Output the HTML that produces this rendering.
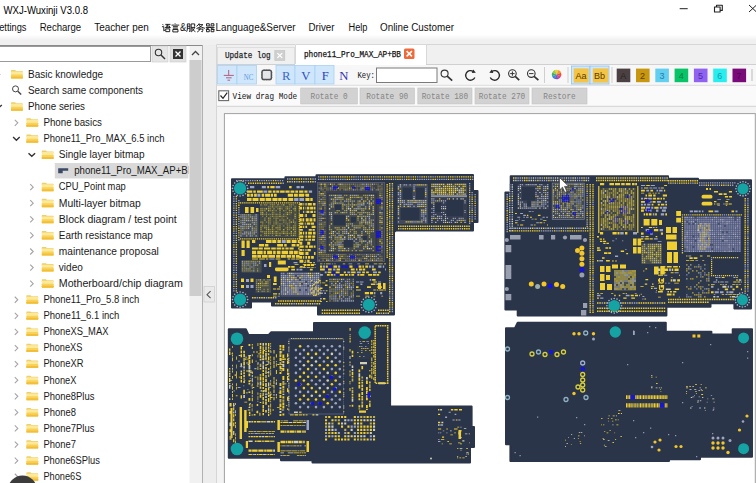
<!DOCTYPE html>
<html><head><meta charset="utf-8"><title>WXJ-Wuxinji V3.0.8</title>
<style>
html,body{margin:0;padding:0;background:#f0f0f0;overflow:hidden}
body{width:756px;height:483px;position:relative;font-family:"Liberation Sans", sans-serif;}
svg{position:absolute;left:0;top:0;display:block}
</style></head><body>
<svg width="756" height="483" viewBox="0 0 756 483">
<rect x="0" y="0" width="756" height="483" fill="#f0f0f0"/>
<defs><linearGradient id="mg" x1="0" y1="0" x2="0" y2="1"><stop offset="0" stop-color="#fff"/><stop offset="1" stop-color="#f0f0f0"/></linearGradient></defs>
<rect x="0" y="0" width="756" height="35" fill="#ffffff"/><rect x="0" y="34.5" width="756" height="6" fill="url(#mg)"/>
<text x="3.5" y="10" font-family='"Liberation Sans", sans-serif' font-size="10" fill="#000" dominant-baseline="central" textLength="84.5" lengthAdjust="spacingAndGlyphs" >WXJ-Wuxinji V3.0.8</text>
<path d="M679.7 8.7h8" stroke="#222" stroke-width="1" fill="none"/>
<path d="M714.5 7h5.6v5h-5.6z M716.5 7v-1.8h5.8v5.2h-2.2" stroke="#222" stroke-width="1.1" fill="none" stroke-linejoin="round"/>
<path d="M749 5l7.5 7M756.5 5l-7.5 7" stroke="#222" stroke-width="1" fill="none"/>
<text x="-7" y="27.5" font-family='"Liberation Sans", sans-serif' font-size="10" fill="#111" dominant-baseline="central" textLength="33.5" lengthAdjust="spacingAndGlyphs" >Settings</text>
<text x="39.7" y="27.5" font-family='"Liberation Sans", sans-serif' font-size="10" fill="#111" dominant-baseline="central" textLength="41.5" lengthAdjust="spacingAndGlyphs" >Recharge</text>
<text x="94.2" y="27.5" font-family='"Liberation Sans", sans-serif' font-size="10" fill="#111" dominant-baseline="central" textLength="54.5" lengthAdjust="spacingAndGlyphs" >Teacher pen</text>
<path transform="translate(161.6 23) scale(0.9199999999999999)" d="M1 1.3l1.2 1.2M.4 4h2v4.6l1.5-1.3M4 1.5h5.6M6.6 1.5L5.6 5M4.6 3.3h4v1.7M3.6 5h6.3M4.5 6.4h4.3v3h-4.3z" fill="none" stroke="#111" stroke-width="1.0"/>
<path transform="translate(170.8 23) scale(0.9199999999999999)" d="M4.5 .4l1 1M.8 2.3h8.4M2.3 4h5.4M2.3 5.6h5.4M2.2 7.1h5.6v2.6h-5.6z" fill="none" stroke="#111" stroke-width="1.0"/>
<text x="180" y="27.5" font-family='"Liberation Sans", sans-serif' font-size="10" fill="#111" dominant-baseline="central" textLength="6.2" lengthAdjust="spacingAndGlyphs" >&amp;</text>
<path transform="translate(186.4 23) scale(0.9199999999999999)" d="M1 1h2.8v8.4l-.8-.5M1 1v5.5q0 2-.8 3M1 3.5h2.8M1 5.8h2.8M5.2 1h3.8v2.5l-.8-.2M5.2 1v8.6M5.2 4.8h4.3M9 4.8q-1 3-3.5 4.7M6 5.5q1.5 3 3.8 4" fill="none" stroke="#111" stroke-width="1.0"/>
<path transform="translate(196 23) scale(0.9199999999999999)" d="M3.5 .4q-1 2-3 3.3M3 1.8h4.5q-2 3-7 4.2M3.2 2.6q2.5 2.4 6.5 3.2M2 6.6h5.5q0 2-.7 3l-1-.4M4.6 5.3q0 3-3.3 4.5" fill="none" stroke="#111" stroke-width="1.0"/>
<path transform="translate(205.6 23) scale(0.9199999999999999)" d="M1 .8h3v2.4h-3zM6 .8h3v2.4h-3zM.3 4.8h9.4M5 3.6q-1 2.5-4.7 3.2M5 4.8q1.5 1.8 4.7 2.2M1 7h3v2.5h-3zM6 7h3v2.5h-3z" fill="none" stroke="#111" stroke-width="1.0"/>
<text x="215.5" y="27.5" font-family='"Liberation Sans", sans-serif' font-size="10" fill="#111" dominant-baseline="central" textLength="80" lengthAdjust="spacingAndGlyphs" >Language&amp;Server</text>
<text x="308.5" y="27.5" font-family='"Liberation Sans", sans-serif' font-size="10" fill="#111" dominant-baseline="central" textLength="26" lengthAdjust="spacingAndGlyphs" >Driver</text>
<text x="348.5" y="27.5" font-family='"Liberation Sans", sans-serif' font-size="10" fill="#111" dominant-baseline="central" textLength="19" lengthAdjust="spacingAndGlyphs" >Help</text>
<text x="380" y="27.5" font-family='"Liberation Sans", sans-serif' font-size="10" fill="#111" dominant-baseline="central" textLength="74" lengthAdjust="spacingAndGlyphs" >Online Customer</text>
<rect x="0" y="45" width="202" height="438" fill="#ffffff"/>
<path d="M0 45.5H202.3" stroke="#8a8a8a" stroke-width="1" fill="none"/><path d="M202.3 45V483" stroke="#a2a2a2" stroke-width="1" fill="none"/>
<rect x="-1" y="46.5" width="151.5" height="15" fill="#fff" stroke="#9a9a9a" stroke-width="1"/>
<rect x="152" y="46" width="16" height="16" fill="#e6e6e6" stroke="#c8c8c8" stroke-width="0.6"/>
<circle cx="158.5" cy="52.5" r="3.2" fill="none" stroke="#333" stroke-width="1.1"/><path d="M161 55l4 4" stroke="#333" stroke-width="1.5"/>
<rect x="170" y="46" width="16" height="16" fill="#e0e0e0" stroke="#c8c8c8" stroke-width="0.6"/>
<rect x="173" y="49" width="10" height="10" fill="#333"/><path d="M175.5 51.5l5 5M180.5 51.5l-5 5" stroke="#fff" stroke-width="1.4"/>
<rect x="189.5" y="46" width="12.5" height="437" fill="#f1f1f1"/>
<rect x="189.5" y="60" width="12" height="236" fill="#cdcdcd"/>
<path d="M192 55l3.5-3.5l3.5 3.5" stroke="#444" stroke-width="1.3" fill="none"/>
<path d="M11.0 72.3v-1.7q0-.5 .5-.5h3.6l1 .9h6.2q.5 0 .5 .5v.8z" fill="#efcf6a"/><rect x="11.0" y="71.6" width="11.8" height="6.9" rx=".6" fill="#fce99a"/><rect x="11.0" y="74.5" width="11.8" height="4" rx=".6" fill="#f8d25a"/><rect x="11.0" y="76.5" width="11.8" height="2" rx=".5" fill="#f3bf38"/>
<path d="M-3.1 71.5l3 3l-3 3" stroke="#a4a4a4" stroke-width="1.1" fill="none"/>
<text x="28.0" y="74.3" font-family='"Liberation Sans", sans-serif' font-size="10" fill="#1a1a1a" dominant-baseline="central" textLength="75" lengthAdjust="spacingAndGlyphs" >Basic knowledge</text>
<circle cx="15.5" cy="88.89" r="3" fill="none" stroke="#444" stroke-width="1"/><path d="M17.8 91.19l3.4 3.4" stroke="#444" stroke-width="1.4"/>
<text x="28.0" y="90.39" font-family='"Liberation Sans", sans-serif' font-size="10" fill="#1a1a1a" dominant-baseline="central" textLength="115" lengthAdjust="spacingAndGlyphs" >Search same components</text>
<path d="M11.0 104.47999999999999v-1.7q0-.5 .5-.5h3.6l1 .9h6.2q.5 0 .5 .5v.8z" fill="#efcf6a"/><rect x="11.0" y="103.77999999999999" width="11.8" height="6.9" rx=".6" fill="#fce99a"/><rect x="11.0" y="106.67999999999999" width="11.8" height="4" rx=".6" fill="#f8d25a"/><rect x="11.0" y="108.67999999999999" width="11.8" height="2" rx=".5" fill="#f3bf38"/>
<path d="M-4.8 104.88l3.3 3.2l3.3-3.2" stroke="#333" stroke-width="1.4" fill="none"/>
<text x="28.0" y="106.47999999999999" font-family='"Liberation Sans", sans-serif' font-size="10" fill="#1a1a1a" dominant-baseline="central" textLength="57" lengthAdjust="spacingAndGlyphs" >Phone series</text>
<path d="M26.4 120.57v-1.7q0-.5 .5-.5h3.6l1 .9h6.2q.5 0 .5 .5v.8z" fill="#efcf6a"/><rect x="26.4" y="119.86999999999999" width="11.8" height="6.9" rx=".6" fill="#fce99a"/><rect x="26.4" y="122.77" width="11.8" height="4" rx=".6" fill="#f8d25a"/><rect x="26.4" y="124.77" width="11.8" height="2" rx=".5" fill="#f3bf38"/>
<path d="M14.799999999999999 119.77l3 3l-3 3" stroke="#a4a4a4" stroke-width="1.1" fill="none"/>
<text x="43.4" y="122.57" font-family='"Liberation Sans", sans-serif' font-size="10" fill="#1a1a1a" dominant-baseline="central" textLength="58.5" lengthAdjust="spacingAndGlyphs" >Phone basics</text>
<path d="M26.4 136.66v-1.7q0-.5 .5-.5h3.6l1 .9h6.2q.5 0 .5 .5v.8z" fill="#efcf6a"/><rect x="26.4" y="135.96" width="11.8" height="6.9" rx=".6" fill="#fce99a"/><rect x="26.4" y="138.85999999999999" width="11.8" height="4" rx=".6" fill="#f8d25a"/><rect x="26.4" y="140.85999999999999" width="11.8" height="2" rx=".5" fill="#f3bf38"/>
<path d="M13.099999999999998 137.06l3.3 3.2l3.3-3.2" stroke="#333" stroke-width="1.4" fill="none"/>
<text x="43.4" y="138.66" font-family='"Liberation Sans", sans-serif' font-size="10" fill="#1a1a1a" dominant-baseline="central" textLength="121" lengthAdjust="spacingAndGlyphs" >Phone11_Pro_MAX_6.5 inch</text>
<path d="M41.8 152.75v-1.7q0-.5 .5-.5h3.6l1 .9h6.2q.5 0 .5 .5v.8z" fill="#efcf6a"/><rect x="41.8" y="152.05" width="11.8" height="6.9" rx=".6" fill="#fce99a"/><rect x="41.8" y="154.95" width="11.8" height="4" rx=".6" fill="#f8d25a"/><rect x="41.8" y="156.95" width="11.8" height="2" rx=".5" fill="#f3bf38"/>
<path d="M28.499999999999996 153.15l3.3 3.2l3.3-3.2" stroke="#333" stroke-width="1.4" fill="none"/>
<text x="58.8" y="154.75" font-family='"Liberation Sans", sans-serif' font-size="10" fill="#1a1a1a" dominant-baseline="central" textLength="85.7" lengthAdjust="spacingAndGlyphs" >Single layer bitmap</text>
<rect x="54.8" y="163.03999999999996" width="133.6" height="15.4" fill="#d9d9d9"/>
<clipPath id="cpf"><rect x="54.8" y="162.83999999999997" width="133.6" height="16"/></clipPath>
<path d="M58.2 168.33999999999997h10v2.5h-5.5v2.5h-4.5z" fill="#3c4a66"/>
<text x="74.2" y="170.83999999999997" font-family='"Liberation Sans", sans-serif' font-size="10" fill="#1a1a1a" dominant-baseline="central" textLength="120" lengthAdjust="spacingAndGlyphs" clip-path="url(#cpf)">phone11_Pro_MAX_AP+BB</text>
<path d="M41.8 184.93v-1.7q0-.5 .5-.5h3.6l1 .9h6.2q.5 0 .5 .5v.8z" fill="#efcf6a"/><rect x="41.8" y="184.23000000000002" width="11.8" height="6.9" rx=".6" fill="#fce99a"/><rect x="41.8" y="187.13" width="11.8" height="4" rx=".6" fill="#f8d25a"/><rect x="41.8" y="189.13" width="11.8" height="2" rx=".5" fill="#f3bf38"/>
<path d="M30.199999999999996 184.13l3 3l-3 3" stroke="#a4a4a4" stroke-width="1.1" fill="none"/>
<text x="58.8" y="186.93" font-family='"Liberation Sans", sans-serif' font-size="10" fill="#1a1a1a" dominant-baseline="central" textLength="67" lengthAdjust="spacingAndGlyphs" >CPU_Point map</text>
<path d="M41.8 201.01999999999998v-1.7q0-.5 .5-.5h3.6l1 .9h6.2q.5 0 .5 .5v.8z" fill="#efcf6a"/><rect x="41.8" y="200.32" width="11.8" height="6.9" rx=".6" fill="#fce99a"/><rect x="41.8" y="203.21999999999997" width="11.8" height="4" rx=".6" fill="#f8d25a"/><rect x="41.8" y="205.21999999999997" width="11.8" height="2" rx=".5" fill="#f3bf38"/>
<path d="M30.199999999999996 200.21999999999997l3 3l-3 3" stroke="#a4a4a4" stroke-width="1.1" fill="none"/>
<text x="58.8" y="203.01999999999998" font-family='"Liberation Sans", sans-serif' font-size="10" fill="#1a1a1a" dominant-baseline="central" textLength="82" lengthAdjust="spacingAndGlyphs" >Multi-layer bitmap</text>
<path d="M41.8 217.11v-1.7q0-.5 .5-.5h3.6l1 .9h6.2q.5 0 .5 .5v.8z" fill="#efcf6a"/><rect x="41.8" y="216.41000000000003" width="11.8" height="6.9" rx=".6" fill="#fce99a"/><rect x="41.8" y="219.31" width="11.8" height="4" rx=".6" fill="#f8d25a"/><rect x="41.8" y="221.31" width="11.8" height="2" rx=".5" fill="#f3bf38"/>
<path d="M30.199999999999996 216.31l3 3l-3 3" stroke="#a4a4a4" stroke-width="1.1" fill="none"/>
<text x="58.8" y="219.11" font-family='"Liberation Sans", sans-serif' font-size="10" fill="#1a1a1a" dominant-baseline="central" textLength="118" lengthAdjust="spacingAndGlyphs" >Block diagram / test point</text>
<path d="M41.8 233.2v-1.7q0-.5 .5-.5h3.6l1 .9h6.2q.5 0 .5 .5v.8z" fill="#efcf6a"/><rect x="41.8" y="232.5" width="11.8" height="6.9" rx=".6" fill="#fce99a"/><rect x="41.8" y="235.39999999999998" width="11.8" height="4" rx=".6" fill="#f8d25a"/><rect x="41.8" y="237.39999999999998" width="11.8" height="2" rx=".5" fill="#f3bf38"/>
<path d="M30.199999999999996 232.39999999999998l3 3l-3 3" stroke="#a4a4a4" stroke-width="1.1" fill="none"/>
<text x="58.8" y="235.2" font-family='"Liberation Sans", sans-serif' font-size="10" fill="#1a1a1a" dominant-baseline="central" textLength="94" lengthAdjust="spacingAndGlyphs" >Earth resistance map</text>
<path d="M41.8 249.29000000000002v-1.7q0-.5 .5-.5h3.6l1 .9h6.2q.5 0 .5 .5v.8z" fill="#efcf6a"/><rect x="41.8" y="248.59000000000003" width="11.8" height="6.9" rx=".6" fill="#fce99a"/><rect x="41.8" y="251.49" width="11.8" height="4" rx=".6" fill="#f8d25a"/><rect x="41.8" y="253.49" width="11.8" height="2" rx=".5" fill="#f3bf38"/>
<path d="M30.199999999999996 248.49l3 3l-3 3" stroke="#a4a4a4" stroke-width="1.1" fill="none"/>
<text x="58.8" y="251.29000000000002" font-family='"Liberation Sans", sans-serif' font-size="10" fill="#1a1a1a" dominant-baseline="central" textLength="100" lengthAdjust="spacingAndGlyphs" >maintenance proposal</text>
<path d="M41.8 265.38v-1.7q0-.5 .5-.5h3.6l1 .9h6.2q.5 0 .5 .5v.8z" fill="#efcf6a"/><rect x="41.8" y="264.68" width="11.8" height="6.9" rx=".6" fill="#fce99a"/><rect x="41.8" y="267.58" width="11.8" height="4" rx=".6" fill="#f8d25a"/><rect x="41.8" y="269.58" width="11.8" height="2" rx=".5" fill="#f3bf38"/>
<path d="M30.199999999999996 264.58l3 3l-3 3" stroke="#a4a4a4" stroke-width="1.1" fill="none"/>
<text x="58.8" y="267.38" font-family='"Liberation Sans", sans-serif' font-size="10" fill="#1a1a1a" dominant-baseline="central" textLength="24" lengthAdjust="spacingAndGlyphs" >video</text>
<path d="M41.8 281.46999999999997v-1.7q0-.5 .5-.5h3.6l1 .9h6.2q.5 0 .5 .5v.8z" fill="#efcf6a"/><rect x="41.8" y="280.77" width="11.8" height="6.9" rx=".6" fill="#fce99a"/><rect x="41.8" y="283.66999999999996" width="11.8" height="4" rx=".6" fill="#f8d25a"/><rect x="41.8" y="285.66999999999996" width="11.8" height="2" rx=".5" fill="#f3bf38"/>
<path d="M30.199999999999996 280.66999999999996l3 3l-3 3" stroke="#a4a4a4" stroke-width="1.1" fill="none"/>
<text x="58.8" y="283.46999999999997" font-family='"Liberation Sans", sans-serif' font-size="10" fill="#1a1a1a" dominant-baseline="central" textLength="124" lengthAdjust="spacingAndGlyphs" >Motherboard/chip diagram</text>
<path d="M26.4 297.56v-1.7q0-.5 .5-.5h3.6l1 .9h6.2q.5 0 .5 .5v.8z" fill="#efcf6a"/><rect x="26.4" y="296.86" width="11.8" height="6.9" rx=".6" fill="#fce99a"/><rect x="26.4" y="299.76" width="11.8" height="4" rx=".6" fill="#f8d25a"/><rect x="26.4" y="301.76" width="11.8" height="2" rx=".5" fill="#f3bf38"/>
<path d="M14.799999999999999 296.76l3 3l-3 3" stroke="#a4a4a4" stroke-width="1.1" fill="none"/>
<text x="43.4" y="299.56" font-family='"Liberation Sans", sans-serif' font-size="10" fill="#1a1a1a" dominant-baseline="central" textLength="96" lengthAdjust="spacingAndGlyphs" >Phone11_Pro_5.8 inch</text>
<path d="M26.4 313.65v-1.7q0-.5 .5-.5h3.6l1 .9h6.2q.5 0 .5 .5v.8z" fill="#efcf6a"/><rect x="26.4" y="312.95" width="11.8" height="6.9" rx=".6" fill="#fce99a"/><rect x="26.4" y="315.84999999999997" width="11.8" height="4" rx=".6" fill="#f8d25a"/><rect x="26.4" y="317.84999999999997" width="11.8" height="2" rx=".5" fill="#f3bf38"/>
<path d="M14.799999999999999 312.84999999999997l3 3l-3 3" stroke="#a4a4a4" stroke-width="1.1" fill="none"/>
<text x="43.4" y="315.65" font-family='"Liberation Sans", sans-serif' font-size="10" fill="#1a1a1a" dominant-baseline="central" textLength="76" lengthAdjust="spacingAndGlyphs" >Phone11_6.1 inch</text>
<path d="M26.4 329.74v-1.7q0-.5 .5-.5h3.6l1 .9h6.2q.5 0 .5 .5v.8z" fill="#efcf6a"/><rect x="26.4" y="329.04" width="11.8" height="6.9" rx=".6" fill="#fce99a"/><rect x="26.4" y="331.94" width="11.8" height="4" rx=".6" fill="#f8d25a"/><rect x="26.4" y="333.94" width="11.8" height="2" rx=".5" fill="#f3bf38"/>
<path d="M14.799999999999999 328.94l3 3l-3 3" stroke="#a4a4a4" stroke-width="1.1" fill="none"/>
<text x="43.4" y="331.74" font-family='"Liberation Sans", sans-serif' font-size="10" fill="#1a1a1a" dominant-baseline="central" textLength="65" lengthAdjust="spacingAndGlyphs" >PhoneXS_MAX</text>
<path d="M26.4 345.83v-1.7q0-.5 .5-.5h3.6l1 .9h6.2q.5 0 .5 .5v.8z" fill="#efcf6a"/><rect x="26.4" y="345.13" width="11.8" height="6.9" rx=".6" fill="#fce99a"/><rect x="26.4" y="348.03" width="11.8" height="4" rx=".6" fill="#f8d25a"/><rect x="26.4" y="350.03" width="11.8" height="2" rx=".5" fill="#f3bf38"/>
<path d="M14.799999999999999 345.03l3 3l-3 3" stroke="#a4a4a4" stroke-width="1.1" fill="none"/>
<text x="43.4" y="347.83" font-family='"Liberation Sans", sans-serif' font-size="10" fill="#1a1a1a" dominant-baseline="central" textLength="39" lengthAdjust="spacingAndGlyphs" >PhoneXS</text>
<path d="M26.4 361.92v-1.7q0-.5 .5-.5h3.6l1 .9h6.2q.5 0 .5 .5v.8z" fill="#efcf6a"/><rect x="26.4" y="361.22" width="11.8" height="6.9" rx=".6" fill="#fce99a"/><rect x="26.4" y="364.12" width="11.8" height="4" rx=".6" fill="#f8d25a"/><rect x="26.4" y="366.12" width="11.8" height="2" rx=".5" fill="#f3bf38"/>
<path d="M14.799999999999999 361.12l3 3l-3 3" stroke="#a4a4a4" stroke-width="1.1" fill="none"/>
<text x="43.4" y="363.92" font-family='"Liberation Sans", sans-serif' font-size="10" fill="#1a1a1a" dominant-baseline="central" textLength="40" lengthAdjust="spacingAndGlyphs" >PhoneXR</text>
<path d="M26.4 378.01v-1.7q0-.5 .5-.5h3.6l1 .9h6.2q.5 0 .5 .5v.8z" fill="#efcf6a"/><rect x="26.4" y="377.31" width="11.8" height="6.9" rx=".6" fill="#fce99a"/><rect x="26.4" y="380.21" width="11.8" height="4" rx=".6" fill="#f8d25a"/><rect x="26.4" y="382.21" width="11.8" height="2" rx=".5" fill="#f3bf38"/>
<path d="M14.799999999999999 377.21l3 3l-3 3" stroke="#a4a4a4" stroke-width="1.1" fill="none"/>
<text x="43.4" y="380.01" font-family='"Liberation Sans", sans-serif' font-size="10" fill="#1a1a1a" dominant-baseline="central" textLength="33" lengthAdjust="spacingAndGlyphs" >PhoneX</text>
<path d="M26.4 394.1v-1.7q0-.5 .5-.5h3.6l1 .9h6.2q.5 0 .5 .5v.8z" fill="#efcf6a"/><rect x="26.4" y="393.40000000000003" width="11.8" height="6.9" rx=".6" fill="#fce99a"/><rect x="26.4" y="396.3" width="11.8" height="4" rx=".6" fill="#f8d25a"/><rect x="26.4" y="398.3" width="11.8" height="2" rx=".5" fill="#f3bf38"/>
<path d="M14.799999999999999 393.3l3 3l-3 3" stroke="#a4a4a4" stroke-width="1.1" fill="none"/>
<text x="43.4" y="396.1" font-family='"Liberation Sans", sans-serif' font-size="10" fill="#1a1a1a" dominant-baseline="central" textLength="51" lengthAdjust="spacingAndGlyphs" >Phone8Plus</text>
<path d="M26.4 410.19v-1.7q0-.5 .5-.5h3.6l1 .9h6.2q.5 0 .5 .5v.8z" fill="#efcf6a"/><rect x="26.4" y="409.49" width="11.8" height="6.9" rx=".6" fill="#fce99a"/><rect x="26.4" y="412.39" width="11.8" height="4" rx=".6" fill="#f8d25a"/><rect x="26.4" y="414.39" width="11.8" height="2" rx=".5" fill="#f3bf38"/>
<path d="M14.799999999999999 409.39l3 3l-3 3" stroke="#a4a4a4" stroke-width="1.1" fill="none"/>
<text x="43.4" y="412.19" font-family='"Liberation Sans", sans-serif' font-size="10" fill="#1a1a1a" dominant-baseline="central" textLength="32.5" lengthAdjust="spacingAndGlyphs" >Phone8</text>
<path d="M26.4 426.28000000000003v-1.7q0-.5 .5-.5h3.6l1 .9h6.2q.5 0 .5 .5v.8z" fill="#efcf6a"/><rect x="26.4" y="425.58000000000004" width="11.8" height="6.9" rx=".6" fill="#fce99a"/><rect x="26.4" y="428.48" width="11.8" height="4" rx=".6" fill="#f8d25a"/><rect x="26.4" y="430.48" width="11.8" height="2" rx=".5" fill="#f3bf38"/>
<path d="M14.799999999999999 425.48l3 3l-3 3" stroke="#a4a4a4" stroke-width="1.1" fill="none"/>
<text x="43.4" y="428.28000000000003" font-family='"Liberation Sans", sans-serif' font-size="10" fill="#1a1a1a" dominant-baseline="central" textLength="51" lengthAdjust="spacingAndGlyphs" >Phone7Plus</text>
<path d="M26.4 442.37v-1.7q0-.5 .5-.5h3.6l1 .9h6.2q.5 0 .5 .5v.8z" fill="#efcf6a"/><rect x="26.4" y="441.67" width="11.8" height="6.9" rx=".6" fill="#fce99a"/><rect x="26.4" y="444.57" width="11.8" height="4" rx=".6" fill="#f8d25a"/><rect x="26.4" y="446.57" width="11.8" height="2" rx=".5" fill="#f3bf38"/>
<path d="M14.799999999999999 441.57l3 3l-3 3" stroke="#a4a4a4" stroke-width="1.1" fill="none"/>
<text x="43.4" y="444.37" font-family='"Liberation Sans", sans-serif' font-size="10" fill="#1a1a1a" dominant-baseline="central" textLength="32.5" lengthAdjust="spacingAndGlyphs" >Phone7</text>
<path d="M26.4 458.46v-1.7q0-.5 .5-.5h3.6l1 .9h6.2q.5 0 .5 .5v.8z" fill="#efcf6a"/><rect x="26.4" y="457.76" width="11.8" height="6.9" rx=".6" fill="#fce99a"/><rect x="26.4" y="460.65999999999997" width="11.8" height="4" rx=".6" fill="#f8d25a"/><rect x="26.4" y="462.65999999999997" width="11.8" height="2" rx=".5" fill="#f3bf38"/>
<path d="M14.799999999999999 457.65999999999997l3 3l-3 3" stroke="#a4a4a4" stroke-width="1.1" fill="none"/>
<text x="43.4" y="460.46" font-family='"Liberation Sans", sans-serif' font-size="10" fill="#1a1a1a" dominant-baseline="central" textLength="56.5" lengthAdjust="spacingAndGlyphs" >Phone6SPlus</text>
<path d="M26.4 474.55v-1.7q0-.5 .5-.5h3.6l1 .9h6.2q.5 0 .5 .5v.8z" fill="#efcf6a"/><rect x="26.4" y="473.85" width="11.8" height="6.9" rx=".6" fill="#fce99a"/><rect x="26.4" y="476.75" width="11.8" height="4" rx=".6" fill="#f8d25a"/><rect x="26.4" y="478.75" width="11.8" height="2" rx=".5" fill="#f3bf38"/>
<path d="M14.799999999999999 473.75l3 3l-3 3" stroke="#a4a4a4" stroke-width="1.1" fill="none"/>
<text x="43.4" y="476.55" font-family='"Liberation Sans", sans-serif' font-size="10" fill="#1a1a1a" dominant-baseline="central" textLength="38" lengthAdjust="spacingAndGlyphs" >Phone6S</text>
<circle cx="22.5" cy="490" r="14.5" fill="#3c3c3c"/>
<rect x="203" y="45" width="13.5" height="438" fill="#ededed"/>
<rect x="204" y="286.5" width="10.5" height="15.5" fill="#e9e9e9" stroke="#cfcfcf" stroke-width="0.8"/>
<path d="M210.6 291.2l-3.6 3.5l3.6 3.5" stroke="#555" stroke-width="1.1" fill="none"/>
<path d="M216.5 483V44.5H756" stroke="#d6d6d6" stroke-width="1" fill="none"/>
<rect x="217" y="45" width="539" height="19.5" fill="#f0f0f0"/><rect x="217.5" y="47.5" width="77" height="17" fill="#f0f0f0" stroke="#dadada" stroke-width="0.8"/>
<rect x="295" y="44" width="131" height="21" fill="#ffffff"/>
<path d="M217 64.5H295M426 64.5H756" stroke="#d0d0d0" stroke-width="1"/>
<path d="M295.5 64V44.5H426.5V64" stroke="#d8d8d8" stroke-width="1" fill="none"/>
<text x="225" y="55.5" font-family='"Liberation Mono", monospace' font-size="9.3" fill="#222" dominant-baseline="central" textLength="45.6" lengthAdjust="spacingAndGlyphs" stroke="#222" stroke-width="0.25">Update log</text>
<rect x="274.8" y="50.5" width="10" height="10" fill="#cfcfcf" stroke="#c0c0c0" stroke-width="0.6"/><path d="M277.4 53.1l4.8 4.8M282.2 53.1l-4.8 4.8" stroke="#fff" stroke-width="1.3"/>
<text x="304" y="54.5" font-family='"Liberation Mono", monospace' font-size="9.3" fill="#111" dominant-baseline="central" textLength="97" lengthAdjust="spacingAndGlyphs" stroke="#111" stroke-width="0.25">phone11_Pro_MAX_AP+BB</text>
<rect x="404" y="48.5" width="10.5" height="10.5" rx="1.5" fill="#ee6a3a"/><path d="M406.6 51.1l5.3 5.3M411.9 51.1l-5.3 5.3" stroke="#fff" stroke-width="1.5"/>
<rect x="217" y="65" width="539" height="20.5" fill="#f7f7f7"/><rect x="217" y="85.5" width="539" height="20.5" fill="#fafafa"/><rect x="217" y="106.5" width="539" height="377" fill="#f3f3f3"/>
<path d="M217 85.3H756" stroke="#dcdcdc" stroke-width="1"/><path d="M217 106.3H756" stroke="#d2d2d2" stroke-width="1"/>
<rect x="217.5" y="65.5" width="19.5" height="18.5" fill="#cfe6fb" stroke="#a9d1f5" stroke-width="0.8"/>
<rect x="237" y="65.5" width="19.5" height="18.5" fill="#cfe6fb" stroke="#a9d1f5" stroke-width="0.8"/>
<rect x="276" y="65.5" width="19" height="18.5" fill="#cfe6fb" stroke="#a9d1f5" stroke-width="0.8"/>
<rect x="295" y="65.5" width="20" height="18.5" fill="#cfe6fb" stroke="#a9d1f5" stroke-width="0.8"/>
<rect x="315" y="65.5" width="19" height="18.5" fill="#cfe6fb" stroke="#a9d1f5" stroke-width="0.8"/>
<path d="M228.7 70v5.4M223.8 75.4h10M226 77.8h5.6M227.5 80.2h2.6" stroke="#b0607e" stroke-width="1" fill="none"/>
<text x="248.5" y="76.5" font-family='"Liberation Serif", serif' font-size="8.5" fill="#5b9be0" text-anchor="middle" dominant-baseline="central" textLength="9.5" lengthAdjust="spacingAndGlyphs">NC</text>
<rect x="262" y="70.2" width="9.4" height="9.4" rx="1.8" fill="#e4e6e8" stroke="#50545a" stroke-width="1.5"/><path d="M261 72.5h11.4M261 75h11.4M261 77.5h11.4M264.2 69.2v11.4M266.7 69.2v11.4M269.2 69.2v11.4" stroke="#50545a" stroke-width="0.5" stroke-dasharray="1 9.4"/>
<text x="286.3" y="76" font-family='"Liberation Serif", serif' font-size="12.7" fill="#3a68c8" text-anchor="middle" dominant-baseline="central">R</text>
<text x="305.8" y="76" font-family='"Liberation Serif", serif' font-size="12.7" fill="#3050c0" text-anchor="middle" dominant-baseline="central">V</text>
<text x="325.2" y="76" font-family='"Liberation Serif", serif' font-size="12.7" fill="#2b3fc0" text-anchor="middle" dominant-baseline="central">F</text>
<text x="343.8" y="76" font-family='"Liberation Serif", serif' font-size="12.7" fill="#3030b8" text-anchor="middle" dominant-baseline="central">N</text>
<text x="357.4" y="75" font-family='"Liberation Mono", monospace' font-size="9.3" fill="#111" dominant-baseline="central" textLength="17.5" lengthAdjust="spacingAndGlyphs" >Key:</text>
<rect x="376.5" y="68" width="60.5" height="14.5" fill="#fff" stroke="#7a7a7a" stroke-width="1"/>
<circle cx="444.6" cy="73.6" r="3.5" fill="none" stroke="#333" stroke-width="1.1"/><path d="M447.2 76.2l5 4.4" stroke="#333" stroke-width="1.7"/>
<path d="M473.25 71.47A4.8 4.8 0 1 0 474.85 77.43" stroke="#2a2a2a" stroke-width="1.35" fill="none"/><path d="M475.8 72.7L473.3 69.5L471.8 73.1Z" fill="#2a2a2a"/>
<path d="M491.85 71.47A4.8 4.8 0 1 1 490.25 77.43" stroke="#2a2a2a" stroke-width="1.35" fill="none"/><path d="M489.3 72.7L491.8 69.5L493.3 73.1Z" fill="#2a2a2a"/>
<circle cx="512.4" cy="73.6" r="3.8" fill="none" stroke="#333" stroke-width="1.1"/><path d="M515.2 76.4l4 3.8" stroke="#333" stroke-width="1.7"/><path d="M510.2 73.6h4.4M512.4 71.4v4.4" stroke="#333" stroke-width="1"/>
<circle cx="531.3" cy="73.6" r="3.8" fill="none" stroke="#333" stroke-width="1.1"/><path d="M534.1 76.4l4.3 3.8" stroke="#333" stroke-width="1.7"/><path d="M529.1 73.6h4.4" stroke="#333" stroke-width="1"/>
<path d="M544.5 67v16M568 67v16M612 67v16" stroke="#cfcfcf" stroke-width="1"/>
<defs><linearGradient id="cw" x1="0" y1="0" x2="1" y2="1"><stop offset="0" stop-color="#f6d23a"/><stop offset="0.35" stop-color="#f08a2a"/><stop offset="0.6" stop-color="#e0407a"/><stop offset="0.85" stop-color="#7a50c8"/><stop offset="1" stop-color="#3a9ad8"/></linearGradient></defs>
<path d="M556.6 74.5L554.80 70.05A4.8 4.8 0 0 1 558.63 70.15Z" fill="#f2cf3a"/><path d="M556.6 74.5L558.48 70.08A4.8 4.8 0 0 1 561.11 72.86Z" fill="#f29a30"/><path d="M556.6 74.5L561.05 72.70A4.8 4.8 0 0 1 560.95 76.53Z" fill="#e8503c"/><path d="M556.6 74.5L561.02 76.38A4.8 4.8 0 0 1 558.24 79.01Z" fill="#d8409a"/><path d="M556.6 74.5L558.40 78.95A4.8 4.8 0 0 1 554.57 78.85Z" fill="#7a55c8"/><path d="M556.6 74.5L554.72 78.92A4.8 4.8 0 0 1 552.09 76.14Z" fill="#3a8ad8"/><path d="M556.6 74.5L552.15 76.30A4.8 4.8 0 0 1 552.25 72.47Z" fill="#38b070"/><path d="M556.6 74.5L552.18 72.62A4.8 4.8 0 0 1 554.96 69.99Z" fill="#9ccc3c"/>
<rect x="571.5" y="66" width="18.5" height="18" fill="#cfe6fb" stroke="#8ec4f2" stroke-width="0.8"/><rect x="590" y="66" width="19" height="18" fill="#cfe6fb" stroke="#8ec4f2" stroke-width="0.8"/>
<rect x="573.7" y="68.4" width="15" height="14.2" fill="#f3c446"/><rect x="592.8" y="68.4" width="15.6" height="14.2" fill="#f3c446"/>
<text x="575.5" y="75.5" font-family='"Liberation Sans", sans-serif' font-size="9" fill="#5a3a00" dominant-baseline="central" textLength="11" lengthAdjust="spacingAndGlyphs" >Aa</text>
<text x="594" y="75.5" font-family='"Liberation Sans", sans-serif' font-size="9" fill="#5a3a00" dominant-baseline="central" textLength="11" lengthAdjust="spacingAndGlyphs" >Bb</text>
<rect x="616.7" y="68.6" width="13.6" height="13.6" fill="#4b4142"/>
<text x="623.3" y="75.5" font-family='"Liberation Sans", sans-serif' font-size="9" fill="#2a2224" text-anchor="middle" dominant-baseline="central">A</text>
<rect x="636.0" y="68.6" width="13.6" height="13.6" fill="#c9960f"/>
<text x="642.6" y="75.5" font-family='"Liberation Sans", sans-serif' font-size="9" fill="#5a4000" text-anchor="middle" dominant-baseline="central">2</text>
<rect x="655.3" y="68.6" width="13.6" height="13.6" fill="#62cff1"/>
<text x="661.9" y="75.5" font-family='"Liberation Sans", sans-serif' font-size="9" fill="#2a7aa8" text-anchor="middle" dominant-baseline="central">3</text>
<rect x="674.6" y="68.6" width="13.6" height="13.6" fill="#08c468"/>
<text x="681.2" y="75.5" font-family='"Liberation Sans", sans-serif' font-size="9" fill="#0a7a3a" text-anchor="middle" dominant-baseline="central">4</text>
<rect x="693.9" y="68.6" width="13.6" height="13.6" fill="#8f62f0"/>
<text x="700.5" y="75.5" font-family='"Liberation Sans", sans-serif' font-size="9" fill="#4a2aa8" text-anchor="middle" dominant-baseline="central">5</text>
<rect x="713.2" y="68.6" width="13.6" height="13.6" fill="#28eef0"/>
<text x="719.8" y="75.5" font-family='"Liberation Sans", sans-serif' font-size="9" fill="#1a9aa8" text-anchor="middle" dominant-baseline="central">6</text>
<rect x="732.5" y="68.6" width="13.6" height="13.6" fill="#7a0a7a"/>
<text x="739.1" y="75.5" font-family='"Liberation Sans", sans-serif' font-size="9" fill="#500050" text-anchor="middle" dominant-baseline="central">7</text>
<path d="M752 69v12" stroke="#bbb" stroke-width="1"/>
<rect x="218.8" y="90.8" width="9.8" height="9.8" fill="#fff" stroke="#6a6a6a" stroke-width="1.1"/><path d="M220.5 95.5l2.5 2.8l4.2-5.6" stroke="#222" stroke-width="1.2" fill="none"/>
<text x="232.6" y="96.3" font-family='"Liberation Mono", monospace' font-size="9.3" fill="#111" dominant-baseline="central" textLength="64.5" lengthAdjust="spacingAndGlyphs" >View drag Mode</text>
<rect x="300.7" y="88" width="56.69999999999999" height="16" fill="#d2d2d2" stroke="#c4c4c4" stroke-width="0.6"/>
<text x="310.54999999999995" y="96.3" font-family='"Liberation Mono", monospace' font-size="9.3" fill="#858585" dominant-baseline="central" textLength="37" lengthAdjust="spacingAndGlyphs" >Rotate 0</text>
<rect x="360" y="88" width="54.5" height="16" fill="#d2d2d2" stroke="#c4c4c4" stroke-width="0.6"/>
<text x="366.25" y="96.3" font-family='"Liberation Mono", monospace' font-size="9.3" fill="#858585" dominant-baseline="central" textLength="42" lengthAdjust="spacingAndGlyphs" >Rotate 90</text>
<rect x="417.8" y="88" width="54.19999999999999" height="16" fill="#d2d2d2" stroke="#c4c4c4" stroke-width="0.6"/>
<text x="421.65" y="96.3" font-family='"Liberation Mono", monospace' font-size="9.3" fill="#858585" dominant-baseline="central" textLength="46.5" lengthAdjust="spacingAndGlyphs" >Rotate 180</text>
<rect x="475" y="88" width="54" height="16" fill="#d2d2d2" stroke="#c4c4c4" stroke-width="0.6"/>
<text x="478.75" y="96.3" font-family='"Liberation Mono", monospace' font-size="9.3" fill="#858585" dominant-baseline="central" textLength="46.5" lengthAdjust="spacingAndGlyphs" >Rotate 270</text>
<rect x="532" y="88" width="55" height="16" fill="#d2d2d2" stroke="#c4c4c4" stroke-width="0.6"/>
<text x="543.25" y="96.3" font-family='"Liberation Mono", monospace' font-size="9.3" fill="#858585" dominant-baseline="central" textLength="32.5" lengthAdjust="spacingAndGlyphs" >Restore</text>
<rect x="224.4" y="113.6" width="530.9" height="380" fill="#ffffff" stroke="#a0a0a0" stroke-width="1"/>
<defs><filter id="bl" x="-2%" y="-2%" width="104%" height="104%"><feGaussianBlur stdDeviation="0.45"/></filter></defs>
<g filter="url(#bl)">
<path d="M232.0 179.2 L285.4 179.2 L285.4 177.3 L316.5 177.3 L316.5 175.2 L473.0 175.0 L473.0 191.0 L477.5 191.0 L477.5 222.0 L473.0 222.0 L473.0 230.5 L396.0 230.5 L394.0 232.0 L394.0 314.5 L318.0 314.5 L318.0 305.5 L272.0 305.5 L272.0 301.5 L251.0 301.5 L251.0 307.5 L232.0 307.5Z" fill="#2b3448" stroke="#2b3448" stroke-width="2" stroke-linejoin="round"/>
<rect x="240.0" y="214.0" width="18.5" height="23.2" fill="#4a5058"/>
<rect x="260.0" y="204.0" width="37.5" height="33.2" fill="#4e503f"/>
<rect x="241.5" y="260.4" width="20.1" height="12.1" fill="#4a5050"/>
<rect x="255.6" y="279.0" width="15.4" height="13.7" fill="#4c5048"/>
<rect x="280.5" y="272.5" width="40.5" height="24.3" fill="#454c62"/>
<rect x="317.4" y="182.4" width="67.2" height="79.2" fill="#3a4150" stroke="#5a6078" stroke-width="0.8"/>
<rect x="327.0" y="193.0" width="50.0" height="60.0" fill="#303848"/>
<rect x="328.6" y="194.5" width="46.8" height="57.1" fill="#454a4c"/>
<rect x="333.3" y="215.0" width="12.1" height="10.3" fill="#2b3448"/>
<rect x="351.0" y="217.0" width="5.0" height="5.5" fill="#2b3448"/>
<rect x="343.5" y="240.0" width="9.3" height="7.3" fill="#2b3448"/>
<rect x="335.0" y="204.8" width="6.0" height="5.2" fill="#2b3448"/>
<rect x="362.5" y="236.0" width="4.5" height="4.0" fill="#2b3448"/>
<rect x="329.0" y="278.5" width="25.0" height="23.5" fill="#3d4452"/>
<rect x="397.5" y="184.0" width="30.5" height="40.0" fill="#434a5a"/>
<rect x="402.5" y="187.5" width="10.0" height="12.0" fill="#2b3448"/>
<rect x="416.0" y="187.5" width="8.5" height="12.0" fill="#2b3448"/>
<rect x="400.5" y="208.0" width="19.0" height="12.0" fill="#2b3448"/>
<rect x="431.0" y="183.5" width="36.0" height="11.5" fill="#4b4f50"/>
<rect x="431.0" y="195.2" width="36.0" height="2.0" fill="#8f93a0"/>
<rect x="431.0" y="198.0" width="36.0" height="25.0" fill="#343c50"/>
<rect x="446.5" y="199.5" width="16.5" height="16.5" fill="#2b3448"/>
<rect x="435.0" y="203.0" width="6.0" height="9.0" fill="#2b3448"/>
<path fill="#9ea6c0" d="M236 180h1.3v1.3h-1.3zM238.3 180h1.3v1.3h-1.3zM242.9 180h1.3v1.3h-1.3zM245.2 180h1.3v1.3h-1.3zM247.5 180h1.3v1.3h-1.3zM249.8 180h1.3v1.3h-1.3zM252.1 180h1.3v1.3h-1.3zM254.4 180h1.3v1.3h-1.3zM259 180h1.3v1.3h-1.3zM261.3 180h1.3v1.3h-1.3zM263.6 180h1.3v1.3h-1.3zM268.2 180h1.3v1.3h-1.3zM270.5 180h1.3v1.3h-1.3zM277.4 180h1.3v1.3h-1.3zM279.7 180h1.3v1.3h-1.3zM282 180h1.3v1.3h-1.3zM266.4 182.6h1.4v1.4h-1.4zM282.5 182.6h1.4v1.4h-1.4zM287 178.3h1.4v1.4h-1.4zM289.3 178.3h1.4v1.4h-1.4zM303.1 178.3h1.4v1.4h-1.4zM307.7 178.3h1.4v1.4h-1.4zM312.3 178.3h1.4v1.4h-1.4zM314.6 178.3h1.4v1.4h-1.4zM291.6 181h1.4v1.4h-1.4zM296.2 181h1.4v1.4h-1.4zM305.4 181h1.4v1.4h-1.4zM314.6 181h1.4v1.4h-1.4zM318 176.2h1.4v1.4h-1.4zM329 176.2h1.4v1.4h-1.4zM355.4 176.2h1.4v1.4h-1.4zM357.6 176.2h1.4v1.4h-1.4zM362 176.2h1.4v1.4h-1.4zM368.6 176.2h1.4v1.4h-1.4zM375.2 176.2h1.4v1.4h-1.4zM381.8 176.2h1.4v1.4h-1.4zM403.8 176.2h1.4v1.4h-1.4zM410.4 176.2h1.4v1.4h-1.4zM417 176.2h1.4v1.4h-1.4zM419.2 176.2h1.4v1.4h-1.4zM428 176.2h1.4v1.4h-1.4zM432.4 176.2h1.4v1.4h-1.4zM434.6 176.2h1.4v1.4h-1.4zM445.6 176.2h1.4v1.4h-1.4zM454.4 176.2h1.4v1.4h-1.4zM472 176.2h1.4v1.4h-1.4zM318 178.7h1.4v1.4h-1.4zM320.2 178.7h1.4v1.4h-1.4zM324.6 178.7h1.4v1.4h-1.4zM326.8 178.7h1.4v1.4h-1.4zM329 178.7h1.4v1.4h-1.4zM331.2 178.7h1.4v1.4h-1.4zM333.4 178.7h1.4v1.4h-1.4zM335.6 178.7h1.4v1.4h-1.4zM337.8 178.7h1.4v1.4h-1.4zM340 178.7h1.4v1.4h-1.4zM342.2 178.7h1.4v1.4h-1.4zM344.4 178.7h1.4v1.4h-1.4zM351 178.7h1.4v1.4h-1.4zM353.2 178.7h1.4v1.4h-1.4zM355.4 178.7h1.4v1.4h-1.4zM357.6 178.7h1.4v1.4h-1.4zM359.8 178.7h1.4v1.4h-1.4zM362 178.7h1.4v1.4h-1.4zM366.4 178.7h1.4v1.4h-1.4zM370.8 178.7h1.4v1.4h-1.4zM373 178.7h1.4v1.4h-1.4zM375.2 178.7h1.4v1.4h-1.4zM377.4 178.7h1.4v1.4h-1.4zM379.6 178.7h1.4v1.4h-1.4zM384 178.7h1.4v1.4h-1.4zM386.2 178.7h1.4v1.4h-1.4zM388.4 178.7h1.4v1.4h-1.4zM392.8 178.7h1.4v1.4h-1.4zM395 178.7h1.4v1.4h-1.4zM401.6 178.7h1.4v1.4h-1.4zM403.8 178.7h1.4v1.4h-1.4zM410.4 178.7h1.4v1.4h-1.4zM417 178.7h1.4v1.4h-1.4zM419.2 178.7h1.4v1.4h-1.4zM421.4 178.7h1.4v1.4h-1.4zM423.6 178.7h1.4v1.4h-1.4zM425.8 178.7h1.4v1.4h-1.4zM428 178.7h1.4v1.4h-1.4zM430.2 178.7h1.4v1.4h-1.4zM436.8 178.7h1.4v1.4h-1.4zM439 178.7h1.4v1.4h-1.4zM441.2 178.7h1.4v1.4h-1.4zM443.4 178.7h1.4v1.4h-1.4zM445.6 178.7h1.4v1.4h-1.4zM450 178.7h1.4v1.4h-1.4zM454.4 178.7h1.4v1.4h-1.4zM456.6 178.7h1.4v1.4h-1.4zM458.8 178.7h1.4v1.4h-1.4zM461 178.7h1.4v1.4h-1.4zM463.2 178.7h1.4v1.4h-1.4zM465.4 178.7h1.4v1.4h-1.4zM467.6 178.7h1.4v1.4h-1.4zM472 178.7h1.4v1.4h-1.4zM233.2 196h1.3v1.3h-1.3zM233.2 198.3h1.3v1.3h-1.3zM233.2 200.6h1.3v1.3h-1.3zM233.2 202.9h1.3v1.3h-1.3zM233.2 205.2h1.3v1.3h-1.3zM233.2 209.8h1.3v1.3h-1.3zM233.2 212.1h1.3v1.3h-1.3zM233.2 216.7h1.3v1.3h-1.3zM233.2 219h1.3v1.3h-1.3zM233.2 221.3h1.3v1.3h-1.3zM233.2 223.6h1.3v1.3h-1.3zM233.2 232.8h1.3v1.3h-1.3zM233.2 235.1h1.3v1.3h-1.3zM233.2 237.4h1.3v1.3h-1.3zM233.2 239.7h1.3v1.3h-1.3zM233.2 242h1.3v1.3h-1.3zM233.2 248.9h1.3v1.3h-1.3zM233.2 253.5h1.3v1.3h-1.3zM233.2 255.8h1.3v1.3h-1.3zM233.2 258.1h1.3v1.3h-1.3zM233.2 260.4h1.3v1.3h-1.3zM233.2 262.7h1.3v1.3h-1.3zM233.2 265h1.3v1.3h-1.3zM233.2 267.3h1.3v1.3h-1.3zM233.2 269.6h1.3v1.3h-1.3zM233.2 271.9h1.3v1.3h-1.3zM233.2 278.8h1.3v1.3h-1.3zM233.2 281.1h1.3v1.3h-1.3zM233.2 283.4h1.3v1.3h-1.3zM233.2 288h1.3v1.3h-1.3zM233.2 290.3h1.3v1.3h-1.3zM235.7 200.6h1.3v1.3h-1.3zM235.7 212.1h1.3v1.3h-1.3zM235.7 230.5h1.3v1.3h-1.3zM235.7 232.8h1.3v1.3h-1.3zM235.7 265h1.3v1.3h-1.3zM235.7 269.6h1.3v1.3h-1.3zM235.7 271.9h1.3v1.3h-1.3zM235.7 276.5h1.3v1.3h-1.3zM235.7 288h1.3v1.3h-1.3zM238.2 200h1.3v1.3h-1.3zM238.2 209.2h1.3v1.3h-1.3zM238.2 211.5h1.3v1.3h-1.3zM238.2 213.8h1.3v1.3h-1.3zM238.2 216.1h1.3v1.3h-1.3zM238.2 220.7h1.3v1.3h-1.3zM238.2 223h1.3v1.3h-1.3zM238.2 225.3h1.3v1.3h-1.3zM238.2 234.5h1.3v1.3h-1.3zM238.2 239.1h1.3v1.3h-1.3zM250 186h4.3v2.3h-4.3zM261.8 186h4.1v2.3h-4.1zM275.6 186h4.6v2.3h-4.6zM296.5 186h3.2v2.3h-3.2zM300.8 186h3.2v2.3h-3.2zM263.4 190.5h3.9v2.2h-3.9zM308.7 190.5h3.4v2.2h-3.4zM257.4 193.8h3v3h-3zM294.1 197.9h4.3v3h-4.3zM299.4 197.9h4.9v3h-4.9zM242.2 214.3h1.3v1.3h-1.3zM247.9 214.3h1.3v1.3h-1.3zM255.5 214.3h1.3v1.3h-1.3zM242.2 216.2h1.3v1.3h-1.3zM244.1 216.2h1.3v1.3h-1.3zM251.7 216.2h1.3v1.3h-1.3zM255.5 216.2h1.3v1.3h-1.3zM255.5 218.1h1.3v1.3h-1.3zM242.2 220h1.3v1.3h-1.3zM246 220h1.3v1.3h-1.3zM247.9 220h1.3v1.3h-1.3zM251.7 220h1.3v1.3h-1.3zM255.5 220h1.3v1.3h-1.3zM242.2 221.9h1.3v1.3h-1.3zM253.6 221.9h1.3v1.3h-1.3zM242.2 223.8h1.3v1.3h-1.3zM244.1 223.8h1.3v1.3h-1.3zM253.6 223.8h1.3v1.3h-1.3zM240.3 225.7h1.3v1.3h-1.3zM249.8 225.7h1.3v1.3h-1.3zM242.2 227.6h1.3v1.3h-1.3zM247.9 227.6h1.3v1.3h-1.3zM244.1 231.4h1.3v1.3h-1.3zM249.8 231.4h1.3v1.3h-1.3zM253.6 231.4h1.3v1.3h-1.3zM242.2 233.3h1.3v1.3h-1.3zM244.1 233.3h1.3v1.3h-1.3zM247.9 233.3h1.3v1.3h-1.3zM249.8 233.3h1.3v1.3h-1.3zM240.3 235.2h1.3v1.3h-1.3zM249.8 235.2h1.3v1.3h-1.3zM281.7 240h4.1v3h-4.1zM269.4 258.6h5.1v.8h-5.1zM241.8 260.7h1.2v1.2h-1.2zM241.8 262.6h1.2v1.2h-1.2zM245.6 262.6h1.2v1.2h-1.2zM247.5 262.6h1.2v1.2h-1.2zM253.2 262.6h1.2v1.2h-1.2zM255.1 262.6h1.2v1.2h-1.2zM258.9 262.6h1.2v1.2h-1.2zM243.7 264.5h1.2v1.2h-1.2zM247.5 264.5h1.2v1.2h-1.2zM253.2 264.5h1.2v1.2h-1.2zM255.1 264.5h1.2v1.2h-1.2zM249.4 266.4h1.2v1.2h-1.2zM251.3 266.4h1.2v1.2h-1.2zM245.6 268.3h1.2v1.2h-1.2zM253.2 270.2h1.2v1.2h-1.2zM264 264h2.5v3h-2.5zM246 279h3v3h-3zM246 285h3v3h-3zM250.5 285h3v3h-3zM277.6 295.8h2.4v.8h-2.4zM293.5 262h4v1.2h-4zM314 264.2h2v.9h-2zM303.5 266h1.4v1.7h-1.4zM296.5 268.7h2.1v1.7h-2.1zM299.4 268.7h3v1.7h-3zM293.1 272.8h1.5v1.5h-1.5zM301.3 272.8h1.5v1.5h-1.5zM305.4 272.8h1.5v1.5h-1.5zM280.8 274.9h1.5v1.5h-1.5zM282.9 274.9h1.5v1.5h-1.5zM284.9 274.9h1.5v1.5h-1.5zM291.1 274.9h1.5v1.5h-1.5zM293.1 274.9h1.5v1.5h-1.5zM297.2 274.9h1.5v1.5h-1.5zM303.4 274.9h1.5v1.5h-1.5zM305.4 274.9h1.5v1.5h-1.5zM315.7 274.9h1.5v1.5h-1.5zM317.7 274.9h1.5v1.5h-1.5zM280.8 276.9h1.5v1.5h-1.5zM287 276.9h1.5v1.5h-1.5zM295.2 276.9h1.5v1.5h-1.5zM301.3 276.9h1.5v1.5h-1.5zM305.4 276.9h1.5v1.5h-1.5zM311.6 276.9h1.5v1.5h-1.5zM313.6 276.9h1.5v1.5h-1.5zM315.7 276.9h1.5v1.5h-1.5zM317.7 276.9h1.5v1.5h-1.5zM282.9 279h1.5v1.5h-1.5zM284.9 279h1.5v1.5h-1.5zM289 279h1.5v1.5h-1.5zM301.3 279h1.5v1.5h-1.5zM303.4 279h1.5v1.5h-1.5zM309.5 279h1.5v1.5h-1.5zM315.7 279h1.5v1.5h-1.5zM280.8 281h1.5v1.5h-1.5zM282.9 281h1.5v1.5h-1.5zM287 281h1.5v1.5h-1.5zM297.2 281h1.5v1.5h-1.5zM299.3 281h1.5v1.5h-1.5zM301.3 281h1.5v1.5h-1.5zM303.4 281h1.5v1.5h-1.5zM309.5 281h1.5v1.5h-1.5zM313.6 281h1.5v1.5h-1.5zM317.7 281h1.5v1.5h-1.5zM289 283.1h1.5v1.5h-1.5zM291.1 283.1h1.5v1.5h-1.5zM303.4 283.1h1.5v1.5h-1.5zM313.6 283.1h1.5v1.5h-1.5zM282.9 285.1h1.5v1.5h-1.5zM284.9 285.1h1.5v1.5h-1.5zM287 285.1h1.5v1.5h-1.5zM287 287.2h1.5v1.5h-1.5zM297.2 287.2h1.5v1.5h-1.5zM301.3 287.2h1.5v1.5h-1.5zM303.4 287.2h1.5v1.5h-1.5zM305.4 287.2h1.5v1.5h-1.5zM309.5 287.2h1.5v1.5h-1.5zM313.6 287.2h1.5v1.5h-1.5zM315.7 287.2h1.5v1.5h-1.5zM282.9 289.2h1.5v1.5h-1.5zM289 289.2h1.5v1.5h-1.5zM291.1 289.2h1.5v1.5h-1.5zM293.1 289.2h1.5v1.5h-1.5zM301.3 289.2h1.5v1.5h-1.5zM303.4 289.2h1.5v1.5h-1.5zM313.6 289.2h1.5v1.5h-1.5zM315.7 289.2h1.5v1.5h-1.5zM280.8 291.3h1.5v1.5h-1.5zM291.1 291.3h1.5v1.5h-1.5zM297.2 291.3h1.5v1.5h-1.5zM301.3 291.3h1.5v1.5h-1.5zM309.5 291.3h1.5v1.5h-1.5zM311.6 291.3h1.5v1.5h-1.5zM313.6 291.3h1.5v1.5h-1.5zM317.7 291.3h1.5v1.5h-1.5zM282.9 293.3h1.5v1.5h-1.5zM291.1 293.3h1.5v1.5h-1.5zM299.3 293.3h1.5v1.5h-1.5zM301.3 293.3h1.5v1.5h-1.5zM305.4 293.3h1.5v1.5h-1.5zM256.6 297h1.5v1.5h-1.5zM265.8 297h1.5v1.5h-1.5zM275 297h1.5v1.5h-1.5zM293.4 302.9h1.5v1.5h-1.5zM304.9 302.9h1.5v1.5h-1.5zM314.1 302.9h1.5v1.5h-1.5zM341.4 183.6h1.3v1.3h-1.3zM362.3 183.6h1.3v1.3h-1.3zM366.1 183.6h1.3v1.3h-1.3zM371.8 183.6h1.3v1.3h-1.3zM331.9 185.5h1.3v1.3h-1.3zM366.1 185.5h1.3v1.3h-1.3zM320.5 187.4h1.3v1.3h-1.3zM330 187.4h1.3v1.3h-1.3zM360.4 187.4h1.3v1.3h-1.3zM345.2 189.3h1.3v1.3h-1.3zM352.8 189.3h1.3v1.3h-1.3zM360.4 189.3h1.3v1.3h-1.3zM371.8 189.3h1.3v1.3h-1.3zM377.5 189.3h1.3v1.3h-1.3zM318.6 191.2h1.3v1.3h-1.3zM324.3 195h1.3v1.3h-1.3zM381.3 196.9h1.3v1.3h-1.3zM320.5 198.8h1.3v1.3h-1.3zM322.4 202.6h1.3v1.3h-1.3zM324.3 204.5h1.3v1.3h-1.3zM381.3 208.3h1.3v1.3h-1.3zM320.5 212.1h1.3v1.3h-1.3zM322.4 212.1h1.3v1.3h-1.3zM381.3 212.1h1.3v1.3h-1.3zM322.4 214h1.3v1.3h-1.3zM320.5 217.8h1.3v1.3h-1.3zM320.5 219.7h1.3v1.3h-1.3zM379.4 219.7h1.3v1.3h-1.3zM318.6 223.5h1.3v1.3h-1.3zM320.5 231.1h1.3v1.3h-1.3zM320.5 233h1.3v1.3h-1.3zM320.5 236.8h1.3v1.3h-1.3zM324.3 236.8h1.3v1.3h-1.3zM324.3 238.7h1.3v1.3h-1.3zM322.4 246.3h1.3v1.3h-1.3zM381.3 246.3h1.3v1.3h-1.3zM320.5 248.2h1.3v1.3h-1.3zM320.5 250.1h1.3v1.3h-1.3zM324.3 250.1h1.3v1.3h-1.3zM337.6 253.9h1.3v1.3h-1.3zM366.1 253.9h1.3v1.3h-1.3zM377.5 253.9h1.3v1.3h-1.3zM349 255.8h1.3v1.3h-1.3zM368 255.8h1.3v1.3h-1.3zM373.7 255.8h1.3v1.3h-1.3zM375.6 255.8h1.3v1.3h-1.3zM366.1 257.7h1.3v1.3h-1.3zM377.5 257.7h1.3v1.3h-1.3zM328.1 259.6h1.3v1.3h-1.3zM375.6 259.6h1.3v1.3h-1.3zM330.8 194.8h1.3v1.3h-1.3zM338.4 194.8h1.3v1.3h-1.3zM340.3 194.8h1.3v1.3h-1.3zM349.8 194.8h1.3v1.3h-1.3zM353.6 194.8h1.3v1.3h-1.3zM355.5 194.8h1.3v1.3h-1.3zM368.8 194.8h1.3v1.3h-1.3zM330.8 198.6h1.3v1.3h-1.3zM336.5 198.6h1.3v1.3h-1.3zM361.2 198.6h1.3v1.3h-1.3zM334.6 200.5h1.3v1.3h-1.3zM344.1 200.5h1.3v1.3h-1.3zM346 200.5h1.3v1.3h-1.3zM349.8 200.5h1.3v1.3h-1.3zM353.6 200.5h1.3v1.3h-1.3zM372.6 200.5h1.3v1.3h-1.3zM332.7 202.4h1.3v1.3h-1.3zM336.5 202.4h1.3v1.3h-1.3zM340.3 202.4h1.3v1.3h-1.3zM366.9 202.4h1.3v1.3h-1.3zM330.8 204.3h1.3v1.3h-1.3zM344.1 204.3h1.3v1.3h-1.3zM351.7 204.3h1.3v1.3h-1.3zM357.4 204.3h1.3v1.3h-1.3zM359.3 204.3h1.3v1.3h-1.3zM363.1 204.3h1.3v1.3h-1.3zM368.8 204.3h1.3v1.3h-1.3zM347.9 206.2h1.3v1.3h-1.3zM357.4 206.2h1.3v1.3h-1.3zM365 206.2h1.3v1.3h-1.3zM355.5 208.1h1.3v1.3h-1.3zM357.4 208.1h1.3v1.3h-1.3zM361.2 208.1h1.3v1.3h-1.3zM372.6 208.1h1.3v1.3h-1.3zM346 210h1.3v1.3h-1.3zM353.6 210h1.3v1.3h-1.3zM330.8 211.9h1.3v1.3h-1.3zM334.6 211.9h1.3v1.3h-1.3zM349.8 211.9h1.3v1.3h-1.3zM363.1 211.9h1.3v1.3h-1.3zM372.6 211.9h1.3v1.3h-1.3zM328.9 213.8h1.3v1.3h-1.3zM351.7 213.8h1.3v1.3h-1.3zM353.6 213.8h1.3v1.3h-1.3zM359.3 213.8h1.3v1.3h-1.3zM368.8 213.8h1.3v1.3h-1.3zM330.8 215.7h1.3v1.3h-1.3zM346 215.7h1.3v1.3h-1.3zM347.9 215.7h1.3v1.3h-1.3zM363.1 215.7h1.3v1.3h-1.3zM366.9 215.7h1.3v1.3h-1.3zM368.8 215.7h1.3v1.3h-1.3zM330.8 217.6h1.3v1.3h-1.3zM368.8 217.6h1.3v1.3h-1.3zM361.2 219.5h1.3v1.3h-1.3zM365 219.5h1.3v1.3h-1.3zM368.8 219.5h1.3v1.3h-1.3zM372.6 219.5h1.3v1.3h-1.3zM366.9 221.4h1.3v1.3h-1.3zM351.7 223.3h1.3v1.3h-1.3zM372.6 223.3h1.3v1.3h-1.3zM328.9 225.2h1.3v1.3h-1.3zM351.7 225.2h1.3v1.3h-1.3zM370.7 225.2h1.3v1.3h-1.3zM372.6 225.2h1.3v1.3h-1.3zM355.5 227.1h1.3v1.3h-1.3zM368.8 227.1h1.3v1.3h-1.3zM344.1 229h1.3v1.3h-1.3zM346 229h1.3v1.3h-1.3zM363.1 229h1.3v1.3h-1.3zM342.2 230.9h1.3v1.3h-1.3zM346 230.9h1.3v1.3h-1.3zM361.2 230.9h1.3v1.3h-1.3zM372.6 230.9h1.3v1.3h-1.3zM332.7 232.8h1.3v1.3h-1.3zM336.5 232.8h1.3v1.3h-1.3zM344.1 232.8h1.3v1.3h-1.3zM346 232.8h1.3v1.3h-1.3zM338.4 234.7h1.3v1.3h-1.3zM340.3 234.7h1.3v1.3h-1.3zM347.9 234.7h1.3v1.3h-1.3zM359.3 234.7h1.3v1.3h-1.3zM330.8 236.6h1.3v1.3h-1.3zM336.5 236.6h1.3v1.3h-1.3zM359.3 236.6h1.3v1.3h-1.3zM344.1 238.5h1.3v1.3h-1.3zM347.9 238.5h1.3v1.3h-1.3zM349.8 238.5h1.3v1.3h-1.3zM351.7 238.5h1.3v1.3h-1.3zM359.3 238.5h1.3v1.3h-1.3zM353.6 240.4h1.3v1.3h-1.3zM359.3 240.4h1.3v1.3h-1.3zM365 240.4h1.3v1.3h-1.3zM338.4 242.3h1.3v1.3h-1.3zM340.3 242.3h1.3v1.3h-1.3zM355.5 242.3h1.3v1.3h-1.3zM366.9 242.3h1.3v1.3h-1.3zM370.7 242.3h1.3v1.3h-1.3zM332.7 244.2h1.3v1.3h-1.3zM336.5 244.2h1.3v1.3h-1.3zM340.3 244.2h1.3v1.3h-1.3zM357.4 246.1h1.3v1.3h-1.3zM366.9 246.1h1.3v1.3h-1.3zM330.8 248h1.3v1.3h-1.3zM338.4 248h1.3v1.3h-1.3zM347.9 248h1.3v1.3h-1.3zM363.1 248h1.3v1.3h-1.3zM370.7 248h1.3v1.3h-1.3zM338.4 249.9h1.3v1.3h-1.3zM355.5 249.9h1.3v1.3h-1.3zM331.8 263.5h1.4v.8h-1.4zM334.3 263.5h1.4v.8h-1.4zM348.5 263.5h3.7v.8h-3.7zM357.3 263.5h2.9v.8h-2.9zM323 265.5h2.2v2.2h-2.2zM337.8 265.5h2.3v2.2h-2.3zM369 265.5h1.9v2.2h-1.9zM371.8 265.5h2.1v2.2h-2.1zM378.3 265.5h3.2v2.2h-3.2zM382.8 265.5h1.4v2.2h-1.4zM333.1 268.6h2.4v1.9h-2.4zM385.1 268.6h.9v1.9h-.9zM324.7 271.4h2v1.8h-2zM347.3 271.4h3v1.8h-3zM356.9 271.4h3.9v1.8h-3.9zM373 271.4h4v1.8h-4zM320 274h2.9v1.7h-2.9zM333.7 274h1.7v1.7h-1.7zM346.8 280.8h1.3v1.3h-1.3zM331.2 282.7h1.3v1.3h-1.3zM339 282.7h1.3v1.3h-1.3zM333.2 284.6h1.3v1.3h-1.3zM339 284.6h1.3v1.3h-1.3zM344.9 284.6h1.3v1.3h-1.3zM348.8 284.6h1.3v1.3h-1.3zM337.1 286.6h1.3v1.3h-1.3zM339 286.6h1.3v1.3h-1.3zM341 286.6h1.3v1.3h-1.3zM348.8 286.6h1.3v1.3h-1.3zM350.7 286.6h1.3v1.3h-1.3zM342.9 288.5h1.3v1.3h-1.3zM350.7 288.5h1.3v1.3h-1.3zM329.3 290.5h1.3v1.3h-1.3zM341 292.4h1.3v1.3h-1.3zM339 294.4h1.3v1.3h-1.3zM341 294.4h1.3v1.3h-1.3zM352.7 294.4h1.3v1.3h-1.3zM329.3 296.3h1.3v1.3h-1.3zM335.1 296.3h1.3v1.3h-1.3zM342.9 296.3h1.3v1.3h-1.3zM350.7 296.3h1.3v1.3h-1.3zM333.2 298.3h1.3v1.3h-1.3zM335.1 298.3h1.3v1.3h-1.3zM341 298.3h1.3v1.3h-1.3zM346.8 298.3h1.3v1.3h-1.3zM348.8 298.3h1.3v1.3h-1.3zM337.1 300.2h1.3v1.3h-1.3zM341 300.2h1.3v1.3h-1.3zM342.9 300.2h1.3v1.3h-1.3zM344.9 300.2h1.3v1.3h-1.3zM346.8 300.2h1.3v1.3h-1.3zM348.8 300.2h1.3v1.3h-1.3zM350.7 300.2h1.3v1.3h-1.3zM352.7 300.2h1.3v1.3h-1.3zM320 290.2h2.1v1h-2.1zM322.7 290.2h1.9v1h-1.9zM320 292.4h2.9v1.6h-2.9zM324.2 292.4h1.8v1.6h-1.8zM320 297.9h1.8v1.7h-1.8zM369.7 279h1.5v1.8h-1.5zM356 281.6h3.3v1h-3.3zM360 281.6h3.5v1h-3.5zM378.1 281.6h2.9v1h-2.9zM360.4 283.5h2v1.6h-2zM376.3 283.5h4.8v1.6h-4.8zM374 291.9h1.4v2.3h-1.4zM380.2 291.9h2v2.3h-2zM380.6 312.4h1.5v1.5h-1.5zM385.2 312.4h1.5v1.5h-1.5zM389 240.4h1.4v1.4h-1.4zM389 244.8h1.4v1.4h-1.4zM389 251.4h1.4v1.4h-1.4zM389 273.4h1.4v1.4h-1.4zM389 280h1.4v1.4h-1.4zM389 293.2h1.4v1.4h-1.4zM389 295.4h1.4v1.4h-1.4zM389 308.6h1.4v1.4h-1.4zM391.7 236h1.4v1.4h-1.4zM391.7 238.2h1.4v1.4h-1.4zM391.7 242.6h1.4v1.4h-1.4zM391.7 247h1.4v1.4h-1.4zM391.7 249.2h1.4v1.4h-1.4zM391.7 251.4h1.4v1.4h-1.4zM391.7 253.6h1.4v1.4h-1.4zM391.7 258h1.4v1.4h-1.4zM391.7 260.2h1.4v1.4h-1.4zM391.7 262.4h1.4v1.4h-1.4zM391.7 264.6h1.4v1.4h-1.4zM391.7 273.4h1.4v1.4h-1.4zM391.7 282.2h1.4v1.4h-1.4zM391.7 284.4h1.4v1.4h-1.4zM391.7 286.6h1.4v1.4h-1.4zM391.7 288.8h1.4v1.4h-1.4zM391.7 291h1.4v1.4h-1.4zM391.7 295.4h1.4v1.4h-1.4zM391.7 297.6h1.4v1.4h-1.4zM391.7 299.8h1.4v1.4h-1.4zM391.7 308.6h1.4v1.4h-1.4zM391.7 310.8h1.4v1.4h-1.4zM389 200.6h1.4v1.4h-1.4zM389 207.2h1.4v1.4h-1.4zM389 218.2h1.4v1.4h-1.4zM389 231.4h1.4v1.4h-1.4zM391.7 185.2h1.4v1.4h-1.4zM391.7 191.8h1.4v1.4h-1.4zM391.7 194h1.4v1.4h-1.4zM391.7 198.4h1.4v1.4h-1.4zM391.7 213.8h1.4v1.4h-1.4zM391.7 222.6h1.4v1.4h-1.4zM403.6 184.3h1.3v1.3h-1.3zM405.6 184.3h1.3v1.3h-1.3zM409.5 184.3h1.3v1.3h-1.3zM413.4 184.3h1.3v1.3h-1.3zM415.3 184.3h1.3v1.3h-1.3zM423.1 184.3h1.3v1.3h-1.3zM399.8 186.2h1.3v1.3h-1.3zM413.4 186.2h1.3v1.3h-1.3zM413.4 188.2h1.3v1.3h-1.3zM425.1 188.2h1.3v1.3h-1.3zM425.1 190.1h1.3v1.3h-1.3zM397.8 192.1h1.3v1.3h-1.3zM399.8 192.1h1.3v1.3h-1.3zM397.8 194h1.3v1.3h-1.3zM399.8 194h1.3v1.3h-1.3zM399.8 196h1.3v1.3h-1.3zM413.4 196h1.3v1.3h-1.3zM425.1 196h1.3v1.3h-1.3zM397.8 197.9h1.3v1.3h-1.3zM399.8 197.9h1.3v1.3h-1.3zM401.7 199.9h1.3v1.3h-1.3zM403.6 199.9h1.3v1.3h-1.3zM409.5 199.9h1.3v1.3h-1.3zM413.4 199.9h1.3v1.3h-1.3zM417.3 199.9h1.3v1.3h-1.3zM421.2 199.9h1.3v1.3h-1.3zM423.1 199.9h1.3v1.3h-1.3zM397.8 201.8h1.3v1.3h-1.3zM399.8 201.8h1.3v1.3h-1.3zM401.7 201.8h1.3v1.3h-1.3zM403.6 201.8h1.3v1.3h-1.3zM407.5 201.8h1.3v1.3h-1.3zM409.5 201.8h1.3v1.3h-1.3zM411.4 201.8h1.3v1.3h-1.3zM417.3 201.8h1.3v1.3h-1.3zM419.2 201.8h1.3v1.3h-1.3zM421.2 201.8h1.3v1.3h-1.3zM425.1 201.8h1.3v1.3h-1.3zM403.6 203.8h1.3v1.3h-1.3zM405.6 203.8h1.3v1.3h-1.3zM407.5 203.8h1.3v1.3h-1.3zM409.5 203.8h1.3v1.3h-1.3zM411.4 203.8h1.3v1.3h-1.3zM417.3 203.8h1.3v1.3h-1.3zM419.2 203.8h1.3v1.3h-1.3zM423.1 203.8h1.3v1.3h-1.3zM399.8 205.7h1.3v1.3h-1.3zM409.5 205.7h1.3v1.3h-1.3zM413.4 205.7h1.3v1.3h-1.3zM425.1 205.7h1.3v1.3h-1.3zM425.1 207.7h1.3v1.3h-1.3zM397.8 209.6h1.3v1.3h-1.3zM423.1 209.6h1.3v1.3h-1.3zM397.8 211.6h1.3v1.3h-1.3zM421.2 211.6h1.3v1.3h-1.3zM425.1 211.6h1.3v1.3h-1.3zM421.2 213.5h1.3v1.3h-1.3zM423.1 213.5h1.3v1.3h-1.3zM425.1 213.5h1.3v1.3h-1.3zM421.2 215.5h1.3v1.3h-1.3zM423.1 215.5h1.3v1.3h-1.3zM423.1 217.4h1.3v1.3h-1.3zM425.1 217.4h1.3v1.3h-1.3zM421.2 219.4h1.3v1.3h-1.3zM423.1 219.4h1.3v1.3h-1.3zM397.8 221.3h1.3v1.3h-1.3zM413.4 221.3h1.3v1.3h-1.3zM415.3 221.3h1.3v1.3h-1.3zM419.2 221.3h1.3v1.3h-1.3zM425.1 221.3h1.3v1.3h-1.3zM433.2 198.3h1.2v1.2h-1.2zM446.9 198.3h1.2v1.2h-1.2zM431.3 200.2h1.2v1.2h-1.2zM433.2 200.2h1.2v1.2h-1.2zM435.2 200.2h1.2v1.2h-1.2zM439.1 200.2h1.2v1.2h-1.2zM443 200.2h1.2v1.2h-1.2zM444.9 200.2h1.2v1.2h-1.2zM443 202.2h1.2v1.2h-1.2zM464.4 202.2h1.2v1.2h-1.2zM433.2 204.1h1.2v1.2h-1.2zM441 206.1h1.2v1.2h-1.2zM443 206.1h1.2v1.2h-1.2zM444.9 206.1h1.2v1.2h-1.2zM431.3 208h1.2v1.2h-1.2zM433.2 208h1.2v1.2h-1.2zM441 208h1.2v1.2h-1.2zM433.2 210h1.2v1.2h-1.2zM464.4 210h1.2v1.2h-1.2zM431.3 211.9h1.2v1.2h-1.2zM433.2 211.9h1.2v1.2h-1.2zM441 211.9h1.2v1.2h-1.2zM443 211.9h1.2v1.2h-1.2zM464.4 211.9h1.2v1.2h-1.2zM433.2 213.9h1.2v1.2h-1.2zM435.2 213.9h1.2v1.2h-1.2zM443 213.9h1.2v1.2h-1.2zM431.3 215.8h1.2v1.2h-1.2zM433.2 215.8h1.2v1.2h-1.2zM439.1 215.8h1.2v1.2h-1.2zM441 215.8h1.2v1.2h-1.2zM444.9 215.8h1.2v1.2h-1.2zM437.1 217.8h1.2v1.2h-1.2zM441 217.8h1.2v1.2h-1.2zM446.9 217.8h1.2v1.2h-1.2zM452.7 217.8h1.2v1.2h-1.2zM454.7 217.8h1.2v1.2h-1.2zM458.6 217.8h1.2v1.2h-1.2zM460.5 217.8h1.2v1.2h-1.2zM462.5 217.8h1.2v1.2h-1.2zM437.1 219.7h1.2v1.2h-1.2zM441 219.7h1.2v1.2h-1.2zM443 219.7h1.2v1.2h-1.2zM450.8 219.7h1.2v1.2h-1.2zM452.7 219.7h1.2v1.2h-1.2zM456.6 219.7h1.2v1.2h-1.2zM464.4 219.7h1.2v1.2h-1.2zM431.3 221.7h1.2v1.2h-1.2zM443 221.7h1.2v1.2h-1.2zM448.8 221.7h1.2v1.2h-1.2zM450.8 221.7h1.2v1.2h-1.2zM400.2 228h1.4v1.4h-1.4zM431 228h1.4v1.4h-1.4zM433.2 228h1.4v1.4h-1.4zM442 228h1.4v1.4h-1.4zM459.6 228h1.4v1.4h-1.4zM469 183h1.3v1.3h-1.3zM469 185.2h1.3v1.3h-1.3zM469 189.6h1.3v1.3h-1.3zM469 194h1.3v1.3h-1.3zM469 198.4h1.3v1.3h-1.3zM469 200.6h1.3v1.3h-1.3zM469 202.8h1.3v1.3h-1.3zM469 207.2h1.3v1.3h-1.3zM469 209.4h1.3v1.3h-1.3zM469 213.8h1.3v1.3h-1.3zM469 216h1.3v1.3h-1.3zM469 222.6h1.3v1.3h-1.3zM471.5 192h1.3v1.3h-1.3zM471.5 194.2h1.3v1.3h-1.3zM471.5 205.2h1.3v1.3h-1.3zM471.5 207.4h1.3v1.3h-1.3zM471.5 214h1.3v1.3h-1.3zM471.5 216.2h1.3v1.3h-1.3zM471.5 218.4h1.3v1.3h-1.3zM474.5 194h1.3v1.3h-1.3zM474.5 198.4h1.3v1.3h-1.3zM474.5 200.6h1.3v1.3h-1.3zM474.5 207.2h1.3v1.3h-1.3zM474.5 209.4h1.3v1.3h-1.3zM474.5 211.6h1.3v1.3h-1.3zM474.5 216h1.3v1.3h-1.3zM474.5 218.2h1.3v1.3h-1.3z"/>
<path fill="#f0cf32" d="M240.6 180h1.3v1.3h-1.3zM256.7 180h1.3v1.3h-1.3zM265.9 180h1.3v1.3h-1.3zM272.8 180h1.3v1.3h-1.3zM275.1 180h1.3v1.3h-1.3zM248 182.6h1.4v1.4h-1.4zM250.3 182.6h1.4v1.4h-1.4zM252.6 182.6h1.4v1.4h-1.4zM254.9 182.6h1.4v1.4h-1.4zM257.2 182.6h1.4v1.4h-1.4zM259.5 182.6h1.4v1.4h-1.4zM261.8 182.6h1.4v1.4h-1.4zM264.1 182.6h1.4v1.4h-1.4zM268.7 182.6h1.4v1.4h-1.4zM271 182.6h1.4v1.4h-1.4zM273.3 182.6h1.4v1.4h-1.4zM275.6 182.6h1.4v1.4h-1.4zM277.9 182.6h1.4v1.4h-1.4zM280.2 182.6h1.4v1.4h-1.4zM291.6 178.3h1.4v1.4h-1.4zM293.9 178.3h1.4v1.4h-1.4zM296.2 178.3h1.4v1.4h-1.4zM298.5 178.3h1.4v1.4h-1.4zM300.8 178.3h1.4v1.4h-1.4zM305.4 178.3h1.4v1.4h-1.4zM310 178.3h1.4v1.4h-1.4zM287 181h1.4v1.4h-1.4zM289.3 181h1.4v1.4h-1.4zM293.9 181h1.4v1.4h-1.4zM298.5 181h1.4v1.4h-1.4zM300.8 181h1.4v1.4h-1.4zM303.1 181h1.4v1.4h-1.4zM307.7 181h1.4v1.4h-1.4zM310 181h1.4v1.4h-1.4zM312.3 181h1.4v1.4h-1.4zM320.2 176.2h1.4v1.4h-1.4zM322.4 176.2h1.4v1.4h-1.4zM324.6 176.2h1.4v1.4h-1.4zM326.8 176.2h1.4v1.4h-1.4zM331.2 176.2h1.4v1.4h-1.4zM333.4 176.2h1.4v1.4h-1.4zM335.6 176.2h1.4v1.4h-1.4zM337.8 176.2h1.4v1.4h-1.4zM340 176.2h1.4v1.4h-1.4zM342.2 176.2h1.4v1.4h-1.4zM344.4 176.2h1.4v1.4h-1.4zM346.6 176.2h1.4v1.4h-1.4zM348.8 176.2h1.4v1.4h-1.4zM351 176.2h1.4v1.4h-1.4zM353.2 176.2h1.4v1.4h-1.4zM359.8 176.2h1.4v1.4h-1.4zM364.2 176.2h1.4v1.4h-1.4zM366.4 176.2h1.4v1.4h-1.4zM370.8 176.2h1.4v1.4h-1.4zM373 176.2h1.4v1.4h-1.4zM377.4 176.2h1.4v1.4h-1.4zM379.6 176.2h1.4v1.4h-1.4zM384 176.2h1.4v1.4h-1.4zM386.2 176.2h1.4v1.4h-1.4zM388.4 176.2h1.4v1.4h-1.4zM390.6 176.2h1.4v1.4h-1.4zM392.8 176.2h1.4v1.4h-1.4zM395 176.2h1.4v1.4h-1.4zM397.2 176.2h1.4v1.4h-1.4zM399.4 176.2h1.4v1.4h-1.4zM401.6 176.2h1.4v1.4h-1.4zM406 176.2h1.4v1.4h-1.4zM408.2 176.2h1.4v1.4h-1.4zM412.6 176.2h1.4v1.4h-1.4zM414.8 176.2h1.4v1.4h-1.4zM421.4 176.2h1.4v1.4h-1.4zM423.6 176.2h1.4v1.4h-1.4zM425.8 176.2h1.4v1.4h-1.4zM430.2 176.2h1.4v1.4h-1.4zM436.8 176.2h1.4v1.4h-1.4zM439 176.2h1.4v1.4h-1.4zM441.2 176.2h1.4v1.4h-1.4zM443.4 176.2h1.4v1.4h-1.4zM447.8 176.2h1.4v1.4h-1.4zM450 176.2h1.4v1.4h-1.4zM452.2 176.2h1.4v1.4h-1.4zM456.6 176.2h1.4v1.4h-1.4zM458.8 176.2h1.4v1.4h-1.4zM461 176.2h1.4v1.4h-1.4zM463.2 176.2h1.4v1.4h-1.4zM465.4 176.2h1.4v1.4h-1.4zM467.6 176.2h1.4v1.4h-1.4zM469.8 176.2h1.4v1.4h-1.4zM322.4 178.7h1.4v1.4h-1.4zM346.6 178.7h1.4v1.4h-1.4zM348.8 178.7h1.4v1.4h-1.4zM364.2 178.7h1.4v1.4h-1.4zM368.6 178.7h1.4v1.4h-1.4zM381.8 178.7h1.4v1.4h-1.4zM390.6 178.7h1.4v1.4h-1.4zM397.2 178.7h1.4v1.4h-1.4zM399.4 178.7h1.4v1.4h-1.4zM406 178.7h1.4v1.4h-1.4zM408.2 178.7h1.4v1.4h-1.4zM412.6 178.7h1.4v1.4h-1.4zM414.8 178.7h1.4v1.4h-1.4zM432.4 178.7h1.4v1.4h-1.4zM434.6 178.7h1.4v1.4h-1.4zM447.8 178.7h1.4v1.4h-1.4zM452.2 178.7h1.4v1.4h-1.4zM469.8 178.7h1.4v1.4h-1.4zM233.2 207.5h1.3v1.3h-1.3zM233.2 214.4h1.3v1.3h-1.3zM233.2 225.9h1.3v1.3h-1.3zM233.2 228.2h1.3v1.3h-1.3zM233.2 230.5h1.3v1.3h-1.3zM233.2 244.3h1.3v1.3h-1.3zM233.2 246.6h1.3v1.3h-1.3zM233.2 251.2h1.3v1.3h-1.3zM233.2 274.2h1.3v1.3h-1.3zM233.2 276.5h1.3v1.3h-1.3zM233.2 285.7h1.3v1.3h-1.3zM235.7 196h1.3v1.3h-1.3zM235.7 198.3h1.3v1.3h-1.3zM235.7 202.9h1.3v1.3h-1.3zM235.7 205.2h1.3v1.3h-1.3zM235.7 207.5h1.3v1.3h-1.3zM235.7 209.8h1.3v1.3h-1.3zM235.7 214.4h1.3v1.3h-1.3zM235.7 216.7h1.3v1.3h-1.3zM235.7 219h1.3v1.3h-1.3zM235.7 221.3h1.3v1.3h-1.3zM235.7 223.6h1.3v1.3h-1.3zM235.7 225.9h1.3v1.3h-1.3zM235.7 228.2h1.3v1.3h-1.3zM235.7 235.1h1.3v1.3h-1.3zM235.7 237.4h1.3v1.3h-1.3zM235.7 239.7h1.3v1.3h-1.3zM235.7 242h1.3v1.3h-1.3zM235.7 244.3h1.3v1.3h-1.3zM235.7 246.6h1.3v1.3h-1.3zM235.7 248.9h1.3v1.3h-1.3zM235.7 251.2h1.3v1.3h-1.3zM235.7 253.5h1.3v1.3h-1.3zM235.7 255.8h1.3v1.3h-1.3zM235.7 258.1h1.3v1.3h-1.3zM235.7 260.4h1.3v1.3h-1.3zM235.7 262.7h1.3v1.3h-1.3zM235.7 267.3h1.3v1.3h-1.3zM235.7 274.2h1.3v1.3h-1.3zM235.7 278.8h1.3v1.3h-1.3zM235.7 281.1h1.3v1.3h-1.3zM235.7 283.4h1.3v1.3h-1.3zM235.7 285.7h1.3v1.3h-1.3zM235.7 290.3h1.3v1.3h-1.3zM238.2 202.3h1.3v1.3h-1.3zM238.2 204.6h1.3v1.3h-1.3zM238.2 206.9h1.3v1.3h-1.3zM238.2 218.4h1.3v1.3h-1.3zM238.2 227.6h1.3v1.3h-1.3zM238.2 229.9h1.3v1.3h-1.3zM238.2 232.2h1.3v1.3h-1.3zM238.2 236.8h1.3v1.3h-1.3zM267.2 186h2v2.3h-2zM270.3 186h4.3v2.3h-4.3zM289.1 186h2.5v2.3h-2.5zM247 190.5h5.3v2.2h-5.3zM253.3 190.5h2.5v2.2h-2.5zM257 190.5h5.8v2.2h-5.8zM268.2 190.5h3.4v2.2h-3.4zM272.8 190.5h2.7v2.2h-2.7zM276.2 190.5h3.1v2.2h-3.1zM280.1 190.5h4.6v2.2h-4.6zM285.4 190.5h4.2v2.2h-4.2zM290.5 190.5h3.9v2.2h-3.9zM295.3 190.5h2.8v2.2h-2.8zM299.1 190.5h4.3v2.2h-4.3zM304.4 190.5h3.1v2.2h-3.1zM247 193.8h2.7v3h-2.7zM250.5 193.8h2.6v3h-2.6zM254.1 193.8h2.7v3h-2.7zM261.6 193.8h2.6v3h-2.6zM265.1 193.8h4.9v3h-4.9zM270.7 193.8h2.3v3h-2.3zM273.9 193.8h2.8v3h-2.8zM287.8 193.8h5.2v3h-5.2zM293.9 193.8h3.9v3h-3.9zM298.8 193.8h5.5v3h-5.5zM305.3 193.8h3.8v3h-3.8zM247 197.9h4.6v3h-4.6zM252.5 197.9h6v3h-6zM259.7 197.9h5.1v3h-5.1zM265.6 197.9h5.7v3h-5.7zM272.4 197.9h5.2v3h-5.2zM278.2 197.9h3.5v3h-3.5zM282.5 197.9h4.7v3h-4.7zM288.4 197.9h4.8v3h-4.8zM304.9 197.9h4.6v3h-4.6zM310.3 197.9h2.4v3h-2.4zM245 207h3.6v6h-3.6zM250.5 207h3.6v6h-3.6zM256 208h2.5v4h-2.5zM240 202.2h1.3v1.3h-1.3zM242.1 202.2h1.3v1.3h-1.3zM244.2 202.2h1.3v1.3h-1.3zM246.3 202.2h1.3v1.3h-1.3zM248.4 202.2h1.3v1.3h-1.3zM250.5 202.2h1.3v1.3h-1.3zM252.6 202.2h1.3v1.3h-1.3zM254.7 202.2h1.3v1.3h-1.3zM256.8 202.2h1.3v1.3h-1.3zM258.9 202.2h1.3v1.3h-1.3zM261 202.2h1.3v1.3h-1.3zM263.1 202.2h1.3v1.3h-1.3zM265.2 202.2h1.3v1.3h-1.3zM267.3 202.2h1.3v1.3h-1.3zM269.4 202.2h1.3v1.3h-1.3zM271.5 202.2h1.3v1.3h-1.3zM273.6 202.2h1.3v1.3h-1.3zM275.7 202.2h1.3v1.3h-1.3zM277.8 202.2h1.3v1.3h-1.3zM279.9 202.2h1.3v1.3h-1.3zM282 202.2h1.3v1.3h-1.3zM284.1 202.2h1.3v1.3h-1.3zM286.2 202.2h1.3v1.3h-1.3zM288.3 202.2h1.3v1.3h-1.3zM290.4 202.2h1.3v1.3h-1.3zM292.5 202.2h1.3v1.3h-1.3zM294.6 202.2h1.3v1.3h-1.3zM296.7 202.2h1.3v1.3h-1.3zM298.8 202.2h1.3v1.3h-1.3zM240 238.3h1.3v1.3h-1.3zM242.1 238.3h1.3v1.3h-1.3zM244.2 238.3h1.3v1.3h-1.3zM246.3 238.3h1.3v1.3h-1.3zM248.4 238.3h1.3v1.3h-1.3zM250.5 238.3h1.3v1.3h-1.3zM252.6 238.3h1.3v1.3h-1.3zM254.7 238.3h1.3v1.3h-1.3zM256.8 238.3h1.3v1.3h-1.3zM258.9 238.3h1.3v1.3h-1.3zM261 238.3h1.3v1.3h-1.3zM263.1 238.3h1.3v1.3h-1.3zM265.2 238.3h1.3v1.3h-1.3zM267.3 238.3h1.3v1.3h-1.3zM269.4 238.3h1.3v1.3h-1.3zM271.5 238.3h1.3v1.3h-1.3zM273.6 238.3h1.3v1.3h-1.3zM275.7 238.3h1.3v1.3h-1.3zM277.8 238.3h1.3v1.3h-1.3zM279.9 238.3h1.3v1.3h-1.3zM282 238.3h1.3v1.3h-1.3zM284.1 238.3h1.3v1.3h-1.3zM286.2 238.3h1.3v1.3h-1.3zM288.3 238.3h1.3v1.3h-1.3zM290.4 238.3h1.3v1.3h-1.3zM292.5 238.3h1.3v1.3h-1.3zM294.6 238.3h1.3v1.3h-1.3zM296.7 238.3h1.3v1.3h-1.3zM298.8 238.3h1.3v1.3h-1.3zM298.6 204h1.3v1.3h-1.3zM298.6 206.1h1.3v1.3h-1.3zM298.6 208.2h1.3v1.3h-1.3zM298.6 210.3h1.3v1.3h-1.3zM298.6 212.4h1.3v1.3h-1.3zM298.6 214.5h1.3v1.3h-1.3zM298.6 216.6h1.3v1.3h-1.3zM298.6 218.7h1.3v1.3h-1.3zM298.6 220.8h1.3v1.3h-1.3zM298.6 222.9h1.3v1.3h-1.3zM298.6 225h1.3v1.3h-1.3zM298.6 227.1h1.3v1.3h-1.3zM298.6 229.2h1.3v1.3h-1.3zM298.6 231.3h1.3v1.3h-1.3zM298.6 233.4h1.3v1.3h-1.3zM298.6 235.5h1.3v1.3h-1.3zM298.6 237.6h1.3v1.3h-1.3zM299.5 203h3v2.5h-3zM303.4 203h3.3v2.5h-3.3zM307.7 203h4.1v2.5h-4.1zM312.9 203h2.6v2.5h-2.6zM299.5 206.7h2.5v2.9h-2.5zM302.9 206.7h2.9v2.9h-2.9zM306.7 206.7h2.7v2.9h-2.7zM310.1 206.7h3.2v2.9h-3.2zM313.9 206.7h1.6v2.9h-1.6zM303.1 210.7h2.3v2.4h-2.3zM306.4 210.7h3v2.4h-3zM310.3 210.7h2.8v2.4h-2.8zM314.2 210.7h1.3v2.4h-1.3zM299.5 214.1h3.8v2.9h-3.8zM304.2 214.1h2.7v2.9h-2.7zM312.5 214.1h3v2.9h-3zM299.5 218.2h2.3v3.2h-2.3zM302.4 218.2h2.8v3.2h-2.8zM305.8 218.2h2.9v3.2h-2.9zM309.5 218.2h2.9v3.2h-2.9zM313.5 218.2h2v3.2h-2zM299.5 222.6h3.6v2.2h-3.6zM303.7 222.6h2.5v2.2h-2.5zM307 222.6h3.2v2.2h-3.2zM310.8 222.6h3.3v2.2h-3.3zM299.5 225.7h2.9v2.4h-2.9zM303.1 225.7h4v2.4h-4zM311.6 225.7h3.9v2.4h-3.9zM299.5 229h3.3v1.7h-3.3zM308.7 229h3.1v1.7h-3.1zM312.5 229h2.3v1.7h-2.3zM299.5 231.7h2.8v2.8h-2.8zM303 231.7h4.1v2.8h-4.1zM308.1 231.7h3.8v2.8h-3.8zM312.9 231.7h2.6v2.8h-2.6zM299.5 235.6h3.6v2.2h-3.6zM303.7 235.6h3.3v2.2h-3.3zM307.8 235.6h3.5v2.2h-3.5zM312.3 235.6h2.9v2.2h-2.9zM299.5 238.7h3.7v2.1h-3.7zM304 238.7h3.5v2.1h-3.5zM308.3 238.7h2.9v2.1h-2.9zM312 238.7h3v2.1h-3zM299.5 241.7h2.8v3h-2.8zM307.2 241.7h3v3h-3zM299.5 245.6h4.2v2.2h-4.2zM304.4 245.6h3.5v2.2h-3.5zM309 245.6h3.9v2.2h-3.9zM313.7 245.6h1.8v2.2h-1.8zM299.5 248.9h3v2.3h-3zM303.3 248.9h3.2v2.3h-3.2zM307.4 248.9h3.4v2.3h-3.4zM299.5 252.1h4.2v2.8h-4.2zM304.3 252.1h4.2v2.8h-4.2zM314 252.1h1.5v2.8h-1.5zM299.5 256h2.7v2.7h-2.7zM303.1 256h3.9v2.7h-3.9zM307.9 256h2.3v2.7h-2.3zM311.1 256h2.7v2.7h-2.7zM299.5 259.7h3.8v3h-3.8zM303.9 259.7h2.3v3h-2.3zM307.2 259.7h2.4v3h-2.4zM303.9 264h2.6v1.9h-2.6zM307.1 264h2.9v1.9h-2.9zM310.7 264h3.4v1.9h-3.4zM299.5 267h2.5v.8h-2.5zM302.9 267h2.9v.8h-2.9zM306.7 267h3.7v.8h-3.7zM311.2 267h2.5v.8h-2.5zM314.7 267h.8v.8h-.8zM241.5 240.5h3.2v7.5h-3.2zM246.5 240.5h3.2v7.5h-3.2zM241.5 250h3.2v6h-3.2zM252 240h3.3v3h-3.3zM266 240h5.6v3h-5.6zM272.2 240h4.1v3h-4.1zM277.4 240h3.5v3h-3.5zM286.5 240h4.1v3h-4.1zM291.7 240h4.9v3h-4.9zM297.7 240h1.8v3h-1.8zM258.9 244.1h5.1v2.3h-5.1zM264.8 244.1h3.6v2.3h-3.6zM277.1 244.1h5.9v2.3h-5.9zM284.2 244.1h2.5v2.3h-2.5zM291.6 244.1h3.9v2.3h-3.9zM296.5 244.1h2.6v2.3h-2.6zM252 247.5h5.9v2.1h-5.9zM258.5 247.5h4.3v2.1h-4.3zM264 247.5h6.2v2.1h-6.2zM271.2 247.5h4.6v2.1h-4.6zM276.6 247.5h4.5v2.1h-4.5zM281.8 247.5h2.6v2.1h-2.6zM285.4 247.5h3.3v2.1h-3.3zM289.5 247.5h4.2v2.1h-4.2zM298.2 247.5h1.3v2.1h-1.3zM252 250.7h4.1v3.5h-4.1zM257.2 250.7h5.5v3.5h-5.5zM263.6 250.7h2.3v3.5h-2.3zM267.1 250.7h5.1v3.5h-5.1zM273.1 250.7h2.6v3.5h-2.6zM276.8 250.7h3.7v3.5h-3.7zM281.6 250.7h6.5v3.5h-6.5zM289.2 250.7h4v3.5h-4zM293.9 250.7h3.9v3.5h-3.9zM298.6 250.7h.9v3.5h-.9zM252 255.1h4.7v2.7h-4.7zM257.3 255.1h3.9v2.7h-3.9zM262 255.1h5.6v2.7h-5.6zM268.4 255.1h6.6v2.7h-6.6zM276.1 255.1h3.9v2.7h-3.9zM280.8 255.1h5v2.7h-5zM286.6 255.1h4.5v2.7h-4.5zM291.8 255.1h3.3v2.7h-3.3zM296 255.1h3.5v2.7h-3.5zM252 258.6h6v.8h-6zM259.1 258.6h5.8v.8h-5.8zM265.9 258.6h2.4v.8h-2.4zM275.6 258.6h4.8v.8h-4.8zM287.7 258.6h2.5v.8h-2.5zM291.3 258.6h3.9v.8h-3.9zM295.8 258.6h3.6v.8h-3.6zM277.8 260.4h8v4h-8zM267 275h3v3h-3zM273.8 276.5h2.8v5.4h-2.8zM269 262h2.2v5h-2.2zM241 278.5h3v3.5h-3zM241 285h3v3h-3zM250.5 278.5h3v3.5h-3zM259.7 279.3h1.2v1.2h-1.2zM265.4 281.2h1.2v1.2h-1.2zM257.8 283.1h1.2v1.2h-1.2zM259.7 283.1h1.2v1.2h-1.2zM265.4 283.1h1.2v1.2h-1.2zM259.7 286.9h1.2v1.2h-1.2zM273 283h3.7v2h-3.7zM278.9 286.2h1.1v1.4h-1.1zM273 288.6h3.2v1h-3.2zM277 288.6h3v1h-3zM273 293.2h4.1v1.2h-4.1zM278.5 293.2h1.5v1.2h-1.5zM273 295.8h3.6v.8h-3.6zM309.6 262h2.4v1.2h-2.4zM313.3 262h1.5v1.2h-1.5zM294.6 264.2h4v.9h-4zM302.8 264.2h2.7v.9h-2.7zM288 266h2.4v1.7h-2.4zM291.2 266h3.4v1.7h-3.4zM300.1 266h2.6v1.7h-2.6zM291.2 268.7h3.8v1.7h-3.8zM309.9 268.7h2.8v1.7h-2.8zM309.5 272.8h1.5v1.5h-1.5zM289 274.9h1.5v1.5h-1.5zM301.3 274.9h1.5v1.5h-1.5zM309.5 274.9h1.5v1.5h-1.5zM311.6 274.9h1.5v1.5h-1.5zM291.1 276.9h1.5v1.5h-1.5zM293.1 276.9h1.5v1.5h-1.5zM299.3 276.9h1.5v1.5h-1.5zM280.8 279h1.5v1.5h-1.5zM287 279h1.5v1.5h-1.5zM295.2 279h1.5v1.5h-1.5zM317.7 279h1.5v1.5h-1.5zM280.8 283.1h1.5v1.5h-1.5zM299.3 283.1h1.5v1.5h-1.5zM289 285.1h1.5v1.5h-1.5zM291.1 285.1h1.5v1.5h-1.5zM291.1 287.2h1.5v1.5h-1.5zM293.1 287.2h1.5v1.5h-1.5zM311.6 287.2h1.5v1.5h-1.5zM317.7 289.2h1.5v1.5h-1.5zM293.1 291.3h1.5v1.5h-1.5zM297.2 293.3h1.5v1.5h-1.5zM315.7 293.3h1.5v1.5h-1.5zM311 280h1.5v1.5h-1.5zM319.2 280h1.5v1.5h-1.5zM315.1 282.1h1.5v1.5h-1.5zM317.2 282.1h1.5v1.5h-1.5zM313.1 284.1h1.5v1.5h-1.5zM315.1 286.2h1.5v1.5h-1.5zM311 288.2h1.5v1.5h-1.5zM315.1 288.2h1.5v1.5h-1.5zM319.2 288.2h1.5v1.5h-1.5zM313.1 290.3h1.5v1.5h-1.5zM317.2 290.3h1.5v1.5h-1.5zM311 292.3h1.5v1.5h-1.5zM313.1 292.3h1.5v1.5h-1.5zM319.2 292.3h1.5v1.5h-1.5zM313.1 294.4h1.5v1.5h-1.5zM315.1 294.4h1.5v1.5h-1.5zM252 297h1.5v1.5h-1.5zM254.3 297h1.5v1.5h-1.5zM258.9 297h1.5v1.5h-1.5zM261.2 297h1.5v1.5h-1.5zM263.5 297h1.5v1.5h-1.5zM268.1 297h1.5v1.5h-1.5zM270.4 297h1.5v1.5h-1.5zM272.7 297h1.5v1.5h-1.5zM278 300.3h1.5v1.5h-1.5zM280.3 300.3h1.5v1.5h-1.5zM282.6 300.3h1.5v1.5h-1.5zM284.9 300.3h1.5v1.5h-1.5zM287.2 300.3h1.5v1.5h-1.5zM289.5 300.3h1.5v1.5h-1.5zM291.8 300.3h1.5v1.5h-1.5zM294.1 300.3h1.5v1.5h-1.5zM296.4 300.3h1.5v1.5h-1.5zM298.7 300.3h1.5v1.5h-1.5zM301 300.3h1.5v1.5h-1.5zM303.3 300.3h1.5v1.5h-1.5zM305.6 300.3h1.5v1.5h-1.5zM307.9 300.3h1.5v1.5h-1.5zM310.2 300.3h1.5v1.5h-1.5zM312.5 300.3h1.5v1.5h-1.5zM314.8 300.3h1.5v1.5h-1.5zM317.1 300.3h1.5v1.5h-1.5zM319.4 300.3h1.5v1.5h-1.5zM275 302.9h1.5v1.5h-1.5zM277.3 302.9h1.5v1.5h-1.5zM279.6 302.9h1.5v1.5h-1.5zM281.9 302.9h1.5v1.5h-1.5zM284.2 302.9h1.5v1.5h-1.5zM286.5 302.9h1.5v1.5h-1.5zM288.8 302.9h1.5v1.5h-1.5zM291.1 302.9h1.5v1.5h-1.5zM295.7 302.9h1.5v1.5h-1.5zM298 302.9h1.5v1.5h-1.5zM300.3 302.9h1.5v1.5h-1.5zM302.6 302.9h1.5v1.5h-1.5zM307.2 302.9h1.5v1.5h-1.5zM309.5 302.9h1.5v1.5h-1.5zM311.8 302.9h1.5v1.5h-1.5zM316.4 302.9h1.5v1.5h-1.5zM318.7 302.9h1.5v1.5h-1.5zM320.5 183.6h1.3v1.3h-1.3zM324.3 183.6h1.3v1.3h-1.3zM330 183.6h1.3v1.3h-1.3zM339.5 183.6h1.3v1.3h-1.3zM324.3 185.5h1.3v1.3h-1.3zM337.6 187.4h1.3v1.3h-1.3zM349 187.4h1.3v1.3h-1.3zM362.3 187.4h1.3v1.3h-1.3zM320.5 193.1h1.3v1.3h-1.3zM322.4 193.1h1.3v1.3h-1.3zM379.4 195h1.3v1.3h-1.3zM318.6 200.7h1.3v1.3h-1.3zM324.3 202.6h1.3v1.3h-1.3zM381.3 202.6h1.3v1.3h-1.3zM322.4 204.5h1.3v1.3h-1.3zM381.3 206.4h1.3v1.3h-1.3zM320.5 208.3h1.3v1.3h-1.3zM379.4 212.1h1.3v1.3h-1.3zM379.4 215.9h1.3v1.3h-1.3zM322.4 217.8h1.3v1.3h-1.3zM381.3 217.8h1.3v1.3h-1.3zM379.4 221.6h1.3v1.3h-1.3zM381.3 221.6h1.3v1.3h-1.3zM320.5 223.5h1.3v1.3h-1.3zM381.3 227.3h1.3v1.3h-1.3zM322.4 229.2h1.3v1.3h-1.3zM322.4 234.9h1.3v1.3h-1.3zM322.4 236.8h1.3v1.3h-1.3zM320.5 238.7h1.3v1.3h-1.3zM379.4 240.6h1.3v1.3h-1.3zM381.3 242.5h1.3v1.3h-1.3zM318.6 248.2h1.3v1.3h-1.3zM318.6 252h1.3v1.3h-1.3zM320.5 252h1.3v1.3h-1.3zM337.6 255.8h1.3v1.3h-1.3zM341.4 255.8h1.3v1.3h-1.3zM352.8 255.8h1.3v1.3h-1.3zM366.1 255.8h1.3v1.3h-1.3zM371.8 255.8h1.3v1.3h-1.3zM331.9 257.7h1.3v1.3h-1.3zM333.8 257.7h1.3v1.3h-1.3zM339.5 257.7h1.3v1.3h-1.3zM364.2 257.7h1.3v1.3h-1.3zM326.2 259.6h1.3v1.3h-1.3zM339.5 259.6h1.3v1.3h-1.3zM358.5 259.6h1.3v1.3h-1.3zM371.8 259.6h1.3v1.3h-1.3zM349.8 196.7h1.3v1.3h-1.3zM357.4 196.7h1.3v1.3h-1.3zM363.1 200.5h1.3v1.3h-1.3zM334.6 202.4h1.3v1.3h-1.3zM370.7 202.4h1.3v1.3h-1.3zM342.2 204.3h1.3v1.3h-1.3zM353.6 204.3h1.3v1.3h-1.3zM351.7 206.2h1.3v1.3h-1.3zM372.6 206.2h1.3v1.3h-1.3zM368.8 208.1h1.3v1.3h-1.3zM349.8 210h1.3v1.3h-1.3zM355.5 210h1.3v1.3h-1.3zM372.6 210h1.3v1.3h-1.3zM357.4 215.7h1.3v1.3h-1.3zM346 217.6h1.3v1.3h-1.3zM347.9 219.5h1.3v1.3h-1.3zM363.1 219.5h1.3v1.3h-1.3zM330.8 223.3h1.3v1.3h-1.3zM372.6 229h1.3v1.3h-1.3zM330.8 232.8h1.3v1.3h-1.3zM347.9 232.8h1.3v1.3h-1.3zM361.2 234.7h1.3v1.3h-1.3zM340.3 236.6h1.3v1.3h-1.3zM353.6 236.6h1.3v1.3h-1.3zM361.2 240.4h1.3v1.3h-1.3zM328.9 244.2h1.3v1.3h-1.3zM338.4 246.1h1.3v1.3h-1.3zM340.3 246.1h1.3v1.3h-1.3zM366.9 248h1.3v1.3h-1.3zM342.2 249.9h1.3v1.3h-1.3zM320 263.5h2.5v.8h-2.5zM323.8 263.5h1.3v.8h-1.3zM325.9 263.5h4.8v.8h-4.8zM342.8 263.5h2.4v.8h-2.4zM365.1 263.5h3.9v.8h-3.9zM373.7 263.5h3.6v.8h-3.6zM378.5 263.5h4.3v.8h-4.3zM384 263.5h2v.8h-2zM320 265.5h2.2v2.2h-2.2zM325.9 265.5h1.9v2.2h-1.9zM333.5 265.5h3.5v2.2h-3.5zM349.4 265.5h3.1v2.2h-3.1zM358.6 265.5h2.8v2.2h-2.8zM362.4 265.5h1.5v2.2h-1.5zM365.3 265.5h2.8v2.2h-2.8zM320 268.6h4.8v1.9h-4.8zM328.1 268.6h3.6v1.9h-3.6zM336.5 268.6h3.5v1.9h-3.5zM350.8 268.6h3.8v1.9h-3.8zM356 268.6h1.5v1.9h-1.5zM359 268.6h2.9v1.9h-2.9zM362.6 268.6h2.6v1.9h-2.6zM372 268.6h3.7v1.9h-3.7zM327.6 271.4h3.7v1.8h-3.7zM335.7 271.4h4v1.8h-4zM343.8 271.4h2.1v1.8h-2.1zM351.1 271.4h4.5v1.8h-4.5zM362.2 271.4h2.7v1.8h-2.7zM366.1 271.4h2.7v1.8h-2.7zM378.2 271.4h2.5v1.8h-2.5zM326.9 274h2.9v1.7h-2.9zM330.6 274h2.3v1.7h-2.3zM339.8 274h4v1.7h-4zM344.9 274h2.9v1.7h-2.9zM348.9 274h1.5v1.7h-1.5zM351.4 274h2.8v1.7h-2.8zM357.4 274h2v1.7h-2zM360.2 274h4.1v1.7h-4.1zM368.1 274h3.9v1.7h-3.9zM372.8 274h3.1v1.7h-3.1zM376.5 274h2.7v1.7h-2.7zM333.2 278.8h1.3v1.3h-1.3zM341 278.8h1.3v1.3h-1.3zM337.1 280.8h1.3v1.3h-1.3zM335.1 282.7h1.3v1.3h-1.3zM329.3 286.6h1.3v1.3h-1.3zM335.1 286.6h1.3v1.3h-1.3zM346.8 286.6h1.3v1.3h-1.3zM341 290.5h1.3v1.3h-1.3zM335.1 292.4h1.3v1.3h-1.3zM337.1 292.4h1.3v1.3h-1.3zM344.9 292.4h1.3v1.3h-1.3zM339 296.3h1.3v1.3h-1.3zM325.7 280h1.8v1.4h-1.8zM320 282.5h1.3v.8h-1.3zM322.1 282.5h3.2v.8h-3.2zM324.9 284.5h2.6v1.4h-2.6zM320 287.4h2.5v1.6h-2.5zM325.7 290.2h1.8v1h-1.8zM323 297.9h2.4v1.7h-2.4zM320 300.9h1.9v1.1h-1.9zM326.1 300.9h1.4v1.1h-1.4zM372.1 279h3.5v1.8h-3.5zM373.4 281.6h3.5v1h-3.5zM370.9 283.5h4.5v1.6h-4.5zM356 286.2h2.5v1.9h-2.5zM367 286.2h3.9v1.9h-3.9zM377.4 286.2h4.5v1.9h-4.5zM356 289.5h4.8v1h-4.8zM373.3 289.5h2.5v1h-2.5zM376.7 289.5h1.7v1h-1.7zM379.1 289.5h4.6v1h-4.6zM384.3 289.5h1.7v1h-1.7zM364.8 291.9h4.2v2.3h-4.2zM369.9 291.9h3.3v2.3h-3.3zM356 295.7h4.1v.8h-4.1zM365.3 295.7h4v.8h-4zM373.4 295.7h2v.8h-2zM381.3 295.7h1.8v.8h-1.8zM378 283h3v6h-3zM383 283h2.6v6h-2.6zM321.7 309.6h1.5v1.5h-1.5zM324 309.6h1.5v1.5h-1.5zM326.3 309.6h1.5v1.5h-1.5zM328.6 309.6h1.5v1.5h-1.5zM330.9 309.6h1.5v1.5h-1.5zM333.2 309.6h1.5v1.5h-1.5zM335.5 309.6h1.5v1.5h-1.5zM337.8 309.6h1.5v1.5h-1.5zM340.1 309.6h1.5v1.5h-1.5zM342.4 309.6h1.5v1.5h-1.5zM344.7 309.6h1.5v1.5h-1.5zM347 309.6h1.5v1.5h-1.5zM349.3 309.6h1.5v1.5h-1.5zM351.6 309.6h1.5v1.5h-1.5zM353.9 309.6h1.5v1.5h-1.5zM356.2 309.6h1.5v1.5h-1.5zM358.5 309.6h1.5v1.5h-1.5zM321.7 312.4h1.5v1.5h-1.5zM324 312.4h1.5v1.5h-1.5zM326.3 312.4h1.5v1.5h-1.5zM328.6 312.4h1.5v1.5h-1.5zM330.9 312.4h1.5v1.5h-1.5zM333.2 312.4h1.5v1.5h-1.5zM335.5 312.4h1.5v1.5h-1.5zM337.8 312.4h1.5v1.5h-1.5zM340.1 312.4h1.5v1.5h-1.5zM342.4 312.4h1.5v1.5h-1.5zM344.7 312.4h1.5v1.5h-1.5zM347 312.4h1.5v1.5h-1.5zM349.3 312.4h1.5v1.5h-1.5zM351.6 312.4h1.5v1.5h-1.5zM353.9 312.4h1.5v1.5h-1.5zM356.2 312.4h1.5v1.5h-1.5zM358.5 312.4h1.5v1.5h-1.5zM378 309.6h1.5v1.5h-1.5zM380.3 309.6h1.5v1.5h-1.5zM382.6 309.6h1.5v1.5h-1.5zM384.9 309.6h1.5v1.5h-1.5zM387.2 309.6h1.5v1.5h-1.5zM376 312.4h1.5v1.5h-1.5zM378.3 312.4h1.5v1.5h-1.5zM382.9 312.4h1.5v1.5h-1.5zM387.5 312.4h1.5v1.5h-1.5zM389 236h1.4v1.4h-1.4zM389 238.2h1.4v1.4h-1.4zM389 242.6h1.4v1.4h-1.4zM389 247h1.4v1.4h-1.4zM389 249.2h1.4v1.4h-1.4zM389 253.6h1.4v1.4h-1.4zM389 255.8h1.4v1.4h-1.4zM389 258h1.4v1.4h-1.4zM389 260.2h1.4v1.4h-1.4zM389 262.4h1.4v1.4h-1.4zM389 264.6h1.4v1.4h-1.4zM389 266.8h1.4v1.4h-1.4zM389 269h1.4v1.4h-1.4zM389 271.2h1.4v1.4h-1.4zM389 275.6h1.4v1.4h-1.4zM389 277.8h1.4v1.4h-1.4zM389 282.2h1.4v1.4h-1.4zM389 284.4h1.4v1.4h-1.4zM389 286.6h1.4v1.4h-1.4zM389 288.8h1.4v1.4h-1.4zM389 291h1.4v1.4h-1.4zM389 297.6h1.4v1.4h-1.4zM389 299.8h1.4v1.4h-1.4zM389 302h1.4v1.4h-1.4zM389 304.2h1.4v1.4h-1.4zM389 306.4h1.4v1.4h-1.4zM389 310.8h1.4v1.4h-1.4zM391.7 240.4h1.4v1.4h-1.4zM391.7 244.8h1.4v1.4h-1.4zM391.7 255.8h1.4v1.4h-1.4zM391.7 266.8h1.4v1.4h-1.4zM391.7 269h1.4v1.4h-1.4zM391.7 271.2h1.4v1.4h-1.4zM391.7 275.6h1.4v1.4h-1.4zM391.7 277.8h1.4v1.4h-1.4zM391.7 280h1.4v1.4h-1.4zM391.7 293.2h1.4v1.4h-1.4zM391.7 302h1.4v1.4h-1.4zM391.7 304.2h1.4v1.4h-1.4zM391.7 306.4h1.4v1.4h-1.4zM386.5 184h1.4v1.4h-1.4zM386.5 186.2h1.4v1.4h-1.4zM386.5 188.4h1.4v1.4h-1.4zM386.5 190.6h1.4v1.4h-1.4zM386.5 192.8h1.4v1.4h-1.4zM386.5 195h1.4v1.4h-1.4zM386.5 197.2h1.4v1.4h-1.4zM386.5 199.4h1.4v1.4h-1.4zM386.5 201.6h1.4v1.4h-1.4zM386.5 203.8h1.4v1.4h-1.4zM386.5 206h1.4v1.4h-1.4zM386.5 208.2h1.4v1.4h-1.4zM386.5 210.4h1.4v1.4h-1.4zM386.5 212.6h1.4v1.4h-1.4zM386.5 214.8h1.4v1.4h-1.4zM386.5 217h1.4v1.4h-1.4zM386.5 219.2h1.4v1.4h-1.4zM386.5 221.4h1.4v1.4h-1.4zM386.5 223.6h1.4v1.4h-1.4zM386.5 225.8h1.4v1.4h-1.4zM386.5 228h1.4v1.4h-1.4zM386.5 230.2h1.4v1.4h-1.4zM386.5 232.4h1.4v1.4h-1.4zM386.5 234.6h1.4v1.4h-1.4zM386.5 236.8h1.4v1.4h-1.4zM386.5 239h1.4v1.4h-1.4zM386.5 241.2h1.4v1.4h-1.4zM386.5 243.4h1.4v1.4h-1.4zM386.5 245.6h1.4v1.4h-1.4zM386.5 247.8h1.4v1.4h-1.4zM386.5 250h1.4v1.4h-1.4zM386.5 252.2h1.4v1.4h-1.4zM386.5 254.4h1.4v1.4h-1.4zM386.5 256.6h1.4v1.4h-1.4zM389 183h1.4v1.4h-1.4zM389 185.2h1.4v1.4h-1.4zM389 187.4h1.4v1.4h-1.4zM389 189.6h1.4v1.4h-1.4zM389 191.8h1.4v1.4h-1.4zM389 194h1.4v1.4h-1.4zM389 196.2h1.4v1.4h-1.4zM389 198.4h1.4v1.4h-1.4zM389 202.8h1.4v1.4h-1.4zM389 205h1.4v1.4h-1.4zM389 209.4h1.4v1.4h-1.4zM389 211.6h1.4v1.4h-1.4zM389 213.8h1.4v1.4h-1.4zM389 216h1.4v1.4h-1.4zM389 220.4h1.4v1.4h-1.4zM389 222.6h1.4v1.4h-1.4zM389 224.8h1.4v1.4h-1.4zM389 227h1.4v1.4h-1.4zM389 229.2h1.4v1.4h-1.4zM389 233.6h1.4v1.4h-1.4zM391.7 183h1.4v1.4h-1.4zM391.7 187.4h1.4v1.4h-1.4zM391.7 189.6h1.4v1.4h-1.4zM391.7 196.2h1.4v1.4h-1.4zM391.7 200.6h1.4v1.4h-1.4zM391.7 202.8h1.4v1.4h-1.4zM391.7 205h1.4v1.4h-1.4zM391.7 207.2h1.4v1.4h-1.4zM391.7 209.4h1.4v1.4h-1.4zM391.7 211.6h1.4v1.4h-1.4zM391.7 216h1.4v1.4h-1.4zM391.7 218.2h1.4v1.4h-1.4zM391.7 220.4h1.4v1.4h-1.4zM391.7 224.8h1.4v1.4h-1.4zM391.7 227h1.4v1.4h-1.4zM391.7 229.2h1.4v1.4h-1.4zM391.7 231.4h1.4v1.4h-1.4zM391.7 233.6h1.4v1.4h-1.4zM417.3 184.3h1.3v1.3h-1.3zM419.2 184.3h1.3v1.3h-1.3zM421.2 184.3h1.3v1.3h-1.3zM425.1 184.3h1.3v1.3h-1.3zM397.8 188.2h1.3v1.3h-1.3zM399.8 190.1h1.3v1.3h-1.3zM413.4 190.1h1.3v1.3h-1.3zM425.1 192.1h1.3v1.3h-1.3zM425.1 194h1.3v1.3h-1.3zM399.8 199.9h1.3v1.3h-1.3zM407.5 199.9h1.3v1.3h-1.3zM411.4 199.9h1.3v1.3h-1.3zM415.3 199.9h1.3v1.3h-1.3zM419.2 199.9h1.3v1.3h-1.3zM413.4 201.8h1.3v1.3h-1.3zM423.1 201.8h1.3v1.3h-1.3zM399.8 203.8h1.3v1.3h-1.3zM425.1 203.8h1.3v1.3h-1.3zM397.8 205.7h1.3v1.3h-1.3zM403.6 205.7h1.3v1.3h-1.3zM407.5 205.7h1.3v1.3h-1.3zM419.2 205.7h1.3v1.3h-1.3zM421.2 205.7h1.3v1.3h-1.3zM423.1 205.7h1.3v1.3h-1.3zM397.8 207.7h1.3v1.3h-1.3zM421.2 209.6h1.3v1.3h-1.3zM425.1 209.6h1.3v1.3h-1.3zM423.1 211.6h1.3v1.3h-1.3zM397.8 213.5h1.3v1.3h-1.3zM405.6 221.3h1.3v1.3h-1.3zM407.5 221.3h1.3v1.3h-1.3zM409.5 221.3h1.3v1.3h-1.3zM417.3 221.3h1.3v1.3h-1.3zM421.2 221.3h1.3v1.3h-1.3zM433.2 183.8h1.3v1.3h-1.3zM439.1 183.8h1.3v1.3h-1.3zM441 183.8h1.3v1.3h-1.3zM443 183.8h1.3v1.3h-1.3zM446.9 183.8h1.3v1.3h-1.3zM450.8 183.8h1.3v1.3h-1.3zM456.6 183.8h1.3v1.3h-1.3zM458.6 183.8h1.3v1.3h-1.3zM460.5 183.8h1.3v1.3h-1.3zM462.5 183.8h1.3v1.3h-1.3zM431.3 185.8h1.3v1.3h-1.3zM444.9 185.8h1.3v1.3h-1.3zM446.9 185.8h1.3v1.3h-1.3zM448.8 185.8h1.3v1.3h-1.3zM462.5 185.8h1.3v1.3h-1.3zM464.4 185.8h1.3v1.3h-1.3zM435.2 187.7h1.3v1.3h-1.3zM441 187.7h1.3v1.3h-1.3zM444.9 187.7h1.3v1.3h-1.3zM448.8 187.7h1.3v1.3h-1.3zM450.8 187.7h1.3v1.3h-1.3zM462.5 187.7h1.3v1.3h-1.3zM431.3 189.6h1.3v1.3h-1.3zM435.2 189.6h1.3v1.3h-1.3zM437.1 189.6h1.3v1.3h-1.3zM443 189.6h1.3v1.3h-1.3zM448.8 189.6h1.3v1.3h-1.3zM450.8 189.6h1.3v1.3h-1.3zM454.7 189.6h1.3v1.3h-1.3zM456.6 189.6h1.3v1.3h-1.3zM462.5 189.6h1.3v1.3h-1.3zM433.2 191.6h1.3v1.3h-1.3zM435.2 191.6h1.3v1.3h-1.3zM439.1 191.6h1.3v1.3h-1.3zM441 191.6h1.3v1.3h-1.3zM443 191.6h1.3v1.3h-1.3zM444.9 191.6h1.3v1.3h-1.3zM448.8 191.6h1.3v1.3h-1.3zM450.8 191.6h1.3v1.3h-1.3zM454.7 191.6h1.3v1.3h-1.3zM443 193.5h1.3v1.3h-1.3zM448.8 193.5h1.3v1.3h-1.3zM450.8 193.5h1.3v1.3h-1.3zM452.7 193.5h1.3v1.3h-1.3zM462.5 193.5h1.3v1.3h-1.3zM439.1 198.3h1.2v1.2h-1.2zM448.8 198.3h1.2v1.2h-1.2zM437.1 200.2h1.2v1.2h-1.2zM433.2 202.2h1.2v1.2h-1.2zM433.2 217.8h1.2v1.2h-1.2zM435.2 217.8h1.2v1.2h-1.2zM460.5 219.7h1.2v1.2h-1.2zM462.5 219.7h1.2v1.2h-1.2zM446.9 221.7h1.2v1.2h-1.2zM456.6 221.7h1.2v1.2h-1.2zM460.5 221.7h1.2v1.2h-1.2zM398 225.6h1.4v1.4h-1.4zM400.2 225.6h1.4v1.4h-1.4zM402.4 225.6h1.4v1.4h-1.4zM404.6 225.6h1.4v1.4h-1.4zM406.8 225.6h1.4v1.4h-1.4zM409 225.6h1.4v1.4h-1.4zM411.2 225.6h1.4v1.4h-1.4zM413.4 225.6h1.4v1.4h-1.4zM415.6 225.6h1.4v1.4h-1.4zM417.8 225.6h1.4v1.4h-1.4zM420 225.6h1.4v1.4h-1.4zM422.2 225.6h1.4v1.4h-1.4zM424.4 225.6h1.4v1.4h-1.4zM426.6 225.6h1.4v1.4h-1.4zM428.8 225.6h1.4v1.4h-1.4zM431 225.6h1.4v1.4h-1.4zM433.2 225.6h1.4v1.4h-1.4zM435.4 225.6h1.4v1.4h-1.4zM437.6 225.6h1.4v1.4h-1.4zM439.8 225.6h1.4v1.4h-1.4zM442 225.6h1.4v1.4h-1.4zM444.2 225.6h1.4v1.4h-1.4zM446.4 225.6h1.4v1.4h-1.4zM448.6 225.6h1.4v1.4h-1.4zM450.8 225.6h1.4v1.4h-1.4zM453 225.6h1.4v1.4h-1.4zM455.2 225.6h1.4v1.4h-1.4zM457.4 225.6h1.4v1.4h-1.4zM459.6 225.6h1.4v1.4h-1.4zM461.8 225.6h1.4v1.4h-1.4zM464 225.6h1.4v1.4h-1.4zM466.2 225.6h1.4v1.4h-1.4zM468.4 225.6h1.4v1.4h-1.4zM398 228h1.4v1.4h-1.4zM402.4 228h1.4v1.4h-1.4zM404.6 228h1.4v1.4h-1.4zM406.8 228h1.4v1.4h-1.4zM409 228h1.4v1.4h-1.4zM411.2 228h1.4v1.4h-1.4zM413.4 228h1.4v1.4h-1.4zM415.6 228h1.4v1.4h-1.4zM417.8 228h1.4v1.4h-1.4zM420 228h1.4v1.4h-1.4zM422.2 228h1.4v1.4h-1.4zM424.4 228h1.4v1.4h-1.4zM426.6 228h1.4v1.4h-1.4zM428.8 228h1.4v1.4h-1.4zM435.4 228h1.4v1.4h-1.4zM437.6 228h1.4v1.4h-1.4zM439.8 228h1.4v1.4h-1.4zM444.2 228h1.4v1.4h-1.4zM446.4 228h1.4v1.4h-1.4zM448.6 228h1.4v1.4h-1.4zM450.8 228h1.4v1.4h-1.4zM453 228h1.4v1.4h-1.4zM455.2 228h1.4v1.4h-1.4zM457.4 228h1.4v1.4h-1.4zM461.8 228h1.4v1.4h-1.4zM464 228h1.4v1.4h-1.4zM466.2 228h1.4v1.4h-1.4zM468.4 228h1.4v1.4h-1.4zM469 187.4h1.3v1.3h-1.3zM469 191.8h1.3v1.3h-1.3zM469 196.2h1.3v1.3h-1.3zM469 205h1.3v1.3h-1.3zM469 211.6h1.3v1.3h-1.3zM469 218.2h1.3v1.3h-1.3zM469 220.4h1.3v1.3h-1.3zM471.5 196.4h1.3v1.3h-1.3zM471.5 198.6h1.3v1.3h-1.3zM471.5 200.8h1.3v1.3h-1.3zM471.5 203h1.3v1.3h-1.3zM471.5 209.6h1.3v1.3h-1.3zM471.5 211.8h1.3v1.3h-1.3zM471.5 220.6h1.3v1.3h-1.3zM474.5 196.2h1.3v1.3h-1.3zM474.5 202.8h1.3v1.3h-1.3zM474.5 205h1.3v1.3h-1.3zM474.5 213.8h1.3v1.3h-1.3z"/>
<path fill="#8d8a58" d="M240.3 214.3h1.3v1.3h-1.3zM246 214.3h1.3v1.3h-1.3zM249.8 214.3h1.3v1.3h-1.3zM246 216.2h1.3v1.3h-1.3zM247.9 216.2h1.3v1.3h-1.3zM253.6 216.2h1.3v1.3h-1.3zM242.2 218.1h1.3v1.3h-1.3zM246 218.1h1.3v1.3h-1.3zM247.9 218.1h1.3v1.3h-1.3zM253.6 218.1h1.3v1.3h-1.3zM240.3 220h1.3v1.3h-1.3zM249.8 220h1.3v1.3h-1.3zM253.6 220h1.3v1.3h-1.3zM240.3 221.9h1.3v1.3h-1.3zM251.7 221.9h1.3v1.3h-1.3zM255.5 221.9h1.3v1.3h-1.3zM255.5 223.8h1.3v1.3h-1.3zM244.1 225.7h1.3v1.3h-1.3zM246 225.7h1.3v1.3h-1.3zM251.7 225.7h1.3v1.3h-1.3zM255.5 225.7h1.3v1.3h-1.3zM240.3 227.6h1.3v1.3h-1.3zM244.1 227.6h1.3v1.3h-1.3zM246 227.6h1.3v1.3h-1.3zM253.6 227.6h1.3v1.3h-1.3zM255.5 227.6h1.3v1.3h-1.3zM240.3 229.5h1.3v1.3h-1.3zM242.2 229.5h1.3v1.3h-1.3zM253.6 229.5h1.3v1.3h-1.3zM240.3 231.4h1.3v1.3h-1.3zM247.9 231.4h1.3v1.3h-1.3zM251.7 231.4h1.3v1.3h-1.3zM240.3 233.3h1.3v1.3h-1.3zM246 233.3h1.3v1.3h-1.3zM251.7 233.3h1.3v1.3h-1.3zM251.7 235.2h1.3v1.3h-1.3zM243.7 260.7h1.2v1.2h-1.2zM249.4 260.7h1.2v1.2h-1.2zM255.1 260.7h1.2v1.2h-1.2zM257 260.7h1.2v1.2h-1.2zM249.4 262.6h1.2v1.2h-1.2zM251.3 262.6h1.2v1.2h-1.2zM245.6 264.5h1.2v1.2h-1.2zM249.4 264.5h1.2v1.2h-1.2zM241.8 266.4h1.2v1.2h-1.2zM245.6 266.4h1.2v1.2h-1.2zM253.2 266.4h1.2v1.2h-1.2zM243.7 268.3h1.2v1.2h-1.2zM253.2 268.3h1.2v1.2h-1.2zM257 268.3h1.2v1.2h-1.2zM241.8 270.2h1.2v1.2h-1.2zM243.7 270.2h1.2v1.2h-1.2zM245.6 270.2h1.2v1.2h-1.2zM247.5 270.2h1.2v1.2h-1.2zM249.4 270.2h1.2v1.2h-1.2zM251.3 270.2h1.2v1.2h-1.2z"/>
<path fill="#a8a684" d="M244.1 214.3h1.3v1.3h-1.3zM240.3 216.2h1.3v1.3h-1.3zM249.8 216.2h1.3v1.3h-1.3zM244.1 218.1h1.3v1.3h-1.3zM251.7 218.1h1.3v1.3h-1.3zM244.1 220h1.3v1.3h-1.3zM244.1 221.9h1.3v1.3h-1.3zM246 223.8h1.3v1.3h-1.3zM247.9 223.8h1.3v1.3h-1.3zM249.8 223.8h1.3v1.3h-1.3zM242.2 225.7h1.3v1.3h-1.3zM247.9 225.7h1.3v1.3h-1.3zM251.7 227.6h1.3v1.3h-1.3zM251.7 229.5h1.3v1.3h-1.3zM255.5 229.5h1.3v1.3h-1.3zM246 231.4h1.3v1.3h-1.3zM255.5 231.4h1.3v1.3h-1.3zM253.6 233.3h1.3v1.3h-1.3zM246 235.2h1.3v1.3h-1.3zM255.5 235.2h1.3v1.3h-1.3z"/>
<path fill="#a0963f" d="M260.3 204.3h1.3v1.3h-1.3zM264.1 204.3h1.3v1.3h-1.3zM271.7 204.3h1.3v1.3h-1.3zM273.6 204.3h1.3v1.3h-1.3zM288.8 204.3h1.3v1.3h-1.3zM290.7 204.3h1.3v1.3h-1.3zM269.8 206.2h1.3v1.3h-1.3zM271.7 206.2h1.3v1.3h-1.3zM273.6 206.2h1.3v1.3h-1.3zM277.4 206.2h1.3v1.3h-1.3zM279.3 206.2h1.3v1.3h-1.3zM286.9 206.2h1.3v1.3h-1.3zM288.8 206.2h1.3v1.3h-1.3zM294.5 206.2h1.3v1.3h-1.3zM260.3 208.1h1.3v1.3h-1.3zM264.1 208.1h1.3v1.3h-1.3zM267.9 208.1h1.3v1.3h-1.3zM269.8 208.1h1.3v1.3h-1.3zM277.4 208.1h1.3v1.3h-1.3zM281.2 208.1h1.3v1.3h-1.3zM285 208.1h1.3v1.3h-1.3zM286.9 208.1h1.3v1.3h-1.3zM288.8 208.1h1.3v1.3h-1.3zM260.3 210h1.3v1.3h-1.3zM262.2 210h1.3v1.3h-1.3zM264.1 210h1.3v1.3h-1.3zM269.8 210h1.3v1.3h-1.3zM271.7 210h1.3v1.3h-1.3zM273.6 210h1.3v1.3h-1.3zM279.3 210h1.3v1.3h-1.3zM283.1 210h1.3v1.3h-1.3zM285 210h1.3v1.3h-1.3zM290.7 210h1.3v1.3h-1.3zM294.5 210h1.3v1.3h-1.3zM260.3 211.9h1.3v1.3h-1.3zM273.6 211.9h1.3v1.3h-1.3zM286.9 211.9h1.3v1.3h-1.3zM288.8 211.9h1.3v1.3h-1.3zM290.7 211.9h1.3v1.3h-1.3zM260.3 213.8h1.3v1.3h-1.3zM266 213.8h1.3v1.3h-1.3zM269.8 213.8h1.3v1.3h-1.3zM271.7 213.8h1.3v1.3h-1.3zM273.6 213.8h1.3v1.3h-1.3zM275.5 213.8h1.3v1.3h-1.3zM277.4 213.8h1.3v1.3h-1.3zM279.3 213.8h1.3v1.3h-1.3zM294.5 213.8h1.3v1.3h-1.3zM266 215.7h1.3v1.3h-1.3zM271.7 215.7h1.3v1.3h-1.3zM273.6 215.7h1.3v1.3h-1.3zM277.4 215.7h1.3v1.3h-1.3zM281.2 215.7h1.3v1.3h-1.3zM283.1 215.7h1.3v1.3h-1.3zM285 215.7h1.3v1.3h-1.3zM267.9 217.6h1.3v1.3h-1.3zM269.8 217.6h1.3v1.3h-1.3zM273.6 217.6h1.3v1.3h-1.3zM277.4 217.6h1.3v1.3h-1.3zM286.9 217.6h1.3v1.3h-1.3zM267.9 219.5h1.3v1.3h-1.3zM269.8 219.5h1.3v1.3h-1.3zM275.5 219.5h1.3v1.3h-1.3zM279.3 219.5h1.3v1.3h-1.3zM281.2 219.5h1.3v1.3h-1.3zM283.1 219.5h1.3v1.3h-1.3zM285 219.5h1.3v1.3h-1.3zM292.6 219.5h1.3v1.3h-1.3zM260.3 221.4h1.3v1.3h-1.3zM262.2 221.4h1.3v1.3h-1.3zM267.9 221.4h1.3v1.3h-1.3zM269.8 221.4h1.3v1.3h-1.3zM273.6 221.4h1.3v1.3h-1.3zM275.5 221.4h1.3v1.3h-1.3zM285 221.4h1.3v1.3h-1.3zM288.8 221.4h1.3v1.3h-1.3zM273.6 223.3h1.3v1.3h-1.3zM275.5 223.3h1.3v1.3h-1.3zM285 223.3h1.3v1.3h-1.3zM260.3 225.2h1.3v1.3h-1.3zM262.2 225.2h1.3v1.3h-1.3zM264.1 225.2h1.3v1.3h-1.3zM271.7 225.2h1.3v1.3h-1.3zM277.4 225.2h1.3v1.3h-1.3zM279.3 225.2h1.3v1.3h-1.3zM288.8 225.2h1.3v1.3h-1.3zM292.6 225.2h1.3v1.3h-1.3zM294.5 225.2h1.3v1.3h-1.3zM260.3 227.1h1.3v1.3h-1.3zM266 227.1h1.3v1.3h-1.3zM267.9 227.1h1.3v1.3h-1.3zM271.7 227.1h1.3v1.3h-1.3zM275.5 227.1h1.3v1.3h-1.3zM279.3 227.1h1.3v1.3h-1.3zM285 227.1h1.3v1.3h-1.3zM286.9 227.1h1.3v1.3h-1.3zM288.8 227.1h1.3v1.3h-1.3zM290.7 227.1h1.3v1.3h-1.3zM292.6 227.1h1.3v1.3h-1.3zM294.5 227.1h1.3v1.3h-1.3zM260.3 229h1.3v1.3h-1.3zM266 229h1.3v1.3h-1.3zM269.8 229h1.3v1.3h-1.3zM271.7 229h1.3v1.3h-1.3zM273.6 229h1.3v1.3h-1.3zM277.4 229h1.3v1.3h-1.3zM279.3 229h1.3v1.3h-1.3zM286.9 229h1.3v1.3h-1.3zM288.8 229h1.3v1.3h-1.3zM294.5 229h1.3v1.3h-1.3zM260.3 230.9h1.3v1.3h-1.3zM262.2 230.9h1.3v1.3h-1.3zM264.1 230.9h1.3v1.3h-1.3zM266 230.9h1.3v1.3h-1.3zM267.9 230.9h1.3v1.3h-1.3zM269.8 230.9h1.3v1.3h-1.3zM273.6 230.9h1.3v1.3h-1.3zM277.4 230.9h1.3v1.3h-1.3zM281.2 230.9h1.3v1.3h-1.3zM283.1 230.9h1.3v1.3h-1.3zM285 230.9h1.3v1.3h-1.3zM266 232.8h1.3v1.3h-1.3zM267.9 232.8h1.3v1.3h-1.3zM269.8 232.8h1.3v1.3h-1.3zM271.7 232.8h1.3v1.3h-1.3zM273.6 232.8h1.3v1.3h-1.3zM275.5 232.8h1.3v1.3h-1.3zM277.4 232.8h1.3v1.3h-1.3zM279.3 232.8h1.3v1.3h-1.3zM281.2 232.8h1.3v1.3h-1.3zM286.9 232.8h1.3v1.3h-1.3zM288.8 232.8h1.3v1.3h-1.3zM290.7 232.8h1.3v1.3h-1.3zM294.5 232.8h1.3v1.3h-1.3zM260.3 234.7h1.3v1.3h-1.3zM264.1 234.7h1.3v1.3h-1.3zM266 234.7h1.3v1.3h-1.3zM277.4 234.7h1.3v1.3h-1.3zM279.3 234.7h1.3v1.3h-1.3zM285 234.7h1.3v1.3h-1.3zM286.9 234.7h1.3v1.3h-1.3zM290.7 234.7h1.3v1.3h-1.3zM294.5 234.7h1.3v1.3h-1.3z"/>
<path fill="#85845c" d="M266 204.3h1.3v1.3h-1.3zM269.8 204.3h1.3v1.3h-1.3zM281.2 204.3h1.3v1.3h-1.3zM292.6 204.3h1.3v1.3h-1.3zM267.9 206.2h1.3v1.3h-1.3zM275.5 206.2h1.3v1.3h-1.3zM281.2 206.2h1.3v1.3h-1.3zM290.7 206.2h1.3v1.3h-1.3zM262.2 208.1h1.3v1.3h-1.3zM292.6 208.1h1.3v1.3h-1.3zM275.5 210h1.3v1.3h-1.3zM266 211.9h1.3v1.3h-1.3zM271.7 211.9h1.3v1.3h-1.3zM279.3 211.9h1.3v1.3h-1.3zM285 211.9h1.3v1.3h-1.3zM264.1 213.8h1.3v1.3h-1.3zM267.9 213.8h1.3v1.3h-1.3zM283.1 213.8h1.3v1.3h-1.3zM285 213.8h1.3v1.3h-1.3zM288.8 213.8h1.3v1.3h-1.3zM262.2 215.7h1.3v1.3h-1.3zM269.8 215.7h1.3v1.3h-1.3zM275.5 215.7h1.3v1.3h-1.3zM264.1 217.6h1.3v1.3h-1.3zM275.5 217.6h1.3v1.3h-1.3zM281.2 217.6h1.3v1.3h-1.3zM294.5 217.6h1.3v1.3h-1.3zM266 221.4h1.3v1.3h-1.3zM277.4 221.4h1.3v1.3h-1.3zM283.1 221.4h1.3v1.3h-1.3zM294.5 221.4h1.3v1.3h-1.3zM262.2 223.3h1.3v1.3h-1.3zM267.9 223.3h1.3v1.3h-1.3zM269.8 223.3h1.3v1.3h-1.3zM277.4 223.3h1.3v1.3h-1.3zM279.3 223.3h1.3v1.3h-1.3zM281.2 223.3h1.3v1.3h-1.3zM286.9 223.3h1.3v1.3h-1.3zM288.8 223.3h1.3v1.3h-1.3zM294.5 223.3h1.3v1.3h-1.3zM266 225.2h1.3v1.3h-1.3zM267.9 225.2h1.3v1.3h-1.3zM283.1 225.2h1.3v1.3h-1.3zM286.9 225.2h1.3v1.3h-1.3zM286.9 230.9h1.3v1.3h-1.3zM292.6 232.8h1.3v1.3h-1.3zM267.9 234.7h1.3v1.3h-1.3zM271.7 234.7h1.3v1.3h-1.3z"/>
<path fill="#3e4450" d="M267.9 204.3h1.3v1.3h-1.3zM285 204.3h1.3v1.3h-1.3zM286.9 204.3h1.3v1.3h-1.3zM260.3 206.2h1.3v1.3h-1.3zM262.2 206.2h1.3v1.3h-1.3zM264.1 206.2h1.3v1.3h-1.3zM266 206.2h1.3v1.3h-1.3zM292.6 206.2h1.3v1.3h-1.3zM275.5 208.1h1.3v1.3h-1.3zM283.1 208.1h1.3v1.3h-1.3zM290.7 208.1h1.3v1.3h-1.3zM266 210h1.3v1.3h-1.3zM277.4 210h1.3v1.3h-1.3zM281.2 210h1.3v1.3h-1.3zM286.9 210h1.3v1.3h-1.3zM264.1 211.9h1.3v1.3h-1.3zM267.9 211.9h1.3v1.3h-1.3zM269.8 211.9h1.3v1.3h-1.3zM281.2 211.9h1.3v1.3h-1.3zM283.1 211.9h1.3v1.3h-1.3zM292.6 213.8h1.3v1.3h-1.3zM260.3 215.7h1.3v1.3h-1.3zM264.1 215.7h1.3v1.3h-1.3zM267.9 215.7h1.3v1.3h-1.3zM290.7 215.7h1.3v1.3h-1.3zM292.6 215.7h1.3v1.3h-1.3zM260.3 217.6h1.3v1.3h-1.3zM262.2 217.6h1.3v1.3h-1.3zM271.7 217.6h1.3v1.3h-1.3zM288.8 217.6h1.3v1.3h-1.3zM292.6 217.6h1.3v1.3h-1.3zM260.3 219.5h1.3v1.3h-1.3zM266 219.5h1.3v1.3h-1.3zM277.4 219.5h1.3v1.3h-1.3zM286.9 219.5h1.3v1.3h-1.3zM294.5 219.5h1.3v1.3h-1.3zM271.7 221.4h1.3v1.3h-1.3zM279.3 221.4h1.3v1.3h-1.3zM260.3 223.3h1.3v1.3h-1.3zM266 223.3h1.3v1.3h-1.3zM271.7 223.3h1.3v1.3h-1.3zM290.7 223.3h1.3v1.3h-1.3zM292.6 223.3h1.3v1.3h-1.3zM269.8 225.2h1.3v1.3h-1.3zM275.5 225.2h1.3v1.3h-1.3zM285 225.2h1.3v1.3h-1.3zM290.7 225.2h1.3v1.3h-1.3zM269.8 227.1h1.3v1.3h-1.3zM281.2 227.1h1.3v1.3h-1.3zM283.1 227.1h1.3v1.3h-1.3zM262.2 229h1.3v1.3h-1.3zM264.1 229h1.3v1.3h-1.3zM285 229h1.3v1.3h-1.3zM288.8 230.9h1.3v1.3h-1.3zM260.3 232.8h1.3v1.3h-1.3zM262.2 234.7h1.3v1.3h-1.3zM281.2 234.7h1.3v1.3h-1.3zM283.1 234.7h1.3v1.3h-1.3zM288.8 234.7h1.3v1.3h-1.3z"/>
<path fill="#c4b640" d="M277.4 204.3h1.3v1.3h-1.3zM283.1 204.3h1.3v1.3h-1.3zM285 206.2h1.3v1.3h-1.3zM266 208.1h1.3v1.3h-1.3zM273.6 208.1h1.3v1.3h-1.3zM279.3 208.1h1.3v1.3h-1.3zM294.5 208.1h1.3v1.3h-1.3zM267.9 210h1.3v1.3h-1.3zM288.8 210h1.3v1.3h-1.3zM262.2 211.9h1.3v1.3h-1.3zM262.2 213.8h1.3v1.3h-1.3zM286.9 213.8h1.3v1.3h-1.3zM279.3 215.7h1.3v1.3h-1.3zM294.5 215.7h1.3v1.3h-1.3zM264.1 219.5h1.3v1.3h-1.3zM288.8 219.5h1.3v1.3h-1.3zM290.7 221.4h1.3v1.3h-1.3zM292.6 221.4h1.3v1.3h-1.3zM273.6 225.2h1.3v1.3h-1.3zM264.1 227.1h1.3v1.3h-1.3zM277.4 227.1h1.3v1.3h-1.3zM267.9 229h1.3v1.3h-1.3zM283.1 229h1.3v1.3h-1.3zM292.6 229h1.3v1.3h-1.3zM271.7 230.9h1.3v1.3h-1.3zM275.5 230.9h1.3v1.3h-1.3zM290.7 230.9h1.3v1.3h-1.3zM294.5 230.9h1.3v1.3h-1.3zM264.1 232.8h1.3v1.3h-1.3zM283.1 232.8h1.3v1.3h-1.3zM285 232.8h1.3v1.3h-1.3zM275.5 234.7h1.3v1.3h-1.3zM292.6 234.7h1.3v1.3h-1.3z"/>
<path fill="#b0a455" d="M245.6 260.7h1.2v1.2h-1.2zM247.5 260.7h1.2v1.2h-1.2zM251.3 260.7h1.2v1.2h-1.2zM253.2 260.7h1.2v1.2h-1.2zM258.9 260.7h1.2v1.2h-1.2zM243.7 262.6h1.2v1.2h-1.2zM241.8 264.5h1.2v1.2h-1.2zM257 264.5h1.2v1.2h-1.2zM243.7 266.4h1.2v1.2h-1.2zM241.8 268.3h1.2v1.2h-1.2zM247.5 268.3h1.2v1.2h-1.2zM249.4 268.3h1.2v1.2h-1.2zM257 270.2h1.2v1.2h-1.2z"/>
<path fill="#8a8a70" d="M255.9 279.3h1.2v1.2h-1.2zM257.8 279.3h1.2v1.2h-1.2zM267.3 279.3h1.2v1.2h-1.2zM269.2 279.3h1.2v1.2h-1.2zM255.9 281.2h1.2v1.2h-1.2zM259.7 281.2h1.2v1.2h-1.2zM255.9 283.1h1.2v1.2h-1.2zM261.6 283.1h1.2v1.2h-1.2zM267.3 283.1h1.2v1.2h-1.2zM267.3 285h1.2v1.2h-1.2zM255.9 288.8h1.2v1.2h-1.2zM257.8 288.8h1.2v1.2h-1.2zM259.7 288.8h1.2v1.2h-1.2zM263.5 288.8h1.2v1.2h-1.2zM261.6 290.7h1.2v1.2h-1.2zM263.5 290.7h1.2v1.2h-1.2z"/>
<path fill="#a39a4c" d="M263.5 279.3h1.2v1.2h-1.2zM261.6 281.2h1.2v1.2h-1.2zM267.3 281.2h1.2v1.2h-1.2zM263.5 283.1h1.2v1.2h-1.2zM255.9 285h1.2v1.2h-1.2zM257.8 285h1.2v1.2h-1.2zM259.7 285h1.2v1.2h-1.2zM261.6 285h1.2v1.2h-1.2zM263.5 285h1.2v1.2h-1.2zM265.4 285h1.2v1.2h-1.2zM255.9 286.9h1.2v1.2h-1.2zM257.8 286.9h1.2v1.2h-1.2zM267.3 288.8h1.2v1.2h-1.2zM257.8 290.7h1.2v1.2h-1.2zM267.3 290.7h1.2v1.2h-1.2zM328.9 194.8h1.3v1.3h-1.3zM332.7 194.8h1.3v1.3h-1.3zM336.5 194.8h1.3v1.3h-1.3zM344.1 194.8h1.3v1.3h-1.3zM346 194.8h1.3v1.3h-1.3zM351.7 194.8h1.3v1.3h-1.3zM357.4 194.8h1.3v1.3h-1.3zM363.1 194.8h1.3v1.3h-1.3zM365 194.8h1.3v1.3h-1.3zM366.9 194.8h1.3v1.3h-1.3zM336.5 196.7h1.3v1.3h-1.3zM342.2 196.7h1.3v1.3h-1.3zM351.7 196.7h1.3v1.3h-1.3zM353.6 196.7h1.3v1.3h-1.3zM355.5 196.7h1.3v1.3h-1.3zM359.3 196.7h1.3v1.3h-1.3zM361.2 196.7h1.3v1.3h-1.3zM365 196.7h1.3v1.3h-1.3zM366.9 196.7h1.3v1.3h-1.3zM370.7 196.7h1.3v1.3h-1.3zM372.6 196.7h1.3v1.3h-1.3zM332.7 198.6h1.3v1.3h-1.3zM334.6 198.6h1.3v1.3h-1.3zM338.4 198.6h1.3v1.3h-1.3zM340.3 198.6h1.3v1.3h-1.3zM342.2 198.6h1.3v1.3h-1.3zM346 198.6h1.3v1.3h-1.3zM347.9 198.6h1.3v1.3h-1.3zM349.8 198.6h1.3v1.3h-1.3zM366.9 198.6h1.3v1.3h-1.3zM370.7 198.6h1.3v1.3h-1.3zM332.7 200.5h1.3v1.3h-1.3zM340.3 200.5h1.3v1.3h-1.3zM347.9 200.5h1.3v1.3h-1.3zM351.7 200.5h1.3v1.3h-1.3zM357.4 200.5h1.3v1.3h-1.3zM365 200.5h1.3v1.3h-1.3zM330.8 202.4h1.3v1.3h-1.3zM338.4 202.4h1.3v1.3h-1.3zM342.2 202.4h1.3v1.3h-1.3zM347.9 202.4h1.3v1.3h-1.3zM351.7 202.4h1.3v1.3h-1.3zM357.4 202.4h1.3v1.3h-1.3zM359.3 202.4h1.3v1.3h-1.3zM361.2 202.4h1.3v1.3h-1.3zM372.6 202.4h1.3v1.3h-1.3zM328.9 204.3h1.3v1.3h-1.3zM332.7 204.3h1.3v1.3h-1.3zM346 204.3h1.3v1.3h-1.3zM347.9 204.3h1.3v1.3h-1.3zM349.8 204.3h1.3v1.3h-1.3zM355.5 204.3h1.3v1.3h-1.3zM370.7 204.3h1.3v1.3h-1.3zM332.7 206.2h1.3v1.3h-1.3zM342.2 206.2h1.3v1.3h-1.3zM346 206.2h1.3v1.3h-1.3zM359.3 206.2h1.3v1.3h-1.3zM342.2 208.1h1.3v1.3h-1.3zM346 208.1h1.3v1.3h-1.3zM353.6 208.1h1.3v1.3h-1.3zM359.3 208.1h1.3v1.3h-1.3zM363.1 208.1h1.3v1.3h-1.3zM365 208.1h1.3v1.3h-1.3zM336.5 210h1.3v1.3h-1.3zM338.4 210h1.3v1.3h-1.3zM344.1 210h1.3v1.3h-1.3zM351.7 210h1.3v1.3h-1.3zM361.2 210h1.3v1.3h-1.3zM363.1 210h1.3v1.3h-1.3zM328.9 211.9h1.3v1.3h-1.3zM336.5 211.9h1.3v1.3h-1.3zM340.3 211.9h1.3v1.3h-1.3zM344.1 211.9h1.3v1.3h-1.3zM346 211.9h1.3v1.3h-1.3zM351.7 211.9h1.3v1.3h-1.3zM353.6 211.9h1.3v1.3h-1.3zM357.4 211.9h1.3v1.3h-1.3zM359.3 211.9h1.3v1.3h-1.3zM361.2 211.9h1.3v1.3h-1.3zM365 211.9h1.3v1.3h-1.3zM366.9 211.9h1.3v1.3h-1.3zM368.8 211.9h1.3v1.3h-1.3zM349.8 213.8h1.3v1.3h-1.3zM355.5 213.8h1.3v1.3h-1.3zM361.2 213.8h1.3v1.3h-1.3zM366.9 213.8h1.3v1.3h-1.3zM370.7 213.8h1.3v1.3h-1.3zM359.3 215.7h1.3v1.3h-1.3zM361.2 215.7h1.3v1.3h-1.3zM365 215.7h1.3v1.3h-1.3zM357.4 217.6h1.3v1.3h-1.3zM365 217.6h1.3v1.3h-1.3zM330.8 219.5h1.3v1.3h-1.3zM346 219.5h1.3v1.3h-1.3zM357.4 219.5h1.3v1.3h-1.3zM370.7 219.5h1.3v1.3h-1.3zM359.3 221.4h1.3v1.3h-1.3zM363.1 221.4h1.3v1.3h-1.3zM370.7 221.4h1.3v1.3h-1.3zM346 223.3h1.3v1.3h-1.3zM347.9 223.3h1.3v1.3h-1.3zM349.8 223.3h1.3v1.3h-1.3zM359.3 223.3h1.3v1.3h-1.3zM361.2 223.3h1.3v1.3h-1.3zM365 223.3h1.3v1.3h-1.3zM366.9 223.3h1.3v1.3h-1.3zM368.8 223.3h1.3v1.3h-1.3zM370.7 223.3h1.3v1.3h-1.3zM347.9 225.2h1.3v1.3h-1.3zM353.6 225.2h1.3v1.3h-1.3zM355.5 225.2h1.3v1.3h-1.3zM357.4 225.2h1.3v1.3h-1.3zM359.3 225.2h1.3v1.3h-1.3zM361.2 225.2h1.3v1.3h-1.3zM363.1 225.2h1.3v1.3h-1.3zM368.8 225.2h1.3v1.3h-1.3zM328.9 227.1h1.3v1.3h-1.3zM334.6 227.1h1.3v1.3h-1.3zM336.5 227.1h1.3v1.3h-1.3zM338.4 227.1h1.3v1.3h-1.3zM342.2 227.1h1.3v1.3h-1.3zM344.1 227.1h1.3v1.3h-1.3zM353.6 227.1h1.3v1.3h-1.3zM357.4 227.1h1.3v1.3h-1.3zM359.3 227.1h1.3v1.3h-1.3zM363.1 227.1h1.3v1.3h-1.3zM365 227.1h1.3v1.3h-1.3zM372.6 227.1h1.3v1.3h-1.3zM328.9 229h1.3v1.3h-1.3zM330.8 229h1.3v1.3h-1.3zM336.5 229h1.3v1.3h-1.3zM338.4 229h1.3v1.3h-1.3zM340.3 229h1.3v1.3h-1.3zM342.2 229h1.3v1.3h-1.3zM349.8 229h1.3v1.3h-1.3zM351.7 229h1.3v1.3h-1.3zM353.6 229h1.3v1.3h-1.3zM365 229h1.3v1.3h-1.3zM366.9 229h1.3v1.3h-1.3zM368.8 229h1.3v1.3h-1.3zM370.7 229h1.3v1.3h-1.3zM330.8 230.9h1.3v1.3h-1.3zM334.6 230.9h1.3v1.3h-1.3zM338.4 230.9h1.3v1.3h-1.3zM344.1 230.9h1.3v1.3h-1.3zM349.8 230.9h1.3v1.3h-1.3zM353.6 230.9h1.3v1.3h-1.3zM355.5 230.9h1.3v1.3h-1.3zM366.9 230.9h1.3v1.3h-1.3zM368.8 230.9h1.3v1.3h-1.3zM370.7 230.9h1.3v1.3h-1.3zM328.9 232.8h1.3v1.3h-1.3zM338.4 232.8h1.3v1.3h-1.3zM342.2 232.8h1.3v1.3h-1.3zM353.6 232.8h1.3v1.3h-1.3zM355.5 232.8h1.3v1.3h-1.3zM361.2 232.8h1.3v1.3h-1.3zM366.9 232.8h1.3v1.3h-1.3zM368.8 232.8h1.3v1.3h-1.3zM330.8 234.7h1.3v1.3h-1.3zM332.7 234.7h1.3v1.3h-1.3zM334.6 234.7h1.3v1.3h-1.3zM342.2 234.7h1.3v1.3h-1.3zM353.6 234.7h1.3v1.3h-1.3zM368.8 234.7h1.3v1.3h-1.3zM328.9 236.6h1.3v1.3h-1.3zM334.6 236.6h1.3v1.3h-1.3zM338.4 236.6h1.3v1.3h-1.3zM347.9 236.6h1.3v1.3h-1.3zM349.8 236.6h1.3v1.3h-1.3zM357.4 236.6h1.3v1.3h-1.3zM368.8 236.6h1.3v1.3h-1.3zM330.8 238.5h1.3v1.3h-1.3zM334.6 238.5h1.3v1.3h-1.3zM336.5 238.5h1.3v1.3h-1.3zM338.4 238.5h1.3v1.3h-1.3zM361.2 238.5h1.3v1.3h-1.3zM370.7 238.5h1.3v1.3h-1.3zM332.7 240.4h1.3v1.3h-1.3zM336.5 240.4h1.3v1.3h-1.3zM338.4 240.4h1.3v1.3h-1.3zM340.3 240.4h1.3v1.3h-1.3zM342.2 240.4h1.3v1.3h-1.3zM334.6 242.3h1.3v1.3h-1.3zM336.5 242.3h1.3v1.3h-1.3zM357.4 242.3h1.3v1.3h-1.3zM361.2 242.3h1.3v1.3h-1.3zM368.8 242.3h1.3v1.3h-1.3zM330.8 244.2h1.3v1.3h-1.3zM334.6 244.2h1.3v1.3h-1.3zM342.2 244.2h1.3v1.3h-1.3zM353.6 244.2h1.3v1.3h-1.3zM355.5 244.2h1.3v1.3h-1.3zM359.3 244.2h1.3v1.3h-1.3zM365 244.2h1.3v1.3h-1.3zM366.9 244.2h1.3v1.3h-1.3zM370.7 244.2h1.3v1.3h-1.3zM330.8 246.1h1.3v1.3h-1.3zM332.7 246.1h1.3v1.3h-1.3zM342.2 246.1h1.3v1.3h-1.3zM353.6 246.1h1.3v1.3h-1.3zM355.5 246.1h1.3v1.3h-1.3zM363.1 246.1h1.3v1.3h-1.3zM365 246.1h1.3v1.3h-1.3zM372.6 246.1h1.3v1.3h-1.3zM334.6 248h1.3v1.3h-1.3zM340.3 248h1.3v1.3h-1.3zM342.2 248h1.3v1.3h-1.3zM353.6 248h1.3v1.3h-1.3zM328.9 249.9h1.3v1.3h-1.3zM332.7 249.9h1.3v1.3h-1.3zM340.3 249.9h1.3v1.3h-1.3zM344.1 249.9h1.3v1.3h-1.3zM346 249.9h1.3v1.3h-1.3zM347.9 249.9h1.3v1.3h-1.3zM351.7 249.9h1.3v1.3h-1.3zM359.3 249.9h1.3v1.3h-1.3zM361.2 249.9h1.3v1.3h-1.3zM372.6 249.9h1.3v1.3h-1.3z"/>
<path fill="#8d93b4" d="M280.8 272.8h1.5v1.5h-1.5zM282.9 272.8h1.5v1.5h-1.5zM287 272.8h1.5v1.5h-1.5zM295.2 272.8h1.5v1.5h-1.5zM297.2 272.8h1.5v1.5h-1.5zM299.3 272.8h1.5v1.5h-1.5zM303.4 272.8h1.5v1.5h-1.5zM311.6 272.8h1.5v1.5h-1.5zM313.6 272.8h1.5v1.5h-1.5zM287 274.9h1.5v1.5h-1.5zM299.3 274.9h1.5v1.5h-1.5zM313.6 274.9h1.5v1.5h-1.5zM284.9 276.9h1.5v1.5h-1.5zM289 276.9h1.5v1.5h-1.5zM303.4 276.9h1.5v1.5h-1.5zM307.5 276.9h1.5v1.5h-1.5zM293.1 279h1.5v1.5h-1.5zM297.2 279h1.5v1.5h-1.5zM305.4 279h1.5v1.5h-1.5zM307.5 279h1.5v1.5h-1.5zM311.6 279h1.5v1.5h-1.5zM313.6 279h1.5v1.5h-1.5zM284.9 281h1.5v1.5h-1.5zM291.1 281h1.5v1.5h-1.5zM293.1 281h1.5v1.5h-1.5zM295.2 281h1.5v1.5h-1.5zM307.5 281h1.5v1.5h-1.5zM284.9 283.1h1.5v1.5h-1.5zM287 283.1h1.5v1.5h-1.5zM295.2 283.1h1.5v1.5h-1.5zM297.2 283.1h1.5v1.5h-1.5zM307.5 283.1h1.5v1.5h-1.5zM309.5 283.1h1.5v1.5h-1.5zM311.6 283.1h1.5v1.5h-1.5zM315.7 283.1h1.5v1.5h-1.5zM280.8 285.1h1.5v1.5h-1.5zM293.1 285.1h1.5v1.5h-1.5zM297.2 285.1h1.5v1.5h-1.5zM301.3 285.1h1.5v1.5h-1.5zM303.4 285.1h1.5v1.5h-1.5zM305.4 285.1h1.5v1.5h-1.5zM315.7 285.1h1.5v1.5h-1.5zM317.7 285.1h1.5v1.5h-1.5zM280.8 287.2h1.5v1.5h-1.5zM282.9 287.2h1.5v1.5h-1.5zM289 287.2h1.5v1.5h-1.5zM299.3 287.2h1.5v1.5h-1.5zM307.5 287.2h1.5v1.5h-1.5zM280.8 289.2h1.5v1.5h-1.5zM287 289.2h1.5v1.5h-1.5zM297.2 289.2h1.5v1.5h-1.5zM307.5 289.2h1.5v1.5h-1.5zM311.6 289.2h1.5v1.5h-1.5zM282.9 291.3h1.5v1.5h-1.5zM284.9 291.3h1.5v1.5h-1.5zM289 291.3h1.5v1.5h-1.5zM299.3 291.3h1.5v1.5h-1.5zM303.4 291.3h1.5v1.5h-1.5zM305.4 291.3h1.5v1.5h-1.5zM307.5 291.3h1.5v1.5h-1.5zM315.7 291.3h1.5v1.5h-1.5zM280.8 293.3h1.5v1.5h-1.5zM287 293.3h1.5v1.5h-1.5zM289 293.3h1.5v1.5h-1.5zM293.1 293.3h1.5v1.5h-1.5zM295.2 293.3h1.5v1.5h-1.5zM303.4 293.3h1.5v1.5h-1.5zM309.5 293.3h1.5v1.5h-1.5zM311.6 293.3h1.5v1.5h-1.5zM313.6 293.3h1.5v1.5h-1.5zM329.3 278.8h1.3v1.3h-1.3zM335.1 278.8h1.3v1.3h-1.3zM337.1 278.8h1.3v1.3h-1.3zM342.9 278.8h1.3v1.3h-1.3zM348.8 278.8h1.3v1.3h-1.3zM341 280.8h1.3v1.3h-1.3zM344.9 280.8h1.3v1.3h-1.3zM352.7 280.8h1.3v1.3h-1.3zM346.8 282.7h1.3v1.3h-1.3zM348.8 282.7h1.3v1.3h-1.3zM337.1 284.6h1.3v1.3h-1.3zM341 284.6h1.3v1.3h-1.3zM352.7 286.6h1.3v1.3h-1.3zM335.1 288.5h1.3v1.3h-1.3zM337.1 288.5h1.3v1.3h-1.3zM339 288.5h1.3v1.3h-1.3zM346.8 288.5h1.3v1.3h-1.3zM335.1 290.5h1.3v1.3h-1.3zM342.9 290.5h1.3v1.3h-1.3zM342.9 292.4h1.3v1.3h-1.3zM346.8 292.4h1.3v1.3h-1.3zM335.1 294.4h1.3v1.3h-1.3zM333.2 296.3h1.3v1.3h-1.3zM348.8 296.3h1.3v1.3h-1.3zM331.2 298.3h1.3v1.3h-1.3zM339 298.3h1.3v1.3h-1.3zM344.9 298.3h1.3v1.3h-1.3zM335.1 300.2h1.3v1.3h-1.3z"/>
<path fill="#cfd0b4" d="M289 272.8h1.5v1.5h-1.5zM291.1 272.8h1.5v1.5h-1.5zM307.5 272.8h1.5v1.5h-1.5zM315.7 272.8h1.5v1.5h-1.5zM317.7 272.8h1.5v1.5h-1.5zM307.5 274.9h1.5v1.5h-1.5zM282.9 276.9h1.5v1.5h-1.5zM309.5 276.9h1.5v1.5h-1.5zM291.1 279h1.5v1.5h-1.5zM289 281h1.5v1.5h-1.5zM315.7 281h1.5v1.5h-1.5zM282.9 283.1h1.5v1.5h-1.5zM293.1 283.1h1.5v1.5h-1.5zM305.4 283.1h1.5v1.5h-1.5zM295.2 285.1h1.5v1.5h-1.5zM299.3 285.1h1.5v1.5h-1.5zM309.5 285.1h1.5v1.5h-1.5zM311.6 285.1h1.5v1.5h-1.5zM284.9 287.2h1.5v1.5h-1.5zM295.2 287.2h1.5v1.5h-1.5zM317.7 287.2h1.5v1.5h-1.5zM284.9 289.2h1.5v1.5h-1.5zM295.2 289.2h1.5v1.5h-1.5zM309.5 289.2h1.5v1.5h-1.5zM287 291.3h1.5v1.5h-1.5zM295.2 291.3h1.5v1.5h-1.5zM284.9 293.3h1.5v1.5h-1.5zM307.5 293.3h1.5v1.5h-1.5zM317.7 293.3h1.5v1.5h-1.5zM334.6 194.8h1.3v1.3h-1.3zM370.7 194.8h1.3v1.3h-1.3zM372.6 194.8h1.3v1.3h-1.3zM334.6 196.7h1.3v1.3h-1.3zM338.4 196.7h1.3v1.3h-1.3zM340.3 196.7h1.3v1.3h-1.3zM359.3 200.5h1.3v1.3h-1.3zM368.8 200.5h1.3v1.3h-1.3zM363.1 202.4h1.3v1.3h-1.3zM368.8 202.4h1.3v1.3h-1.3zM361.2 204.3h1.3v1.3h-1.3zM330.8 206.2h1.3v1.3h-1.3zM368.8 206.2h1.3v1.3h-1.3zM328.9 208.1h1.3v1.3h-1.3zM347.9 208.1h1.3v1.3h-1.3zM349.8 208.1h1.3v1.3h-1.3zM342.2 211.9h1.3v1.3h-1.3zM330.8 213.8h1.3v1.3h-1.3zM372.6 213.8h1.3v1.3h-1.3zM361.2 217.6h1.3v1.3h-1.3zM361.2 221.4h1.3v1.3h-1.3zM365 221.4h1.3v1.3h-1.3zM368.8 221.4h1.3v1.3h-1.3zM346 225.2h1.3v1.3h-1.3zM347.9 227.1h1.3v1.3h-1.3zM332.7 230.9h1.3v1.3h-1.3zM365 230.9h1.3v1.3h-1.3zM349.8 234.7h1.3v1.3h-1.3zM351.7 234.7h1.3v1.3h-1.3zM357.4 234.7h1.3v1.3h-1.3zM344.1 236.6h1.3v1.3h-1.3zM340.3 238.5h1.3v1.3h-1.3zM342.2 238.5h1.3v1.3h-1.3zM355.5 238.5h1.3v1.3h-1.3zM363.1 240.4h1.3v1.3h-1.3zM368.8 240.4h1.3v1.3h-1.3zM370.7 240.4h1.3v1.3h-1.3zM330.8 242.3h1.3v1.3h-1.3zM338.4 244.2h1.3v1.3h-1.3zM357.4 244.2h1.3v1.3h-1.3zM332.7 248h1.3v1.3h-1.3zM344.1 248h1.3v1.3h-1.3zM368.8 248h1.3v1.3h-1.3zM330.8 249.9h1.3v1.3h-1.3zM399.8 184.3h1.3v1.3h-1.3zM397.8 186.2h1.3v1.3h-1.3zM413.4 197.9h1.3v1.3h-1.3zM397.8 199.9h1.3v1.3h-1.3zM425.1 199.9h1.3v1.3h-1.3zM415.3 201.8h1.3v1.3h-1.3zM421.2 203.8h1.3v1.3h-1.3zM417.3 205.7h1.3v1.3h-1.3zM397.8 217.4h1.3v1.3h-1.3zM425.1 219.4h1.3v1.3h-1.3zM411.4 221.3h1.3v1.3h-1.3zM435.2 183.8h1.3v1.3h-1.3zM437.1 183.8h1.3v1.3h-1.3zM448.8 183.8h1.3v1.3h-1.3zM464.4 183.8h1.3v1.3h-1.3zM433.2 185.8h1.3v1.3h-1.3zM435.2 185.8h1.3v1.3h-1.3zM439.1 185.8h1.3v1.3h-1.3zM443 185.8h1.3v1.3h-1.3zM450.8 185.8h1.3v1.3h-1.3zM458.6 185.8h1.3v1.3h-1.3zM439.1 187.7h1.3v1.3h-1.3zM454.7 187.7h1.3v1.3h-1.3zM456.6 187.7h1.3v1.3h-1.3zM460.5 187.7h1.3v1.3h-1.3zM439.1 189.6h1.3v1.3h-1.3zM458.6 189.6h1.3v1.3h-1.3zM460.5 189.6h1.3v1.3h-1.3zM431.3 191.6h1.3v1.3h-1.3zM452.7 191.6h1.3v1.3h-1.3zM458.6 191.6h1.3v1.3h-1.3zM460.5 191.6h1.3v1.3h-1.3zM462.5 191.6h1.3v1.3h-1.3zM431.3 193.5h1.3v1.3h-1.3zM437.1 193.5h1.3v1.3h-1.3zM439.1 193.5h1.3v1.3h-1.3zM441 193.5h1.3v1.3h-1.3zM444.9 193.5h1.3v1.3h-1.3zM456.6 193.5h1.3v1.3h-1.3zM464.4 193.5h1.3v1.3h-1.3zM431.3 198.3h1.2v1.2h-1.2zM452.7 198.3h1.2v1.2h-1.2zM456.6 198.3h1.2v1.2h-1.2zM460.5 198.3h1.2v1.2h-1.2zM462.5 198.3h1.2v1.2h-1.2zM441 200.2h1.2v1.2h-1.2zM464.4 200.2h1.2v1.2h-1.2zM431.3 202.2h1.2v1.2h-1.2zM433.2 206.1h1.2v1.2h-1.2zM443 208h1.2v1.2h-1.2zM444.9 208h1.2v1.2h-1.2zM444.9 213.9h1.2v1.2h-1.2zM437.1 215.8h1.2v1.2h-1.2zM431.3 217.8h1.2v1.2h-1.2zM439.1 217.8h1.2v1.2h-1.2zM444.9 217.8h1.2v1.2h-1.2zM431.3 219.7h1.2v1.2h-1.2zM444.9 219.7h1.2v1.2h-1.2zM458.6 219.7h1.2v1.2h-1.2zM435.2 221.7h1.2v1.2h-1.2zM444.9 221.7h1.2v1.2h-1.2zM454.7 221.7h1.2v1.2h-1.2zM464.4 221.7h1.2v1.2h-1.2z"/>
<path fill="#6b6a55" d="M318.6 183.6h1.3v1.3h-1.3zM326.2 183.6h1.3v1.3h-1.3zM328.1 183.6h1.3v1.3h-1.3zM350.9 183.6h1.3v1.3h-1.3zM354.7 183.6h1.3v1.3h-1.3zM356.6 183.6h1.3v1.3h-1.3zM358.5 183.6h1.3v1.3h-1.3zM375.6 183.6h1.3v1.3h-1.3zM377.5 183.6h1.3v1.3h-1.3zM326.2 185.5h1.3v1.3h-1.3zM335.7 185.5h1.3v1.3h-1.3zM347.1 185.5h1.3v1.3h-1.3zM371.8 185.5h1.3v1.3h-1.3zM381.3 185.5h1.3v1.3h-1.3zM322.4 187.4h1.3v1.3h-1.3zM328.1 187.4h1.3v1.3h-1.3zM333.8 187.4h1.3v1.3h-1.3zM335.7 187.4h1.3v1.3h-1.3zM352.8 187.4h1.3v1.3h-1.3zM356.6 187.4h1.3v1.3h-1.3zM364.2 187.4h1.3v1.3h-1.3zM366.1 187.4h1.3v1.3h-1.3zM368 187.4h1.3v1.3h-1.3zM369.9 187.4h1.3v1.3h-1.3zM373.7 187.4h1.3v1.3h-1.3zM379.4 187.4h1.3v1.3h-1.3zM328.1 189.3h1.3v1.3h-1.3zM331.9 189.3h1.3v1.3h-1.3zM350.9 189.3h1.3v1.3h-1.3zM358.5 189.3h1.3v1.3h-1.3zM364.2 189.3h1.3v1.3h-1.3zM369.9 189.3h1.3v1.3h-1.3zM322.4 191.2h1.3v1.3h-1.3zM381.3 191.2h1.3v1.3h-1.3zM324.3 193.1h1.3v1.3h-1.3zM381.3 193.1h1.3v1.3h-1.3zM324.3 196.9h1.3v1.3h-1.3zM318.6 198.8h1.3v1.3h-1.3zM318.6 204.5h1.3v1.3h-1.3zM320.5 204.5h1.3v1.3h-1.3zM318.6 206.4h1.3v1.3h-1.3zM379.4 208.3h1.3v1.3h-1.3zM320.5 210.2h1.3v1.3h-1.3zM322.4 210.2h1.3v1.3h-1.3zM324.3 210.2h1.3v1.3h-1.3zM379.4 210.2h1.3v1.3h-1.3zM318.6 212.1h1.3v1.3h-1.3zM318.6 214h1.3v1.3h-1.3zM324.3 214h1.3v1.3h-1.3zM379.4 214h1.3v1.3h-1.3zM318.6 215.9h1.3v1.3h-1.3zM320.5 215.9h1.3v1.3h-1.3zM318.6 221.6h1.3v1.3h-1.3zM320.5 221.6h1.3v1.3h-1.3zM322.4 221.6h1.3v1.3h-1.3zM379.4 223.5h1.3v1.3h-1.3zM324.3 225.4h1.3v1.3h-1.3zM379.4 225.4h1.3v1.3h-1.3zM324.3 229.2h1.3v1.3h-1.3zM381.3 229.2h1.3v1.3h-1.3zM318.6 231.1h1.3v1.3h-1.3zM322.4 231.1h1.3v1.3h-1.3zM322.4 233h1.3v1.3h-1.3zM324.3 233h1.3v1.3h-1.3zM318.6 234.9h1.3v1.3h-1.3zM320.5 234.9h1.3v1.3h-1.3zM318.6 240.6h1.3v1.3h-1.3zM320.5 240.6h1.3v1.3h-1.3zM324.3 240.6h1.3v1.3h-1.3zM381.3 240.6h1.3v1.3h-1.3zM318.6 242.5h1.3v1.3h-1.3zM324.3 242.5h1.3v1.3h-1.3zM379.4 242.5h1.3v1.3h-1.3zM318.6 244.4h1.3v1.3h-1.3zM379.4 244.4h1.3v1.3h-1.3zM318.6 246.3h1.3v1.3h-1.3zM320.5 246.3h1.3v1.3h-1.3zM324.3 246.3h1.3v1.3h-1.3zM379.4 246.3h1.3v1.3h-1.3zM379.4 248.2h1.3v1.3h-1.3zM381.3 248.2h1.3v1.3h-1.3zM318.6 250.1h1.3v1.3h-1.3zM379.4 250.1h1.3v1.3h-1.3zM381.3 252h1.3v1.3h-1.3zM330 253.9h1.3v1.3h-1.3zM331.9 253.9h1.3v1.3h-1.3zM335.7 253.9h1.3v1.3h-1.3zM345.2 253.9h1.3v1.3h-1.3zM349 253.9h1.3v1.3h-1.3zM350.9 253.9h1.3v1.3h-1.3zM354.7 253.9h1.3v1.3h-1.3zM360.4 253.9h1.3v1.3h-1.3zM362.3 253.9h1.3v1.3h-1.3zM364.2 253.9h1.3v1.3h-1.3zM368 253.9h1.3v1.3h-1.3zM375.6 253.9h1.3v1.3h-1.3zM379.4 253.9h1.3v1.3h-1.3zM318.6 255.8h1.3v1.3h-1.3zM320.5 255.8h1.3v1.3h-1.3zM324.3 255.8h1.3v1.3h-1.3zM330 255.8h1.3v1.3h-1.3zM333.8 255.8h1.3v1.3h-1.3zM343.3 255.8h1.3v1.3h-1.3zM345.2 255.8h1.3v1.3h-1.3zM364.2 255.8h1.3v1.3h-1.3zM381.3 255.8h1.3v1.3h-1.3zM320.5 257.7h1.3v1.3h-1.3zM328.1 257.7h1.3v1.3h-1.3zM337.6 257.7h1.3v1.3h-1.3zM345.2 257.7h1.3v1.3h-1.3zM347.1 257.7h1.3v1.3h-1.3zM349 257.7h1.3v1.3h-1.3zM356.6 257.7h1.3v1.3h-1.3zM358.5 257.7h1.3v1.3h-1.3zM360.4 257.7h1.3v1.3h-1.3zM362.3 257.7h1.3v1.3h-1.3zM371.8 257.7h1.3v1.3h-1.3zM375.6 257.7h1.3v1.3h-1.3zM379.4 257.7h1.3v1.3h-1.3zM330 259.6h1.3v1.3h-1.3zM335.7 259.6h1.3v1.3h-1.3zM347.1 259.6h1.3v1.3h-1.3zM349 259.6h1.3v1.3h-1.3zM364.2 259.6h1.3v1.3h-1.3z"/>
<path fill="#8f8440" d="M322.4 183.6h1.3v1.3h-1.3zM331.9 183.6h1.3v1.3h-1.3zM333.8 183.6h1.3v1.3h-1.3zM337.6 183.6h1.3v1.3h-1.3zM343.3 183.6h1.3v1.3h-1.3zM345.2 183.6h1.3v1.3h-1.3zM347.1 183.6h1.3v1.3h-1.3zM349 183.6h1.3v1.3h-1.3zM352.8 183.6h1.3v1.3h-1.3zM360.4 183.6h1.3v1.3h-1.3zM364.2 183.6h1.3v1.3h-1.3zM368 183.6h1.3v1.3h-1.3zM369.9 183.6h1.3v1.3h-1.3zM373.7 183.6h1.3v1.3h-1.3zM381.3 183.6h1.3v1.3h-1.3zM320.5 185.5h1.3v1.3h-1.3zM339.5 185.5h1.3v1.3h-1.3zM341.4 185.5h1.3v1.3h-1.3zM343.3 185.5h1.3v1.3h-1.3zM345.2 185.5h1.3v1.3h-1.3zM349 185.5h1.3v1.3h-1.3zM354.7 185.5h1.3v1.3h-1.3zM356.6 185.5h1.3v1.3h-1.3zM358.5 185.5h1.3v1.3h-1.3zM360.4 185.5h1.3v1.3h-1.3zM362.3 185.5h1.3v1.3h-1.3zM364.2 185.5h1.3v1.3h-1.3zM368 185.5h1.3v1.3h-1.3zM369.9 185.5h1.3v1.3h-1.3zM377.5 185.5h1.3v1.3h-1.3zM379.4 185.5h1.3v1.3h-1.3zM318.6 187.4h1.3v1.3h-1.3zM324.3 187.4h1.3v1.3h-1.3zM326.2 187.4h1.3v1.3h-1.3zM331.9 187.4h1.3v1.3h-1.3zM339.5 187.4h1.3v1.3h-1.3zM341.4 187.4h1.3v1.3h-1.3zM343.3 187.4h1.3v1.3h-1.3zM345.2 187.4h1.3v1.3h-1.3zM347.1 187.4h1.3v1.3h-1.3zM350.9 187.4h1.3v1.3h-1.3zM371.8 187.4h1.3v1.3h-1.3zM377.5 187.4h1.3v1.3h-1.3zM381.3 187.4h1.3v1.3h-1.3zM320.5 189.3h1.3v1.3h-1.3zM322.4 189.3h1.3v1.3h-1.3zM326.2 189.3h1.3v1.3h-1.3zM330 189.3h1.3v1.3h-1.3zM333.8 189.3h1.3v1.3h-1.3zM335.7 189.3h1.3v1.3h-1.3zM339.5 189.3h1.3v1.3h-1.3zM343.3 189.3h1.3v1.3h-1.3zM347.1 189.3h1.3v1.3h-1.3zM349 189.3h1.3v1.3h-1.3zM354.7 189.3h1.3v1.3h-1.3zM356.6 189.3h1.3v1.3h-1.3zM362.3 189.3h1.3v1.3h-1.3zM366.1 189.3h1.3v1.3h-1.3zM375.6 189.3h1.3v1.3h-1.3zM379.4 189.3h1.3v1.3h-1.3zM381.3 189.3h1.3v1.3h-1.3zM324.3 191.2h1.3v1.3h-1.3zM379.4 191.2h1.3v1.3h-1.3zM318.6 193.1h1.3v1.3h-1.3zM379.4 193.1h1.3v1.3h-1.3zM318.6 195h1.3v1.3h-1.3zM320.5 195h1.3v1.3h-1.3zM322.4 195h1.3v1.3h-1.3zM381.3 195h1.3v1.3h-1.3zM318.6 196.9h1.3v1.3h-1.3zM322.4 196.9h1.3v1.3h-1.3zM379.4 196.9h1.3v1.3h-1.3zM322.4 198.8h1.3v1.3h-1.3zM324.3 198.8h1.3v1.3h-1.3zM379.4 198.8h1.3v1.3h-1.3zM381.3 198.8h1.3v1.3h-1.3zM320.5 200.7h1.3v1.3h-1.3zM322.4 200.7h1.3v1.3h-1.3zM324.3 200.7h1.3v1.3h-1.3zM318.6 202.6h1.3v1.3h-1.3zM320.5 202.6h1.3v1.3h-1.3zM379.4 202.6h1.3v1.3h-1.3zM381.3 204.5h1.3v1.3h-1.3zM320.5 206.4h1.3v1.3h-1.3zM324.3 206.4h1.3v1.3h-1.3zM379.4 206.4h1.3v1.3h-1.3zM318.6 208.3h1.3v1.3h-1.3zM324.3 208.3h1.3v1.3h-1.3zM324.3 212.1h1.3v1.3h-1.3zM320.5 214h1.3v1.3h-1.3zM381.3 214h1.3v1.3h-1.3zM381.3 215.9h1.3v1.3h-1.3zM318.6 217.8h1.3v1.3h-1.3zM324.3 217.8h1.3v1.3h-1.3zM379.4 217.8h1.3v1.3h-1.3zM318.6 219.7h1.3v1.3h-1.3zM381.3 219.7h1.3v1.3h-1.3zM324.3 221.6h1.3v1.3h-1.3zM322.4 223.5h1.3v1.3h-1.3zM324.3 223.5h1.3v1.3h-1.3zM381.3 223.5h1.3v1.3h-1.3zM318.6 225.4h1.3v1.3h-1.3zM320.5 225.4h1.3v1.3h-1.3zM322.4 225.4h1.3v1.3h-1.3zM318.6 227.3h1.3v1.3h-1.3zM320.5 227.3h1.3v1.3h-1.3zM322.4 227.3h1.3v1.3h-1.3zM379.4 227.3h1.3v1.3h-1.3zM318.6 229.2h1.3v1.3h-1.3zM320.5 229.2h1.3v1.3h-1.3zM379.4 229.2h1.3v1.3h-1.3zM324.3 231.1h1.3v1.3h-1.3zM381.3 231.1h1.3v1.3h-1.3zM318.6 233h1.3v1.3h-1.3zM379.4 233h1.3v1.3h-1.3zM381.3 233h1.3v1.3h-1.3zM324.3 234.9h1.3v1.3h-1.3zM379.4 234.9h1.3v1.3h-1.3zM381.3 234.9h1.3v1.3h-1.3zM318.6 236.8h1.3v1.3h-1.3zM379.4 236.8h1.3v1.3h-1.3zM381.3 236.8h1.3v1.3h-1.3zM318.6 238.7h1.3v1.3h-1.3zM322.4 238.7h1.3v1.3h-1.3zM379.4 238.7h1.3v1.3h-1.3zM381.3 238.7h1.3v1.3h-1.3zM322.4 240.6h1.3v1.3h-1.3zM320.5 242.5h1.3v1.3h-1.3zM322.4 242.5h1.3v1.3h-1.3zM322.4 244.4h1.3v1.3h-1.3zM324.3 244.4h1.3v1.3h-1.3zM381.3 244.4h1.3v1.3h-1.3zM322.4 248.2h1.3v1.3h-1.3zM324.3 248.2h1.3v1.3h-1.3zM322.4 250.1h1.3v1.3h-1.3zM381.3 250.1h1.3v1.3h-1.3zM322.4 252h1.3v1.3h-1.3zM324.3 252h1.3v1.3h-1.3zM318.6 253.9h1.3v1.3h-1.3zM320.5 253.9h1.3v1.3h-1.3zM322.4 253.9h1.3v1.3h-1.3zM324.3 253.9h1.3v1.3h-1.3zM326.2 253.9h1.3v1.3h-1.3zM328.1 253.9h1.3v1.3h-1.3zM339.5 253.9h1.3v1.3h-1.3zM341.4 253.9h1.3v1.3h-1.3zM343.3 253.9h1.3v1.3h-1.3zM356.6 253.9h1.3v1.3h-1.3zM358.5 253.9h1.3v1.3h-1.3zM369.9 253.9h1.3v1.3h-1.3zM371.8 253.9h1.3v1.3h-1.3zM373.7 253.9h1.3v1.3h-1.3zM322.4 255.8h1.3v1.3h-1.3zM326.2 255.8h1.3v1.3h-1.3zM328.1 255.8h1.3v1.3h-1.3zM331.9 255.8h1.3v1.3h-1.3zM335.7 255.8h1.3v1.3h-1.3zM339.5 255.8h1.3v1.3h-1.3zM347.1 255.8h1.3v1.3h-1.3zM350.9 255.8h1.3v1.3h-1.3zM354.7 255.8h1.3v1.3h-1.3zM362.3 255.8h1.3v1.3h-1.3zM369.9 255.8h1.3v1.3h-1.3zM379.4 255.8h1.3v1.3h-1.3zM322.4 257.7h1.3v1.3h-1.3zM324.3 257.7h1.3v1.3h-1.3zM326.2 257.7h1.3v1.3h-1.3zM330 257.7h1.3v1.3h-1.3zM335.7 257.7h1.3v1.3h-1.3zM341.4 257.7h1.3v1.3h-1.3zM343.3 257.7h1.3v1.3h-1.3zM350.9 257.7h1.3v1.3h-1.3zM352.8 257.7h1.3v1.3h-1.3zM354.7 257.7h1.3v1.3h-1.3zM369.9 257.7h1.3v1.3h-1.3zM373.7 257.7h1.3v1.3h-1.3zM381.3 257.7h1.3v1.3h-1.3zM318.6 259.6h1.3v1.3h-1.3zM322.4 259.6h1.3v1.3h-1.3zM331.9 259.6h1.3v1.3h-1.3zM337.6 259.6h1.3v1.3h-1.3zM345.2 259.6h1.3v1.3h-1.3zM350.9 259.6h1.3v1.3h-1.3zM352.8 259.6h1.3v1.3h-1.3zM354.7 259.6h1.3v1.3h-1.3zM360.4 259.6h1.3v1.3h-1.3zM366.1 259.6h1.3v1.3h-1.3zM368 259.6h1.3v1.3h-1.3zM369.9 259.6h1.3v1.3h-1.3zM373.7 259.6h1.3v1.3h-1.3zM377.5 259.6h1.3v1.3h-1.3zM379.4 259.6h1.3v1.3h-1.3zM381.3 259.6h1.3v1.3h-1.3z"/>
<path fill="#3d4450" d="M361.2 194.8h1.3v1.3h-1.3zM332.7 196.7h1.3v1.3h-1.3zM344.1 196.7h1.3v1.3h-1.3zM347.9 196.7h1.3v1.3h-1.3zM355.5 198.6h1.3v1.3h-1.3zM357.4 198.6h1.3v1.3h-1.3zM363.1 198.6h1.3v1.3h-1.3zM330.8 200.5h1.3v1.3h-1.3zM336.5 200.5h1.3v1.3h-1.3zM338.4 200.5h1.3v1.3h-1.3zM342.2 200.5h1.3v1.3h-1.3zM355.5 200.5h1.3v1.3h-1.3zM370.7 200.5h1.3v1.3h-1.3zM328.9 202.4h1.3v1.3h-1.3zM346 202.4h1.3v1.3h-1.3zM349.8 202.4h1.3v1.3h-1.3zM365 204.3h1.3v1.3h-1.3zM366.9 204.3h1.3v1.3h-1.3zM372.6 204.3h1.3v1.3h-1.3zM344.1 206.2h1.3v1.3h-1.3zM353.6 206.2h1.3v1.3h-1.3zM361.2 206.2h1.3v1.3h-1.3zM370.7 206.2h1.3v1.3h-1.3zM332.7 208.1h1.3v1.3h-1.3zM370.7 208.1h1.3v1.3h-1.3zM328.9 210h1.3v1.3h-1.3zM330.8 210h1.3v1.3h-1.3zM334.6 210h1.3v1.3h-1.3zM340.3 210h1.3v1.3h-1.3zM347.9 210h1.3v1.3h-1.3zM357.4 210h1.3v1.3h-1.3zM359.3 210h1.3v1.3h-1.3zM365 210h1.3v1.3h-1.3zM338.4 211.9h1.3v1.3h-1.3zM347.9 211.9h1.3v1.3h-1.3zM355.5 211.9h1.3v1.3h-1.3zM346 213.8h1.3v1.3h-1.3zM357.4 213.8h1.3v1.3h-1.3zM365 213.8h1.3v1.3h-1.3zM328.9 215.7h1.3v1.3h-1.3zM359.3 217.6h1.3v1.3h-1.3zM363.1 217.6h1.3v1.3h-1.3zM370.7 217.6h1.3v1.3h-1.3zM372.6 217.6h1.3v1.3h-1.3zM328.9 219.5h1.3v1.3h-1.3zM359.3 219.5h1.3v1.3h-1.3zM330.8 221.4h1.3v1.3h-1.3zM346 221.4h1.3v1.3h-1.3zM347.9 221.4h1.3v1.3h-1.3zM372.6 221.4h1.3v1.3h-1.3zM353.6 223.3h1.3v1.3h-1.3zM355.5 223.3h1.3v1.3h-1.3zM349.8 225.2h1.3v1.3h-1.3zM365 225.2h1.3v1.3h-1.3zM330.8 227.1h1.3v1.3h-1.3zM332.7 227.1h1.3v1.3h-1.3zM346 227.1h1.3v1.3h-1.3zM349.8 227.1h1.3v1.3h-1.3zM332.7 229h1.3v1.3h-1.3zM347.9 229h1.3v1.3h-1.3zM355.5 229h1.3v1.3h-1.3zM361.2 229h1.3v1.3h-1.3zM328.9 230.9h1.3v1.3h-1.3zM336.5 230.9h1.3v1.3h-1.3zM340.3 230.9h1.3v1.3h-1.3zM351.7 230.9h1.3v1.3h-1.3zM357.4 230.9h1.3v1.3h-1.3zM359.3 230.9h1.3v1.3h-1.3zM340.3 232.8h1.3v1.3h-1.3zM359.3 232.8h1.3v1.3h-1.3zM363.1 232.8h1.3v1.3h-1.3zM365 232.8h1.3v1.3h-1.3zM370.7 232.8h1.3v1.3h-1.3zM372.6 232.8h1.3v1.3h-1.3zM328.9 234.7h1.3v1.3h-1.3zM336.5 234.7h1.3v1.3h-1.3zM344.1 234.7h1.3v1.3h-1.3zM355.5 234.7h1.3v1.3h-1.3zM370.7 234.7h1.3v1.3h-1.3zM372.6 234.7h1.3v1.3h-1.3zM332.7 236.6h1.3v1.3h-1.3zM346 236.6h1.3v1.3h-1.3zM355.5 236.6h1.3v1.3h-1.3zM370.7 236.6h1.3v1.3h-1.3zM372.6 236.6h1.3v1.3h-1.3zM328.9 238.5h1.3v1.3h-1.3zM332.7 238.5h1.3v1.3h-1.3zM368.8 238.5h1.3v1.3h-1.3zM372.6 238.5h1.3v1.3h-1.3zM328.9 240.4h1.3v1.3h-1.3zM355.5 240.4h1.3v1.3h-1.3zM357.4 240.4h1.3v1.3h-1.3zM342.2 242.3h1.3v1.3h-1.3zM353.6 242.3h1.3v1.3h-1.3zM359.3 242.3h1.3v1.3h-1.3zM363.1 242.3h1.3v1.3h-1.3zM372.6 242.3h1.3v1.3h-1.3zM361.2 244.2h1.3v1.3h-1.3zM363.1 244.2h1.3v1.3h-1.3zM328.9 246.1h1.3v1.3h-1.3zM334.6 246.1h1.3v1.3h-1.3zM336.5 246.1h1.3v1.3h-1.3zM359.3 246.1h1.3v1.3h-1.3zM361.2 246.1h1.3v1.3h-1.3zM368.8 246.1h1.3v1.3h-1.3zM328.9 248h1.3v1.3h-1.3zM346 248h1.3v1.3h-1.3zM349.8 248h1.3v1.3h-1.3zM355.5 248h1.3v1.3h-1.3zM334.6 249.9h1.3v1.3h-1.3zM357.4 249.9h1.3v1.3h-1.3zM365 249.9h1.3v1.3h-1.3zM366.9 249.9h1.3v1.3h-1.3zM368.8 249.9h1.3v1.3h-1.3zM370.7 249.9h1.3v1.3h-1.3z"/>
<path fill="#1515d5" d="M333 186.5h1.6v1.6h-1.6zM334.7 186.5h1.6v1.6h-1.6zM336.4 186.5h1.6v1.6h-1.6zM333 188.2h1.6v1.6h-1.6zM334.7 188.2h1.6v1.6h-1.6zM352 187h1.6v1.6h-1.6zM353.7 187h1.6v1.6h-1.6zM365 187h1.6v1.6h-1.6zM366.7 187h1.6v1.6h-1.6zM368.4 187h1.6v1.6h-1.6zM365 188.7h1.6v1.6h-1.6zM366.7 188.7h1.6v1.6h-1.6zM368.4 188.7h1.6v1.6h-1.6zM376 199h1.6v1.6h-1.6zM377.7 199h1.6v1.6h-1.6zM379.4 199h1.6v1.6h-1.6zM376 200.7h1.6v1.6h-1.6zM377.7 200.7h1.6v1.6h-1.6zM379.4 200.7h1.6v1.6h-1.6zM376 202.4h1.6v1.6h-1.6zM377.7 202.4h1.6v1.6h-1.6zM379.4 202.4h1.6v1.6h-1.6zM376 231h1.6v1.6h-1.6zM377.7 231h1.6v1.6h-1.6zM379.4 231h1.6v1.6h-1.6zM376 232.7h1.6v1.6h-1.6zM377.7 232.7h1.6v1.6h-1.6zM379.4 232.7h1.6v1.6h-1.6zM376 234.4h1.6v1.6h-1.6zM377.7 234.4h1.6v1.6h-1.6zM379.4 234.4h1.6v1.6h-1.6zM376 236.1h1.6v1.6h-1.6zM377.7 236.1h1.6v1.6h-1.6zM379.4 236.1h1.6v1.6h-1.6zM376 246h1.6v1.6h-1.6zM377.7 246h1.6v1.6h-1.6zM379.4 246h1.6v1.6h-1.6zM376 247.7h1.6v1.6h-1.6zM376 249.4h1.6v1.6h-1.6zM377.7 249.4h1.6v1.6h-1.6zM379.4 249.4h1.6v1.6h-1.6zM320.3 210h1.6v1.6h-1.6zM322 210h1.6v1.6h-1.6zM320.3 211.7h1.6v1.6h-1.6zM322 211.7h1.6v1.6h-1.6zM320.3 230h1.6v1.6h-1.6zM322 230h1.6v1.6h-1.6zM320.3 231.7h1.6v1.6h-1.6zM322 231.7h1.6v1.6h-1.6zM320.3 233.4h1.6v1.6h-1.6zM322 233.4h1.6v1.6h-1.6zM320.3 246h1.6v1.6h-1.6zM322 246h1.6v1.6h-1.6zM320.3 247.7h1.6v1.6h-1.6zM322 247.7h1.6v1.6h-1.6zM333 255.5h1.6v1.6h-1.6zM334.7 255.5h1.6v1.6h-1.6zM336.4 255.5h1.6v1.6h-1.6zM333 257.2h1.6v1.6h-1.6zM334.7 257.2h1.6v1.6h-1.6zM336.4 257.2h1.6v1.6h-1.6zM350 255.5h1.6v1.6h-1.6zM351.7 255.5h1.6v1.6h-1.6zM353.4 255.5h1.6v1.6h-1.6zM350 257.2h1.6v1.6h-1.6zM351.7 257.2h1.6v1.6h-1.6zM353.4 257.2h1.6v1.6h-1.6zM328.5 265.5h3.6v2.2h-3.6zM341.2 265.5h2.3v2.2h-2.3zM344.5 265.5h3.7v2.2h-3.7zM355.8 265.5h2v2.2h-2zM325.4 268.6h2.1v1.9h-2.1zM332.1 271.4h2.8v1.8h-2.8zM336.3 274h2.9v1.7h-2.9zM354.8 274h1.5v1.7h-1.5zM361.6 289.5h1.4v1h-1.4z"/>
<path fill="#8f8840" d="M331.2 278.8h1.3v1.3h-1.3zM339 278.8h1.3v1.3h-1.3zM346.8 278.8h1.3v1.3h-1.3zM352.7 278.8h1.3v1.3h-1.3zM329.3 280.8h1.3v1.3h-1.3zM331.2 280.8h1.3v1.3h-1.3zM333.2 280.8h1.3v1.3h-1.3zM335.1 280.8h1.3v1.3h-1.3zM348.8 280.8h1.3v1.3h-1.3zM344.9 282.7h1.3v1.3h-1.3zM350.7 282.7h1.3v1.3h-1.3zM352.7 282.7h1.3v1.3h-1.3zM331.2 284.6h1.3v1.3h-1.3zM335.1 284.6h1.3v1.3h-1.3zM342.9 284.6h1.3v1.3h-1.3zM346.8 284.6h1.3v1.3h-1.3zM352.7 284.6h1.3v1.3h-1.3zM344.9 286.6h1.3v1.3h-1.3zM329.3 288.5h1.3v1.3h-1.3zM331.2 288.5h1.3v1.3h-1.3zM333.2 288.5h1.3v1.3h-1.3zM341 288.5h1.3v1.3h-1.3zM344.9 288.5h1.3v1.3h-1.3zM348.8 288.5h1.3v1.3h-1.3zM331.2 290.5h1.3v1.3h-1.3zM333.2 290.5h1.3v1.3h-1.3zM337.1 290.5h1.3v1.3h-1.3zM339 290.5h1.3v1.3h-1.3zM344.9 290.5h1.3v1.3h-1.3zM346.8 290.5h1.3v1.3h-1.3zM352.7 290.5h1.3v1.3h-1.3zM329.3 292.4h1.3v1.3h-1.3zM333.2 292.4h1.3v1.3h-1.3zM339 292.4h1.3v1.3h-1.3zM350.7 292.4h1.3v1.3h-1.3zM352.7 292.4h1.3v1.3h-1.3zM329.3 294.4h1.3v1.3h-1.3zM331.2 294.4h1.3v1.3h-1.3zM333.2 294.4h1.3v1.3h-1.3zM342.9 294.4h1.3v1.3h-1.3zM344.9 294.4h1.3v1.3h-1.3zM346.8 294.4h1.3v1.3h-1.3zM350.7 294.4h1.3v1.3h-1.3zM331.2 296.3h1.3v1.3h-1.3zM352.7 296.3h1.3v1.3h-1.3zM329.3 298.3h1.3v1.3h-1.3zM337.1 298.3h1.3v1.3h-1.3zM329.3 300.2h1.3v1.3h-1.3zM333.2 300.2h1.3v1.3h-1.3z"/>
<path fill="#bfae4a" d="M431.3 183.8h1.3v1.3h-1.3zM454.7 183.8h1.3v1.3h-1.3zM437.1 185.8h1.3v1.3h-1.3zM452.7 185.8h1.3v1.3h-1.3zM454.7 185.8h1.3v1.3h-1.3zM437.1 187.7h1.3v1.3h-1.3zM443 187.7h1.3v1.3h-1.3zM446.9 187.7h1.3v1.3h-1.3zM452.7 187.7h1.3v1.3h-1.3zM441 189.6h1.3v1.3h-1.3zM444.9 189.6h1.3v1.3h-1.3zM446.9 189.6h1.3v1.3h-1.3zM452.7 189.6h1.3v1.3h-1.3zM464.4 189.6h1.3v1.3h-1.3zM437.1 191.6h1.3v1.3h-1.3zM433.2 193.5h1.3v1.3h-1.3zM446.9 193.5h1.3v1.3h-1.3zM458.6 193.5h1.3v1.3h-1.3zM460.5 193.5h1.3v1.3h-1.3z"/>
<rect x="263.5" y="205" width="0.8" height="31" fill="#3b4250" opacity="0.7"/>
<rect x="267" y="205" width="0.8" height="31" fill="#3b4250" opacity="0.7"/>
<rect x="270.6" y="205" width="0.8" height="31" fill="#3b4250" opacity="0.7"/>
<rect x="274.2" y="205" width="0.8" height="31" fill="#3b4250" opacity="0.7"/>
<rect x="277.8" y="205" width="0.8" height="31" fill="#3b4250" opacity="0.7"/>
<rect x="281.4" y="205" width="0.8" height="31" fill="#3b4250" opacity="0.7"/>
<rect x="285" y="205" width="0.8" height="31" fill="#3b4250" opacity="0.7"/>
<rect x="288.6" y="205" width="0.8" height="31" fill="#3b4250" opacity="0.7"/>
<rect x="292.2" y="205" width="0.8" height="31" fill="#3b4250" opacity="0.7"/>
<rect x="304.2" y="196" width="1.2" height="66" fill="#2b3448"/>
<rect x="275" y="267.6" width="13.6" height="3.6" rx="1.4" fill="#f0cf32"/>
<circle cx="247.7" cy="188.4" r="0.8" fill="#a8b8cc"/>
<circle cx="247.1" cy="191.3" r="0.8" fill="#a8b8cc"/>
<circle cx="245.5" cy="193.8" r="0.8" fill="#a8b8cc"/>
<circle cx="243.0" cy="195.4" r="0.8" fill="#a8b8cc"/>
<circle cx="240.1" cy="196.0" r="0.8" fill="#a8b8cc"/>
<circle cx="237.2" cy="195.4" r="0.8" fill="#a8b8cc"/>
<circle cx="234.7" cy="193.8" r="0.8" fill="#a8b8cc"/>
<circle cx="233.1" cy="191.3" r="0.8" fill="#a8b8cc"/>
<circle cx="232.5" cy="188.4" r="0.8" fill="#a8b8cc"/>
<circle cx="233.1" cy="185.5" r="0.8" fill="#a8b8cc"/>
<circle cx="234.7" cy="183.0" r="0.8" fill="#a8b8cc"/>
<circle cx="237.2" cy="181.4" r="0.8" fill="#a8b8cc"/>
<circle cx="240.1" cy="180.8" r="0.8" fill="#a8b8cc"/>
<circle cx="243.0" cy="181.4" r="0.8" fill="#a8b8cc"/>
<circle cx="245.5" cy="183.0" r="0.8" fill="#a8b8cc"/>
<circle cx="247.1" cy="185.5" r="0.8" fill="#a8b8cc"/>
<circle cx="240.1" cy="188.4" r="6.1" fill="#12a3a3"/>
<circle cx="247.7" cy="299.6" r="0.8" fill="#a8b8cc"/>
<circle cx="247.1" cy="302.5" r="0.8" fill="#a8b8cc"/>
<circle cx="245.5" cy="305.0" r="0.8" fill="#a8b8cc"/>
<circle cx="243.0" cy="306.6" r="0.8" fill="#a8b8cc"/>
<circle cx="240.1" cy="307.2" r="0.8" fill="#a8b8cc"/>
<circle cx="237.2" cy="306.6" r="0.8" fill="#a8b8cc"/>
<circle cx="234.7" cy="305.0" r="0.8" fill="#a8b8cc"/>
<circle cx="233.1" cy="302.5" r="0.8" fill="#a8b8cc"/>
<circle cx="232.5" cy="299.6" r="0.8" fill="#a8b8cc"/>
<circle cx="233.1" cy="296.7" r="0.8" fill="#a8b8cc"/>
<circle cx="234.7" cy="294.2" r="0.8" fill="#a8b8cc"/>
<circle cx="237.2" cy="292.6" r="0.8" fill="#a8b8cc"/>
<circle cx="240.1" cy="292.0" r="0.8" fill="#a8b8cc"/>
<circle cx="243.0" cy="292.6" r="0.8" fill="#a8b8cc"/>
<circle cx="245.5" cy="294.2" r="0.8" fill="#a8b8cc"/>
<circle cx="247.1" cy="296.7" r="0.8" fill="#a8b8cc"/>
<circle cx="240.1" cy="299.6" r="6.1" fill="#12a3a3"/>
<circle cx="376.4" cy="304.8" r="0.8" fill="#a8b8cc"/>
<circle cx="375.8" cy="307.7" r="0.8" fill="#a8b8cc"/>
<circle cx="374.2" cy="310.2" r="0.8" fill="#a8b8cc"/>
<circle cx="371.7" cy="311.8" r="0.8" fill="#a8b8cc"/>
<circle cx="368.8" cy="312.4" r="0.8" fill="#a8b8cc"/>
<circle cx="365.9" cy="311.8" r="0.8" fill="#a8b8cc"/>
<circle cx="363.4" cy="310.2" r="0.8" fill="#a8b8cc"/>
<circle cx="361.8" cy="307.7" r="0.8" fill="#a8b8cc"/>
<circle cx="361.2" cy="304.8" r="0.8" fill="#a8b8cc"/>
<circle cx="361.8" cy="301.9" r="0.8" fill="#a8b8cc"/>
<circle cx="363.4" cy="299.4" r="0.8" fill="#a8b8cc"/>
<circle cx="365.9" cy="297.8" r="0.8" fill="#a8b8cc"/>
<circle cx="368.8" cy="297.2" r="0.8" fill="#a8b8cc"/>
<circle cx="371.7" cy="297.8" r="0.8" fill="#a8b8cc"/>
<circle cx="374.2" cy="299.4" r="0.8" fill="#a8b8cc"/>
<circle cx="375.8" cy="301.9" r="0.8" fill="#a8b8cc"/>
<circle cx="368.8" cy="304.8" r="6.1" fill="#12a3a3"/>
<path d="M510.7 176.2 L668.0 176.2 L668.0 178.7 L698.0 178.7 L698.0 180.2 L751.0 180.2 L751.0 308.5 L734.4 308.5 L734.4 303.3 L710.5 303.3 L710.5 306.8 L666.4 306.8 L666.4 315.6 L517.7 315.6 L517.7 309.4 L505.4 309.4 L505.4 192.4 L510.7 192.4Z" fill="#2b3448" stroke="#2b3448" stroke-width="2" stroke-linejoin="round"/>
<rect x="517.5" y="183.8" width="31.5" height="25.6" fill="#3a4254"/>
<rect x="522.0" y="187.0" width="13.0" height="13.5" fill="#2b3448"/>
<rect x="527.0" y="200.5" width="4.0" height="5.5" fill="#2b3448"/>
<rect x="552.6" y="183.5" width="31.4" height="35.5" fill="#3f4656"/>
<rect x="552.2" y="183.1" width="32.2" height="36.3" fill="none" stroke="#8a90a4" stroke-width="0.6"/>
<rect x="600.5" y="188.0" width="35.5" height="43.0" fill="#484b42"/>
<rect x="641.5" y="243.5" width="20.5" height="20.5" fill="#4a4e4c"/>
<rect x="684.0" y="216.5" width="57.0" height="35.5" fill="#4a5270"/>
<rect x="614.0" y="270.0" width="22.0" height="21.0" fill="#4c4f4a"/>
<rect x="686.0" y="264.0" width="23.5" height="34.0" fill="#2f384b"/>
<path fill="#f0cf32" d="M513 177.3h1.4v1.4h-1.4zM521.8 177.3h1.4v1.4h-1.4zM526.2 177.3h1.4v1.4h-1.4zM543.8 177.3h1.4v1.4h-1.4zM583.4 177.3h1.4v1.4h-1.4zM524 179.8h1.4v1.4h-1.4zM526.2 179.8h1.4v1.4h-1.4zM537.2 179.8h1.4v1.4h-1.4zM548.2 179.8h1.4v1.4h-1.4zM563.6 179.8h1.4v1.4h-1.4zM583.4 179.8h1.4v1.4h-1.4zM506.5 198.6h1.4v1.4h-1.4zM506.5 203.2h1.4v1.4h-1.4zM506.5 210.1h1.4v1.4h-1.4zM506.5 214.7h1.4v1.4h-1.4zM506.5 217h1.4v1.4h-1.4zM506.5 219.3h1.4v1.4h-1.4zM509 197.8h1.4v1.4h-1.4zM509 200.1h1.4v1.4h-1.4zM509 211.6h1.4v1.4h-1.4zM509 230h1.4v1.4h-1.4zM511.6 195.5h1.4v1.4h-1.4zM511.6 230h1.4v1.4h-1.4zM537.3 186.1h1.2v1.2h-1.2zM539.3 186.1h1.2v1.2h-1.2zM539.3 188h1.2v1.2h-1.2zM547.1 188h1.2v1.2h-1.2zM545.1 189.9h1.2v1.2h-1.2zM545.1 193.8h1.2v1.2h-1.2zM535.4 195.8h1.2v1.2h-1.2zM517.8 197.7h1.2v1.2h-1.2zM533.4 201.6h1.2v1.2h-1.2zM539.3 201.6h1.2v1.2h-1.2zM515 213.1h1.9v.8h-1.9zM526.9 214.7h1.4v1.3h-1.4zM537.9 214.7h2.6v1.3h-2.6zM530 216.8h1.9v1h-1.9zM534.6 218.8h2.2v.8h-2.2zM543.1 220.2h3.3v.8h-3.3zM515 222.2h2.5v1h-2.5zM539.5 222.2h2.8v1h-2.8zM520.1 224.5h3.1v.9h-3.1zM534.2 224.5h1.3v.9h-1.3zM547 224.5h1v.9h-1zM556.8 185.8h1.2v1.2h-1.2zM582.2 185.8h1.2v1.2h-1.2zM554.9 187.7h1.2v1.2h-1.2zM558.8 187.7h1.2v1.2h-1.2zM552.9 189.6h1.2v1.2h-1.2zM556.8 189.6h1.2v1.2h-1.2zM560.7 189.6h1.2v1.2h-1.2zM580.2 189.6h1.2v1.2h-1.2zM552.9 191.6h1.2v1.2h-1.2zM570.5 191.6h1.2v1.2h-1.2zM580.2 191.6h1.2v1.2h-1.2zM558.8 193.5h1.2v1.2h-1.2zM578.3 193.5h1.2v1.2h-1.2zM574.4 195.5h1.2v1.2h-1.2zM556.8 197.4h1.2v1.2h-1.2zM580.2 197.4h1.2v1.2h-1.2zM566.6 199.4h1.2v1.2h-1.2zM582.2 199.4h1.2v1.2h-1.2zM552.9 201.3h1.2v1.2h-1.2zM554.9 201.3h1.2v1.2h-1.2zM556.8 201.3h1.2v1.2h-1.2zM566.6 201.3h1.2v1.2h-1.2zM570.5 201.3h1.2v1.2h-1.2zM572.4 201.3h1.2v1.2h-1.2zM562.7 203.3h1.2v1.2h-1.2zM568.5 203.3h1.2v1.2h-1.2zM568.5 205.2h1.2v1.2h-1.2zM576.3 205.2h1.2v1.2h-1.2zM560.7 207.2h1.2v1.2h-1.2zM564.6 209.1h1.2v1.2h-1.2zM570.5 209.1h1.2v1.2h-1.2zM578.3 209.1h1.2v1.2h-1.2zM552.9 211.1h1.2v1.2h-1.2zM568.5 211.1h1.2v1.2h-1.2zM576.3 213h1.2v1.2h-1.2zM566.6 215h1.2v1.2h-1.2zM572.4 215h1.2v1.2h-1.2zM576.3 215h1.2v1.2h-1.2zM554.9 216.9h1.2v1.2h-1.2zM532 227.6h1.4v1.4h-1.4zM543 227.6h1.4v1.4h-1.4zM551.8 227.6h1.4v1.4h-1.4zM569.4 227.6h1.4v1.4h-1.4zM571.6 227.6h1.4v1.4h-1.4zM582.6 227.6h1.4v1.4h-1.4zM512.2 230.2h1.4v1.4h-1.4zM514.4 230.2h1.4v1.4h-1.4zM516.6 230.2h1.4v1.4h-1.4zM518.8 230.2h1.4v1.4h-1.4zM521 230.2h1.4v1.4h-1.4zM523.2 230.2h1.4v1.4h-1.4zM525.4 230.2h1.4v1.4h-1.4zM527.6 230.2h1.4v1.4h-1.4zM529.8 230.2h1.4v1.4h-1.4zM532 230.2h1.4v1.4h-1.4zM534.2 230.2h1.4v1.4h-1.4zM536.4 230.2h1.4v1.4h-1.4zM538.6 230.2h1.4v1.4h-1.4zM554 230.2h1.4v1.4h-1.4zM560.6 230.2h1.4v1.4h-1.4zM562.8 230.2h1.4v1.4h-1.4zM567.2 230.2h1.4v1.4h-1.4zM569.4 230.2h1.4v1.4h-1.4zM571.6 230.2h1.4v1.4h-1.4zM573.8 230.2h1.4v1.4h-1.4zM576 230.2h1.4v1.4h-1.4zM578.2 230.2h1.4v1.4h-1.4zM580.4 230.2h1.4v1.4h-1.4zM584.8 230.2h1.4v1.4h-1.4zM587 230.2h1.4v1.4h-1.4zM589.5 184h1.4v1.4h-1.4zM589.5 186.2h1.4v1.4h-1.4zM589.5 188.4h1.4v1.4h-1.4zM589.5 190.6h1.4v1.4h-1.4zM589.5 192.8h1.4v1.4h-1.4zM589.5 195h1.4v1.4h-1.4zM589.5 197.2h1.4v1.4h-1.4zM589.5 199.4h1.4v1.4h-1.4zM589.5 201.6h1.4v1.4h-1.4zM589.5 203.8h1.4v1.4h-1.4zM589.5 206h1.4v1.4h-1.4zM589.5 208.2h1.4v1.4h-1.4zM589.5 210.4h1.4v1.4h-1.4zM589.5 212.6h1.4v1.4h-1.4zM589.5 214.8h1.4v1.4h-1.4zM589.5 217h1.4v1.4h-1.4zM589.5 219.2h1.4v1.4h-1.4zM589.5 221.4h1.4v1.4h-1.4zM589.5 223.6h1.4v1.4h-1.4zM589.5 225.8h1.4v1.4h-1.4zM589.5 228h1.4v1.4h-1.4zM589.5 230.2h1.4v1.4h-1.4zM589.5 232.4h1.4v1.4h-1.4zM589.5 234.6h1.4v1.4h-1.4zM589.5 236.8h1.4v1.4h-1.4zM589.5 239h1.4v1.4h-1.4zM589.5 241.2h1.4v1.4h-1.4zM589.5 243.4h1.4v1.4h-1.4zM589.5 245.6h1.4v1.4h-1.4zM589.5 247.8h1.4v1.4h-1.4zM589.5 250h1.4v1.4h-1.4zM589.5 252.2h1.4v1.4h-1.4zM589.5 254.4h1.4v1.4h-1.4zM589.5 256.6h1.4v1.4h-1.4zM589.5 258.8h1.4v1.4h-1.4zM589.5 261h1.4v1.4h-1.4zM589.5 263.2h1.4v1.4h-1.4zM589.5 265.4h1.4v1.4h-1.4zM589.5 267.6h1.4v1.4h-1.4zM589.5 269.8h1.4v1.4h-1.4zM589.5 272h1.4v1.4h-1.4zM589.5 274.2h1.4v1.4h-1.4zM589.5 276.4h1.4v1.4h-1.4zM589.5 278.6h1.4v1.4h-1.4zM589.5 280.8h1.4v1.4h-1.4zM589.5 283h1.4v1.4h-1.4zM589.5 285.2h1.4v1.4h-1.4zM589.5 287.4h1.4v1.4h-1.4zM589.5 289.6h1.4v1.4h-1.4zM589.5 291.8h1.4v1.4h-1.4zM589.5 294h1.4v1.4h-1.4zM589.5 296.2h1.4v1.4h-1.4zM589.5 298.4h1.4v1.4h-1.4zM589.5 300.6h1.4v1.4h-1.4zM589.5 302.8h1.4v1.4h-1.4zM589.5 305h1.4v1.4h-1.4zM589.5 307.2h1.4v1.4h-1.4zM589.5 309.4h1.4v1.4h-1.4zM589.5 311.6h1.4v1.4h-1.4zM592.3 184h1.4v1.4h-1.4zM592.3 186.2h1.4v1.4h-1.4zM592.3 188.4h1.4v1.4h-1.4zM592.3 190.6h1.4v1.4h-1.4zM592.3 192.8h1.4v1.4h-1.4zM592.3 195h1.4v1.4h-1.4zM592.3 197.2h1.4v1.4h-1.4zM592.3 199.4h1.4v1.4h-1.4zM592.3 206h1.4v1.4h-1.4zM592.3 208.2h1.4v1.4h-1.4zM592.3 210.4h1.4v1.4h-1.4zM592.3 212.6h1.4v1.4h-1.4zM592.3 214.8h1.4v1.4h-1.4zM592.3 217h1.4v1.4h-1.4zM592.3 219.2h1.4v1.4h-1.4zM592.3 221.4h1.4v1.4h-1.4zM592.3 223.6h1.4v1.4h-1.4zM592.3 225.8h1.4v1.4h-1.4zM592.3 228h1.4v1.4h-1.4zM592.3 230.2h1.4v1.4h-1.4zM592.3 232.4h1.4v1.4h-1.4zM592.3 234.6h1.4v1.4h-1.4zM592.3 236.8h1.4v1.4h-1.4zM592.3 239h1.4v1.4h-1.4zM592.3 241.2h1.4v1.4h-1.4zM592.3 243.4h1.4v1.4h-1.4zM592.3 245.6h1.4v1.4h-1.4zM592.3 247.8h1.4v1.4h-1.4zM592.3 252.2h1.4v1.4h-1.4zM592.3 254.4h1.4v1.4h-1.4zM592.3 256.6h1.4v1.4h-1.4zM592.3 258.8h1.4v1.4h-1.4zM592.3 261h1.4v1.4h-1.4zM592.3 265.4h1.4v1.4h-1.4zM592.3 267.6h1.4v1.4h-1.4zM592.3 269.8h1.4v1.4h-1.4zM592.3 272h1.4v1.4h-1.4zM592.3 278.6h1.4v1.4h-1.4zM592.3 285.2h1.4v1.4h-1.4zM592.3 289.6h1.4v1.4h-1.4zM592.3 291.8h1.4v1.4h-1.4zM592.3 294h1.4v1.4h-1.4zM592.3 296.2h1.4v1.4h-1.4zM592.3 298.4h1.4v1.4h-1.4zM592.3 305h1.4v1.4h-1.4zM592.3 309.4h1.4v1.4h-1.4zM592.3 311.6h1.4v1.4h-1.4zM586.5 184h1.3v1.3h-1.3zM586.5 186.2h1.3v1.3h-1.3zM586.5 190.6h1.3v1.3h-1.3zM586.5 197.2h1.3v1.3h-1.3zM586.5 199.4h1.3v1.3h-1.3zM586.5 208.2h1.3v1.3h-1.3zM586.5 212.6h1.3v1.3h-1.3zM586.5 214.8h1.3v1.3h-1.3zM586.5 219.2h1.3v1.3h-1.3zM586.5 225.8h1.3v1.3h-1.3zM596 177.3h1.4v1.4h-1.4zM598.2 177.3h1.4v1.4h-1.4zM600.4 177.3h1.4v1.4h-1.4zM602.6 177.3h1.4v1.4h-1.4zM604.8 177.3h1.4v1.4h-1.4zM607 177.3h1.4v1.4h-1.4zM609.2 177.3h1.4v1.4h-1.4zM611.4 177.3h1.4v1.4h-1.4zM613.6 177.3h1.4v1.4h-1.4zM615.8 177.3h1.4v1.4h-1.4zM620.2 177.3h1.4v1.4h-1.4zM622.4 177.3h1.4v1.4h-1.4zM624.6 177.3h1.4v1.4h-1.4zM626.8 177.3h1.4v1.4h-1.4zM629 177.3h1.4v1.4h-1.4zM631.2 177.3h1.4v1.4h-1.4zM633.4 177.3h1.4v1.4h-1.4zM635.6 177.3h1.4v1.4h-1.4zM640 177.3h1.4v1.4h-1.4zM642.2 177.3h1.4v1.4h-1.4zM644.4 177.3h1.4v1.4h-1.4zM646.6 177.3h1.4v1.4h-1.4zM648.8 177.3h1.4v1.4h-1.4zM651 177.3h1.4v1.4h-1.4zM655.4 177.3h1.4v1.4h-1.4zM657.6 177.3h1.4v1.4h-1.4zM659.8 177.3h1.4v1.4h-1.4zM666.4 177.3h1.4v1.4h-1.4zM596 179.8h1.4v1.4h-1.4zM598.2 179.8h1.4v1.4h-1.4zM600.4 179.8h1.4v1.4h-1.4zM602.6 179.8h1.4v1.4h-1.4zM604.8 179.8h1.4v1.4h-1.4zM607 179.8h1.4v1.4h-1.4zM609.2 179.8h1.4v1.4h-1.4zM611.4 179.8h1.4v1.4h-1.4zM613.6 179.8h1.4v1.4h-1.4zM615.8 179.8h1.4v1.4h-1.4zM618 179.8h1.4v1.4h-1.4zM620.2 179.8h1.4v1.4h-1.4zM622.4 179.8h1.4v1.4h-1.4zM624.6 179.8h1.4v1.4h-1.4zM626.8 179.8h1.4v1.4h-1.4zM629 179.8h1.4v1.4h-1.4zM631.2 179.8h1.4v1.4h-1.4zM633.4 179.8h1.4v1.4h-1.4zM635.6 179.8h1.4v1.4h-1.4zM637.8 179.8h1.4v1.4h-1.4zM640 179.8h1.4v1.4h-1.4zM642.2 179.8h1.4v1.4h-1.4zM644.4 179.8h1.4v1.4h-1.4zM646.6 179.8h1.4v1.4h-1.4zM648.8 179.8h1.4v1.4h-1.4zM651 179.8h1.4v1.4h-1.4zM653.2 179.8h1.4v1.4h-1.4zM655.4 179.8h1.4v1.4h-1.4zM657.6 179.8h1.4v1.4h-1.4zM659.8 179.8h1.4v1.4h-1.4zM662 179.8h1.4v1.4h-1.4zM664.2 179.8h1.4v1.4h-1.4zM666.4 179.8h1.4v1.4h-1.4zM668 180h1.4v1.4h-1.4zM670.2 180h1.4v1.4h-1.4zM672.4 180h1.4v1.4h-1.4zM674.6 180h1.4v1.4h-1.4zM676.8 180h1.4v1.4h-1.4zM679 180h1.4v1.4h-1.4zM681.2 180h1.4v1.4h-1.4zM683.4 180h1.4v1.4h-1.4zM685.6 180h1.4v1.4h-1.4zM687.8 180h1.4v1.4h-1.4zM690 180h1.4v1.4h-1.4zM692.2 180h1.4v1.4h-1.4zM694.4 180h1.4v1.4h-1.4zM696.6 180h1.4v1.4h-1.4zM670.2 182.4h1.4v1.4h-1.4zM674.6 182.4h1.4v1.4h-1.4zM679 182.4h1.4v1.4h-1.4zM681.2 182.4h1.4v1.4h-1.4zM683.4 182.4h1.4v1.4h-1.4zM685.6 182.4h1.4v1.4h-1.4zM687.8 182.4h1.4v1.4h-1.4zM694.4 182.4h1.4v1.4h-1.4zM696.6 182.4h1.4v1.4h-1.4zM705.6 184.6h1.3v1.3h-1.3zM707.8 184.6h1.3v1.3h-1.3zM712.2 184.6h1.3v1.3h-1.3zM721 184.6h1.3v1.3h-1.3zM723.2 184.6h1.3v1.3h-1.3zM727.6 184.6h1.3v1.3h-1.3zM600 183h4.2v2.2h-4.2zM609.4 183h4.7v2.2h-4.7zM615 183h5.1v2.2h-5.1zM621.2 183h3.5v2.2h-3.5zM625.7 183h4.9v2.2h-4.9zM632 183h2.6v2.2h-2.6zM635.2 183h1.8v2.2h-1.8zM598.2 186h1.2v47h-1.2zM637.2 186h1.2v47h-1.2zM600 232h3.2v2.4h-3.2zM612.5 232h4.2v2.4h-4.2zM617.5 232h2v2.4h-2zM625 232h2.4v2.4h-2.4zM646.2 185h3.6v.9h-3.6zM664.1 185h2.9v.9h-2.9zM644 187.4h4.3v1h-4.3zM660.8 187.4h3.1v1h-3.1zM641 189.8h3.9v1.7h-3.9zM650.4 189.8h2.7v1.7h-2.7zM663.9 189.8h1.3v1.7h-1.3zM641 192.7h3.2v.8h-3.2zM648.3 192.7h2.9v.8h-2.9zM652.5 192.7h1.8v.8h-1.8zM655 192.7h1.7v.8h-1.7zM657.8 192.7h2.1v.8h-2.1zM645.5 194.6h1.5v1.8h-1.5zM648.3 194.6h3.7v1.8h-3.7zM653.2 194.6h2.4v1.8h-2.4zM662.8 194.6h4.2v1.8h-4.2zM644.2 197.8h3.2v1.8h-3.2zM652.8 197.8h3.3v1.8h-3.3zM657 197.8h2.6v1.8h-2.6zM660.5 197.8h1.5v1.8h-1.5zM663.1 197.8h1.6v1.8h-1.6zM641 201h3.9v1.7h-3.9zM652.6 201h3v1.7h-3zM651.7 203.8h1.7v1.6h-1.7zM657.8 203.8h2v1.6h-2zM661 203.8h3.3v1.6h-3.3zM665.4 203.8h1.6v1.6h-1.6zM641 206.7h4v2h-4zM654.3 206.7h4.3v2h-4.3zM641 209.6h2.9v2.1h-2.9zM645.2 209.6h1.7v2.1h-1.7zM643.7 213.2h1.4v2.2h-1.4zM645.9 213.2h2v2.2h-2zM648.8 213.2h2.7v2.2h-2.7zM655.2 213.2h1.6v2.2h-1.6zM665.3 213.2h1.7v2.2h-1.7zM643.6 219h6v6.5h-6zM651.3 219h6v6.5h-6zM659 220h3v5h-3zM641 227h1.8v1.1h-1.8zM648.8 227h3.4v1.1h-3.4zM653.9 229h4.4v2.2h-4.4zM641 232.6h2.6v2.1h-2.6zM660.9 232.6h2.1v2.1h-2.1zM645.5 235.9h3.1v1.4h-3.1zM655.6 235.9h1.7v1.4h-1.7zM641 238.3h2.3v1.2h-2.3zM644.6 238.3h4.3v1.2h-4.3zM649.6 238.3h3.2v1.2h-3.2zM641 240.9h3.2v.8h-3.2zM666 227h5v6h-5zM672.5 227h4.5v6h-4.5zM666 234.5h10.5v5h-10.5zM667 241.5h10v8.5h-10zM667 252h5v11h-5zM673.5 252h4.5v11h-4.5zM676.2 211h4.8v5h-4.8zM676.2 217.7h4.8v4.7h-4.8zM633 238.5h3.6v7h-3.6zM637.6 238.5h3.6v7h-3.6zM633 247h3.6v6.5h-3.6zM637.6 247h3.6v6.5h-3.6zM714 191h4v1.4h-4zM728.9 191h3.1v1.4h-3.1zM718.7 193.3h3.7v1.8h-3.7zM723.6 193.3h3.1v1.8h-3.1zM724.9 196.1h3.2v1.5h-3.2zM729.1 196.1h2.9v1.5h-2.9zM714 201h2.4v1.3h-2.4zM725.5 201h2.6v1.3h-2.6zM714 203.6h1.3v.8h-1.3zM716.6 203.6h3.3v.8h-3.3zM725.3 203.6h2.6v.8h-2.6zM728.6 203.6h3.2v.8h-3.2zM725.8 205.3h1.4v.8h-1.4zM706 188h2v2h-2zM709.5 188h1.5v2h-1.5zM708.5 210.5h4.7v1.8h-4.7zM731.5 210.5h2.6v1.8h-2.6zM699.7 223h1.6v1.6h-1.6zM703.9 223h1.6v1.6h-1.6zM708.1 223h1.6v1.6h-1.6zM697.6 225.1h1.6v1.6h-1.6zM699.7 225.1h1.6v1.6h-1.6zM706 225.1h1.6v1.6h-1.6zM708.1 225.1h1.6v1.6h-1.6zM697.6 227.2h1.6v1.6h-1.6zM701.8 227.2h1.6v1.6h-1.6zM703.9 227.2h1.6v1.6h-1.6zM708.1 227.2h1.6v1.6h-1.6zM697.6 229.3h1.6v1.6h-1.6zM703.9 229.3h1.6v1.6h-1.6zM706 229.3h1.6v1.6h-1.6zM708.1 229.3h1.6v1.6h-1.6zM701.8 231.4h1.6v1.6h-1.6zM703.9 231.4h1.6v1.6h-1.6zM706 231.4h1.6v1.6h-1.6zM699.7 233.5h1.6v1.6h-1.6zM701.8 233.5h1.6v1.6h-1.6zM703.9 233.5h1.6v1.6h-1.6zM706 233.5h1.6v1.6h-1.6zM699.7 235.6h1.6v1.6h-1.6zM701.8 235.6h1.6v1.6h-1.6zM703.9 235.6h1.6v1.6h-1.6zM708.1 235.6h1.6v1.6h-1.6zM699.7 237.7h1.6v1.6h-1.6zM701.8 237.7h1.6v1.6h-1.6zM708.1 237.7h1.6v1.6h-1.6zM699.7 239.8h1.6v1.6h-1.6zM701.8 239.8h1.6v1.6h-1.6zM703.9 239.8h1.6v1.6h-1.6zM708.1 239.8h1.6v1.6h-1.6zM701.8 241.9h1.6v1.6h-1.6zM703.9 241.9h1.6v1.6h-1.6zM708.1 241.9h1.6v1.6h-1.6zM697.6 244h1.6v1.6h-1.6zM701.8 244h1.6v1.6h-1.6zM706 244h1.6v1.6h-1.6zM708.1 244h1.6v1.6h-1.6zM699.7 246.1h1.6v1.6h-1.6zM703.9 246.1h1.6v1.6h-1.6zM699.7 248.2h1.6v1.6h-1.6zM701.8 248.2h1.6v1.6h-1.6zM703.9 248.2h1.6v1.6h-1.6zM683.9 214.3h1.3v1.3h-1.3zM686 214.3h1.3v1.3h-1.3zM692.3 214.3h1.3v1.3h-1.3zM694.4 214.3h1.3v1.3h-1.3zM696.5 214.3h1.3v1.3h-1.3zM698.6 214.3h1.3v1.3h-1.3zM700.7 214.3h1.3v1.3h-1.3zM702.8 214.3h1.3v1.3h-1.3zM704.9 214.3h1.3v1.3h-1.3zM709.1 214.3h1.3v1.3h-1.3zM713.3 214.3h1.3v1.3h-1.3zM715.4 214.3h1.3v1.3h-1.3zM717.5 214.3h1.3v1.3h-1.3zM719.6 214.3h1.3v1.3h-1.3zM728 214.3h1.3v1.3h-1.3zM732.2 214.3h1.3v1.3h-1.3zM736.4 214.3h1.3v1.3h-1.3zM738.5 214.3h1.3v1.3h-1.3zM740.6 214.3h1.3v1.3h-1.3zM681.8 216.4h1.3v1.3h-1.3zM681.8 218.5h1.3v1.3h-1.3zM681.8 220.6h1.3v1.3h-1.3zM681.8 222.7h1.3v1.3h-1.3zM681.8 224.8h1.3v1.3h-1.3zM681.8 226.9h1.3v1.3h-1.3zM681.8 229h1.3v1.3h-1.3zM681.8 231.1h1.3v1.3h-1.3zM681.8 233.2h1.3v1.3h-1.3zM681.8 235.3h1.3v1.3h-1.3zM681.8 237.4h1.3v1.3h-1.3zM681.8 239.5h1.3v1.3h-1.3zM681.8 243.7h1.3v1.3h-1.3zM681.8 245.8h1.3v1.3h-1.3zM681.8 247.9h1.3v1.3h-1.3zM681.8 252.1h1.3v1.3h-1.3zM744.5 198h1.4v1.4h-1.4zM744.5 200.2h1.4v1.4h-1.4zM744.5 204.6h1.4v1.4h-1.4zM744.5 206.8h1.4v1.4h-1.4zM744.5 209h1.4v1.4h-1.4zM744.5 211.2h1.4v1.4h-1.4zM744.5 213.4h1.4v1.4h-1.4zM744.5 215.6h1.4v1.4h-1.4zM744.5 217.8h1.4v1.4h-1.4zM744.5 220h1.4v1.4h-1.4zM744.5 222.2h1.4v1.4h-1.4zM744.5 224.4h1.4v1.4h-1.4zM744.5 226.6h1.4v1.4h-1.4zM744.5 228.8h1.4v1.4h-1.4zM744.5 231h1.4v1.4h-1.4zM744.5 233.2h1.4v1.4h-1.4zM744.5 235.4h1.4v1.4h-1.4zM744.5 237.6h1.4v1.4h-1.4zM744.5 239.8h1.4v1.4h-1.4zM744.5 242h1.4v1.4h-1.4zM744.5 244.2h1.4v1.4h-1.4zM744.5 246.4h1.4v1.4h-1.4zM744.5 248.6h1.4v1.4h-1.4zM744.5 250.8h1.4v1.4h-1.4zM744.5 253h1.4v1.4h-1.4zM744.5 255.2h1.4v1.4h-1.4zM744.5 257.4h1.4v1.4h-1.4zM744.5 259.6h1.4v1.4h-1.4zM744.5 261.8h1.4v1.4h-1.4zM744.5 270.6h1.4v1.4h-1.4zM744.5 275h1.4v1.4h-1.4zM744.5 277.2h1.4v1.4h-1.4zM744.5 279.4h1.4v1.4h-1.4zM744.5 281.6h1.4v1.4h-1.4zM744.5 286h1.4v1.4h-1.4zM744.5 290.4h1.4v1.4h-1.4zM747.2 206.8h1.4v1.4h-1.4zM747.2 211.2h1.4v1.4h-1.4zM747.2 226.6h1.4v1.4h-1.4zM747.2 228.8h1.4v1.4h-1.4zM747.2 231h1.4v1.4h-1.4zM747.2 237.6h1.4v1.4h-1.4zM747.2 270.6h1.4v1.4h-1.4zM747.2 275h1.4v1.4h-1.4zM747.2 283.8h1.4v1.4h-1.4zM747.2 286h1.4v1.4h-1.4zM597 236h2v1.6h-2zM599.7 238.4h2.3v1.4h-2.3zM603 238.4h1.4v1.4h-1.4zM600 240.8h2.3v1.2h-2.3zM603 240.8h3.1v1.2h-3.1zM603.3 242.8h2.2v1.3h-2.2zM606.4 242.8h2.5v1.3h-2.5zM597 247.2h2.8v1.5h-2.8zM605.4 247.2h2.7v1.5h-2.7zM608.9 247.2h2.1v1.5h-2.1zM597 249.6h3.7v1.5h-3.7zM604 252.2h3.5v1.8h-3.5zM608.2 252.2h2.8v1.8h-2.8zM602 257.3h2.6v1.4h-2.6zM597 260.1h1.5v1.3h-1.5zM606 260.1h3.8v1.3h-3.8zM620.7 250.6h3.4v1.4h-3.4zM626.2 253h1.9v1.3h-1.9zM612 260.6h1.8v.8h-1.8zM615.2 260.6h1.6v.8h-1.6zM600 266h4.5v6h-4.5zM606 266h4.5v6h-4.5zM600 274h4.5v7h-4.5zM606 275h4v5h-4zM600 283h5v7h-5zM607 284h5v6h-5zM612 264.5h6v4h-6zM620 264.5h6v4h-6zM632.3 270.3h1.4v1.4h-1.4zM634.3 270.3h1.4v1.4h-1.4zM620.3 272.3h1.4v1.4h-1.4zM624.3 272.3h1.4v1.4h-1.4zM628.3 272.3h1.4v1.4h-1.4zM630.3 272.3h1.4v1.4h-1.4zM634.3 274.3h1.4v1.4h-1.4zM618.3 276.3h1.4v1.4h-1.4zM628.3 276.3h1.4v1.4h-1.4zM632.3 276.3h1.4v1.4h-1.4zM614.3 278.3h1.4v1.4h-1.4zM616.3 280.3h1.4v1.4h-1.4zM628.3 280.3h1.4v1.4h-1.4zM630.3 282.3h1.4v1.4h-1.4zM632.3 284.3h1.4v1.4h-1.4zM620.3 286.3h1.4v1.4h-1.4zM634.3 286.3h1.4v1.4h-1.4zM616.3 288.3h1.4v1.4h-1.4zM630.3 288.3h1.4v1.4h-1.4zM634.3 288.3h1.4v1.4h-1.4zM645.4 268.3h1.7v1.1h-1.7zM643.2 270.4h1.1v1.2h-1.1zM645.4 279.1h2.8v1.1h-2.8zM644.8 283.6h2.4v1.1h-2.4zM652 283.6h1.5v1.1h-1.5zM640.4 286.2h3.2v.8h-3.2zM650.8 286.2h3.4v.8h-3.4zM651 287.8h1.6v1.1h-1.6zM656.1 290.3h.9v.8h-.9zM640.7 293.8h1v1h-1zM644.4 298.5h1.7v.9h-1.7zM660.4 266h5v1.6h-5zM666.8 266h4.9v1.6h-4.9zM673.1 266h4.7v1.6h-4.7zM679 266h1v1.6h-1zM664.4 268.6h3.8v2.5h-3.8zM671.7 268.6h1.6v2.5h-1.6zM674.5 268.6h4.1v2.5h-4.1zM663.6 272.2h2.1v1.1h-2.1zM670.7 272.2h2.9v1.1h-2.9zM658 274.7h5.1v1h-5.1zM679 274.7h1v1h-1zM671.2 277.2h1.3v.8h-1.3zM658 279.2h2v2.3h-2zM661.1 279.2h2.5v2.3h-2.5zM670.7 279.2h1.5v2.3h-1.5zM677.2 279.2h2.8v2.3h-2.8zM658 282.8h1.5v.8h-1.5zM674.2 282.8h4.6v.8h-4.6zM660.6 285h2.7v2.4h-2.7zM674.7 288.5h4.4v1.4h-4.4zM658 291.1h4.9v1.4h-4.9zM667.5 291.1h1.5v1.4h-1.5zM670 291.1h1.9v1.4h-1.9zM673.2 291.1h3.1v1.4h-3.1zM666.8 293.6h4.7v1.8h-4.7zM672.7 293.6h1.9v1.8h-1.9zM658 296.8h2.8v.8h-2.8zM597 293h2v.8h-2zM600.3 293h2.7v.8h-2.7zM611.1 293h2.2v.8h-2.2zM622.6 293h2.1v.8h-2.1zM625.6 293h1.4v.8h-1.4zM614.2 294.8h1.5v1.4h-1.5zM618.8 294.8h1.5v1.4h-1.5zM630.7 294.8h3.1v1.4h-3.1zM634.9 294.8h3.1v1.4h-3.1zM597 297.4h1.9v1.4h-1.9zM623.3 297.4h3.3v1.4h-3.3zM631.3 297.4h3.7v1.4h-3.7zM654 266.4h4.6v8h-4.6zM660.3 266.4h4.4v8h-4.4zM686.3 264.3h1.1v1.1h-1.1zM694.3 266.3h1.1v1.1h-1.1zM698.3 266.3h1.1v1.1h-1.1zM686.3 268.3h1.1v1.1h-1.1zM686.3 270.3h1.1v1.1h-1.1zM692.3 270.3h1.1v1.1h-1.1zM696.3 270.3h1.1v1.1h-1.1zM702.3 270.3h1.1v1.1h-1.1zM706.3 274.3h1.1v1.1h-1.1zM708.3 274.3h1.1v1.1h-1.1zM696.3 276.3h1.1v1.1h-1.1zM702.3 276.3h1.1v1.1h-1.1zM690.3 278.3h1.1v1.1h-1.1zM692.3 278.3h1.1v1.1h-1.1zM706.3 278.3h1.1v1.1h-1.1zM708.3 280.3h1.1v1.1h-1.1zM698.3 282.3h1.1v1.1h-1.1zM696.3 284.3h1.1v1.1h-1.1zM708.3 284.3h1.1v1.1h-1.1zM686.3 286.3h1.1v1.1h-1.1zM698.3 286.3h1.1v1.1h-1.1zM700.3 286.3h1.1v1.1h-1.1zM688.3 288.3h1.1v1.1h-1.1zM690.3 288.3h1.1v1.1h-1.1zM700.3 288.3h1.1v1.1h-1.1zM708.3 288.3h1.1v1.1h-1.1zM708.3 290.3h1.1v1.1h-1.1zM692.3 292.3h1.1v1.1h-1.1zM702.3 292.3h1.1v1.1h-1.1zM706.3 292.3h1.1v1.1h-1.1zM708.3 292.3h1.1v1.1h-1.1zM694.3 294.3h1.1v1.1h-1.1zM696.3 294.3h1.1v1.1h-1.1zM698.3 294.3h1.1v1.1h-1.1zM700.3 294.3h1.1v1.1h-1.1zM704.3 296.3h1.1v1.1h-1.1zM686 255.5h1.5v.9h-1.5zM699.9 255.5h2.6v.9h-2.6zM707 255.5h3.1v.9h-3.1zM689.4 257.3h3.3v1.7h-3.3zM693.7 257.3h3.7v1.7h-3.7zM686 260h3.4v.8h-3.4zM690.2 260h3.8v.8h-3.8zM702.3 260h1.9v.8h-1.9zM721.7 277h2.9v.9h-2.9zM736.3 277h1.4v.9h-1.4zM736.3 279.2h1.4v1.5h-1.4zM733.3 281.6h3.3v1h-3.3zM737.3 281.6h2.9v1h-2.9zM711 283.9h3.7v.8h-3.7zM720.1 283.9h1.7v.8h-1.7zM725.3 283.9h1.7v.8h-1.7zM732.2 283.9h2.7v.8h-2.7zM739.2 283.9h1.6v.8h-1.6zM735.9 285.8h2.4v1.9h-2.4zM724.8 288.6h3.3v1.7h-3.3zM732.5 288.6h2.1v1.7h-2.1zM740.9 288.6h1.1v1.7h-1.1zM711 291.3h2.6v1.9h-2.6zM721.7 294h2.5v.8h-2.5zM728.2 294h3.7v.8h-3.7zM732.5 294h3.9v.8h-3.9zM737.1 294h2.4v.8h-2.4zM739.1 295.9h2.9v1.5h-2.9zM713 257h1.2v1.2h-1.2zM715 257h1.2v1.2h-1.2zM717 257h1.2v1.2h-1.2zM719 257h1.2v1.2h-1.2zM721 257h1.2v1.2h-1.2zM723 257h1.2v1.2h-1.2zM725 257h1.2v1.2h-1.2zM729 257h1.2v1.2h-1.2zM731 257h1.2v1.2h-1.2zM733 257h1.2v1.2h-1.2zM737 257h1.2v1.2h-1.2zM711 261h1.2v1.2h-1.2zM711 263h1.2v1.2h-1.2zM711 265h1.2v1.2h-1.2zM711 267h1.2v1.2h-1.2zM711 269h1.2v1.2h-1.2zM711 271h1.2v1.2h-1.2zM711 273h1.2v1.2h-1.2zM711 275h1.2v1.2h-1.2zM713 275h1.2v1.2h-1.2zM715 275h1.2v1.2h-1.2zM719 275h1.2v1.2h-1.2zM723 275h1.2v1.2h-1.2zM725 275h1.2v1.2h-1.2zM727 275h1.2v1.2h-1.2zM729 275h1.2v1.2h-1.2zM735 275h1.2v1.2h-1.2zM668 298.7h1.5v1.5h-1.5zM670.3 298.7h1.5v1.5h-1.5zM672.6 298.7h1.5v1.5h-1.5zM674.9 298.7h1.5v1.5h-1.5zM677.2 298.7h1.5v1.5h-1.5zM679.5 298.7h1.5v1.5h-1.5zM681.8 298.7h1.5v1.5h-1.5zM684.1 298.7h1.5v1.5h-1.5zM686.4 298.7h1.5v1.5h-1.5zM688.7 298.7h1.5v1.5h-1.5zM691 298.7h1.5v1.5h-1.5zM693.3 298.7h1.5v1.5h-1.5zM695.6 298.7h1.5v1.5h-1.5zM697.9 298.7h1.5v1.5h-1.5zM700.2 298.7h1.5v1.5h-1.5zM702.5 298.7h1.5v1.5h-1.5zM704.8 298.7h1.5v1.5h-1.5zM707.1 298.7h1.5v1.5h-1.5zM709.4 298.7h1.5v1.5h-1.5zM711.7 298.7h1.5v1.5h-1.5zM714 298.7h1.5v1.5h-1.5zM716.3 298.7h1.5v1.5h-1.5zM718.6 298.7h1.5v1.5h-1.5zM720.9 298.7h1.5v1.5h-1.5zM723.2 298.7h1.5v1.5h-1.5zM725.5 298.7h1.5v1.5h-1.5zM727.8 298.7h1.5v1.5h-1.5zM730.1 298.7h1.5v1.5h-1.5zM732.4 298.7h1.5v1.5h-1.5zM668 301.4h1.5v1.5h-1.5zM670.3 301.4h1.5v1.5h-1.5zM672.6 301.4h1.5v1.5h-1.5zM674.9 301.4h1.5v1.5h-1.5zM677.2 301.4h1.5v1.5h-1.5zM679.5 301.4h1.5v1.5h-1.5zM681.8 301.4h1.5v1.5h-1.5zM684.1 301.4h1.5v1.5h-1.5zM686.4 301.4h1.5v1.5h-1.5zM688.7 301.4h1.5v1.5h-1.5zM691 301.4h1.5v1.5h-1.5zM693.3 301.4h1.5v1.5h-1.5zM695.6 301.4h1.5v1.5h-1.5zM697.9 301.4h1.5v1.5h-1.5zM700.2 301.4h1.5v1.5h-1.5zM702.5 301.4h1.5v1.5h-1.5zM704.8 301.4h1.5v1.5h-1.5zM707.1 301.4h1.5v1.5h-1.5zM597 302.2h1.5v1.5h-1.5zM599.3 302.2h1.5v1.5h-1.5zM603.9 302.2h1.5v1.5h-1.5zM610.8 302.2h1.5v1.5h-1.5zM613.1 302.2h1.5v1.5h-1.5zM615.4 302.2h1.5v1.5h-1.5zM622.3 302.2h1.5v1.5h-1.5zM624.6 302.2h1.5v1.5h-1.5zM629.2 302.2h1.5v1.5h-1.5zM638.4 302.2h1.5v1.5h-1.5zM640.7 302.2h1.5v1.5h-1.5zM643 302.2h1.5v1.5h-1.5zM645.3 302.2h1.5v1.5h-1.5zM647.6 302.2h1.5v1.5h-1.5zM649.9 302.2h1.5v1.5h-1.5zM652.2 302.2h1.5v1.5h-1.5zM656.8 302.2h1.5v1.5h-1.5zM661.4 302.2h1.5v1.5h-1.5zM663.7 302.2h1.5v1.5h-1.5zM597 307.5h1.5v1.5h-1.5zM599.3 307.5h1.5v1.5h-1.5zM601.6 307.5h1.5v1.5h-1.5zM603.9 307.5h1.5v1.5h-1.5zM606.2 307.5h1.5v1.5h-1.5zM608.5 307.5h1.5v1.5h-1.5zM610.8 307.5h1.5v1.5h-1.5zM613.1 307.5h1.5v1.5h-1.5zM615.4 307.5h1.5v1.5h-1.5zM617.7 307.5h1.5v1.5h-1.5zM620 307.5h1.5v1.5h-1.5zM622.3 307.5h1.5v1.5h-1.5zM624.6 307.5h1.5v1.5h-1.5zM626.9 307.5h1.5v1.5h-1.5zM629.2 307.5h1.5v1.5h-1.5zM631.5 307.5h1.5v1.5h-1.5zM633.8 307.5h1.5v1.5h-1.5zM636.1 307.5h1.5v1.5h-1.5zM638.4 307.5h1.5v1.5h-1.5zM640.7 307.5h1.5v1.5h-1.5zM643 307.5h1.5v1.5h-1.5zM645.3 307.5h1.5v1.5h-1.5zM647.6 307.5h1.5v1.5h-1.5zM649.9 307.5h1.5v1.5h-1.5zM652.2 307.5h1.5v1.5h-1.5zM654.5 307.5h1.5v1.5h-1.5zM656.8 307.5h1.5v1.5h-1.5zM659.1 307.5h1.5v1.5h-1.5zM661.4 307.5h1.5v1.5h-1.5zM663.7 307.5h1.5v1.5h-1.5zM597 310.4h1.5v1.5h-1.5zM599.3 310.4h1.5v1.5h-1.5zM601.6 310.4h1.5v1.5h-1.5zM603.9 310.4h1.5v1.5h-1.5zM606.2 310.4h1.5v1.5h-1.5zM608.5 310.4h1.5v1.5h-1.5zM610.8 310.4h1.5v1.5h-1.5zM613.1 310.4h1.5v1.5h-1.5zM615.4 310.4h1.5v1.5h-1.5zM617.7 310.4h1.5v1.5h-1.5zM620 310.4h1.5v1.5h-1.5zM622.3 310.4h1.5v1.5h-1.5zM624.6 310.4h1.5v1.5h-1.5zM626.9 310.4h1.5v1.5h-1.5zM629.2 310.4h1.5v1.5h-1.5zM631.5 310.4h1.5v1.5h-1.5zM633.8 310.4h1.5v1.5h-1.5zM636.1 310.4h1.5v1.5h-1.5zM638.4 310.4h1.5v1.5h-1.5zM640.7 310.4h1.5v1.5h-1.5zM643 310.4h1.5v1.5h-1.5zM645.3 310.4h1.5v1.5h-1.5zM647.6 310.4h1.5v1.5h-1.5zM649.9 310.4h1.5v1.5h-1.5zM652.2 310.4h1.5v1.5h-1.5zM654.5 310.4h1.5v1.5h-1.5zM656.8 310.4h1.5v1.5h-1.5zM659.1 310.4h1.5v1.5h-1.5zM661.4 310.4h1.5v1.5h-1.5zM663.7 310.4h1.5v1.5h-1.5z"/>
<path fill="#cfd0b4" d="M515.2 177.3h1.4v1.4h-1.4zM524 177.3h1.4v1.4h-1.4zM532.8 177.3h1.4v1.4h-1.4zM539.4 177.3h1.4v1.4h-1.4zM546 177.3h1.4v1.4h-1.4zM548.2 177.3h1.4v1.4h-1.4zM550.4 177.3h1.4v1.4h-1.4zM554.8 177.3h1.4v1.4h-1.4zM557 177.3h1.4v1.4h-1.4zM565.8 177.3h1.4v1.4h-1.4zM572.4 177.3h1.4v1.4h-1.4zM574.6 177.3h1.4v1.4h-1.4zM581.2 177.3h1.4v1.4h-1.4zM587.8 177.3h1.4v1.4h-1.4zM513 179.8h1.4v1.4h-1.4zM515.2 179.8h1.4v1.4h-1.4zM528.4 179.8h1.4v1.4h-1.4zM530.6 179.8h1.4v1.4h-1.4zM532.8 179.8h1.4v1.4h-1.4zM552.6 179.8h1.4v1.4h-1.4zM554.8 179.8h1.4v1.4h-1.4zM557 179.8h1.4v1.4h-1.4zM561.4 179.8h1.4v1.4h-1.4zM570.2 179.8h1.4v1.4h-1.4zM572.4 179.8h1.4v1.4h-1.4zM574.6 179.8h1.4v1.4h-1.4zM585.6 179.8h1.4v1.4h-1.4zM511.6 186.3h1.4v1.4h-1.4zM511.6 190.9h1.4v1.4h-1.4zM511.6 200.1h1.4v1.4h-1.4zM511.6 207h1.4v1.4h-1.4zM511.6 211.6h1.4v1.4h-1.4zM511.6 218.5h1.4v1.4h-1.4zM511.6 220.8h1.4v1.4h-1.4zM511.6 223.1h1.4v1.4h-1.4zM511.6 225.4h1.4v1.4h-1.4zM527.6 184.1h1.2v1.2h-1.2zM535.4 184.1h1.2v1.2h-1.2zM519.8 186.1h1.2v1.2h-1.2zM545.1 186.1h1.2v1.2h-1.2zM547.1 186.1h1.2v1.2h-1.2zM517.8 188h1.2v1.2h-1.2zM519.8 188h1.2v1.2h-1.2zM537.3 189.9h1.2v1.2h-1.2zM543.2 189.9h1.2v1.2h-1.2zM539.3 191.9h1.2v1.2h-1.2zM517.8 195.8h1.2v1.2h-1.2zM537.3 195.8h1.2v1.2h-1.2zM541.2 195.8h1.2v1.2h-1.2zM545.1 195.8h1.2v1.2h-1.2zM545.1 197.7h1.2v1.2h-1.2zM543.2 199.7h1.2v1.2h-1.2zM545.1 199.7h1.2v1.2h-1.2zM517.8 201.6h1.2v1.2h-1.2zM537.3 201.6h1.2v1.2h-1.2zM541.2 201.6h1.2v1.2h-1.2zM517.8 203.6h1.2v1.2h-1.2zM519.8 203.6h1.2v1.2h-1.2zM531.5 203.6h1.2v1.2h-1.2zM533.4 203.6h1.2v1.2h-1.2zM537.3 203.6h1.2v1.2h-1.2zM541.2 203.6h1.2v1.2h-1.2zM519.8 205.5h1.2v1.2h-1.2zM525.6 205.5h1.2v1.2h-1.2zM531.5 205.5h1.2v1.2h-1.2zM533.4 205.5h1.2v1.2h-1.2zM537.3 205.5h1.2v1.2h-1.2zM517.8 207.5h1.2v1.2h-1.2zM519.8 207.5h1.2v1.2h-1.2zM525.6 207.5h1.2v1.2h-1.2zM535.4 207.5h1.2v1.2h-1.2zM539.3 207.5h1.2v1.2h-1.2zM545.1 207.5h1.2v1.2h-1.2zM558.8 183.8h1.2v1.2h-1.2zM560.7 183.8h1.2v1.2h-1.2zM574.4 183.8h1.2v1.2h-1.2zM576.3 183.8h1.2v1.2h-1.2zM580.2 183.8h1.2v1.2h-1.2zM574.4 185.8h1.2v1.2h-1.2zM564.6 187.7h1.2v1.2h-1.2zM574.4 187.7h1.2v1.2h-1.2zM570.5 189.6h1.2v1.2h-1.2zM578.3 189.6h1.2v1.2h-1.2zM582.2 189.6h1.2v1.2h-1.2zM560.7 191.6h1.2v1.2h-1.2zM582.2 191.6h1.2v1.2h-1.2zM564.6 193.5h1.2v1.2h-1.2zM574.4 193.5h1.2v1.2h-1.2zM566.6 195.5h1.2v1.2h-1.2zM576.3 195.5h1.2v1.2h-1.2zM580.2 195.5h1.2v1.2h-1.2zM574.4 197.4h1.2v1.2h-1.2zM552.9 203.3h1.2v1.2h-1.2zM556.8 203.3h1.2v1.2h-1.2zM566.6 203.3h1.2v1.2h-1.2zM572.4 203.3h1.2v1.2h-1.2zM560.7 205.2h1.2v1.2h-1.2zM566.6 205.2h1.2v1.2h-1.2zM556.8 207.2h1.2v1.2h-1.2zM566.6 207.2h1.2v1.2h-1.2zM580.2 207.2h1.2v1.2h-1.2zM562.7 209.1h1.2v1.2h-1.2zM580.2 209.1h1.2v1.2h-1.2zM572.4 211.1h1.2v1.2h-1.2zM580.2 211.1h1.2v1.2h-1.2zM562.7 213h1.2v1.2h-1.2zM566.6 213h1.2v1.2h-1.2zM582.2 213h1.2v1.2h-1.2zM552.9 215h1.2v1.2h-1.2zM558.8 215h1.2v1.2h-1.2zM568.5 215h1.2v1.2h-1.2zM582.2 215h1.2v1.2h-1.2zM570.5 216.9h1.2v1.2h-1.2zM576.3 216.9h1.2v1.2h-1.2zM514.4 227.6h1.4v1.4h-1.4zM518.8 227.6h1.4v1.4h-1.4zM529.8 227.6h1.4v1.4h-1.4zM536.4 227.6h1.4v1.4h-1.4zM540.8 227.6h1.4v1.4h-1.4zM547.4 227.6h1.4v1.4h-1.4zM560.6 227.6h1.4v1.4h-1.4zM567.2 227.6h1.4v1.4h-1.4zM584.8 227.6h1.4v1.4h-1.4zM624.8 188.3h1.4v1.4h-1.4zM604.8 190.3h1.4v1.4h-1.4zM620.8 190.3h1.4v1.4h-1.4zM602.8 192.3h1.4v1.4h-1.4zM606.8 196.3h1.4v1.4h-1.4zM616.8 196.3h1.4v1.4h-1.4zM604.8 200.3h1.4v1.4h-1.4zM610.8 200.3h1.4v1.4h-1.4zM600.8 202.3h1.4v1.4h-1.4zM608.8 202.3h1.4v1.4h-1.4zM600.8 208.3h1.4v1.4h-1.4zM630.8 208.3h1.4v1.4h-1.4zM606.8 210.3h1.4v1.4h-1.4zM608.8 218.3h1.4v1.4h-1.4zM624.8 218.3h1.4v1.4h-1.4zM600.8 224.3h1.4v1.4h-1.4zM622.8 226.3h1.4v1.4h-1.4zM600.8 228.3h1.4v1.4h-1.4zM622.3 270.3h1.4v1.4h-1.4zM616.3 272.3h1.4v1.4h-1.4zM622.3 272.3h1.4v1.4h-1.4zM624.3 274.3h1.4v1.4h-1.4zM626.3 274.3h1.4v1.4h-1.4zM632.3 278.3h1.4v1.4h-1.4zM620.3 280.3h1.4v1.4h-1.4zM630.3 280.3h1.4v1.4h-1.4zM632.3 280.3h1.4v1.4h-1.4zM634.3 280.3h1.4v1.4h-1.4zM618.3 282.3h1.4v1.4h-1.4zM622.3 282.3h1.4v1.4h-1.4zM632.3 282.3h1.4v1.4h-1.4zM614.3 284.3h1.4v1.4h-1.4zM620.3 284.3h1.4v1.4h-1.4zM622.3 286.3h1.4v1.4h-1.4zM630.3 286.3h1.4v1.4h-1.4zM632.3 286.3h1.4v1.4h-1.4zM614.3 288.3h1.4v1.4h-1.4zM658 268.6h2.4v2.5h-2.4zM672.8 279.2h3v2.3h-3zM665.8 288.5h5v1.4h-5zM690.3 264.3h1.1v1.1h-1.1zM704.3 264.3h1.1v1.1h-1.1zM688.3 266.3h1.1v1.1h-1.1zM688.3 268.3h1.1v1.1h-1.1zM688.3 272.3h1.1v1.1h-1.1zM698.3 272.3h1.1v1.1h-1.1zM708.3 272.3h1.1v1.1h-1.1zM686.3 278.3h1.1v1.1h-1.1zM708.3 278.3h1.1v1.1h-1.1zM700.3 280.3h1.1v1.1h-1.1zM694.3 286.3h1.1v1.1h-1.1zM706.3 288.3h1.1v1.1h-1.1zM698.3 296.3h1.1v1.1h-1.1zM700.3 296.3h1.1v1.1h-1.1zM738.8 279.2h2.5v1.5h-2.5zM718 281.6h1.4v1h-1.4zM722.4 285.8h4v1.9h-4zM725.3 294h2.3v.8h-2.3zM713.3 295.9h2v1.5h-2zM731.9 295.9h3.2v1.5h-3.2z"/>
<path fill="#9ea6c0" d="M517.4 177.3h1.4v1.4h-1.4zM519.6 177.3h1.4v1.4h-1.4zM528.4 177.3h1.4v1.4h-1.4zM530.6 177.3h1.4v1.4h-1.4zM535 177.3h1.4v1.4h-1.4zM537.2 177.3h1.4v1.4h-1.4zM541.6 177.3h1.4v1.4h-1.4zM552.6 177.3h1.4v1.4h-1.4zM559.2 177.3h1.4v1.4h-1.4zM561.4 177.3h1.4v1.4h-1.4zM563.6 177.3h1.4v1.4h-1.4zM568 177.3h1.4v1.4h-1.4zM570.2 177.3h1.4v1.4h-1.4zM576.8 177.3h1.4v1.4h-1.4zM579 177.3h1.4v1.4h-1.4zM585.6 177.3h1.4v1.4h-1.4zM517.4 179.8h1.4v1.4h-1.4zM519.6 179.8h1.4v1.4h-1.4zM521.8 179.8h1.4v1.4h-1.4zM535 179.8h1.4v1.4h-1.4zM539.4 179.8h1.4v1.4h-1.4zM541.6 179.8h1.4v1.4h-1.4zM543.8 179.8h1.4v1.4h-1.4zM546 179.8h1.4v1.4h-1.4zM550.4 179.8h1.4v1.4h-1.4zM559.2 179.8h1.4v1.4h-1.4zM565.8 179.8h1.4v1.4h-1.4zM568 179.8h1.4v1.4h-1.4zM576.8 179.8h1.4v1.4h-1.4zM579 179.8h1.4v1.4h-1.4zM581.2 179.8h1.4v1.4h-1.4zM587.8 179.8h1.4v1.4h-1.4zM506.5 194h1.4v1.4h-1.4zM506.5 196.3h1.4v1.4h-1.4zM506.5 200.9h1.4v1.4h-1.4zM506.5 205.5h1.4v1.4h-1.4zM506.5 207.8h1.4v1.4h-1.4zM506.5 212.4h1.4v1.4h-1.4zM506.5 221.6h1.4v1.4h-1.4zM506.5 223.9h1.4v1.4h-1.4zM506.5 226.2h1.4v1.4h-1.4zM506.5 228.5h1.4v1.4h-1.4zM506.5 230.8h1.4v1.4h-1.4zM509 184h1.4v1.4h-1.4zM509 186.3h1.4v1.4h-1.4zM509 188.6h1.4v1.4h-1.4zM509 190.9h1.4v1.4h-1.4zM509 193.2h1.4v1.4h-1.4zM509 195.5h1.4v1.4h-1.4zM509 202.4h1.4v1.4h-1.4zM509 204.7h1.4v1.4h-1.4zM509 207h1.4v1.4h-1.4zM509 209.3h1.4v1.4h-1.4zM509 213.9h1.4v1.4h-1.4zM509 216.2h1.4v1.4h-1.4zM509 218.5h1.4v1.4h-1.4zM509 220.8h1.4v1.4h-1.4zM509 223.1h1.4v1.4h-1.4zM509 225.4h1.4v1.4h-1.4zM509 227.7h1.4v1.4h-1.4zM511.6 184h1.4v1.4h-1.4zM511.6 188.6h1.4v1.4h-1.4zM511.6 193.2h1.4v1.4h-1.4zM511.6 197.8h1.4v1.4h-1.4zM511.6 202.4h1.4v1.4h-1.4zM511.6 204.7h1.4v1.4h-1.4zM511.6 209.3h1.4v1.4h-1.4zM511.6 213.9h1.4v1.4h-1.4zM511.6 216.2h1.4v1.4h-1.4zM511.6 227.7h1.4v1.4h-1.4zM519.8 184.1h1.2v1.2h-1.2zM521.7 184.1h1.2v1.2h-1.2zM525.6 184.1h1.2v1.2h-1.2zM529.5 184.1h1.2v1.2h-1.2zM531.5 184.1h1.2v1.2h-1.2zM533.4 184.1h1.2v1.2h-1.2zM539.3 184.1h1.2v1.2h-1.2zM541.2 184.1h1.2v1.2h-1.2zM547.1 184.1h1.2v1.2h-1.2zM517.8 186.1h1.2v1.2h-1.2zM543.2 186.1h1.2v1.2h-1.2zM535.4 188h1.2v1.2h-1.2zM537.3 188h1.2v1.2h-1.2zM543.2 188h1.2v1.2h-1.2zM545.1 188h1.2v1.2h-1.2zM517.8 189.9h1.2v1.2h-1.2zM519.8 191.9h1.2v1.2h-1.2zM535.4 191.9h1.2v1.2h-1.2zM543.2 191.9h1.2v1.2h-1.2zM545.1 191.9h1.2v1.2h-1.2zM547.1 191.9h1.2v1.2h-1.2zM517.8 193.8h1.2v1.2h-1.2zM535.4 193.8h1.2v1.2h-1.2zM541.2 193.8h1.2v1.2h-1.2zM547.1 193.8h1.2v1.2h-1.2zM543.2 195.8h1.2v1.2h-1.2zM547.1 195.8h1.2v1.2h-1.2zM519.8 197.7h1.2v1.2h-1.2zM537.3 197.7h1.2v1.2h-1.2zM539.3 197.7h1.2v1.2h-1.2zM541.2 197.7h1.2v1.2h-1.2zM543.2 197.7h1.2v1.2h-1.2zM547.1 197.7h1.2v1.2h-1.2zM517.8 199.7h1.2v1.2h-1.2zM537.3 199.7h1.2v1.2h-1.2zM541.2 199.7h1.2v1.2h-1.2zM519.8 201.6h1.2v1.2h-1.2zM521.7 201.6h1.2v1.2h-1.2zM531.5 201.6h1.2v1.2h-1.2zM535.4 201.6h1.2v1.2h-1.2zM543.2 201.6h1.2v1.2h-1.2zM545.1 201.6h1.2v1.2h-1.2zM547.1 201.6h1.2v1.2h-1.2zM523.7 203.6h1.2v1.2h-1.2zM525.6 203.6h1.2v1.2h-1.2zM535.4 203.6h1.2v1.2h-1.2zM543.2 203.6h1.2v1.2h-1.2zM545.1 203.6h1.2v1.2h-1.2zM523.7 205.5h1.2v1.2h-1.2zM535.4 205.5h1.2v1.2h-1.2zM539.3 205.5h1.2v1.2h-1.2zM541.2 205.5h1.2v1.2h-1.2zM543.2 205.5h1.2v1.2h-1.2zM547.1 205.5h1.2v1.2h-1.2zM521.7 207.5h1.2v1.2h-1.2zM523.7 207.5h1.2v1.2h-1.2zM527.6 207.5h1.2v1.2h-1.2zM529.5 207.5h1.2v1.2h-1.2zM531.5 207.5h1.2v1.2h-1.2zM533.4 207.5h1.2v1.2h-1.2zM543.2 207.5h1.2v1.2h-1.2zM528.7 211h2.7v.8h-2.7zM532.2 211h1.5v.8h-1.5zM520.1 213.1h2.9v.8h-2.9zM523.3 214.7h2.6v1.3h-2.6zM517.3 216.8h2.9v1h-2.9zM523.4 216.8h1.4v1h-1.4zM526.1 216.8h2.5v1h-2.5zM542.5 216.8h2.3v1h-2.3zM546.1 216.8h1.9v1h-1.9zM518.8 218.8h1.1v.8h-1.1zM531.5 218.8h2.1v.8h-2.1zM540 218.8h2.6v.8h-2.6zM515 220.2h3.4v.8h-3.4zM521.6 220.2h3.1v.8h-3.1zM536.2 222.2h2.7v1h-2.7zM543.6 222.2h1.3v1h-1.3zM517.3 224.5h1.4v.9h-1.4zM530.5 224.5h2.7v.9h-2.7zM562.7 183.8h1.2v1.2h-1.2zM566.6 183.8h1.2v1.2h-1.2zM554.9 185.8h1.2v1.2h-1.2zM558.8 185.8h1.2v1.2h-1.2zM560.7 185.8h1.2v1.2h-1.2zM576.3 185.8h1.2v1.2h-1.2zM580.2 185.8h1.2v1.2h-1.2zM560.7 187.7h1.2v1.2h-1.2zM562.7 187.7h1.2v1.2h-1.2zM578.3 187.7h1.2v1.2h-1.2zM580.2 187.7h1.2v1.2h-1.2zM582.2 187.7h1.2v1.2h-1.2zM554.9 189.6h1.2v1.2h-1.2zM564.6 189.6h1.2v1.2h-1.2zM558.8 191.6h1.2v1.2h-1.2zM564.6 191.6h1.2v1.2h-1.2zM572.4 191.6h1.2v1.2h-1.2zM552.9 193.5h1.2v1.2h-1.2zM556.8 193.5h1.2v1.2h-1.2zM568.5 193.5h1.2v1.2h-1.2zM570.5 193.5h1.2v1.2h-1.2zM580.2 193.5h1.2v1.2h-1.2zM582.2 193.5h1.2v1.2h-1.2zM558.8 195.5h1.2v1.2h-1.2zM562.7 195.5h1.2v1.2h-1.2zM570.5 195.5h1.2v1.2h-1.2zM572.4 195.5h1.2v1.2h-1.2zM578.3 195.5h1.2v1.2h-1.2zM582.2 195.5h1.2v1.2h-1.2zM576.3 197.4h1.2v1.2h-1.2zM558.8 199.4h1.2v1.2h-1.2zM560.7 199.4h1.2v1.2h-1.2zM564.6 199.4h1.2v1.2h-1.2zM572.4 199.4h1.2v1.2h-1.2zM576.3 199.4h1.2v1.2h-1.2zM578.3 199.4h1.2v1.2h-1.2zM580.2 199.4h1.2v1.2h-1.2zM564.6 201.3h1.2v1.2h-1.2zM574.4 201.3h1.2v1.2h-1.2zM576.3 201.3h1.2v1.2h-1.2zM578.3 201.3h1.2v1.2h-1.2zM580.2 201.3h1.2v1.2h-1.2zM554.9 203.3h1.2v1.2h-1.2zM570.5 203.3h1.2v1.2h-1.2zM578.3 203.3h1.2v1.2h-1.2zM556.8 205.2h1.2v1.2h-1.2zM558.8 205.2h1.2v1.2h-1.2zM574.4 205.2h1.2v1.2h-1.2zM582.2 205.2h1.2v1.2h-1.2zM564.6 207.2h1.2v1.2h-1.2zM568.5 207.2h1.2v1.2h-1.2zM576.3 207.2h1.2v1.2h-1.2zM582.2 207.2h1.2v1.2h-1.2zM552.9 209.1h1.2v1.2h-1.2zM554.9 209.1h1.2v1.2h-1.2zM558.8 209.1h1.2v1.2h-1.2zM560.7 209.1h1.2v1.2h-1.2zM566.6 209.1h1.2v1.2h-1.2zM572.4 209.1h1.2v1.2h-1.2zM576.3 209.1h1.2v1.2h-1.2zM554.9 211.1h1.2v1.2h-1.2zM560.7 211.1h1.2v1.2h-1.2zM564.6 211.1h1.2v1.2h-1.2zM576.3 211.1h1.2v1.2h-1.2zM582.2 211.1h1.2v1.2h-1.2zM556.8 213h1.2v1.2h-1.2zM568.5 213h1.2v1.2h-1.2zM578.3 213h1.2v1.2h-1.2zM580.2 213h1.2v1.2h-1.2zM560.7 215h1.2v1.2h-1.2zM562.7 215h1.2v1.2h-1.2zM578.3 215h1.2v1.2h-1.2zM552.9 216.9h1.2v1.2h-1.2zM556.8 216.9h1.2v1.2h-1.2zM562.7 216.9h1.2v1.2h-1.2zM564.6 216.9h1.2v1.2h-1.2zM566.6 216.9h1.2v1.2h-1.2zM510 227.6h1.4v1.4h-1.4zM512.2 227.6h1.4v1.4h-1.4zM516.6 227.6h1.4v1.4h-1.4zM521 227.6h1.4v1.4h-1.4zM523.2 227.6h1.4v1.4h-1.4zM525.4 227.6h1.4v1.4h-1.4zM527.6 227.6h1.4v1.4h-1.4zM534.2 227.6h1.4v1.4h-1.4zM538.6 227.6h1.4v1.4h-1.4zM545.2 227.6h1.4v1.4h-1.4zM549.6 227.6h1.4v1.4h-1.4zM554 227.6h1.4v1.4h-1.4zM556.2 227.6h1.4v1.4h-1.4zM558.4 227.6h1.4v1.4h-1.4zM562.8 227.6h1.4v1.4h-1.4zM565 227.6h1.4v1.4h-1.4zM573.8 227.6h1.4v1.4h-1.4zM576 227.6h1.4v1.4h-1.4zM578.2 227.6h1.4v1.4h-1.4zM580.4 227.6h1.4v1.4h-1.4zM587 227.6h1.4v1.4h-1.4zM510 230.2h1.4v1.4h-1.4zM540.8 230.2h1.4v1.4h-1.4zM543 230.2h1.4v1.4h-1.4zM545.2 230.2h1.4v1.4h-1.4zM547.4 230.2h1.4v1.4h-1.4zM549.6 230.2h1.4v1.4h-1.4zM551.8 230.2h1.4v1.4h-1.4zM556.2 230.2h1.4v1.4h-1.4zM558.4 230.2h1.4v1.4h-1.4zM565 230.2h1.4v1.4h-1.4zM582.6 230.2h1.4v1.4h-1.4zM592.3 201.6h1.4v1.4h-1.4zM592.3 203.8h1.4v1.4h-1.4zM592.3 250h1.4v1.4h-1.4zM592.3 263.2h1.4v1.4h-1.4zM592.3 274.2h1.4v1.4h-1.4zM592.3 276.4h1.4v1.4h-1.4zM592.3 280.8h1.4v1.4h-1.4zM592.3 283h1.4v1.4h-1.4zM592.3 287.4h1.4v1.4h-1.4zM592.3 300.6h1.4v1.4h-1.4zM592.3 302.8h1.4v1.4h-1.4zM592.3 307.2h1.4v1.4h-1.4zM586.5 188.4h1.3v1.3h-1.3zM586.5 192.8h1.3v1.3h-1.3zM586.5 195h1.3v1.3h-1.3zM586.5 201.6h1.3v1.3h-1.3zM586.5 203.8h1.3v1.3h-1.3zM586.5 206h1.3v1.3h-1.3zM586.5 210.4h1.3v1.3h-1.3zM586.5 217h1.3v1.3h-1.3zM586.5 221.4h1.3v1.3h-1.3zM586.5 223.6h1.3v1.3h-1.3zM618 177.3h1.4v1.4h-1.4zM637.8 177.3h1.4v1.4h-1.4zM653.2 177.3h1.4v1.4h-1.4zM662 177.3h1.4v1.4h-1.4zM664.2 177.3h1.4v1.4h-1.4zM668 182.4h1.4v1.4h-1.4zM672.4 182.4h1.4v1.4h-1.4zM676.8 182.4h1.4v1.4h-1.4zM690 182.4h1.4v1.4h-1.4zM692.2 182.4h1.4v1.4h-1.4zM699 182.3h1.3v1.3h-1.3zM701.2 182.3h1.3v1.3h-1.3zM703.4 182.3h1.3v1.3h-1.3zM705.6 182.3h1.3v1.3h-1.3zM707.8 182.3h1.3v1.3h-1.3zM710 182.3h1.3v1.3h-1.3zM712.2 182.3h1.3v1.3h-1.3zM714.4 182.3h1.3v1.3h-1.3zM716.6 182.3h1.3v1.3h-1.3zM718.8 182.3h1.3v1.3h-1.3zM721 182.3h1.3v1.3h-1.3zM723.2 182.3h1.3v1.3h-1.3zM725.4 182.3h1.3v1.3h-1.3zM727.6 182.3h1.3v1.3h-1.3zM729.8 182.3h1.3v1.3h-1.3zM732 182.3h1.3v1.3h-1.3zM734.2 182.3h1.3v1.3h-1.3zM699 184.6h1.3v1.3h-1.3zM701.2 184.6h1.3v1.3h-1.3zM703.4 184.6h1.3v1.3h-1.3zM710 184.6h1.3v1.3h-1.3zM714.4 184.6h1.3v1.3h-1.3zM716.6 184.6h1.3v1.3h-1.3zM718.8 184.6h1.3v1.3h-1.3zM725.4 184.6h1.3v1.3h-1.3zM729.8 184.6h1.3v1.3h-1.3zM732 184.6h1.3v1.3h-1.3zM620.2 232h3.5v2.4h-3.5zM633 232h4v2.4h-4zM641 185h4.1v.9h-4.1zM650.7 185h4.2v.9h-4.2zM641 187.4h1.7v1h-1.7zM649.4 187.4h3v1h-3zM653.1 187.4h3.9v1h-3.9zM658.3 187.4h1.9v1h-1.9zM646.2 189.8h2.9v1.7h-2.9zM656.5 189.8h1.6v1.7h-1.6zM659.1 189.8h3.5v1.7h-3.5zM641 197.8h2.1v1.8h-2.1zM648.1 197.8h3.8v1.8h-3.8zM648.6 201h3v1.7h-3zM657 201h3.9v1.7h-3.9zM664.9 201h2v1.7h-2zM641 203.8h1.9v1.6h-1.9zM643.8 203.8h2.2v1.6h-2.2zM647.2 203.8h3.2v1.6h-3.2zM645.8 206.7h4.3v2h-4.3zM651.2 206.7h2.1v2h-2.1zM659.8 206.7h2.5v2h-2.5zM663.1 206.7h3.7v2h-3.7zM648 209.6h3.5v2.1h-3.5zM656 209.6h2.4v2.1h-2.4zM661.9 209.6h4v2.1h-4zM652.8 213.2h1.6v2.2h-1.6zM660.8 213.2h3.3v2.2h-3.3zM652.9 227h1.8v1.1h-1.8zM655.7 227h1.5v1.1h-1.5zM645.6 229h3.7v2.2h-3.7zM659.6 229h3.4v2.2h-3.4zM650.2 232.6h2.5v2.1h-2.5zM641 235.9h3.4v1.4h-3.4zM653.9 238.3h3.8v1.2h-3.8zM657.7 240.9h3.9v.8h-3.9zM643.8 243.8h1.4v1.4h-1.4zM651.8 243.8h1.4v1.4h-1.4zM657.8 243.8h1.4v1.4h-1.4zM645.8 247.8h1.4v1.4h-1.4zM641.8 249.8h1.4v1.4h-1.4zM647.8 251.8h1.4v1.4h-1.4zM651.8 257.8h1.4v1.4h-1.4zM643.8 259.8h1.4v1.4h-1.4zM653.8 259.8h1.4v1.4h-1.4zM655.8 261.8h1.4v1.4h-1.4zM657.8 261.8h1.4v1.4h-1.4zM717.4 199h3.6v.8h-3.6zM726.3 199h3.3v.8h-3.3zM723.2 203.6h1.5v.8h-1.5zM717.3 205.3h2.6v.8h-2.6zM689.7 210.5h3.4v1.8h-3.4zM694 210.5h3.8v1.8h-3.8zM698.6 210.5h2.1v1.8h-2.1zM701.9 210.5h1.5v1.8h-1.5zM714.5 210.5h4v1.8h-4zM735.5 210.5h2v1.8h-2zM684.3 216.8h1.5v1.5h-1.5zM686.4 216.8h1.5v1.5h-1.5zM690.6 216.8h1.5v1.5h-1.5zM705.3 216.8h1.5v1.5h-1.5zM713.7 216.8h1.5v1.5h-1.5zM715.8 216.8h1.5v1.5h-1.5zM728.4 216.8h1.5v1.5h-1.5zM730.5 216.8h1.5v1.5h-1.5zM738.9 216.8h1.5v1.5h-1.5zM696.9 218.9h1.5v1.5h-1.5zM711.6 218.9h1.5v1.5h-1.5zM720 218.9h1.5v1.5h-1.5zM722.1 218.9h1.5v1.5h-1.5zM736.8 218.9h1.5v1.5h-1.5zM684.3 221h1.5v1.5h-1.5zM690.6 221h1.5v1.5h-1.5zM692.7 221h1.5v1.5h-1.5zM715.8 221h1.5v1.5h-1.5zM722.1 221h1.5v1.5h-1.5zM726.3 221h1.5v1.5h-1.5zM728.4 221h1.5v1.5h-1.5zM694.8 223.1h1.5v1.5h-1.5zM701.1 223.1h1.5v1.5h-1.5zM705.3 223.1h1.5v1.5h-1.5zM726.3 223.1h1.5v1.5h-1.5zM717.9 225.2h1.5v1.5h-1.5zM720 225.2h1.5v1.5h-1.5zM736.8 225.2h1.5v1.5h-1.5zM734.7 227.3h1.5v1.5h-1.5zM696.9 229.4h1.5v1.5h-1.5zM709.5 229.4h1.5v1.5h-1.5zM711.6 229.4h1.5v1.5h-1.5zM720 229.4h1.5v1.5h-1.5zM686.4 231.5h1.5v1.5h-1.5zM699 231.5h1.5v1.5h-1.5zM703.2 231.5h1.5v1.5h-1.5zM686.4 233.6h1.5v1.5h-1.5zM703.2 233.6h1.5v1.5h-1.5zM705.3 233.6h1.5v1.5h-1.5zM709.5 233.6h1.5v1.5h-1.5zM711.6 233.6h1.5v1.5h-1.5zM713.7 233.6h1.5v1.5h-1.5zM717.9 233.6h1.5v1.5h-1.5zM720 233.6h1.5v1.5h-1.5zM724.2 233.6h1.5v1.5h-1.5zM732.6 233.6h1.5v1.5h-1.5zM734.7 233.6h1.5v1.5h-1.5zM684.3 235.7h1.5v1.5h-1.5zM686.4 235.7h1.5v1.5h-1.5zM703.2 235.7h1.5v1.5h-1.5zM705.3 235.7h1.5v1.5h-1.5zM713.7 235.7h1.5v1.5h-1.5zM722.1 235.7h1.5v1.5h-1.5zM728.4 235.7h1.5v1.5h-1.5zM734.7 235.7h1.5v1.5h-1.5zM736.8 235.7h1.5v1.5h-1.5zM684.3 237.8h1.5v1.5h-1.5zM694.8 237.8h1.5v1.5h-1.5zM703.2 237.8h1.5v1.5h-1.5zM720 237.8h1.5v1.5h-1.5zM722.1 237.8h1.5v1.5h-1.5zM686.4 239.9h1.5v1.5h-1.5zM699 239.9h1.5v1.5h-1.5zM724.2 239.9h1.5v1.5h-1.5zM726.3 239.9h1.5v1.5h-1.5zM690.6 242h1.5v1.5h-1.5zM705.3 242h1.5v1.5h-1.5zM738.9 242h1.5v1.5h-1.5zM701.1 244.1h1.5v1.5h-1.5zM705.3 244.1h1.5v1.5h-1.5zM728.4 244.1h1.5v1.5h-1.5zM732.6 244.1h1.5v1.5h-1.5zM686.4 246.2h1.5v1.5h-1.5zM705.3 246.2h1.5v1.5h-1.5zM715.8 246.2h1.5v1.5h-1.5zM717.9 246.2h1.5v1.5h-1.5zM728.4 246.2h1.5v1.5h-1.5zM688.5 250.4h1.5v1.5h-1.5zM692.7 250.4h1.5v1.5h-1.5zM699 250.4h1.5v1.5h-1.5zM701.1 250.4h1.5v1.5h-1.5zM705.3 250.4h1.5v1.5h-1.5zM707.4 250.4h1.5v1.5h-1.5zM709.5 250.4h1.5v1.5h-1.5zM711.6 250.4h1.5v1.5h-1.5zM724.2 250.4h1.5v1.5h-1.5zM728.4 250.4h1.5v1.5h-1.5zM730.5 250.4h1.5v1.5h-1.5zM681.8 214.3h1.3v1.3h-1.3zM688.1 214.3h1.3v1.3h-1.3zM690.2 214.3h1.3v1.3h-1.3zM707 214.3h1.3v1.3h-1.3zM711.2 214.3h1.3v1.3h-1.3zM721.7 214.3h1.3v1.3h-1.3zM723.8 214.3h1.3v1.3h-1.3zM725.9 214.3h1.3v1.3h-1.3zM730.1 214.3h1.3v1.3h-1.3zM734.3 214.3h1.3v1.3h-1.3zM681.8 241.6h1.3v1.3h-1.3zM681.8 250h1.3v1.3h-1.3zM744.5 202.4h1.4v1.4h-1.4zM744.5 264h1.4v1.4h-1.4zM744.5 266.2h1.4v1.4h-1.4zM744.5 268.4h1.4v1.4h-1.4zM744.5 272.8h1.4v1.4h-1.4zM744.5 283.8h1.4v1.4h-1.4zM744.5 288.2h1.4v1.4h-1.4zM747.2 198h1.4v1.4h-1.4zM747.2 200.2h1.4v1.4h-1.4zM747.2 202.4h1.4v1.4h-1.4zM747.2 204.6h1.4v1.4h-1.4zM747.2 209h1.4v1.4h-1.4zM747.2 213.4h1.4v1.4h-1.4zM747.2 215.6h1.4v1.4h-1.4zM747.2 217.8h1.4v1.4h-1.4zM747.2 220h1.4v1.4h-1.4zM747.2 222.2h1.4v1.4h-1.4zM747.2 224.4h1.4v1.4h-1.4zM747.2 233.2h1.4v1.4h-1.4zM747.2 235.4h1.4v1.4h-1.4zM747.2 239.8h1.4v1.4h-1.4zM747.2 242h1.4v1.4h-1.4zM747.2 244.2h1.4v1.4h-1.4zM747.2 246.4h1.4v1.4h-1.4zM747.2 248.6h1.4v1.4h-1.4zM747.2 250.8h1.4v1.4h-1.4zM747.2 253h1.4v1.4h-1.4zM747.2 255.2h1.4v1.4h-1.4zM747.2 257.4h1.4v1.4h-1.4zM747.2 259.6h1.4v1.4h-1.4zM747.2 261.8h1.4v1.4h-1.4zM747.2 264h1.4v1.4h-1.4zM747.2 266.2h1.4v1.4h-1.4zM747.2 268.4h1.4v1.4h-1.4zM747.2 272.8h1.4v1.4h-1.4zM747.2 277.2h1.4v1.4h-1.4zM747.2 279.4h1.4v1.4h-1.4zM747.2 281.6h1.4v1.4h-1.4zM747.2 288.2h1.4v1.4h-1.4zM747.2 290.4h1.4v1.4h-1.4zM599.3 260.1h3.7v1.3h-3.7zM615.5 238.4h1.5v.8h-1.5zM612 240.4h2.3v.8h-2.3zM622 240.4h1.3v.8h-1.3zM625.1 249.3h1.5v.8h-1.5zM615 255.4h3.1v1.5h-3.1zM624.3 270.3h1.4v1.4h-1.4zM626.3 270.3h1.4v1.4h-1.4zM618.3 274.3h1.4v1.4h-1.4zM628.3 274.3h1.4v1.4h-1.4zM626.3 276.3h1.4v1.4h-1.4zM634.3 278.3h1.4v1.4h-1.4zM624.3 280.3h1.4v1.4h-1.4zM626.3 280.3h1.4v1.4h-1.4zM614.3 282.3h1.4v1.4h-1.4zM628.3 282.3h1.4v1.4h-1.4zM616.3 286.3h1.4v1.4h-1.4zM618.3 286.3h1.4v1.4h-1.4zM624.3 288.3h1.4v1.4h-1.4zM653.9 287.8h3.1v1.1h-3.1zM655.5 291.8h1.5v.8h-1.5zM642.4 296.1h2v.9h-2zM642.3 298.5h1.2v.9h-1.2zM669 268.6h2v2.5h-2zM658 272.2h1.4v1.1h-1.4zM674.5 272.2h4.1v1.1h-4.1zM664.2 274.7h3v1h-3zM664.9 282.8h1.7v.8h-1.7zM667.9 282.8h2.3v.8h-2.3zM678.8 296.8h1.2v.8h-1.2zM634.7 293h2v.8h-2zM597 294.8h3.5v1.4h-3.5zM625.8 294.8h3.8v1.4h-3.8zM639 294.8h1v1.4h-1zM600.2 297.4h3.2v1.4h-3.2zM698.3 264.3h1.1v1.1h-1.1zM696.3 266.3h1.1v1.1h-1.1zM700.3 266.3h1.1v1.1h-1.1zM690.3 268.3h1.1v1.1h-1.1zM700.3 268.3h1.1v1.1h-1.1zM704.3 268.3h1.1v1.1h-1.1zM700.3 272.3h1.1v1.1h-1.1zM704.3 272.3h1.1v1.1h-1.1zM686.3 274.3h1.1v1.1h-1.1zM700.3 274.3h1.1v1.1h-1.1zM704.3 274.3h1.1v1.1h-1.1zM700.3 276.3h1.1v1.1h-1.1zM708.3 276.3h1.1v1.1h-1.1zM706.3 280.3h1.1v1.1h-1.1zM690.3 286.3h1.1v1.1h-1.1zM702.3 286.3h1.1v1.1h-1.1zM696.3 288.3h1.1v1.1h-1.1zM704.3 288.3h1.1v1.1h-1.1zM702.3 290.3h1.1v1.1h-1.1zM698.3 292.3h1.1v1.1h-1.1zM704.3 292.3h1.1v1.1h-1.1zM686.3 294.3h1.1v1.1h-1.1zM686.3 296.3h1.1v1.1h-1.1zM688.3 296.3h1.1v1.1h-1.1zM690.3 296.3h1.1v1.1h-1.1zM688.3 255.5h2.9v.9h-2.9zM695.4 260h2.7v.8h-2.7zM715.2 277h2.7v.9h-2.7zM718.5 277h2v.9h-2zM733.4 277h2.1v.9h-2.1zM715.9 279.2h1.4v1.5h-1.4zM713.3 281.6h3.8v1h-3.8zM720.2 281.6h3.6v1h-3.6zM724.8 281.6h3.5v1h-3.5zM740.8 281.6h1.2v1h-1.2zM722.4 283.9h1.8v.8h-1.8zM735.5 283.9h3v.8h-3zM711 285.8h2.5v1.9h-2.5zM727.6 285.8h1.4v1.9h-1.4zM730.2 285.8h2.2v1.9h-2.2zM717.6 288.6h1.2v1.7h-1.2zM714.7 291.3h4.1v1.9h-4.1zM720 291.3h3.5v1.9h-3.5zM726.4 291.3h2.1v1.9h-2.1zM729.3 291.3h4.1v1.9h-4.1zM713.8 294h1.5v.8h-1.5zM740.2 294h1.8v.8h-1.8zM716.5 295.9h2.5v1.5h-2.5zM729.8 295.9h1.5v1.5h-1.5zM736.3 295.9h1.7v1.5h-1.7zM711 257h1.2v1.2h-1.2zM727 257h1.2v1.2h-1.2zM735 257h1.2v1.2h-1.2zM711 259h1.2v1.2h-1.2zM717 275h1.2v1.2h-1.2zM721 275h1.2v1.2h-1.2zM731 275h1.2v1.2h-1.2zM733 275h1.2v1.2h-1.2zM737 275h1.2v1.2h-1.2zM601.6 302.2h1.5v1.5h-1.5zM606.2 302.2h1.5v1.5h-1.5zM608.5 302.2h1.5v1.5h-1.5zM617.7 302.2h1.5v1.5h-1.5zM620 302.2h1.5v1.5h-1.5zM626.9 302.2h1.5v1.5h-1.5zM631.5 302.2h1.5v1.5h-1.5zM633.8 302.2h1.5v1.5h-1.5zM636.1 302.2h1.5v1.5h-1.5zM654.5 302.2h1.5v1.5h-1.5zM659.1 302.2h1.5v1.5h-1.5z"/>
<path fill="#a39a4c" d="M554.9 183.8h1.2v1.2h-1.2zM556.8 183.8h1.2v1.2h-1.2zM564.6 183.8h1.2v1.2h-1.2zM568.5 183.8h1.2v1.2h-1.2zM570.5 183.8h1.2v1.2h-1.2zM572.4 183.8h1.2v1.2h-1.2zM578.3 183.8h1.2v1.2h-1.2zM582.2 183.8h1.2v1.2h-1.2zM552.9 185.8h1.2v1.2h-1.2zM562.7 185.8h1.2v1.2h-1.2zM564.6 185.8h1.2v1.2h-1.2zM568.5 185.8h1.2v1.2h-1.2zM578.3 185.8h1.2v1.2h-1.2zM566.6 187.7h1.2v1.2h-1.2zM568.5 187.7h1.2v1.2h-1.2zM570.5 187.7h1.2v1.2h-1.2zM566.6 189.6h1.2v1.2h-1.2zM568.5 189.6h1.2v1.2h-1.2zM576.3 189.6h1.2v1.2h-1.2zM556.8 191.6h1.2v1.2h-1.2zM562.7 191.6h1.2v1.2h-1.2zM576.3 191.6h1.2v1.2h-1.2zM578.3 191.6h1.2v1.2h-1.2zM560.7 193.5h1.2v1.2h-1.2zM562.7 193.5h1.2v1.2h-1.2zM572.4 193.5h1.2v1.2h-1.2zM576.3 193.5h1.2v1.2h-1.2zM552.9 195.5h1.2v1.2h-1.2zM554.9 195.5h1.2v1.2h-1.2zM556.8 195.5h1.2v1.2h-1.2zM560.7 195.5h1.2v1.2h-1.2zM564.6 195.5h1.2v1.2h-1.2zM568.5 195.5h1.2v1.2h-1.2zM552.9 197.4h1.2v1.2h-1.2zM562.7 197.4h1.2v1.2h-1.2zM570.5 197.4h1.2v1.2h-1.2zM572.4 197.4h1.2v1.2h-1.2zM552.9 199.4h1.2v1.2h-1.2zM570.5 199.4h1.2v1.2h-1.2zM558.8 201.3h1.2v1.2h-1.2zM560.7 201.3h1.2v1.2h-1.2zM562.7 201.3h1.2v1.2h-1.2zM558.8 203.3h1.2v1.2h-1.2zM576.3 203.3h1.2v1.2h-1.2zM580.2 203.3h1.2v1.2h-1.2zM562.7 205.2h1.2v1.2h-1.2zM570.5 205.2h1.2v1.2h-1.2zM578.3 205.2h1.2v1.2h-1.2zM580.2 205.2h1.2v1.2h-1.2zM552.9 207.2h1.2v1.2h-1.2zM562.7 207.2h1.2v1.2h-1.2zM570.5 207.2h1.2v1.2h-1.2zM578.3 207.2h1.2v1.2h-1.2zM556.8 209.1h1.2v1.2h-1.2zM556.8 211.1h1.2v1.2h-1.2zM562.7 211.1h1.2v1.2h-1.2zM566.6 211.1h1.2v1.2h-1.2zM574.4 211.1h1.2v1.2h-1.2zM554.9 213h1.2v1.2h-1.2zM558.8 213h1.2v1.2h-1.2zM570.5 213h1.2v1.2h-1.2zM574.4 213h1.2v1.2h-1.2zM564.6 215h1.2v1.2h-1.2zM558.8 216.9h1.2v1.2h-1.2zM560.7 216.9h1.2v1.2h-1.2zM568.5 216.9h1.2v1.2h-1.2zM572.4 216.9h1.2v1.2h-1.2zM578.3 216.9h1.2v1.2h-1.2zM580.2 216.9h1.2v1.2h-1.2zM582.2 216.9h1.2v1.2h-1.2zM647.8 243.8h1.4v1.4h-1.4zM649.8 243.8h1.4v1.4h-1.4zM653.8 243.8h1.4v1.4h-1.4zM641.8 245.8h1.4v1.4h-1.4zM643.8 245.8h1.4v1.4h-1.4zM649.8 245.8h1.4v1.4h-1.4zM655.8 245.8h1.4v1.4h-1.4zM641.8 247.8h1.4v1.4h-1.4zM643.8 247.8h1.4v1.4h-1.4zM647.8 247.8h1.4v1.4h-1.4zM657.8 247.8h1.4v1.4h-1.4zM647.8 249.8h1.4v1.4h-1.4zM649.8 249.8h1.4v1.4h-1.4zM651.8 249.8h1.4v1.4h-1.4zM653.8 249.8h1.4v1.4h-1.4zM657.8 249.8h1.4v1.4h-1.4zM641.8 251.8h1.4v1.4h-1.4zM657.8 251.8h1.4v1.4h-1.4zM659.8 251.8h1.4v1.4h-1.4zM641.8 253.8h1.4v1.4h-1.4zM647.8 253.8h1.4v1.4h-1.4zM649.8 253.8h1.4v1.4h-1.4zM641.8 255.8h1.4v1.4h-1.4zM647.8 255.8h1.4v1.4h-1.4zM657.8 255.8h1.4v1.4h-1.4zM659.8 255.8h1.4v1.4h-1.4zM641.8 257.8h1.4v1.4h-1.4zM643.8 257.8h1.4v1.4h-1.4zM645.8 257.8h1.4v1.4h-1.4zM647.8 257.8h1.4v1.4h-1.4zM655.8 257.8h1.4v1.4h-1.4zM659.8 257.8h1.4v1.4h-1.4zM649.8 259.8h1.4v1.4h-1.4zM651.8 259.8h1.4v1.4h-1.4zM657.8 259.8h1.4v1.4h-1.4zM659.8 259.8h1.4v1.4h-1.4zM641.8 261.8h1.4v1.4h-1.4zM651.8 261.8h1.4v1.4h-1.4zM659.8 261.8h1.4v1.4h-1.4z"/>
<path fill="#1515d5" d="M562 195h1.5v1.5h-1.5zM565.6 195h1.5v1.5h-1.5zM567.4 195h1.5v1.5h-1.5zM562 196.8h1.5v1.5h-1.5zM563.8 196.8h1.5v1.5h-1.5zM565.6 196.8h1.5v1.5h-1.5zM567.4 196.8h1.5v1.5h-1.5zM562 198.6h1.5v1.5h-1.5zM563.8 198.6h1.5v1.5h-1.5zM565.6 198.6h1.5v1.5h-1.5zM567.4 198.6h1.5v1.5h-1.5zM562 200.4h1.5v1.5h-1.5zM563.8 200.4h1.5v1.5h-1.5zM565.6 200.4h1.5v1.5h-1.5zM567.4 200.4h1.5v1.5h-1.5zM573 212h1.5v1.5h-1.5zM574.8 212h1.5v1.5h-1.5zM573 213.8h1.5v1.5h-1.5zM574.8 213.8h1.5v1.5h-1.5zM556 205h1.5v1.5h-1.5zM557.8 205h1.5v1.5h-1.5zM556 206.8h1.5v1.5h-1.5zM557.8 206.8h1.5v1.5h-1.5zM571.8 188h1.5v1.5h-1.5zM570 189.8h1.5v1.5h-1.5zM609 199h1.7v1.7h-1.7zM610.9 199h1.7v1.7h-1.7zM612.8 199h1.7v1.7h-1.7zM609 200.9h1.7v1.7h-1.7zM610.9 200.9h1.7v1.7h-1.7zM612.8 200.9h1.7v1.7h-1.7zM620 206h1.7v1.7h-1.7zM621.9 206h1.7v1.7h-1.7zM623.8 206h1.7v1.7h-1.7zM625.7 206h1.7v1.7h-1.7zM620 207.9h1.7v1.7h-1.7zM621.9 207.9h1.7v1.7h-1.7zM625.7 207.9h1.7v1.7h-1.7zM620 209.8h1.7v1.7h-1.7zM621.9 209.8h1.7v1.7h-1.7zM623.8 209.8h1.7v1.7h-1.7zM625.7 209.8h1.7v1.7h-1.7zM620 211.7h1.7v1.7h-1.7zM621.9 211.7h1.7v1.7h-1.7zM623.8 211.7h1.7v1.7h-1.7zM625.7 211.7h1.7v1.7h-1.7zM613 217h1.7v1.7h-1.7zM614.9 217h1.7v1.7h-1.7zM616.8 217h1.7v1.7h-1.7zM613 218.9h1.7v1.7h-1.7zM614.9 218.9h1.7v1.7h-1.7zM616.8 218.9h1.7v1.7h-1.7zM613 220.8h1.7v1.7h-1.7zM614.9 220.8h1.7v1.7h-1.7zM616.8 220.8h1.7v1.7h-1.7zM627 195h1.7v1.7h-1.7zM628.9 195h1.7v1.7h-1.7zM627 196.9h1.7v1.7h-1.7zM628.9 196.9h1.7v1.7h-1.7zM605 211h1.7v1.7h-1.7zM606.9 211h1.7v1.7h-1.7zM605 212.9h1.7v1.7h-1.7zM606.9 212.9h1.7v1.7h-1.7zM624 220h1.7v1.7h-1.7zM625.9 220h1.7v1.7h-1.7zM624 221.9h1.7v1.7h-1.7zM625.9 221.9h1.7v1.7h-1.7zM645 199h1.6v1.6h-1.6zM646.9 199h1.6v1.6h-1.6zM645 200.9h1.6v1.6h-1.6zM646.9 200.9h1.6v1.6h-1.6zM648.8 200.9h1.6v1.6h-1.6zM646.9 208.5h1.6v1.6h-1.6zM648.8 208.5h1.6v1.6h-1.6zM645 210.4h1.6v1.6h-1.6zM646.9 210.4h1.6v1.6h-1.6zM648.8 210.4h1.6v1.6h-1.6zM647 230h1.6v1.6h-1.6zM648.9 230h1.6v1.6h-1.6zM650.8 230h1.6v1.6h-1.6zM647 231.9h1.6v1.6h-1.6zM648.9 231.9h1.6v1.6h-1.6zM650.8 231.9h1.6v1.6h-1.6z"/>
<path fill="#9a9fb0" d="M510 235h10.5v4.5h-10.5zM539 235h4.6v4.5h-4.6zM551 235h4.2v4.5h-4.2zM570 235h11.5v4.5h-11.5zM505.5 245h5.8v7.3h-5.8zM505.5 265h5.8v14h-5.8zM505.5 294h5.8v6.3h-5.8zM583 303h4.2v5h-4.2zM581 310h5.3v5.6h-5.3z"/>
<path fill="#3e4450" d="M600.8 188.3h1.4v1.4h-1.4zM626.8 188.3h1.4v1.4h-1.4zM630.8 188.3h1.4v1.4h-1.4zM610.8 190.3h1.4v1.4h-1.4zM604.8 192.3h1.4v1.4h-1.4zM610.8 194.3h1.4v1.4h-1.4zM616.8 194.3h1.4v1.4h-1.4zM624.8 194.3h1.4v1.4h-1.4zM626.8 194.3h1.4v1.4h-1.4zM630.8 194.3h1.4v1.4h-1.4zM610.8 196.3h1.4v1.4h-1.4zM624.8 196.3h1.4v1.4h-1.4zM604.8 198.3h1.4v1.4h-1.4zM600.8 200.3h1.4v1.4h-1.4zM612.8 200.3h1.4v1.4h-1.4zM624.8 202.3h1.4v1.4h-1.4zM624.8 204.3h1.4v1.4h-1.4zM620.8 208.3h1.4v1.4h-1.4zM610.8 210.3h1.4v1.4h-1.4zM630.8 210.3h1.4v1.4h-1.4zM632.8 210.3h1.4v1.4h-1.4zM604.8 212.3h1.4v1.4h-1.4zM612.8 212.3h1.4v1.4h-1.4zM614.8 212.3h1.4v1.4h-1.4zM620.8 212.3h1.4v1.4h-1.4zM632.8 212.3h1.4v1.4h-1.4zM602.8 214.3h1.4v1.4h-1.4zM620.8 214.3h1.4v1.4h-1.4zM630.8 214.3h1.4v1.4h-1.4zM602.8 216.3h1.4v1.4h-1.4zM606.8 216.3h1.4v1.4h-1.4zM616.8 216.3h1.4v1.4h-1.4zM618.8 216.3h1.4v1.4h-1.4zM622.8 218.3h1.4v1.4h-1.4zM628.8 220.3h1.4v1.4h-1.4zM616.8 222.3h1.4v1.4h-1.4zM630.8 222.3h1.4v1.4h-1.4zM608.8 224.3h1.4v1.4h-1.4zM610.8 224.3h1.4v1.4h-1.4zM618.8 224.3h1.4v1.4h-1.4zM626.8 224.3h1.4v1.4h-1.4zM600.8 226.3h1.4v1.4h-1.4zM610.8 226.3h1.4v1.4h-1.4zM620.8 226.3h1.4v1.4h-1.4zM604.8 228.3h1.4v1.4h-1.4zM606.8 228.3h1.4v1.4h-1.4zM618.8 228.3h1.4v1.4h-1.4zM622.8 228.3h1.4v1.4h-1.4zM626.8 228.3h1.4v1.4h-1.4zM632.8 228.3h1.4v1.4h-1.4z"/>
<path fill="#9a9044" d="M602.8 188.3h1.4v1.4h-1.4zM612.8 188.3h1.4v1.4h-1.4zM622.8 188.3h1.4v1.4h-1.4zM602.8 190.3h1.4v1.4h-1.4zM606.8 190.3h1.4v1.4h-1.4zM614.8 190.3h1.4v1.4h-1.4zM622.8 190.3h1.4v1.4h-1.4zM624.8 190.3h1.4v1.4h-1.4zM626.8 190.3h1.4v1.4h-1.4zM606.8 192.3h1.4v1.4h-1.4zM608.8 192.3h1.4v1.4h-1.4zM610.8 192.3h1.4v1.4h-1.4zM612.8 192.3h1.4v1.4h-1.4zM614.8 192.3h1.4v1.4h-1.4zM620.8 192.3h1.4v1.4h-1.4zM622.8 192.3h1.4v1.4h-1.4zM600.8 194.3h1.4v1.4h-1.4zM602.8 194.3h1.4v1.4h-1.4zM606.8 194.3h1.4v1.4h-1.4zM608.8 194.3h1.4v1.4h-1.4zM614.8 194.3h1.4v1.4h-1.4zM632.8 194.3h1.4v1.4h-1.4zM600.8 196.3h1.4v1.4h-1.4zM602.8 196.3h1.4v1.4h-1.4zM612.8 196.3h1.4v1.4h-1.4zM614.8 196.3h1.4v1.4h-1.4zM622.8 196.3h1.4v1.4h-1.4zM628.8 196.3h1.4v1.4h-1.4zM632.8 196.3h1.4v1.4h-1.4zM610.8 198.3h1.4v1.4h-1.4zM616.8 198.3h1.4v1.4h-1.4zM618.8 198.3h1.4v1.4h-1.4zM620.8 198.3h1.4v1.4h-1.4zM622.8 198.3h1.4v1.4h-1.4zM624.8 198.3h1.4v1.4h-1.4zM628.8 198.3h1.4v1.4h-1.4zM608.8 200.3h1.4v1.4h-1.4zM614.8 200.3h1.4v1.4h-1.4zM618.8 200.3h1.4v1.4h-1.4zM622.8 200.3h1.4v1.4h-1.4zM626.8 200.3h1.4v1.4h-1.4zM628.8 200.3h1.4v1.4h-1.4zM614.8 202.3h1.4v1.4h-1.4zM616.8 202.3h1.4v1.4h-1.4zM626.8 202.3h1.4v1.4h-1.4zM632.8 202.3h1.4v1.4h-1.4zM600.8 204.3h1.4v1.4h-1.4zM606.8 204.3h1.4v1.4h-1.4zM608.8 204.3h1.4v1.4h-1.4zM610.8 204.3h1.4v1.4h-1.4zM612.8 204.3h1.4v1.4h-1.4zM614.8 204.3h1.4v1.4h-1.4zM616.8 204.3h1.4v1.4h-1.4zM618.8 204.3h1.4v1.4h-1.4zM622.8 204.3h1.4v1.4h-1.4zM628.8 204.3h1.4v1.4h-1.4zM600.8 206.3h1.4v1.4h-1.4zM604.8 206.3h1.4v1.4h-1.4zM606.8 206.3h1.4v1.4h-1.4zM628.8 206.3h1.4v1.4h-1.4zM630.8 206.3h1.4v1.4h-1.4zM602.8 208.3h1.4v1.4h-1.4zM606.8 208.3h1.4v1.4h-1.4zM608.8 208.3h1.4v1.4h-1.4zM610.8 208.3h1.4v1.4h-1.4zM612.8 208.3h1.4v1.4h-1.4zM614.8 208.3h1.4v1.4h-1.4zM616.8 208.3h1.4v1.4h-1.4zM622.8 208.3h1.4v1.4h-1.4zM626.8 208.3h1.4v1.4h-1.4zM600.8 210.3h1.4v1.4h-1.4zM602.8 210.3h1.4v1.4h-1.4zM604.8 210.3h1.4v1.4h-1.4zM614.8 210.3h1.4v1.4h-1.4zM616.8 210.3h1.4v1.4h-1.4zM618.8 210.3h1.4v1.4h-1.4zM622.8 210.3h1.4v1.4h-1.4zM624.8 210.3h1.4v1.4h-1.4zM626.8 210.3h1.4v1.4h-1.4zM610.8 212.3h1.4v1.4h-1.4zM618.8 212.3h1.4v1.4h-1.4zM624.8 212.3h1.4v1.4h-1.4zM600.8 214.3h1.4v1.4h-1.4zM612.8 214.3h1.4v1.4h-1.4zM616.8 214.3h1.4v1.4h-1.4zM622.8 214.3h1.4v1.4h-1.4zM624.8 214.3h1.4v1.4h-1.4zM614.8 216.3h1.4v1.4h-1.4zM630.8 216.3h1.4v1.4h-1.4zM600.8 218.3h1.4v1.4h-1.4zM604.8 218.3h1.4v1.4h-1.4zM612.8 218.3h1.4v1.4h-1.4zM616.8 218.3h1.4v1.4h-1.4zM620.8 218.3h1.4v1.4h-1.4zM630.8 218.3h1.4v1.4h-1.4zM632.8 218.3h1.4v1.4h-1.4zM600.8 220.3h1.4v1.4h-1.4zM606.8 220.3h1.4v1.4h-1.4zM616.8 220.3h1.4v1.4h-1.4zM618.8 220.3h1.4v1.4h-1.4zM622.8 220.3h1.4v1.4h-1.4zM632.8 220.3h1.4v1.4h-1.4zM600.8 222.3h1.4v1.4h-1.4zM604.8 222.3h1.4v1.4h-1.4zM606.8 222.3h1.4v1.4h-1.4zM610.8 222.3h1.4v1.4h-1.4zM612.8 222.3h1.4v1.4h-1.4zM614.8 222.3h1.4v1.4h-1.4zM618.8 222.3h1.4v1.4h-1.4zM632.8 222.3h1.4v1.4h-1.4zM602.8 224.3h1.4v1.4h-1.4zM606.8 224.3h1.4v1.4h-1.4zM616.8 224.3h1.4v1.4h-1.4zM622.8 224.3h1.4v1.4h-1.4zM630.8 224.3h1.4v1.4h-1.4zM604.8 226.3h1.4v1.4h-1.4zM616.8 226.3h1.4v1.4h-1.4zM618.8 226.3h1.4v1.4h-1.4zM626.8 226.3h1.4v1.4h-1.4zM628.8 226.3h1.4v1.4h-1.4zM630.8 226.3h1.4v1.4h-1.4zM632.8 226.3h1.4v1.4h-1.4zM602.8 228.3h1.4v1.4h-1.4zM608.8 228.3h1.4v1.4h-1.4zM616.8 228.3h1.4v1.4h-1.4zM620.8 228.3h1.4v1.4h-1.4zM624.8 228.3h1.4v1.4h-1.4zM628.8 228.3h1.4v1.4h-1.4zM630.8 228.3h1.4v1.4h-1.4z"/>
<path fill="#c4b546" d="M608.8 188.3h1.4v1.4h-1.4zM610.8 188.3h1.4v1.4h-1.4zM614.8 188.3h1.4v1.4h-1.4zM618.8 188.3h1.4v1.4h-1.4zM620.8 188.3h1.4v1.4h-1.4zM628.8 188.3h1.4v1.4h-1.4zM632.8 188.3h1.4v1.4h-1.4zM600.8 190.3h1.4v1.4h-1.4zM612.8 190.3h1.4v1.4h-1.4zM618.8 190.3h1.4v1.4h-1.4zM630.8 190.3h1.4v1.4h-1.4zM600.8 192.3h1.4v1.4h-1.4zM616.8 192.3h1.4v1.4h-1.4zM624.8 192.3h1.4v1.4h-1.4zM626.8 192.3h1.4v1.4h-1.4zM630.8 192.3h1.4v1.4h-1.4zM632.8 192.3h1.4v1.4h-1.4zM604.8 194.3h1.4v1.4h-1.4zM612.8 194.3h1.4v1.4h-1.4zM618.8 194.3h1.4v1.4h-1.4zM620.8 194.3h1.4v1.4h-1.4zM622.8 194.3h1.4v1.4h-1.4zM628.8 194.3h1.4v1.4h-1.4zM604.8 196.3h1.4v1.4h-1.4zM608.8 196.3h1.4v1.4h-1.4zM618.8 196.3h1.4v1.4h-1.4zM620.8 196.3h1.4v1.4h-1.4zM630.8 196.3h1.4v1.4h-1.4zM600.8 198.3h1.4v1.4h-1.4zM606.8 198.3h1.4v1.4h-1.4zM626.8 198.3h1.4v1.4h-1.4zM630.8 198.3h1.4v1.4h-1.4zM602.8 200.3h1.4v1.4h-1.4zM606.8 200.3h1.4v1.4h-1.4zM620.8 200.3h1.4v1.4h-1.4zM624.8 200.3h1.4v1.4h-1.4zM630.8 200.3h1.4v1.4h-1.4zM632.8 200.3h1.4v1.4h-1.4zM604.8 202.3h1.4v1.4h-1.4zM610.8 202.3h1.4v1.4h-1.4zM612.8 202.3h1.4v1.4h-1.4zM618.8 202.3h1.4v1.4h-1.4zM622.8 202.3h1.4v1.4h-1.4zM628.8 202.3h1.4v1.4h-1.4zM630.8 202.3h1.4v1.4h-1.4zM602.8 204.3h1.4v1.4h-1.4zM604.8 204.3h1.4v1.4h-1.4zM620.8 204.3h1.4v1.4h-1.4zM626.8 204.3h1.4v1.4h-1.4zM630.8 204.3h1.4v1.4h-1.4zM632.8 204.3h1.4v1.4h-1.4zM608.8 206.3h1.4v1.4h-1.4zM610.8 206.3h1.4v1.4h-1.4zM612.8 206.3h1.4v1.4h-1.4zM614.8 206.3h1.4v1.4h-1.4zM616.8 206.3h1.4v1.4h-1.4zM618.8 206.3h1.4v1.4h-1.4zM620.8 206.3h1.4v1.4h-1.4zM622.8 206.3h1.4v1.4h-1.4zM624.8 206.3h1.4v1.4h-1.4zM626.8 206.3h1.4v1.4h-1.4zM604.8 208.3h1.4v1.4h-1.4zM624.8 208.3h1.4v1.4h-1.4zM628.8 208.3h1.4v1.4h-1.4zM632.8 208.3h1.4v1.4h-1.4zM608.8 210.3h1.4v1.4h-1.4zM612.8 210.3h1.4v1.4h-1.4zM620.8 210.3h1.4v1.4h-1.4zM628.8 210.3h1.4v1.4h-1.4zM600.8 212.3h1.4v1.4h-1.4zM602.8 212.3h1.4v1.4h-1.4zM606.8 212.3h1.4v1.4h-1.4zM616.8 212.3h1.4v1.4h-1.4zM622.8 212.3h1.4v1.4h-1.4zM626.8 212.3h1.4v1.4h-1.4zM628.8 212.3h1.4v1.4h-1.4zM604.8 214.3h1.4v1.4h-1.4zM606.8 214.3h1.4v1.4h-1.4zM608.8 214.3h1.4v1.4h-1.4zM614.8 214.3h1.4v1.4h-1.4zM632.8 214.3h1.4v1.4h-1.4zM604.8 216.3h1.4v1.4h-1.4zM608.8 216.3h1.4v1.4h-1.4zM610.8 216.3h1.4v1.4h-1.4zM612.8 216.3h1.4v1.4h-1.4zM624.8 216.3h1.4v1.4h-1.4zM626.8 216.3h1.4v1.4h-1.4zM628.8 216.3h1.4v1.4h-1.4zM632.8 216.3h1.4v1.4h-1.4zM602.8 218.3h1.4v1.4h-1.4zM606.8 218.3h1.4v1.4h-1.4zM610.8 218.3h1.4v1.4h-1.4zM614.8 218.3h1.4v1.4h-1.4zM618.8 218.3h1.4v1.4h-1.4zM626.8 218.3h1.4v1.4h-1.4zM628.8 218.3h1.4v1.4h-1.4zM602.8 220.3h1.4v1.4h-1.4zM604.8 220.3h1.4v1.4h-1.4zM612.8 220.3h1.4v1.4h-1.4zM614.8 220.3h1.4v1.4h-1.4zM620.8 220.3h1.4v1.4h-1.4zM624.8 220.3h1.4v1.4h-1.4zM626.8 220.3h1.4v1.4h-1.4zM630.8 220.3h1.4v1.4h-1.4zM602.8 222.3h1.4v1.4h-1.4zM608.8 222.3h1.4v1.4h-1.4zM620.8 222.3h1.4v1.4h-1.4zM624.8 222.3h1.4v1.4h-1.4zM626.8 222.3h1.4v1.4h-1.4zM604.8 224.3h1.4v1.4h-1.4zM612.8 224.3h1.4v1.4h-1.4zM614.8 224.3h1.4v1.4h-1.4zM620.8 224.3h1.4v1.4h-1.4zM624.8 224.3h1.4v1.4h-1.4zM628.8 224.3h1.4v1.4h-1.4zM632.8 224.3h1.4v1.4h-1.4zM602.8 226.3h1.4v1.4h-1.4zM606.8 226.3h1.4v1.4h-1.4zM608.8 226.3h1.4v1.4h-1.4zM612.8 226.3h1.4v1.4h-1.4zM614.8 226.3h1.4v1.4h-1.4zM624.8 226.3h1.4v1.4h-1.4zM610.8 228.3h1.4v1.4h-1.4zM612.8 228.3h1.4v1.4h-1.4z"/>
<path fill="#c9bb4a" d="M655.8 243.8h1.4v1.4h-1.4zM659.8 243.8h1.4v1.4h-1.4zM647.8 245.8h1.4v1.4h-1.4zM651.8 245.8h1.4v1.4h-1.4zM653.8 245.8h1.4v1.4h-1.4zM657.8 245.8h1.4v1.4h-1.4zM659.8 245.8h1.4v1.4h-1.4zM649.8 247.8h1.4v1.4h-1.4zM651.8 247.8h1.4v1.4h-1.4zM653.8 247.8h1.4v1.4h-1.4zM659.8 247.8h1.4v1.4h-1.4zM643.8 249.8h1.4v1.4h-1.4zM659.8 249.8h1.4v1.4h-1.4zM643.8 251.8h1.4v1.4h-1.4zM645.8 251.8h1.4v1.4h-1.4zM649.8 251.8h1.4v1.4h-1.4zM651.8 251.8h1.4v1.4h-1.4zM655.8 251.8h1.4v1.4h-1.4zM651.8 253.8h1.4v1.4h-1.4zM653.8 253.8h1.4v1.4h-1.4zM655.8 253.8h1.4v1.4h-1.4zM657.8 253.8h1.4v1.4h-1.4zM659.8 253.8h1.4v1.4h-1.4zM645.8 255.8h1.4v1.4h-1.4zM649.8 255.8h1.4v1.4h-1.4zM651.8 255.8h1.4v1.4h-1.4zM655.8 255.8h1.4v1.4h-1.4zM649.8 257.8h1.4v1.4h-1.4zM653.8 257.8h1.4v1.4h-1.4zM641.8 259.8h1.4v1.4h-1.4zM655.8 259.8h1.4v1.4h-1.4zM643.8 261.8h1.4v1.4h-1.4zM653.8 261.8h1.4v1.4h-1.4zM614.3 270.3h1.4v1.4h-1.4zM616.3 270.3h1.4v1.4h-1.4zM618.3 270.3h1.4v1.4h-1.4zM620.3 270.3h1.4v1.4h-1.4zM628.3 270.3h1.4v1.4h-1.4zM630.3 270.3h1.4v1.4h-1.4zM614.3 272.3h1.4v1.4h-1.4zM618.3 272.3h1.4v1.4h-1.4zM626.3 272.3h1.4v1.4h-1.4zM632.3 272.3h1.4v1.4h-1.4zM634.3 272.3h1.4v1.4h-1.4zM614.3 274.3h1.4v1.4h-1.4zM616.3 274.3h1.4v1.4h-1.4zM620.3 274.3h1.4v1.4h-1.4zM622.3 274.3h1.4v1.4h-1.4zM630.3 274.3h1.4v1.4h-1.4zM632.3 274.3h1.4v1.4h-1.4zM616.3 276.3h1.4v1.4h-1.4zM620.3 276.3h1.4v1.4h-1.4zM622.3 276.3h1.4v1.4h-1.4zM624.3 276.3h1.4v1.4h-1.4zM634.3 276.3h1.4v1.4h-1.4zM616.3 278.3h1.4v1.4h-1.4zM618.3 278.3h1.4v1.4h-1.4zM620.3 278.3h1.4v1.4h-1.4zM622.3 278.3h1.4v1.4h-1.4zM624.3 278.3h1.4v1.4h-1.4zM626.3 278.3h1.4v1.4h-1.4zM630.3 278.3h1.4v1.4h-1.4zM614.3 280.3h1.4v1.4h-1.4zM618.3 280.3h1.4v1.4h-1.4zM622.3 280.3h1.4v1.4h-1.4zM616.3 282.3h1.4v1.4h-1.4zM618.3 284.3h1.4v1.4h-1.4zM622.3 284.3h1.4v1.4h-1.4zM626.3 284.3h1.4v1.4h-1.4zM628.3 284.3h1.4v1.4h-1.4zM614.3 286.3h1.4v1.4h-1.4zM624.3 286.3h1.4v1.4h-1.4zM626.3 286.3h1.4v1.4h-1.4zM628.3 286.3h1.4v1.4h-1.4zM618.3 288.3h1.4v1.4h-1.4zM620.3 288.3h1.4v1.4h-1.4zM628.3 288.3h1.4v1.4h-1.4zM632.3 288.3h1.4v1.4h-1.4z"/>
<path fill="#7f86aa" d="M688.5 216.8h1.5v1.5h-1.5zM692.7 216.8h1.5v1.5h-1.5zM696.9 216.8h1.5v1.5h-1.5zM699 216.8h1.5v1.5h-1.5zM701.1 216.8h1.5v1.5h-1.5zM703.2 216.8h1.5v1.5h-1.5zM707.4 216.8h1.5v1.5h-1.5zM709.5 216.8h1.5v1.5h-1.5zM711.6 216.8h1.5v1.5h-1.5zM717.9 216.8h1.5v1.5h-1.5zM720 216.8h1.5v1.5h-1.5zM722.1 216.8h1.5v1.5h-1.5zM724.2 216.8h1.5v1.5h-1.5zM726.3 216.8h1.5v1.5h-1.5zM732.6 216.8h1.5v1.5h-1.5zM736.8 216.8h1.5v1.5h-1.5zM684.3 218.9h1.5v1.5h-1.5zM686.4 218.9h1.5v1.5h-1.5zM688.5 218.9h1.5v1.5h-1.5zM690.6 218.9h1.5v1.5h-1.5zM692.7 218.9h1.5v1.5h-1.5zM694.8 218.9h1.5v1.5h-1.5zM699 218.9h1.5v1.5h-1.5zM701.1 218.9h1.5v1.5h-1.5zM703.2 218.9h1.5v1.5h-1.5zM705.3 218.9h1.5v1.5h-1.5zM707.4 218.9h1.5v1.5h-1.5zM709.5 218.9h1.5v1.5h-1.5zM713.7 218.9h1.5v1.5h-1.5zM715.8 218.9h1.5v1.5h-1.5zM717.9 218.9h1.5v1.5h-1.5zM724.2 218.9h1.5v1.5h-1.5zM726.3 218.9h1.5v1.5h-1.5zM728.4 218.9h1.5v1.5h-1.5zM730.5 218.9h1.5v1.5h-1.5zM732.6 218.9h1.5v1.5h-1.5zM738.9 218.9h1.5v1.5h-1.5zM688.5 221h1.5v1.5h-1.5zM696.9 221h1.5v1.5h-1.5zM699 221h1.5v1.5h-1.5zM701.1 221h1.5v1.5h-1.5zM703.2 221h1.5v1.5h-1.5zM705.3 221h1.5v1.5h-1.5zM707.4 221h1.5v1.5h-1.5zM709.5 221h1.5v1.5h-1.5zM711.6 221h1.5v1.5h-1.5zM713.7 221h1.5v1.5h-1.5zM717.9 221h1.5v1.5h-1.5zM720 221h1.5v1.5h-1.5zM724.2 221h1.5v1.5h-1.5zM730.5 221h1.5v1.5h-1.5zM732.6 221h1.5v1.5h-1.5zM734.7 221h1.5v1.5h-1.5zM736.8 221h1.5v1.5h-1.5zM738.9 221h1.5v1.5h-1.5zM684.3 223.1h1.5v1.5h-1.5zM686.4 223.1h1.5v1.5h-1.5zM690.6 223.1h1.5v1.5h-1.5zM696.9 223.1h1.5v1.5h-1.5zM699 223.1h1.5v1.5h-1.5zM703.2 223.1h1.5v1.5h-1.5zM707.4 223.1h1.5v1.5h-1.5zM709.5 223.1h1.5v1.5h-1.5zM711.6 223.1h1.5v1.5h-1.5zM713.7 223.1h1.5v1.5h-1.5zM715.8 223.1h1.5v1.5h-1.5zM720 223.1h1.5v1.5h-1.5zM722.1 223.1h1.5v1.5h-1.5zM724.2 223.1h1.5v1.5h-1.5zM728.4 223.1h1.5v1.5h-1.5zM730.5 223.1h1.5v1.5h-1.5zM732.6 223.1h1.5v1.5h-1.5zM734.7 223.1h1.5v1.5h-1.5zM736.8 223.1h1.5v1.5h-1.5zM738.9 223.1h1.5v1.5h-1.5zM684.3 225.2h1.5v1.5h-1.5zM686.4 225.2h1.5v1.5h-1.5zM688.5 225.2h1.5v1.5h-1.5zM690.6 225.2h1.5v1.5h-1.5zM692.7 225.2h1.5v1.5h-1.5zM694.8 225.2h1.5v1.5h-1.5zM696.9 225.2h1.5v1.5h-1.5zM699 225.2h1.5v1.5h-1.5zM701.1 225.2h1.5v1.5h-1.5zM703.2 225.2h1.5v1.5h-1.5zM705.3 225.2h1.5v1.5h-1.5zM707.4 225.2h1.5v1.5h-1.5zM709.5 225.2h1.5v1.5h-1.5zM711.6 225.2h1.5v1.5h-1.5zM713.7 225.2h1.5v1.5h-1.5zM715.8 225.2h1.5v1.5h-1.5zM722.1 225.2h1.5v1.5h-1.5zM726.3 225.2h1.5v1.5h-1.5zM728.4 225.2h1.5v1.5h-1.5zM730.5 225.2h1.5v1.5h-1.5zM732.6 225.2h1.5v1.5h-1.5zM734.7 225.2h1.5v1.5h-1.5zM738.9 225.2h1.5v1.5h-1.5zM684.3 227.3h1.5v1.5h-1.5zM686.4 227.3h1.5v1.5h-1.5zM688.5 227.3h1.5v1.5h-1.5zM690.6 227.3h1.5v1.5h-1.5zM692.7 227.3h1.5v1.5h-1.5zM694.8 227.3h1.5v1.5h-1.5zM696.9 227.3h1.5v1.5h-1.5zM699 227.3h1.5v1.5h-1.5zM701.1 227.3h1.5v1.5h-1.5zM705.3 227.3h1.5v1.5h-1.5zM707.4 227.3h1.5v1.5h-1.5zM709.5 227.3h1.5v1.5h-1.5zM711.6 227.3h1.5v1.5h-1.5zM713.7 227.3h1.5v1.5h-1.5zM715.8 227.3h1.5v1.5h-1.5zM717.9 227.3h1.5v1.5h-1.5zM720 227.3h1.5v1.5h-1.5zM722.1 227.3h1.5v1.5h-1.5zM724.2 227.3h1.5v1.5h-1.5zM726.3 227.3h1.5v1.5h-1.5zM728.4 227.3h1.5v1.5h-1.5zM730.5 227.3h1.5v1.5h-1.5zM732.6 227.3h1.5v1.5h-1.5zM736.8 227.3h1.5v1.5h-1.5zM738.9 227.3h1.5v1.5h-1.5zM684.3 229.4h1.5v1.5h-1.5zM686.4 229.4h1.5v1.5h-1.5zM688.5 229.4h1.5v1.5h-1.5zM690.6 229.4h1.5v1.5h-1.5zM692.7 229.4h1.5v1.5h-1.5zM694.8 229.4h1.5v1.5h-1.5zM699 229.4h1.5v1.5h-1.5zM701.1 229.4h1.5v1.5h-1.5zM703.2 229.4h1.5v1.5h-1.5zM705.3 229.4h1.5v1.5h-1.5zM707.4 229.4h1.5v1.5h-1.5zM713.7 229.4h1.5v1.5h-1.5zM715.8 229.4h1.5v1.5h-1.5zM717.9 229.4h1.5v1.5h-1.5zM722.1 229.4h1.5v1.5h-1.5zM724.2 229.4h1.5v1.5h-1.5zM726.3 229.4h1.5v1.5h-1.5zM728.4 229.4h1.5v1.5h-1.5zM730.5 229.4h1.5v1.5h-1.5zM732.6 229.4h1.5v1.5h-1.5zM734.7 229.4h1.5v1.5h-1.5zM736.8 229.4h1.5v1.5h-1.5zM738.9 229.4h1.5v1.5h-1.5zM684.3 231.5h1.5v1.5h-1.5zM688.5 231.5h1.5v1.5h-1.5zM690.6 231.5h1.5v1.5h-1.5zM692.7 231.5h1.5v1.5h-1.5zM694.8 231.5h1.5v1.5h-1.5zM696.9 231.5h1.5v1.5h-1.5zM701.1 231.5h1.5v1.5h-1.5zM705.3 231.5h1.5v1.5h-1.5zM707.4 231.5h1.5v1.5h-1.5zM709.5 231.5h1.5v1.5h-1.5zM711.6 231.5h1.5v1.5h-1.5zM713.7 231.5h1.5v1.5h-1.5zM715.8 231.5h1.5v1.5h-1.5zM717.9 231.5h1.5v1.5h-1.5zM720 231.5h1.5v1.5h-1.5zM724.2 231.5h1.5v1.5h-1.5zM728.4 231.5h1.5v1.5h-1.5zM730.5 231.5h1.5v1.5h-1.5zM732.6 231.5h1.5v1.5h-1.5zM734.7 231.5h1.5v1.5h-1.5zM736.8 231.5h1.5v1.5h-1.5zM738.9 231.5h1.5v1.5h-1.5zM684.3 233.6h1.5v1.5h-1.5zM688.5 233.6h1.5v1.5h-1.5zM690.6 233.6h1.5v1.5h-1.5zM692.7 233.6h1.5v1.5h-1.5zM694.8 233.6h1.5v1.5h-1.5zM696.9 233.6h1.5v1.5h-1.5zM699 233.6h1.5v1.5h-1.5zM701.1 233.6h1.5v1.5h-1.5zM707.4 233.6h1.5v1.5h-1.5zM715.8 233.6h1.5v1.5h-1.5zM722.1 233.6h1.5v1.5h-1.5zM726.3 233.6h1.5v1.5h-1.5zM728.4 233.6h1.5v1.5h-1.5zM730.5 233.6h1.5v1.5h-1.5zM736.8 233.6h1.5v1.5h-1.5zM738.9 233.6h1.5v1.5h-1.5zM688.5 235.7h1.5v1.5h-1.5zM690.6 235.7h1.5v1.5h-1.5zM694.8 235.7h1.5v1.5h-1.5zM696.9 235.7h1.5v1.5h-1.5zM699 235.7h1.5v1.5h-1.5zM701.1 235.7h1.5v1.5h-1.5zM707.4 235.7h1.5v1.5h-1.5zM709.5 235.7h1.5v1.5h-1.5zM711.6 235.7h1.5v1.5h-1.5zM715.8 235.7h1.5v1.5h-1.5zM717.9 235.7h1.5v1.5h-1.5zM720 235.7h1.5v1.5h-1.5zM724.2 235.7h1.5v1.5h-1.5zM726.3 235.7h1.5v1.5h-1.5zM730.5 235.7h1.5v1.5h-1.5zM732.6 235.7h1.5v1.5h-1.5zM738.9 235.7h1.5v1.5h-1.5zM686.4 237.8h1.5v1.5h-1.5zM688.5 237.8h1.5v1.5h-1.5zM690.6 237.8h1.5v1.5h-1.5zM692.7 237.8h1.5v1.5h-1.5zM696.9 237.8h1.5v1.5h-1.5zM699 237.8h1.5v1.5h-1.5zM701.1 237.8h1.5v1.5h-1.5zM705.3 237.8h1.5v1.5h-1.5zM709.5 237.8h1.5v1.5h-1.5zM711.6 237.8h1.5v1.5h-1.5zM713.7 237.8h1.5v1.5h-1.5zM715.8 237.8h1.5v1.5h-1.5zM717.9 237.8h1.5v1.5h-1.5zM724.2 237.8h1.5v1.5h-1.5zM726.3 237.8h1.5v1.5h-1.5zM728.4 237.8h1.5v1.5h-1.5zM730.5 237.8h1.5v1.5h-1.5zM732.6 237.8h1.5v1.5h-1.5zM734.7 237.8h1.5v1.5h-1.5zM736.8 237.8h1.5v1.5h-1.5zM738.9 237.8h1.5v1.5h-1.5zM684.3 239.9h1.5v1.5h-1.5zM688.5 239.9h1.5v1.5h-1.5zM690.6 239.9h1.5v1.5h-1.5zM692.7 239.9h1.5v1.5h-1.5zM696.9 239.9h1.5v1.5h-1.5zM701.1 239.9h1.5v1.5h-1.5zM703.2 239.9h1.5v1.5h-1.5zM705.3 239.9h1.5v1.5h-1.5zM707.4 239.9h1.5v1.5h-1.5zM709.5 239.9h1.5v1.5h-1.5zM711.6 239.9h1.5v1.5h-1.5zM713.7 239.9h1.5v1.5h-1.5zM715.8 239.9h1.5v1.5h-1.5zM717.9 239.9h1.5v1.5h-1.5zM720 239.9h1.5v1.5h-1.5zM728.4 239.9h1.5v1.5h-1.5zM730.5 239.9h1.5v1.5h-1.5zM732.6 239.9h1.5v1.5h-1.5zM734.7 239.9h1.5v1.5h-1.5zM736.8 239.9h1.5v1.5h-1.5zM738.9 239.9h1.5v1.5h-1.5zM684.3 242h1.5v1.5h-1.5zM686.4 242h1.5v1.5h-1.5zM688.5 242h1.5v1.5h-1.5zM692.7 242h1.5v1.5h-1.5zM694.8 242h1.5v1.5h-1.5zM696.9 242h1.5v1.5h-1.5zM699 242h1.5v1.5h-1.5zM701.1 242h1.5v1.5h-1.5zM703.2 242h1.5v1.5h-1.5zM707.4 242h1.5v1.5h-1.5zM709.5 242h1.5v1.5h-1.5zM711.6 242h1.5v1.5h-1.5zM713.7 242h1.5v1.5h-1.5zM715.8 242h1.5v1.5h-1.5zM717.9 242h1.5v1.5h-1.5zM720 242h1.5v1.5h-1.5zM722.1 242h1.5v1.5h-1.5zM724.2 242h1.5v1.5h-1.5zM726.3 242h1.5v1.5h-1.5zM728.4 242h1.5v1.5h-1.5zM730.5 242h1.5v1.5h-1.5zM732.6 242h1.5v1.5h-1.5zM734.7 242h1.5v1.5h-1.5zM736.8 242h1.5v1.5h-1.5zM684.3 244.1h1.5v1.5h-1.5zM686.4 244.1h1.5v1.5h-1.5zM688.5 244.1h1.5v1.5h-1.5zM690.6 244.1h1.5v1.5h-1.5zM692.7 244.1h1.5v1.5h-1.5zM694.8 244.1h1.5v1.5h-1.5zM696.9 244.1h1.5v1.5h-1.5zM699 244.1h1.5v1.5h-1.5zM703.2 244.1h1.5v1.5h-1.5zM707.4 244.1h1.5v1.5h-1.5zM713.7 244.1h1.5v1.5h-1.5zM715.8 244.1h1.5v1.5h-1.5zM717.9 244.1h1.5v1.5h-1.5zM720 244.1h1.5v1.5h-1.5zM722.1 244.1h1.5v1.5h-1.5zM724.2 244.1h1.5v1.5h-1.5zM726.3 244.1h1.5v1.5h-1.5zM730.5 244.1h1.5v1.5h-1.5zM734.7 244.1h1.5v1.5h-1.5zM736.8 244.1h1.5v1.5h-1.5zM738.9 244.1h1.5v1.5h-1.5zM684.3 246.2h1.5v1.5h-1.5zM688.5 246.2h1.5v1.5h-1.5zM690.6 246.2h1.5v1.5h-1.5zM694.8 246.2h1.5v1.5h-1.5zM696.9 246.2h1.5v1.5h-1.5zM699 246.2h1.5v1.5h-1.5zM701.1 246.2h1.5v1.5h-1.5zM703.2 246.2h1.5v1.5h-1.5zM707.4 246.2h1.5v1.5h-1.5zM709.5 246.2h1.5v1.5h-1.5zM711.6 246.2h1.5v1.5h-1.5zM713.7 246.2h1.5v1.5h-1.5zM720 246.2h1.5v1.5h-1.5zM722.1 246.2h1.5v1.5h-1.5zM724.2 246.2h1.5v1.5h-1.5zM726.3 246.2h1.5v1.5h-1.5zM730.5 246.2h1.5v1.5h-1.5zM732.6 246.2h1.5v1.5h-1.5zM734.7 246.2h1.5v1.5h-1.5zM736.8 246.2h1.5v1.5h-1.5zM738.9 246.2h1.5v1.5h-1.5zM686.4 248.3h1.5v1.5h-1.5zM688.5 248.3h1.5v1.5h-1.5zM690.6 248.3h1.5v1.5h-1.5zM692.7 248.3h1.5v1.5h-1.5zM694.8 248.3h1.5v1.5h-1.5zM696.9 248.3h1.5v1.5h-1.5zM699 248.3h1.5v1.5h-1.5zM701.1 248.3h1.5v1.5h-1.5zM703.2 248.3h1.5v1.5h-1.5zM705.3 248.3h1.5v1.5h-1.5zM707.4 248.3h1.5v1.5h-1.5zM709.5 248.3h1.5v1.5h-1.5zM713.7 248.3h1.5v1.5h-1.5zM715.8 248.3h1.5v1.5h-1.5zM717.9 248.3h1.5v1.5h-1.5zM720 248.3h1.5v1.5h-1.5zM722.1 248.3h1.5v1.5h-1.5zM724.2 248.3h1.5v1.5h-1.5zM726.3 248.3h1.5v1.5h-1.5zM728.4 248.3h1.5v1.5h-1.5zM730.5 248.3h1.5v1.5h-1.5zM734.7 248.3h1.5v1.5h-1.5zM736.8 248.3h1.5v1.5h-1.5zM738.9 248.3h1.5v1.5h-1.5zM684.3 250.4h1.5v1.5h-1.5zM686.4 250.4h1.5v1.5h-1.5zM690.6 250.4h1.5v1.5h-1.5zM694.8 250.4h1.5v1.5h-1.5zM696.9 250.4h1.5v1.5h-1.5zM703.2 250.4h1.5v1.5h-1.5zM713.7 250.4h1.5v1.5h-1.5zM715.8 250.4h1.5v1.5h-1.5zM717.9 250.4h1.5v1.5h-1.5zM720 250.4h1.5v1.5h-1.5zM722.1 250.4h1.5v1.5h-1.5zM726.3 250.4h1.5v1.5h-1.5zM732.6 250.4h1.5v1.5h-1.5zM734.7 250.4h1.5v1.5h-1.5zM736.8 250.4h1.5v1.5h-1.5zM738.9 250.4h1.5v1.5h-1.5z"/>
<path fill="#8d93b4" d="M706 223h1.6v1.6h-1.6zM701.8 225.1h1.6v1.6h-1.6zM703.9 225.1h1.6v1.6h-1.6zM699.7 227.2h1.6v1.6h-1.6zM701.8 229.3h1.6v1.6h-1.6zM697.6 231.4h1.6v1.6h-1.6zM699.7 231.4h1.6v1.6h-1.6zM708.1 231.4h1.6v1.6h-1.6zM708.1 233.5h1.6v1.6h-1.6zM706 235.6h1.6v1.6h-1.6zM697.6 237.7h1.6v1.6h-1.6zM703.9 237.7h1.6v1.6h-1.6zM697.6 239.8h1.6v1.6h-1.6zM706 239.8h1.6v1.6h-1.6zM697.6 241.9h1.6v1.6h-1.6zM699.7 241.9h1.6v1.6h-1.6zM706 241.9h1.6v1.6h-1.6zM699.7 244h1.6v1.6h-1.6zM703.9 244h1.6v1.6h-1.6zM697.6 246.1h1.6v1.6h-1.6zM701.8 246.1h1.6v1.6h-1.6zM706 246.1h1.6v1.6h-1.6zM708.1 246.1h1.6v1.6h-1.6zM697.6 248.2h1.6v1.6h-1.6z"/>
<circle cx="565.0" cy="237.5" r="2.1" fill="#9a9fb0"/>
<circle cx="585.0" cy="240.0" r="2.1" fill="#9a9fb0"/>
<circle cx="506.8" cy="240.0" r="2.1" fill="#9a9fb0"/>
<circle cx="506.8" cy="289.0" r="2.1" fill="#9a9fb0"/>
<circle cx="581.9" cy="247.9" r="2.5" fill="#f3c62a"/>
<circle cx="577.5" cy="250.6" r="2.5" fill="#f3c62a"/>
<circle cx="581.9" cy="253.3" r="2.5" fill="#f3c62a"/>
<circle cx="581.9" cy="258.7" r="2.5" fill="#f3c62a"/>
<circle cx="581.9" cy="264.3" r="2.5" fill="#f3c62a"/>
<circle cx="581.9" cy="269.6" r="2.5" fill="#1515d5"/>
<circle cx="581.9" cy="275.0" r="2.5" fill="#9a9fb0"/>
<circle cx="531.3" cy="284.0" r="2.5" fill="#f3c62a"/>
<circle cx="537.6" cy="286.6" r="2.5" fill="#9cb0a8"/>
<circle cx="544.0" cy="284.0" r="2.5" fill="#f3c62a"/>
<circle cx="550.2" cy="286.0" r="2.5" fill="#1515d5"/>
<circle cx="556.5" cy="284.4" r="2.5" fill="#f3c62a"/>
<circle cx="562.7" cy="286.6" r="2.5" fill="#f3c62a"/>
<rect x="701.5" y="194.8" width="11" height="3.8" rx="1.9" fill="#f0cf32"/><rect x="701.5" y="201.8" width="11" height="3.8" rx="1.9" fill="#f0cf32"/>
<path d="M659.5 278v3.5q0 1.6 2 1.6t2-1.6v-3.5M659.5 285v3.5q0 1.6 2 1.6t2-1.6v-3.5" fill="none" stroke="#f0cf32" stroke-width="1.2"/>
<circle cx="750.1" cy="188.8" r="0.8" fill="#a8b8cc"/>
<circle cx="749.6" cy="191.5" r="0.8" fill="#a8b8cc"/>
<circle cx="748.0" cy="193.8" r="0.8" fill="#a8b8cc"/>
<circle cx="745.7" cy="195.4" r="0.8" fill="#a8b8cc"/>
<circle cx="743.0" cy="195.9" r="0.8" fill="#a8b8cc"/>
<circle cx="740.3" cy="195.4" r="0.8" fill="#a8b8cc"/>
<circle cx="738.0" cy="193.8" r="0.8" fill="#a8b8cc"/>
<circle cx="736.4" cy="191.5" r="0.8" fill="#a8b8cc"/>
<circle cx="735.9" cy="188.8" r="0.8" fill="#a8b8cc"/>
<circle cx="736.4" cy="186.1" r="0.8" fill="#a8b8cc"/>
<circle cx="738.0" cy="183.8" r="0.8" fill="#a8b8cc"/>
<circle cx="740.3" cy="182.2" r="0.8" fill="#a8b8cc"/>
<circle cx="743.0" cy="181.7" r="0.8" fill="#a8b8cc"/>
<circle cx="745.7" cy="182.2" r="0.8" fill="#a8b8cc"/>
<circle cx="748.0" cy="183.8" r="0.8" fill="#a8b8cc"/>
<circle cx="749.6" cy="186.1" r="0.8" fill="#a8b8cc"/>
<circle cx="743.0" cy="188.8" r="5.6" fill="#12a3a3"/>
<circle cx="749.5" cy="299.9" r="0.8" fill="#a8b8cc"/>
<circle cx="749.0" cy="302.6" r="0.8" fill="#a8b8cc"/>
<circle cx="747.4" cy="304.9" r="0.8" fill="#a8b8cc"/>
<circle cx="745.1" cy="306.5" r="0.8" fill="#a8b8cc"/>
<circle cx="742.4" cy="307.0" r="0.8" fill="#a8b8cc"/>
<circle cx="739.7" cy="306.5" r="0.8" fill="#a8b8cc"/>
<circle cx="737.4" cy="304.9" r="0.8" fill="#a8b8cc"/>
<circle cx="735.8" cy="302.6" r="0.8" fill="#a8b8cc"/>
<circle cx="735.3" cy="299.9" r="0.8" fill="#a8b8cc"/>
<circle cx="735.8" cy="297.2" r="0.8" fill="#a8b8cc"/>
<circle cx="737.4" cy="294.9" r="0.8" fill="#a8b8cc"/>
<circle cx="739.7" cy="293.3" r="0.8" fill="#a8b8cc"/>
<circle cx="742.4" cy="292.8" r="0.8" fill="#a8b8cc"/>
<circle cx="745.1" cy="293.3" r="0.8" fill="#a8b8cc"/>
<circle cx="747.4" cy="294.9" r="0.8" fill="#a8b8cc"/>
<circle cx="749.0" cy="297.2" r="0.8" fill="#a8b8cc"/>
<circle cx="742.4" cy="299.9" r="5.6" fill="#12a3a3"/>
<circle cx="621.5" cy="305.8" r="0.8" fill="#a8b8cc"/>
<circle cx="620.9" cy="308.6" r="0.8" fill="#a8b8cc"/>
<circle cx="619.4" cy="311.0" r="0.8" fill="#a8b8cc"/>
<circle cx="617.0" cy="312.5" r="0.8" fill="#a8b8cc"/>
<circle cx="614.2" cy="313.1" r="0.8" fill="#a8b8cc"/>
<circle cx="611.4" cy="312.5" r="0.8" fill="#a8b8cc"/>
<circle cx="609.0" cy="311.0" r="0.8" fill="#a8b8cc"/>
<circle cx="607.5" cy="308.6" r="0.8" fill="#a8b8cc"/>
<circle cx="606.9" cy="305.8" r="0.8" fill="#a8b8cc"/>
<circle cx="607.5" cy="303.0" r="0.8" fill="#a8b8cc"/>
<circle cx="609.0" cy="300.6" r="0.8" fill="#a8b8cc"/>
<circle cx="611.4" cy="299.1" r="0.8" fill="#a8b8cc"/>
<circle cx="614.2" cy="298.5" r="0.8" fill="#a8b8cc"/>
<circle cx="617.0" cy="299.1" r="0.8" fill="#a8b8cc"/>
<circle cx="619.4" cy="300.6" r="0.8" fill="#a8b8cc"/>
<circle cx="620.9" cy="303.0" r="0.8" fill="#a8b8cc"/>
<circle cx="614.2" cy="305.8" r="5.8" fill="#12a3a3"/>
<path d="M228.8 329.2 L245.8 329.2 L248.4 335.0 L268.7 335.0 L271.3 332.2 L314.0 332.2 L314.0 323.0 L390.1 323.0 L390.1 406.5 L471.6 406.5 L471.6 427.0 L474.0 427.0 L474.0 447.0 L470.0 447.0 L470.0 462.4 L312.5 462.4 L312.5 460.2 L281.0 460.2 L281.0 457.8 L228.8 457.8Z" fill="#2b3448" stroke="#2b3448" stroke-width="2" stroke-linejoin="round"/>
<rect x="289" y="339" width="54.5" height="75" fill="none" stroke="#56607a" stroke-width="0.9"/>
<rect x="357.0" y="345.7" width="14.0" height="13.3" fill="#2f384b"/>
<path fill="#f0cf32" d="M229 348.4h1.4v2.4h-1.4zM229 351.4h1.4v3.7h-1.4zM229 368h1.4v1.4h-1.4zM229 372.8h1.4v2h-1.4zM229 375.3h1.4v1.6h-1.4zM229 378.1h1.4v3.9h-1.4zM229 383h1.4v1.3h-1.4zM232 352.4h.9v2.1h-.9zM232 355.1h.9v1.3h-.9zM232 357.5h.9v3.7h-.9zM232 364.7h.9v1.9h-.9zM232 370.4h.9v2.2h-.9zM232 376h.9v2.8h-.9zM232 383.4h.9v1.8h-.9zM232 386.2h.9v3.6h-.9zM232 390.9h.9v2.1h-.9zM232 393.9h.9v3.4h-.9zM232 398.2h.9v1.8h-.9zM236 356.5h.8v3.2h-.8zM236 371.2h.8v3.9h-.8zM236 375.7h.8v2.7h-.8zM236 383.2h.8v2.9h-.8zM236 386.7h.8v2.9h-.8zM240.6 346h1.4v3.6h-1.4zM240.6 350.5h1.4v2.7h-1.4zM240.6 354.3h1.4v2.9h-1.4zM240.6 373.1h1.4v1.8h-1.4zM240.6 375.9h1.4v3.4h-1.4zM240.6 380.1h1.4v2.5h-1.4zM240.6 395.3h1.4v3.3h-1.4zM243.3 350.7h1.6v2.5h-1.6zM243.3 353.9h1.6v3.3h-1.6zM243.3 361.6h1.6v3.8h-1.6zM243.3 372.3h1.6v1.6h-1.6zM243.3 374.8h1.6v2.5h-1.6zM243.3 380.8h1.6v2.3h-1.6zM243.3 389.8h1.6v4.1h-1.6zM248.5 344h1.8v2.1h-1.8zM248.5 355.9h1.8v3h-1.8zM248.5 359.8h1.8v4.1h-1.8zM248.5 373.6h1.8v2.6h-1.8zM248.5 380.3h1.8v1.9h-1.8zM248.5 383h1.8v1.5h-1.8zM248.5 391.6h1.8v1.5h-1.8zM248.5 398h1.8v2.8h-1.8zM251.8 344h1v1.5h-1zM251.8 346.5h1v2.4h-1zM251.8 354.2h1v2.1h-1zM251.8 359.6h1v3.5h-1zM251.8 371.5h1v2.6h-1zM251.8 383.4h1v2.4h-1zM251.8 390.2h1v3.9h-1zM251.8 397.8h1v3.4h-1zM257.5 343h.8v3h-.8zM257.5 363.4h.8v1.9h-.8zM257.5 366.5h.8v3.5h-.8zM257.5 376.5h.8v3.9h-.8zM257.5 381.6h.8v3.3h-.8zM257.5 385.4h.8v1.7h-.8zM257.5 392.6h.8v2.2h-.8zM259.7 343h1.6v2h-1.6zM259.7 345.8h1.6v3.6h-1.6zM259.7 350h1.6v1.5h-1.6zM259.7 352h1.6v1.6h-1.6zM259.7 354.6h1.6v3.7h-1.6zM259.7 359h1.6v1.6h-1.6zM259.7 367.9h1.6v1.7h-1.6zM259.7 374.2h1.6v1.6h-1.6zM259.7 376.6h1.6v3.8h-1.6zM259.7 386.6h1.6v2.2h-1.6zM259.7 393.2h1.6v1.2h-1.6zM259.7 395.1h1.6v2.7h-1.6zM259.7 402h1.6v1h-1.6zM262.5 350.9h1.5v3.7h-1.5zM262.5 369.8h1.5v2.1h-1.5zM262.5 373h1.5v3.3h-1.5zM262.5 377.3h1.5v2.6h-1.5zM262.5 380.5h1.5v1.9h-1.5zM262.5 383.2h1.5v2.8h-1.5zM262.5 387h1.5v2.1h-1.5zM262.5 390.3h1.5v2h-1.5zM262.5 396.9h1.5v3.4h-1.5zM262.5 405.1h1.5v3.4h-1.5zM262.5 409h1.5v3h-1.5zM262.5 413.1h1.5v2.2h-1.5zM265.2 343h1.6v2.4h-1.6zM265.2 350.8h1.6v1.4h-1.6zM265.2 353.1h1.6v3.6h-1.6zM265.2 357.3h1.6v2.5h-1.6zM265.2 366.9h1.6v2.6h-1.6zM265.2 379.1h1.6v2.8h-1.6zM265.2 383h1.6v4h-1.6zM265.2 388.1h1.6v4.1h-1.6zM265.2 393.4h1.6v1.5h-1.6zM265.2 398.9h1.6v2.4h-1.6zM265.2 401.8h1.6v3h-1.6zM265.2 409.9h1.6v2.6h-1.6zM268 343h1.3v3.2h-1.3zM268 346.7h1.3v2h-1.3zM268 349.6h1.3v2.4h-1.3zM268 353.2h1.3v2.1h-1.3zM268 356.4h1.3v3.9h-1.3zM268 368.3h1.3v1.8h-1.3zM268 387.2h1.3v3.4h-1.3zM268 391.4h1.3v2.9h-1.3zM268 394.9h1.3v2.2h-1.3zM268 398.1h1.3v3.9h-1.3zM268 405.3h1.3v2.3h-1.3zM268 411.6h1.3v1.7h-1.3zM268 414.1h1.3v1.9h-1.3zM270.3 343h.8v1.4h-.8zM270.3 356.2h.8v2.3h-.8zM270.3 359.5h.8v1.8h-.8zM270.3 362h.8v3h-.8zM270.3 365.7h.8v3.6h-.8zM270.3 372.3h.8v3.2h-.8zM270.3 382.5h.8v3.1h-.8zM270.3 391.4h.8v1.5h-.8zM270.3 393.8h.8v2.9h-.8zM270.3 397.6h.8v2.3h-.8zM270.3 400.8h.8v1.4h-.8zM270.3 403.4h.8v4h-.8zM270.3 408.5h.8v4.1h-.8zM270.3 413.1h.8v1.5h-.8zM273.5 350h1v3.4h-1zM273.5 356.8h1v3.2h-1zM273.5 360.7h1v3.7h-1zM273.5 365h1v2.9h-1zM273.5 377.1h1v2.6h-1zM273.5 380.4h1v3.7h-1zM273.5 384.8h1v3.7h-1zM273.5 389.6h1v3.3h-1zM273.5 396.9h1v3.3h-1zM275.9 354.3h1v3.1h-1zM275.9 370h1v4h-1zM275.9 379.4h1v1.8h-1zM275.9 396.4h1v1.8h-1zM279.5 345h1.9v2.4h-1.9zM279.5 348.3h1.9v1.6h-1.9zM279.5 350.7h1.9v3h-1.9zM279.5 354.3h1.9v2.9h-1.9zM279.5 358h1.9v3.1h-1.9zM279.5 365.9h1.9v2.9h-1.9zM279.5 371.9h1.9v2.1h-1.9zM279.5 383h1.9v3.1h-1.9zM279.5 390.3h1.9v3.7h-1.9zM279.5 394.9h1.9v3.2h-1.9zM279.5 403.6h1.9v3.3h-1.9zM279.5 407.7h1.9v2.2h-1.9zM279.5 413.9h1.9v2.1h-1.9zM282.4 345h1.9v3.4h-1.9zM282.4 348.9h1.9v1.5h-1.9zM282.4 354.6h1.9v3.4h-1.9zM282.4 358.6h1.9v1.3h-1.9zM282.4 361.1h1.9v1.8h-1.9zM282.4 367.9h1.9v3.2h-1.9zM282.4 376.1h1.9v3.9h-1.9zM282.4 385.7h1.9v2.8h-1.9zM282.4 389.3h1.9v1.3h-1.9zM282.4 391.3h1.9v1.3h-1.9zM282.4 396.2h1.9v2.4h-1.9zM282.4 402.4h1.9v2.6h-1.9zM282.4 405.5h1.9v2.9h-1.9zM282.4 413.5h1.9v1.9h-1.9zM287 353.6h1.7v3.6h-1.7zM287 358.4h1.7v2.1h-1.7zM287 361.1h1.7v2.8h-1.7zM287 368.7h1.7v3h-1.7zM287 372.6h1.7v2.3h-1.7zM287 376.1h1.7v3.8h-1.7zM287 388.2h1.7v3.9h-1.7zM287 396.7h1.7v4h-1.7zM240.7 345.9h2.4v1h-2.4zM262.8 350.1h2.2v.8h-2.2zM253 351.6h1.7v.8h-1.7zM256.1 351.6h1.8v.8h-1.8zM231.4 353.5h1.5v.8h-1.5zM257.8 353.5h2v.8h-2zM267.6 353.5h1.3v.8h-1.3zM244.6 358.6h2v1.2h-2zM247.5 358.6h.9v1.2h-.9zM261.7 358.6h2.7v1.2h-2.7zM280.7 358.6h1.6v1.2h-1.6zM283.5 358.6h2.4v1.2h-2.4zM255.5 360.8h1.3v.8h-1.3zM265.8 360.8h2.9v.8h-2.9zM247.7 364.1h2.1v.9h-2.1zM266.3 364.1h2.2v.9h-2.2zM277.4 364.1h2.1v.9h-2.1zM280.5 364.1h2.6v.9h-2.6zM280.1 368h2.5v1.2h-2.5zM246.1 370.6h2.8v.8h-2.8zM249.7 370.6h2.1v.8h-2.1zM281.1 370.6h1.1v.8h-1.1zM266.3 372.3h2.2v.8h-2.2zM234.6 374.5h2.1v1.2h-2.1zM259.7 374.5h1.2v1.2h-1.2zM238.8 376.7h1.4v.8h-1.4zM254.5 376.7h2v.8h-2zM249.7 378.2h1v.8h-1zM249.4 380.2h2v.8h-2zM257.2 383.5h1.7v.8h-1.7zM283.6 383.5h2.8v.8h-2.8zM256.7 385.4h1.3v.8h-1.3zM271.4 385.4h2.8v.8h-2.8zM252.9 387h1.4v1h-1.4zM278.6 392.4h1.2v.8h-1.2zM235.8 395.2h1.7v1h-1.7zM268.3 395.2h2.8v1h-2.8zM269.8 397.1h2.7v.8h-2.7zM244.3 401.7h2.9v.8h-2.9zM285.9 404.9h1.4v.9h-1.4zM248.5 407.2h1.3v.8h-1.3zM276.9 407.2h2.8v.8h-2.8zM247.8 409.5h2.5v.9h-2.5zM272.4 409.5h1.6v.9h-1.6zM256 411.7h.9v.8h-.9zM229.5 403h2.1v3.5h-2.1zM229.5 411.1h2.1v2.7h-2.1zM229.5 429.3h2.1v2.6h-2.1zM233.1 407.2h1.2v3.2h-1.2zM233.1 414.2h1.2v3.3h-1.2zM233.1 418.4h1.2v2.9h-1.2zM233.1 422.4h1.2v3.8h-1.2zM233.1 439.3h1.2v3h-1.2zM235.2 403h.8v2h-.8zM235.2 414.1h.8v1.8h-.8zM235.2 422h.8v2.3h-.8zM235.2 425h.8v3.1h-.8zM235.2 437.1h.8v2.5h-.8zM235.2 440.4h.8v3.4h-.8zM235.2 444.9h.8v1.1h-.8zM239.6 407h2.4v32h-2.4zM244.2 410h2.4v22h-2.4zM230.5 408h2v30h-2zM248.9 404h1.5v1.5h-1.5zM248.9 411.7h1.5v2.7h-1.5zM248.9 415.1h1.5v.9h-1.5zM251.7 404h.8v3.2h-.8zM253.7 413.9h1.8v1.5h-1.8zM256.7 404h1.5v1.9h-1.5zM256.7 410.7h1.5v2.5h-1.5zM259.4 412.7h1v3h-1zM292.8 338h1v1h-1zM296.4 338h1v1h-1zM298.2 338h1v1h-1zM307.2 338h1v1h-1zM310.8 338h1v1h-1zM312.6 338h1v1h-1zM316.2 338h1v1h-1zM318 338h1v1h-1zM323.4 338h1v1h-1zM336 338h1v1h-1zM339.6 338h1v1h-1zM341.4 338h1v1h-1zM288.3 342.9h1v1h-1zM288.3 348.6h1v1h-1zM288.3 361.9h1v1h-1zM288.3 373.3h1v1h-1zM288.3 375.2h1v1h-1zM288.3 379h1v1h-1zM288.3 382.8h1v1h-1zM288.3 390.4h1v1h-1zM288.3 405.6h1v1h-1zM288.3 409.4h1v1h-1zM343.3 361.9h1v1h-1zM343.3 365.7h1v1h-1zM343.3 369.5h1v1h-1zM343.3 380.9h1v1h-1zM343.3 392.3h1v1h-1zM343.3 396.1h1v1h-1zM343.3 411.3h1v1h-1zM371.3 340h1v2.4h-1zM371.3 343.5h1v1.5h-1zM371.3 346.2h1v1.9h-1zM371.3 348.8h1v2h-1zM371.3 351.9h1v1.9h-1zM371.3 357.5h1v3.4h-1zM371.3 361.8h1v1.8h-1zM371.3 364.6h1v2.4h-1zM371.3 368h1v3h-1zM371.3 371.6h1v3h-1zM371.3 375.4h1v3.3h-1zM373.3 340h1v1.2h-1zM373.3 342.3h1v2.5h-1zM373.3 345.5h1v2.5h-1zM373.3 349.1h1v2.2h-1zM373.3 351.8h1v2.1h-1zM373.3 355h1v2.5h-1zM373.3 362h1v2.8h-1zM373.3 365.9h1v1.8h-1zM373.3 368.6h1v1.5h-1zM373.3 370.6h1v3.4h-1zM373.3 377.6h1v2.4h-1zM349.5 328h1.2v2.8h-1.2zM349.5 336.3h1.2v1h-1.2zM349.5 338h1.2v1.5h-1.2zM349.5 340.4h1.2v2.2h-1.2zM349.5 349h1v2.5h-1zM349.5 361.5h1v1.7h-1zM349.5 370.5h1v1.9h-1zM349.5 381.1h1v1.3h-1zM349.5 383.2h1v1.1h-1zM349.5 387.9h1v3h-1zM349.5 404.9h1v1.6h-1zM351.7 350.8h1.6v2.7h-1.6zM351.7 354.7h1.6v2.3h-1.6zM351.7 371.8h1.6v3.1h-1.6zM351.7 375.7h1.6v1.9h-1.6zM351.7 387.5h1.6v1.2h-1.6zM351.7 393.8h1.6v1.8h-1.6zM351.7 396.5h1.6v1.9h-1.6zM351.7 404.7h1.6v2.1h-1.6zM359.3 346h1.1v1.1h-1.1zM361.3 348h1.1v1.1h-1.1zM363.3 348h1.1v1.1h-1.1zM365.3 348h1.1v1.1h-1.1zM367.3 348h1.1v1.1h-1.1zM365.3 350h1.1v1.1h-1.1zM369.3 350h1.1v1.1h-1.1zM357.3 352h1.1v1.1h-1.1zM361.3 352h1.1v1.1h-1.1zM359.3 356h1.1v1.1h-1.1zM362.4 341h2.7v.8h-2.7zM358.5 369.4h1.7v2.8h-1.7zM358.5 377.6h1.7v3.1h-1.7zM358.5 381.7h1.7v2.6h-1.7zM358.5 384.9h1.7v3.5h-1.7zM358.5 393.4h1.7v3.8h-1.7zM358.5 398.2h1.7v2h-1.7zM358.5 405.3h1.7v2.2h-1.7zM361.4 366h1.7v3.3h-1.7zM361.4 381.8h1.7v1.7h-1.7zM361.4 384.4h1.7v2.7h-1.7zM361.4 387.7h1.7v3.1h-1.7zM361.4 391.9h1.7v3h-1.7zM361.4 396.1h1.7v1.6h-1.7zM361.4 398.3h1.7v2.1h-1.7zM361.4 404.6h1.7v3h-1.7zM366 380.4h1.8v3.7h-1.8zM366 387.1h1.8v3.1h-1.8zM366 390.7h1.8v3.4h-1.8zM366 395.2h1.8v1.5h-1.8zM366 397.2h1.8v3h-1.8zM366 404.9h1.8v3h-1.8zM366 408.8h1.8v1.2h-1.8zM369.1 374.8h1.5v3h-1.5zM369.1 381.5h1.5v2.1h-1.5zM369.1 388.8h1.5v2.2h-1.5zM369.1 400.7h1.5v1.9h-1.5zM369.1 403.3h1.5v3.6h-1.5zM251.3 421h1.7v1.4h-1.7zM253.7 421h2.4v1.4h-2.4zM256.8 421h3.9v1.4h-3.9zM270.7 421h2.5v1.4h-2.5zM273.9 421h1.1v1.4h-1.1zM248.5 431h4.5v.8h-4.5zM256.9 431h3.9v.8h-3.9zM261.3 431h1.1v.8h-1.1zM262.8 431h4.9v.8h-4.9zM268.3 431h3.2v.8h-3.2zM271.9 431h3.1v.8h-3.1zM248.5 433h1.4v.8h-1.4zM250.6 433h2.2v.8h-2.2zM258.2 433h1.6v.8h-1.6zM265.9 433h2.5v.8h-2.5zM271.5 433h2.4v.8h-2.4zM248.5 436h1.8v1.2h-1.8zM250.9 436h2v1.2h-2zM253.4 436h1.7v1.2h-1.7zM255.5 436h2.8v1.2h-2.8zM258.9 436h2.2v1.2h-2.2zM264.8 436h3.2v1.2h-3.2zM268.5 436h1.3v1.2h-1.3zM273.8 436h1.2v1.2h-1.2zM254.8 440.5h1.9v1.6h-1.9zM257.2 440.5h4.2v1.6h-4.2zM264.6 440.5h5v1.6h-5zM248.5 449.5h3.1v2.3h-3.1zM252.1 449.5h5.5v2.3h-5.5zM258.3 449.5h5.2v2.3h-5.2zM264.2 449.5h1.8v2.3h-1.8zM266.4 449.5h6.1v2.3h-6.1zM248.5 454h3.4v1h-3.4zM256.8 454h1.8v1h-1.8zM259.1 454h3.5v1h-3.5zM266.4 454h1.2v1h-1.2zM268 454h1.2v1h-1.2zM269.8 454h3.4v1h-3.4zM273.8 454h1v1h-1zM283.9 420.5h4.2v.8h-4.2zM293.1 420.5h5.2v.8h-5.2zM298.9 420.5h4.2v.8h-4.2zM303.6 420.5h2.2v.8h-2.2zM280.5 421.9h1.6v1h-1.6zM282.6 421.9h5.7v1h-5.7zM292.7 421.9h3.8v1h-3.8zM297 421.9h4.8v1h-4.8zM280.5 425h2v.8h-2zM286.4 425h3.1v.8h-3.1zM290 425h3.3v.8h-3.3zM296.7 425h2v.8h-2zM299.4 425h2.1v.8h-2.1zM280.5 430.5h4v2.3h-4zM287.1 430.5h2.2v2.3h-2.2zM289.7 430.5h4.3v2.3h-4.3zM296.8 430.5h4.2v2.3h-4.2zM280.5 440.8h4.8v2.4h-4.8zM285.8 440.8h1.4v2.4h-1.4zM287.7 440.8h3.8v2.4h-3.8zM291.9 440.8h1.5v2.4h-1.5zM299 440.8h2.9v2.4h-2.9zM280.5 445.5h1.1v.8h-1.1zM282.1 445.5h3.6v.8h-3.6zM289.4 445.5h1.3v.8h-1.3zM291.2 445.5h1.5v.8h-1.5zM293.2 445.5h2.8v.8h-2.8zM296.5 445.5h2.8v.8h-2.8zM280.5 450.5h5.2v.8h-5.2zM286.2 450.5h4.8v.8h-4.8zM291.3 450.5h6.1v.8h-6.1zM297.9 450.5h1.7v.8h-1.7zM300.1 450.5h5.1v.8h-5.1zM293.5 452.4h5.8v.8h-5.8zM299.7 452.4h1.7v.8h-1.7zM301.9 452.4h1.7v.8h-1.7zM304 452.4h2v.8h-2zM283.1 455h2.8v.8h-2.8zM286.5 455h3v.8h-3zM296.9 455h2.5v.8h-2.5zM299.8 455h2.6v.8h-2.6zM302.8 455h1.3v.8h-1.3zM277.4 420h2.5v10h-2.5zM277.4 442h2.5v10h-2.5zM306.5 441h2.5v11h-2.5zM245.8 421h2.2v7h-2.2zM245.8 441h2.2v7h-2.2zM294.6 414.3h3.5v1.1h-3.5zM302.9 414.3h1.7v1.1h-1.7zM312.4 414.3h2v1.1h-2zM328.2 416h2.1v2.1h-2.1zM334.6 416h2.1v2.1h-2.1zM337.8 416h2.1v2.1h-2.1zM341 416h2.1v2.1h-2.1zM344.2 416h2.1v2.1h-2.1zM353.8 416h2.1v2.1h-2.1zM366.6 416h2.1v2.1h-2.1zM325 419.2h2.1v2.1h-2.1zM331.4 419.2h2.1v2.1h-2.1zM353.8 419.2h2.1v2.1h-2.1zM357 419.2h2.1v2.1h-2.1zM360.2 419.2h2.1v2.1h-2.1zM366.6 419.2h2.1v2.1h-2.1zM325 422.4h2.1v2.1h-2.1zM337.8 422.4h2.1v2.1h-2.1zM353.8 422.4h2.1v2.1h-2.1zM360.2 422.4h2.1v2.1h-2.1zM373 422.4h2.1v2.1h-2.1zM341 425.6h2.1v2.1h-2.1zM347.4 425.6h2.1v2.1h-2.1zM360.2 425.6h2.1v2.1h-2.1zM363.4 425.6h2.1v2.1h-2.1zM366.6 425.6h2.1v2.1h-2.1zM369.8 425.6h2.1v2.1h-2.1zM328.2 428.8h2.1v2.1h-2.1zM357 428.8h2.1v2.1h-2.1zM360.2 428.8h2.1v2.1h-2.1zM363.4 428.8h2.1v2.1h-2.1zM369.8 428.8h2.1v2.1h-2.1zM331.4 432h2.1v2.1h-2.1zM334.6 432h2.1v2.1h-2.1zM347.4 432h2.1v2.1h-2.1zM360.2 432h2.1v2.1h-2.1zM363.4 432h2.1v2.1h-2.1zM328.2 435.2h2.1v2.1h-2.1zM334.6 435.2h2.1v2.1h-2.1zM337.8 435.2h2.1v2.1h-2.1zM344.2 435.2h2.1v2.1h-2.1zM350.6 435.2h2.1v2.1h-2.1zM357 435.2h2.1v2.1h-2.1zM325 438.4h2.1v2.1h-2.1zM334.6 438.4h2.1v2.1h-2.1zM337.8 438.4h2.1v2.1h-2.1zM341 438.4h2.1v2.1h-2.1zM344.2 438.4h2.1v2.1h-2.1zM347.4 438.4h2.1v2.1h-2.1zM353.8 438.4h2.1v2.1h-2.1zM363.4 438.4h2.1v2.1h-2.1zM366.6 438.4h2.1v2.1h-2.1zM373 438.4h2.1v2.1h-2.1zM359 410.5h7v2.2h-7zM438 409h1.4v1.4h-1.4zM450.9 409h2.4v1.4h-2.4zM454.3 409h3.4v1.4h-3.4zM459 409h3v1.4h-3zM438 413.7h2.1v1.3h-2.1zM455.8 419.4h1.7v1h-1.7zM438 421.7h2.2v1.5h-2.2zM457.2 426.7h2v.8h-2zM438 428.6h3.2v.8h-3.2zM446.4 428.6h1.4v.8h-1.4zM454 428.6h3.6v.8h-3.6zM460.7 430.5h1.3v.8h-1.3zM454.2 432.4h1.7v.8h-1.7zM450.4 434.5h2.5v.8h-2.5zM442 436.5h2.1v1.3h-2.1zM440.9 439.2h3.4v.8h-3.4zM447.4 441.1h1.5v1h-1.5zM441.7 443.4h1.1v.9h-1.1zM449.3 443.4h2.6v.9h-2.6zM460 443.4h2v.9h-2zM458.5 430h2.6v9h-2.6zM458 431.8h1.7v.8h-1.7zM458 442.4h2.5v.8h-2.5zM469.2 442.4h.8v.8h-.8zM457 448h1.4v.8h-1.4zM466.1 448h1.9v.8h-1.9zM468 453.6h1v.8h-1zM457 457.5h1.2v.8h-1.2zM459.4 457.5h1.8v.8h-1.8zM462.4 457.5h2.2v.8h-2.2z"/>
<path fill="#bfae4a" d="M229 370.4h1.4v1.8h-1.4zM232 346h.9v1.9h-.9zM236 364.5h.8v3.9h-.8zM243.3 357.9h1.6v3.1h-1.6zM243.3 369.4h1.6v2.2h-1.6zM243.3 378.2h1.6v1.5h-1.6zM251.8 386.6h1v2.5h-1zM251.8 394.7h1v2.3h-1zM257.5 355.1h.8v2.4h-.8zM257.5 395.9h.8v4h-.8zM257.5 400.8h.8v1.2h-.8zM259.7 363.8h1.6v3.3h-1.6zM262.5 346.6h1.5v3.7h-1.5zM262.5 393.1h1.5v2.9h-1.5zM262.5 401.3h1.5v2.7h-1.5zM265.2 346.5h1.6v3.6h-1.6zM265.2 364.2h1.6v1.7h-1.6zM265.2 370.3h1.6v3.6h-1.6zM265.2 374.9h1.6v3.3h-1.6zM268 361.1h1.3v2.5h-1.3zM268 374.5h1.3v2.6h-1.3zM270.3 350h.8v1.5h-.8zM275.9 360.9h1v1.4h-1zM275.9 363.2h1v3.3h-1zM279.5 362h1.9v3.3h-1.9zM279.5 369.5h1.9v1.3h-1.9zM279.5 398.9h1.9v3.7h-1.9zM282.4 381h1.9v4h-1.9zM282.4 399.6h1.9v2.1h-1.9zM287 408.3h1.7v1.7h-1.7zM229.5 436h2.1v3.7h-2.1zM235.2 433.2h.8v3h-.8zM251.7 408.3h.8v3.2h-.8zM251.7 414.1h.8v1.9h-.8zM349.5 334h1.2v1.2h-1.2zM349.5 373.4h1v2.8h-1zM351.7 378.5h1.6v3.1h-1.6zM351.7 389.7h1.6v3.2h-1.6zM358.5 408.2h1.7v1.3h-1.7zM361.4 376.6h1.7v2h-1.7zM361.4 379.7h1.7v1.3h-1.7zM361.4 401.6h1.7v2.1h-1.7zM369.1 370h1.5v1.3h-1.5zM369.1 384.2h1.5v3.8h-1.5zM261.2 421h4.9v1.4h-4.9zM260.4 433h4.8v.8h-4.8zM270.3 436h3v1.2h-3zM261.9 440.5h2.3v1.6h-2.3zM270.1 440.5h4.3v1.6h-4.3zM280.5 420.5h3v.8h-3zM283 425h3v.8h-3zM293.8 425h2.5v.8h-2.5zM301.9 425h3.4v.8h-3.4zM284.9 430.5h1.6v2.3h-1.6zM294.3 430.5h2v2.3h-2zM301.6 430.5h4.4v2.3h-4.4zM302.5 440.8h2.4v2.4h-2.4zM299.1 411.5h2.5v1.4h-2.5zM290 414.3h3.7v1.1h-3.7zM298.9 414.3h3.3v1.1h-3.3zM305.6 414.3h2v1.1h-2zM325 416h2.1v2.1h-2.1zM360.2 416h2.1v2.1h-2.1zM363.4 416h2.1v2.1h-2.1zM369.8 416h2.1v2.1h-2.1zM373 416h2.1v2.1h-2.1zM334.6 419.2h2.1v2.1h-2.1zM337.8 419.2h2.1v2.1h-2.1zM331.4 422.4h2.1v2.1h-2.1zM369.8 422.4h2.1v2.1h-2.1zM325 425.6h2.1v2.1h-2.1zM357 425.6h2.1v2.1h-2.1zM344.2 428.8h2.1v2.1h-2.1zM366.6 428.8h2.1v2.1h-2.1zM325 432h2.1v2.1h-2.1zM328.2 432h2.1v2.1h-2.1zM357 432h2.1v2.1h-2.1zM366.6 432h2.1v2.1h-2.1zM357 438.4h2.1v2.1h-2.1zM360.2 438.4h2.1v2.1h-2.1z"/>
<path fill="#cfd0b4" d="M229 384.9h1.4v3.9h-1.4zM229 398.2h1.4v1.8h-1.4zM232 367.8h.9v2h-.9zM240.6 363.2h1.4v4.1h-1.4zM240.6 370.6h1.4v1.8h-1.4zM243.3 366.2h1.6v2.4h-1.6zM243.3 395h1.6v3.1h-1.6zM248.5 364.9h1.8v4h-1.8zM248.5 369.6h1.8v3h-1.8zM251.8 374.9h1v2.4h-1zM251.8 378.3h1v3.9h-1zM259.7 381.5h1.6v4.1h-1.6zM262.5 343h1.5v2.7h-1.5zM262.5 355.2h1.5v2.6h-1.5zM262.5 358.5h1.5v1.8h-1.5zM262.5 361.3h1.5v3.1h-1.5zM262.5 365.2h1.5v3.7h-1.5zM265.2 395.7h1.6v2.4h-1.6zM268 371.2h1.3v2.3h-1.3zM268 382.4h1.3v4h-1.3zM268 408.2h1.3v2.7h-1.3zM270.3 345.4h.8v1.6h-.8zM270.3 347.8h.8v1.3h-.8zM270.3 370.3h.8v1.5h-.8zM270.3 380.1h.8v1.7h-.8zM273.5 394.1h1v1.7h-1zM275.9 382.2h1v2.5h-1zM275.9 393.9h1v1.8h-1zM279.5 387.3h1.9v1.9h-1.9zM279.5 411.1h1.9v1.9h-1.9zM282.4 363.7h1.9v3.5h-1.9zM282.4 393.7h1.9v1.3h-1.9zM287 380.6h1.7v1.4h-1.7zM269.8 351.6h1.8v.8h-1.8zM280.4 351.6h1.9v.8h-1.9zM238.7 355.1h1.9v.8h-1.9zM248.3 355.1h2.7v.8h-2.7zM245.2 356.7h1.9v.8h-1.9zM238.1 360.8h1.8v.8h-1.8zM281.2 360.8h1.2v.8h-1.2zM257.2 362.6h1.7v.8h-1.7zM250 372.3h2.4v.8h-2.4zM252 378.2h1v.8h-1zM229.5 380.2h2.7v.8h-2.7zM244.2 380.2h1.1v.8h-1.1zM229.5 385.4h2v.8h-2zM250.8 385.4h.9v.8h-.9zM247.4 389h1v.8h-1zM260.5 390.3h1.6v1.2h-1.6zM263.3 390.3h2.2v1.2h-2.2zM245.9 392.4h1.9v.8h-1.9zM269.3 393.8h2.8v.8h-2.8zM249.4 403h1.6v.8h-1.6zM232.9 404.9h2v.9h-2zM281.7 409.5h2.5v.9h-2.5zM229.5 422.4h2.1v3.6h-2.1zM233.1 403h1.2v3.7h-1.2zM233.1 411.4h1.2v2h-1.2zM233.1 431.1h1.2v3.8h-1.2zM235.2 410.3h.8v3h-.8zM248.9 406.6h1.5v1.4h-1.5zM291 338h1v1h-1zM294.6 338h1v1h-1zM300 338h1v1h-1zM301.8 338h1v1h-1zM303.6 338h1v1h-1zM305.4 338h1v1h-1zM309 338h1v1h-1zM314.4 338h1v1h-1zM319.8 338h1v1h-1zM321.6 338h1v1h-1zM325.2 338h1v1h-1zM327 338h1v1h-1zM328.8 338h1v1h-1zM330.6 338h1v1h-1zM332.4 338h1v1h-1zM334.2 338h1v1h-1zM337.8 338h1v1h-1zM288.3 341h1v1h-1zM288.3 346.7h1v1h-1zM288.3 350.5h1v1h-1zM288.3 358.1h1v1h-1zM288.3 360h1v1h-1zM288.3 384.7h1v1h-1zM288.3 386.6h1v1h-1zM288.3 392.3h1v1h-1zM288.3 396.1h1v1h-1zM288.3 398h1v1h-1zM288.3 399.9h1v1h-1zM288.3 401.8h1v1h-1zM288.3 403.7h1v1h-1zM343.3 341h1v1h-1zM343.3 346.7h1v1h-1zM343.3 348.6h1v1h-1zM343.3 373.3h1v1h-1zM343.3 382.8h1v1h-1zM343.3 388.5h1v1h-1zM343.3 394.2h1v1h-1zM343.3 405.6h1v1h-1zM343.3 407.5h1v1h-1zM378.5 382.3h6.5v2h-6.5zM349.5 356h1v2.9h-1zM349.5 364.2h1v1.6h-1zM351.7 365.5h1.6v2.4h-1.6zM351.7 368.9h1.6v2h-1.6zM351.7 398.8h1.6v3h-1.6zM358.5 373.2h1.7v3.8h-1.7zM366 377h1.8v2.5h-1.8zM369.1 395.6h1.5v1.4h-1.5zM360 362h7v2.2h-7zM248.5 421h2.3v1.4h-2.3zM266.6 421h3.6v1.4h-3.6zM253.4 431h3v.8h-3zM253.4 433h1v.8h-1zM254.9 433h2.9v.8h-2.9zM269 433h2.1v.8h-2.1zM261.6 436h2.6v1.2h-2.6zM248.5 440.5h4.1v1.6h-4.1zM273.2 449.5h1.8v2.3h-1.8zM252.6 454h1.2v1h-1.2zM254.2 454h1.9v1h-1.9zM263.1 454h2.8v1h-2.8zM288.6 421.9h3.5v1h-3.5zM302.4 421.9h3.6v1h-3.6zM293.8 440.8h4.7v2.4h-4.7zM286.3 445.5h2.8v.8h-2.8zM299.8 445.5h1.7v.8h-1.7zM304.4 445.5h1.6v.8h-1.6zM280.5 452.4h3.5v.8h-3.5zM287.8 452.4h5.4v.8h-5.4zM280.5 455h2.1v.8h-2.1zM304.6 455h1.4v.8h-1.4zM294 411.5h3.9v1.4h-3.9zM315.7 414.3h2.6v1.1h-2.6zM344.2 419.2h2.1v2.1h-2.1zM363.4 419.2h2.1v2.1h-2.1zM369.8 419.2h2.1v2.1h-2.1zM373 419.2h2.1v2.1h-2.1zM328.2 422.4h2.1v2.1h-2.1zM341 422.4h2.1v2.1h-2.1zM344.2 422.4h2.1v2.1h-2.1zM357 422.4h2.1v2.1h-2.1zM328.2 425.6h2.1v2.1h-2.1zM331.4 425.6h2.1v2.1h-2.1zM373 425.6h2.1v2.1h-2.1zM331.4 428.8h2.1v2.1h-2.1zM350.6 428.8h2.1v2.1h-2.1zM373 428.8h2.1v2.1h-2.1zM369.8 432h2.1v2.1h-2.1zM347.4 435.2h2.1v2.1h-2.1zM353.8 435.2h2.1v2.1h-2.1zM360.2 435.2h2.1v2.1h-2.1zM363.4 435.2h2.1v2.1h-2.1zM373 435.2h2.1v2.1h-2.1zM440.1 409h2v1.4h-2zM441.4 421.7h1.9v1.5h-1.9zM438 424.3h1.6v1.5h-1.6zM450 430.5h1.7v.8h-1.7zM446.4 432.4h1v.8h-1zM463.9 428h2.4v.8h-2.4zM458 433.4h2.5v.8h-2.5zM464.9 433.4h2.5v.8h-2.5zM468.7 433.4h1.3v.8h-1.3zM460 437.2h1.8v.8h-1.8zM462.3 440.3h2.1v1.1h-2.1zM459.7 448h2.7v.8h-2.7zM460.4 449.8h1.2v.8h-1.2zM466.3 451.9h2.3v.8h-2.3zM466.4 453.6h1v.8h-1zM457 456.2h1.2v.8h-1.2zM465.3 456.2h1.7v.8h-1.7z"/>
<path fill="#9ea6c0" d="M246.1 362.6h2.6v.8h-2.6zM267.8 362.6h1.8v.8h-1.8zM239.8 365.9h2.7v.8h-2.7zM254.4 368h2.1v1.2h-2.1zM275.4 383.5h1.3v.8h-1.3zM243 385.4h1.3v.8h-1.3zM237.7 387h2.8v1h-2.8zM268.9 387h2v1h-2zM233.6 390.3h1.1v1.2h-1.1zM265.8 393.8h2.6v.8h-2.6zM261.9 395.2h1.4v1h-1.4zM361.3 346h1.1v1.1h-1.1zM365.3 346h1.1v1.1h-1.1zM361.3 350h1.1v1.1h-1.1zM363.3 356h1.1v1.1h-1.1zM359.6 341h1.5v.8h-1.5zM366.3 341h2.6v.8h-2.6zM359.8 342.9h2.4v.8h-2.4zM367.8 342.9h1.2v.8h-1.2zM306.5 420h2.5v10h-2.5zM357 416h2.1v2.1h-2.1zM347.4 419.2h2.1v2.1h-2.1zM350.6 419.2h2.1v2.1h-2.1zM350.6 425.6h2.1v2.1h-2.1zM353.8 425.6h2.1v2.1h-2.1zM325 428.8h2.1v2.1h-2.1zM334.6 428.8h2.1v2.1h-2.1zM337.8 432h2.1v2.1h-2.1zM344.2 432h2.1v2.1h-2.1zM353.8 432h2.1v2.1h-2.1zM325 435.2h2.1v2.1h-2.1zM331.4 435.2h2.1v2.1h-2.1zM369.8 435.2h2.1v2.1h-2.1zM369.8 438.4h2.1v2.1h-2.1zM448.6 411.8h2.1v.9h-2.1zM454.6 413.7h1.7v1.3h-1.7zM445.1 416.4h2v1.6h-2zM452.5 419.4h2.2v1h-2.2zM458.2 419.4h2.3v1h-2.3zM440.3 424.3h2.8v1.5h-2.8zM460.2 426.7h1.5v.8h-1.5zM442.8 430.5h1.5v.8h-1.5zM438 432.4h1.3v.8h-1.3zM439.9 432.4h1.4v.8h-1.4zM438 439.2h1.7v.8h-1.7zM438 441.1h2.4v1h-2.4z"/>
<path fill="#2b3448" d="M288.3 344.8h1v1h-1zM288.3 352.4h1v1h-1zM288.3 354.3h1v1h-1zM288.3 356.2h1v1h-1zM288.3 363.8h1v1h-1zM288.3 365.7h1v1h-1zM288.3 367.6h1v1h-1zM288.3 369.5h1v1h-1zM288.3 371.4h1v1h-1zM288.3 377.1h1v1h-1zM288.3 380.9h1v1h-1zM288.3 388.5h1v1h-1zM288.3 394.2h1v1h-1zM288.3 407.5h1v1h-1zM288.3 411.3h1v1h-1zM343.3 342.9h1v1h-1zM343.3 344.8h1v1h-1zM343.3 350.5h1v1h-1zM343.3 352.4h1v1h-1zM343.3 354.3h1v1h-1zM343.3 356.2h1v1h-1zM343.3 358.1h1v1h-1zM343.3 360h1v1h-1zM343.3 363.8h1v1h-1zM343.3 367.6h1v1h-1zM343.3 371.4h1v1h-1zM343.3 375.2h1v1h-1zM343.3 377.1h1v1h-1zM343.3 379h1v1h-1zM343.3 384.7h1v1h-1zM343.3 386.6h1v1h-1zM343.3 390.4h1v1h-1zM343.3 398h1v1h-1zM343.3 399.9h1v1h-1zM343.3 401.8h1v1h-1zM343.3 403.7h1v1h-1zM343.3 409.4h1v1h-1z"/>
<path fill="#1515d5" d="M367.5 392h2.5v6h-2.5z"/>
<circle cx="300.1" cy="346.3" r="1.3" fill="#f0cf32"/>
<circle cx="308.1" cy="346.3" r="1.3" fill="#9ea6c0"/>
<circle cx="316.0" cy="346.3" r="1.3" fill="#9ea6c0"/>
<circle cx="323.9" cy="346.3" r="1.3" fill="#9ea6c0"/>
<circle cx="331.9" cy="346.3" r="1.3" fill="#9ea6c0"/>
<circle cx="339.8" cy="346.3" r="1.3" fill="#9ea6c0"/>
<circle cx="295.9" cy="350.1" r="1.3" fill="#9ea6c0"/>
<circle cx="303.9" cy="350.1" r="1.3" fill="#9ea6c0"/>
<circle cx="311.8" cy="350.1" r="1.3" fill="#9ea6c0"/>
<circle cx="319.8" cy="350.1" r="1.3" fill="#9ea6c0"/>
<circle cx="327.7" cy="350.1" r="1.3" fill="#9ea6c0"/>
<circle cx="335.7" cy="350.1" r="1.3" fill="#9ea6c0"/>
<circle cx="300.1" cy="353.9" r="1.3" fill="#9ea6c0"/>
<circle cx="308.1" cy="353.9" r="1.3" fill="#f0cf32"/>
<circle cx="316.0" cy="353.9" r="1.3" fill="#f0cf32"/>
<circle cx="323.9" cy="353.9" r="1.3" fill="#9ea6c0"/>
<circle cx="331.9" cy="353.9" r="1.3" fill="#cfd0b4"/>
<circle cx="339.8" cy="353.9" r="1.3" fill="#9ea6c0"/>
<circle cx="295.9" cy="357.7" r="1.3" fill="#9ea6c0"/>
<circle cx="303.9" cy="357.7" r="1.3" fill="#9ea6c0"/>
<circle cx="311.8" cy="357.7" r="1.3" fill="#cfd0b4"/>
<circle cx="319.8" cy="357.7" r="1.3" fill="#9ea6c0"/>
<circle cx="327.7" cy="357.7" r="1.3" fill="#f0cf32"/>
<circle cx="335.7" cy="357.7" r="1.3" fill="#9ea6c0"/>
<circle cx="300.1" cy="361.5" r="1.3" fill="#9ea6c0"/>
<circle cx="308.1" cy="361.5" r="1.3" fill="#f0cf32"/>
<circle cx="316.0" cy="361.5" r="1.3" fill="#cfd0b4"/>
<circle cx="323.9" cy="361.5" r="1.3" fill="#9ea6c0"/>
<circle cx="331.9" cy="361.5" r="1.3" fill="#cfd0b4"/>
<circle cx="339.8" cy="361.5" r="1.3" fill="#9ea6c0"/>
<circle cx="295.9" cy="365.3" r="1.3" fill="#9ea6c0"/>
<circle cx="303.9" cy="365.3" r="1.3" fill="#cfd0b4"/>
<circle cx="311.8" cy="365.3" r="1.3" fill="#cfd0b4"/>
<circle cx="319.8" cy="365.3" r="1.3" fill="#f0cf32"/>
<circle cx="327.7" cy="365.3" r="1.3" fill="#f0cf32"/>
<circle cx="335.7" cy="365.3" r="1.3" fill="#f0cf32"/>
<circle cx="300.1" cy="369.1" r="1.3" fill="#9ea6c0"/>
<circle cx="308.1" cy="369.1" r="1.3" fill="#f0cf32"/>
<circle cx="316.0" cy="369.1" r="1.3" fill="#9ea6c0"/>
<circle cx="323.9" cy="369.1" r="1.3" fill="#f0cf32"/>
<circle cx="331.9" cy="369.1" r="1.3" fill="#9ea6c0"/>
<circle cx="339.8" cy="369.1" r="1.3" fill="#9ea6c0"/>
<circle cx="295.9" cy="372.9" r="1.3" fill="#9ea6c0"/>
<circle cx="303.9" cy="372.9" r="1.3" fill="#f0cf32"/>
<circle cx="311.8" cy="372.9" r="1.3" fill="#9ea6c0"/>
<circle cx="319.8" cy="372.9" r="1.3" fill="#9ea6c0"/>
<circle cx="327.7" cy="372.9" r="1.3" fill="#cfd0b4"/>
<circle cx="335.7" cy="372.9" r="1.3" fill="#f0cf32"/>
<circle cx="300.1" cy="376.7" r="1.3" fill="#f0cf32"/>
<circle cx="308.1" cy="376.7" r="1.3" fill="#f0cf32"/>
<circle cx="316.0" cy="376.7" r="1.3" fill="#f0cf32"/>
<circle cx="323.9" cy="376.7" r="1.3" fill="#9ea6c0"/>
<circle cx="331.9" cy="376.7" r="1.3" fill="#cfd0b4"/>
<circle cx="339.8" cy="376.7" r="1.3" fill="#9ea6c0"/>
<circle cx="295.9" cy="380.5" r="1.3" fill="#f0cf32"/>
<circle cx="303.9" cy="380.5" r="1.3" fill="#f0cf32"/>
<circle cx="311.8" cy="380.5" r="1.3" fill="#9ea6c0"/>
<circle cx="319.8" cy="380.5" r="1.3" fill="#9ea6c0"/>
<circle cx="327.7" cy="380.5" r="1.3" fill="#cfd0b4"/>
<circle cx="335.7" cy="380.5" r="1.3" fill="#f0cf32"/>
<circle cx="300.1" cy="384.3" r="1.3" fill="#f0cf32"/>
<circle cx="308.1" cy="384.3" r="1.3" fill="#f0cf32"/>
<circle cx="316.0" cy="384.3" r="1.3" fill="#9ea6c0"/>
<circle cx="323.9" cy="384.3" r="1.3" fill="#9ea6c0"/>
<circle cx="331.9" cy="384.3" r="1.3" fill="#f0cf32"/>
<circle cx="339.8" cy="384.3" r="1.3" fill="#9ea6c0"/>
<circle cx="295.9" cy="388.1" r="1.3" fill="#9ea6c0"/>
<circle cx="303.9" cy="388.1" r="1.3" fill="#f0cf32"/>
<circle cx="311.8" cy="388.1" r="1.3" fill="#f0cf32"/>
<circle cx="319.8" cy="388.1" r="1.3" fill="#cfd0b4"/>
<circle cx="327.7" cy="388.1" r="1.3" fill="#cfd0b4"/>
<circle cx="335.7" cy="388.1" r="1.3" fill="#9ea6c0"/>
<circle cx="300.1" cy="391.9" r="1.3" fill="#9ea6c0"/>
<circle cx="308.1" cy="391.9" r="1.3" fill="#9ea6c0"/>
<circle cx="316.0" cy="391.9" r="1.3" fill="#f0cf32"/>
<circle cx="323.9" cy="391.9" r="1.3" fill="#f0cf32"/>
<circle cx="331.9" cy="391.9" r="1.3" fill="#9ea6c0"/>
<circle cx="339.8" cy="391.9" r="1.3" fill="#f0cf32"/>
<circle cx="295.9" cy="395.7" r="1.3" fill="#9ea6c0"/>
<circle cx="303.9" cy="395.7" r="1.3" fill="#f0cf32"/>
<circle cx="311.8" cy="395.7" r="1.3" fill="#cfd0b4"/>
<circle cx="319.8" cy="395.7" r="1.3" fill="#cfd0b4"/>
<circle cx="327.7" cy="395.7" r="1.3" fill="#f0cf32"/>
<circle cx="335.7" cy="395.7" r="1.3" fill="#9ea6c0"/>
<circle cx="300.1" cy="399.5" r="1.3" fill="#f0cf32"/>
<circle cx="308.1" cy="399.5" r="1.3" fill="#f0cf32"/>
<circle cx="316.0" cy="399.5" r="1.3" fill="#f0cf32"/>
<circle cx="323.9" cy="399.5" r="1.3" fill="#f0cf32"/>
<circle cx="331.9" cy="399.5" r="1.3" fill="#9ea6c0"/>
<circle cx="339.8" cy="399.5" r="1.3" fill="#9ea6c0"/>
<circle cx="295.9" cy="403.3" r="1.3" fill="#9ea6c0"/>
<circle cx="303.9" cy="403.3" r="1.3" fill="#9ea6c0"/>
<circle cx="311.8" cy="403.3" r="1.3" fill="#9ea6c0"/>
<circle cx="319.8" cy="403.3" r="1.3" fill="#9ea6c0"/>
<circle cx="327.7" cy="403.3" r="1.3" fill="#f0cf32"/>
<circle cx="335.7" cy="403.3" r="1.3" fill="#9ea6c0"/>
<circle cx="300.1" cy="407.1" r="1.3" fill="#9ea6c0"/>
<circle cx="308.1" cy="407.1" r="1.3" fill="#9ea6c0"/>
<circle cx="316.0" cy="407.1" r="1.3" fill="#9ea6c0"/>
<circle cx="323.9" cy="407.1" r="1.3" fill="#9ea6c0"/>
<circle cx="331.9" cy="407.1" r="1.3" fill="#9ea6c0"/>
<circle cx="339.8" cy="407.1" r="1.3" fill="#9ea6c0"/>
<circle cx="331.5" cy="377.4" r="1.8" fill="#1515d5"/>
<circle cx="299.2" cy="384.3" r="1.8" fill="#1515d5"/>
<circle cx="334.8" cy="389.0" r="1.8" fill="#1515d5"/>
<circle cx="327.4" cy="396.4" r="1.8" fill="#1515d5"/>
<circle cx="312.5" cy="403.5" r="1.8" fill="#1515d5"/>
<circle cx="320.0" cy="403.5" r="1.8" fill="#1515d5"/>
<rect x="375.2" y="325.8" width="12.5" height="57.5" fill="none" stroke="#f0cf32" stroke-width="1.5" stroke-dasharray="1.6 0.7"/>
<circle cx="431.0" cy="458.5" r="1.0" fill="#cfd0b4"/>
<circle cx="237.0" cy="338.8" r="6.3" fill="#12a3a3"/>
<circle cx="237.0" cy="449.0" r="6.3" fill="#12a3a3"/>
<circle cx="364.7" cy="332.6" r="6.3" fill="#12a3a3"/>
<path d="M506.0 328.3 L515.0 328.3 L517.7 322.7 L665.8 322.7 L665.8 331.8 L711.4 331.8 L711.4 334.5 L732.7 334.5 L732.7 329.2 L752.0 329.2 L752.0 456.8 L700.0 456.8 L700.0 459.3 L669.0 459.3 L669.0 461.0 L510.4 461.0 L510.4 444.2 L506.0 444.2Z" fill="#2b3448" stroke="#2b3448" stroke-width="2" stroke-linejoin="round"/>
<path fill="#f0cf32" d="M626 395.2h1.1v3.9h-1.1zM627.5 395.2h1.1v3.9h-1.1zM629.1 395.2h1.1v3.9h-1.1zM630.6 395.2h1.1v3.9h-1.1zM632.2 395.2h1.1v3.9h-1.1zM635.3 395.2h1.1v3.9h-1.1zM636.8 395.2h1.1v3.9h-1.1zM638.4 395.2h1.1v3.9h-1.1zM639.9 395.2h1.1v3.9h-1.1zM643 395.2h1.1v3.9h-1.1zM644.6 395.2h1.1v3.9h-1.1zM647.7 395.2h1.1v3.9h-1.1zM649.2 395.2h1.1v3.9h-1.1zM650.8 395.2h1.1v3.9h-1.1zM652.3 395.2h1.1v3.9h-1.1zM653.9 395.2h1.1v3.9h-1.1zM655.4 395.2h1.1v3.9h-1.1zM657 395.2h1.1v3.9h-1.1zM658.5 395.2h1.1v3.9h-1.1zM660.1 395.2h1.1v3.9h-1.1zM661.6 395.2h1.1v3.9h-1.1zM663.2 395.2h1.1v3.9h-1.1zM664.7 395.2h1.1v3.9h-1.1zM666.3 395.2h1.1v3.9h-1.1zM626 403.2h1.1v4.2h-1.1zM627.5 403.2h1.1v4.2h-1.1zM629.1 403.2h1.1v4.2h-1.1zM630.6 403.2h1.1v4.2h-1.1zM635.3 403.2h1.1v4.2h-1.1zM639.9 403.2h1.1v4.2h-1.1zM641.5 403.2h1.1v4.2h-1.1zM644.6 403.2h1.1v4.2h-1.1zM646.1 403.2h1.1v4.2h-1.1zM649.2 403.2h1.1v4.2h-1.1zM652.3 403.2h1.1v4.2h-1.1zM653.9 403.2h1.1v4.2h-1.1zM655.4 403.2h1.1v4.2h-1.1zM657 403.2h1.1v4.2h-1.1zM658.5 403.2h1.1v4.2h-1.1zM660.1 403.2h1.1v4.2h-1.1zM661.6 403.2h1.1v4.2h-1.1zM664.7 403.2h1.1v4.2h-1.1zM666.3 403.2h1.1v4.2h-1.1zM651 376.8h1.6v.8h-1.6zM655.7 376.8h1v.8h-1zM656.1 383.1h1.5v.8h-1.5zM660.2 389.3h.8v.8h-.8zM660.5 390.9h.8v.8h-.8zM695 384h2v.8h-2zM700.6 384h1.2v.8h-1.2zM686 385.9h1.9v.8h-1.9zM689.2 385.9h1.8v.8h-1.8zM705 387.4h1.8v.8h-1.8zM701.4 390.2h1.5v.8h-1.5zM686 392.9h1v.8h-1zM695.9 392.9h1v.8h-1zM701.2 394.1h1.9v.8h-1.9zM578 435.4h1.5v.8h-1.5zM577.9 438.2h.9v.8h-.9zM565 439.8h1v.8h-1zM579.7 441.3h1v.8h-1zM579.9 442.9h1.3v.8h-1.3zM570.9 444.3h.7v.8h-.7zM618 413.1h1.6v.8h-1.6zM620.9 413.1h1.1v.8h-1.1zM608.5 415.5h1.3v.8h-1.3zM612.7 415.5h2v.8h-2zM601 418.3h1.6v.8h-1.6zM607.8 418.3h1.1v.8h-1.1zM611.1 418.3h1.4v.8h-1.4zM615 419.5h1.7v.8h-1.7zM617.7 419.5h1v.8h-1zM612.1 420.8h1.2v.8h-1.2zM601 424.4h.9v.8h-.9zM603.1 424.4h1.2v.8h-1.2zM616.4 424.4h2v.8h-2zM609.5 430h1.3v.8h-1.3zM604.2 431.3h1.1v.8h-1.1zM606.6 432.5h1.7v.8h-1.7zM614.4 432.5h.7v.8h-.7zM620.3 435.9h1.7v.8h-1.7zM603.2 439.1h1.4v.8h-1.4zM615.2 439.1h.9v.8h-.9zM612.5 442.1h1.4v.8h-1.4zM603.9 444.7h1.2v.8h-1.2z"/>
<path fill="#bfae4a" d="M633.7 395.2h1.1v3.9h-1.1zM641.5 395.2h1.1v3.9h-1.1zM646.1 395.2h1.1v3.9h-1.1zM632.2 403.2h1.1v4.2h-1.1zM633.7 403.2h1.1v4.2h-1.1zM636.8 403.2h1.1v4.2h-1.1zM638.4 403.2h1.1v4.2h-1.1zM643 403.2h1.1v4.2h-1.1zM647.7 403.2h1.1v4.2h-1.1zM650.8 403.2h1.1v4.2h-1.1zM663.2 403.2h1.1v4.2h-1.1z"/>
<path fill="#f3c62a" d="M692.5 334.5h3v3h-3zM697.3 334.5h3v3h-3z"/>
<path fill="#8e97b0" d="M633 330.5h1.3v1.3h-1.3zM649 326h1.3v1.3h-1.3zM655 327h1.3v1.3h-1.3zM647 332h1.3v1.3h-1.3zM627 364h1.3v1.3h-1.3zM682 362h1.3v1.3h-1.3zM710 344h1.3v1.3h-1.3zM747 351h1.3v1.3h-1.3zM747 357.5h1.3v1.3h-1.3zM537 416.5h1.3v1.3h-1.3zM576 417h1.3v1.3h-1.3zM584 424h1.3v1.3h-1.3zM514.5 452h1.3v1.3h-1.3zM519.5 455h1.3v1.3h-1.3zM696 456h1.3v1.3h-1.3zM633 420h1.3v1.3h-1.3zM643 432h1.3v1.3h-1.3zM635 437h1.3v1.3h-1.3zM668 434h1.3v1.3h-1.3zM675 435h1.3v1.3h-1.3zM650 427.5h1.3v1.3h-1.3zM712 433h1.3v1.3h-1.3zM682 402h1.3v1.3h-1.3zM700 400h1.3v1.3h-1.3z"/>
<path fill="#cfd0b4" d="M651 375h1.4v.8h-1.4zM651 386.4h1.6v.8h-1.6zM651 387.5h1.5v.8h-1.5zM655.7 387.5h1.8v.8h-1.8zM658.8 387.5h1.1v.8h-1.1zM660.7 387.5h1.3v.8h-1.3zM692.3 385.9h1.7v.8h-1.7zM686 387.4h2.1v.8h-2.1zM699.6 387.4h1.3v.8h-1.3zM689.5 388.9h2v.8h-2zM694.2 388.9h2.1v.8h-2.1zM700.7 388.9h1.2v.8h-1.2zM698.4 390.2h1.8v.8h-1.8zM686 391.3h1.1v.8h-1.1zM695.2 391.3h1.6v.8h-1.6zM690.8 397.1h1.4v.8h-1.4zM702.1 397.1h1.2v.8h-1.2zM578.8 432h1.6v.8h-1.6zM581 432h1.3v.8h-1.3zM571 433.9h1.2v.8h-1.2zM584.1 435.4h.9v.8h-.9zM568.1 437h.8v.8h-.8zM573.8 438.2h1.2v.8h-1.2zM566.5 442.9h1.5v.8h-1.5zM565 446.1h.8v.8h-.8zM618.4 410h2v.8h-2zM615.9 415.5h1.1v.8h-1.1zM608.3 420.8h.8v.8h-.8zM612.3 424.4h1.2v.8h-1.2zM602.6 438h1.1v.8h-1.1zM607.7 440.3h1.9v.8h-1.9zM604.8 446.3h1.8v.8h-1.8zM694.2 395h.7v.8h-.7zM707.4 398.4h.8v.8h-.8zM712.2 398.4h2.1v.8h-2.1zM697.4 400.5h1.8v.8h-1.8zM697.1 401.7h1.5v.8h-1.5zM713.5 401.7h1.2v.8h-1.2zM690 407.6h1.5v.8h-1.5zM704 407.6h1.4v.8h-1.4zM704.9 410.2h.8v.8h-.8z"/>
<path fill="#9ea6c0" d="M710.8 395h1.3v.8h-1.3zM692.2 396.5h2.1v.8h-2.1zM698.6 396.5h1.5v.8h-1.5zM706.6 401.7h1.1v.8h-1.1zM691.6 406.1h.9v.8h-.9zM699.1 407.6h1.9v.8h-1.9zM713.2 407.6h1.2v.8h-1.2zM712.8 409h1.5v.8h-1.5zM712.6 410.2h1.2v.8h-1.2zM633 331h1.8v4h-1.8z"/>
<circle cx="574.0" cy="333.8" r="1.7" fill="#f3c62a"/>
<circle cx="579.0" cy="333.8" r="1.7" fill="#f3c62a"/>
<circle cx="593.5" cy="333.8" r="1.7" fill="#f3c62a"/>
<circle cx="585.7" cy="333.0" r="2.0" fill="#2b3448" stroke="#8fb3c4" stroke-width="1.3"/>
<circle cx="593.5" cy="339.0" r="1.5" fill="#9ea6c0"/>
<circle cx="532.0" cy="354.0" r="2.0" fill="#2b3448" stroke="#d8d038" stroke-width="1.3"/>
<circle cx="538.5" cy="352.0" r="2.0" fill="#2b3448" stroke="#8fb3c4" stroke-width="1.3"/>
<circle cx="545.0" cy="354.5" r="2.0" fill="#2b3448" stroke="#d8d038" stroke-width="1.3"/>
<circle cx="557.0" cy="354.5" r="2.0" fill="#2b3448" stroke="#d8d038" stroke-width="1.3"/>
<circle cx="563.5" cy="352.0" r="2.0" fill="#2b3448" stroke="#d8d038" stroke-width="1.3"/>
<circle cx="551.0" cy="352.0" r="2.3" fill="#1515d5"/>
<circle cx="582.7" cy="363.0" r="2.0" fill="#2b3448" stroke="#9fb0d8" stroke-width="1.3"/>
<circle cx="582.7" cy="369.0" r="2.3" fill="#1515d5"/>
<circle cx="582.7" cy="374.5" r="2.0" fill="#2b3448" stroke="#d8d038" stroke-width="1.3"/>
<circle cx="582.7" cy="380.0" r="2.0" fill="#2b3448" stroke="#d8d038" stroke-width="1.3"/>
<circle cx="582.7" cy="385.0" r="2.0" fill="#2b3448" stroke="#d8d038" stroke-width="1.3"/>
<circle cx="578.0" cy="387.0" r="2.0" fill="#2b3448" stroke="#d8d038" stroke-width="1.3"/>
<circle cx="582.7" cy="390.0" r="2.0" fill="#2b3448" stroke="#d8d038" stroke-width="1.3"/>
<circle cx="574.0" cy="393.5" r="1.7" fill="#f3c62a"/>
<circle cx="507.5" cy="349.0" r="2.0" fill="#2b3448" stroke="#8fb3c4" stroke-width="1.3"/>
<circle cx="507.5" cy="397.5" r="2.0" fill="#2b3448" stroke="#8fb3c4" stroke-width="1.3"/>
<circle cx="566.0" cy="399.5" r="2.0" fill="#2b3448" stroke="#8fb3c4" stroke-width="1.3"/>
<circle cx="586.0" cy="397.5" r="2.0" fill="#2b3448" stroke="#8fb3c4" stroke-width="1.3"/>
<rect x="630.4" y="395" width="4.6" height="4.4" fill="#1515d5"/><rect x="660" y="403" width="4.4" height="4.8" fill="#1515d5"/>
<circle cx="713.0" cy="438.0" r="1.5" fill="#9ea6c0"/>
<circle cx="713.0" cy="443.0" r="1.7" fill="#f3c62a"/>
<circle cx="713.0" cy="448.0" r="1.7" fill="#f3c62a"/>
<circle cx="718.0" cy="438.0" r="1.5" fill="#9ea6c0"/>
<circle cx="718.0" cy="443.0" r="1.7" fill="#f3c62a"/>
<circle cx="718.0" cy="448.0" r="1.7" fill="#f3c62a"/>
<circle cx="723.0" cy="438.0" r="1.5" fill="#9ea6c0"/>
<circle cx="723.0" cy="443.0" r="1.7" fill="#f3c62a"/>
<circle cx="723.0" cy="448.0" r="1.7" fill="#f3c62a"/>
<circle cx="728.0" cy="452.5" r="1.7" fill="#f3c62a"/>
<circle cx="730.0" cy="440.5" r="1.5" fill="#9ea6c0"/>
<circle cx="655.0" cy="442.0" r="1.6" fill="#f3c62a"/>
<circle cx="660.0" cy="440.0" r="1.6" fill="#f3c62a"/>
<circle cx="659.0" cy="450.0" r="1.6" fill="#f3c62a"/>
<circle cx="676.0" cy="446.5" r="1.6" fill="#f3c62a"/>
<circle cx="681.0" cy="446.5" r="1.6" fill="#f3c62a"/>
<circle cx="739.5" cy="430.0" r="1.6" fill="#f3c62a"/>
<circle cx="747.0" cy="416.0" r="1.6" fill="#f3c62a"/>
<circle cx="743.0" cy="421.5" r="1.3" fill="#9ea6c0"/>
<circle cx="652.0" cy="447.0" r="1.3" fill="#9ea6c0"/>
<circle cx="615.3" cy="332.0" r="5.7" fill="#12a3a3"/>
<circle cx="743.6" cy="337.9" r="5.5" fill="#12a3a3"/>
<circle cx="743.6" cy="448.7" r="5.5" fill="#12a3a3"/>
</g>
<path d="M559.5 177.5v12.5l3-2.8l2.4 5.2l2-.9l-2.4-5.1h4.2z" fill="#fff" stroke="#333" stroke-width="0.7"/>
</svg>
</body></html>
